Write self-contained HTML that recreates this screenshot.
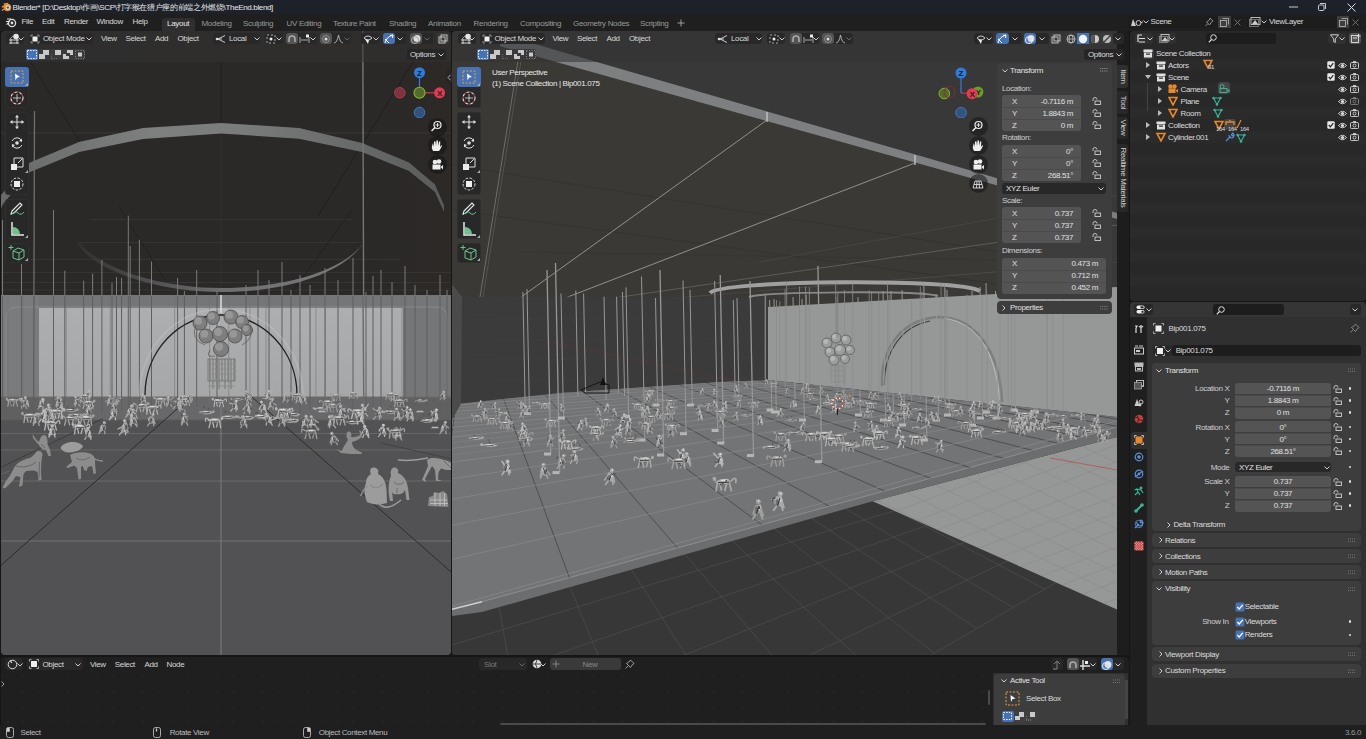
<!DOCTYPE html><html><head><meta charset="utf-8"><style>
*{margin:0;padding:0;box-sizing:border-box}
html,body{width:1366px;height:739px;overflow:hidden;background:#161616;font-family:"Liberation Sans",sans-serif;font-size:11px;color:#d6d6d6}
.a{position:absolute}
.t{position:absolute;white-space:nowrap;line-height:13px}
svg{position:absolute;left:0;top:0}
</style></head><body><div class="a" style="left:0px;top:0px;width:1366px;height:14px;background:#1d212a;border-radius:0px;"></div><svg class="a" style="left:1px;top:2px" width="11" height="10" viewBox="0 0 11 10"><circle cx="6.5" cy="5.5" r="3.8" fill="#f08a1d"/><path d="M1,5 L5,4 L3.5,2 L7,1.5 Z M0.8,8.5 L4,6.5" stroke="#f08a1d" stroke-width="1.3" fill="#f08a1d"/><circle cx="6.8" cy="5.5" r="2.2" fill="#f4f4f4"/><circle cx="6.8" cy="5.5" r="1.3" fill="#2c5f9e"/></svg><div class="t" style="left:12.5px;top:0.7000000000000002px;font-size:8px;color:#e8e8e8;letter-spacing:-0.35px;">Blender* [D:\Desktop\作画\SCP\打字猴在猎户座的前端之外燃烧\TheEnd.blend]</div><svg class="a" style="left:1289px;top:6px" width="9" height="2" viewBox="0 0 9 2"><path d="M0,1 L9,1" stroke="#ddd" stroke-width="0.9"/></svg><svg class="a" style="left:1318px;top:3px" width="8" height="8" viewBox="0 0 8 8"><rect x="0.5" y="2" width="5.5" height="5.5" rx="1" fill="none" stroke="#ddd" stroke-width="0.9"/><path d="M2,0.5 L7.5,0.5 L7.5,6" fill="none" stroke="#ddd" stroke-width="0.9"/></svg><svg class="a" style="left:1347px;top:2.5px" width="9" height="9" viewBox="0 0 9 9"><path d="M0.5,0.5 L8.5,8.5 M8.5,0.5 L0.5,8.5" stroke="#ddd" stroke-width="1"/></svg><div class="a" style="left:0px;top:14px;width:1366px;height:17px;background:#1f1f1f;border-radius:0px;"></div><svg class="a" style="left:5px;top:16px" width="12" height="12" viewBox="0 0 12 12"><circle cx="7" cy="7" r="3.6" fill="none" stroke="#ddd" stroke-width="1.3"/><circle cx="7" cy="7" r="1.4" fill="#ddd"/><path d="M1,5.5 L5,5.5 M2,3 L6,3 M1.5,8.5 L4,6.8" stroke="#ddd" stroke-width="1.2"/></svg><div class="t" style="left:21.5px;top:15.3px;font-size:8px;color:#dadada;letter-spacing:-0.35px;">File</div><div class="t" style="left:42px;top:15.3px;font-size:8px;color:#dadada;letter-spacing:-0.35px;">Edit</div><div class="t" style="left:64px;top:15.3px;font-size:8px;color:#dadada;letter-spacing:-0.35px;">Render</div><div class="t" style="left:96.5px;top:15.3px;font-size:8px;color:#dadada;letter-spacing:-0.35px;">Window</div><div class="t" style="left:132.5px;top:15.3px;font-size:8px;color:#dadada;letter-spacing:-0.35px;">Help</div><div class="a" style="left:162px;top:17.7px;width:33px;height:13.3px;background:#2f2f2f;border-radius:3px;border-radius:3px 3px 0 0"></div><div class="t" style="left:167px;top:17.0px;font-size:8px;color:#e6e6e6;letter-spacing:-0.3px;">Layout</div><div class="t" style="left:201.5px;top:17.0px;font-size:8px;color:#999;letter-spacing:-0.3px;">Modeling</div><div class="t" style="left:243px;top:17.0px;font-size:8px;color:#999;letter-spacing:-0.3px;">Sculpting</div><div class="t" style="left:286.5px;top:17.0px;font-size:8px;color:#999;letter-spacing:-0.3px;">UV Editing</div><div class="t" style="left:333px;top:17.0px;font-size:8px;color:#999;letter-spacing:-0.3px;">Texture Paint</div><div class="t" style="left:389px;top:17.0px;font-size:8px;color:#999;letter-spacing:-0.3px;">Shading</div><div class="t" style="left:428px;top:17.0px;font-size:8px;color:#999;letter-spacing:-0.3px;">Animation</div><div class="t" style="left:473.5px;top:17.0px;font-size:8px;color:#999;letter-spacing:-0.3px;">Rendering</div><div class="t" style="left:520px;top:17.0px;font-size:8px;color:#999;letter-spacing:-0.3px;">Compositing</div><div class="t" style="left:573px;top:17.0px;font-size:8px;color:#999;letter-spacing:-0.3px;">Geometry Nodes</div><div class="t" style="left:640px;top:17.0px;font-size:8px;color:#999;letter-spacing:-0.3px;">Scripting</div><svg class="a" style="left:677px;top:19px" width="8" height="8" viewBox="0 0 8 8"><path d="M4,0.5 L4,7.5 M0.5,4 L7.5,4" stroke="#aaa" stroke-width="0.9"/></svg><div class="a" style="left:1128px;top:16px;width:114px;height:11.5px;background:#1d1d1d;border-radius:3px;"></div><svg class="a" style="left:1130px;top:17px" width="14" height="10" viewBox="0 0 14 10"><path d="M1,9 L3,2 L6,9 Z" fill="#ccc"/><circle cx="8.5" cy="6" r="2.5" fill="none" stroke="#ccc" stroke-width="1"/><path d="M11,6 L13,4.5" stroke="#ccc"/></svg><svg class="a" style="left:1142.5px;top:20px" width="6" height="4" viewBox="0 0 6 4"><path d="M0.5,0.5 L3,3 L5.5,0.5" fill="none" stroke="#cfcfcf" stroke-width="1"/></svg><div class="t" style="left:1150.5px;top:15.0px;font-size:8px;color:#dadada;letter-spacing:-0.35px;">Scene</div><svg class="a" style="left:1205px;top:17px" width="9" height="10" viewBox="0 0 9 10"><path d="M5,1 L8,4 L6.5,5 L4.5,8 L1.5,5 L4.5,3 Z M3,6.5 L0.5,9" fill="none" stroke="#aaa" stroke-width="0.8"/></svg><div class="a" style="left:1218.4px;top:16px;width:12.4px;height:11.5px;background:#3e3e3e;border-radius:0px;"></div><svg class="a" style="left:1220px;top:17.5px" width="10" height="9" viewBox="0 0 10 9"><rect x="0.5" y="2.5" width="6" height="6" fill="none" stroke="#bbb" stroke-width="0.8"/><path d="M2.5,0.5 L8.5,0.5 L8.5,6.5" fill="none" stroke="#bbb" stroke-width="0.8"/></svg><svg class="a" style="left:1233.5px;top:18.5px" width="7" height="7" viewBox="0 0 7 7"><path d="M0.5,0.5 L6.5,6.5 M6.5,0.5 L0.5,6.5" stroke="#777" stroke-width="0.9"/></svg><div class="a" style="left:1245.8px;top:16px;width:115.7px;height:11.5px;background:#1d1d1d;border-radius:3px;"></div><svg class="a" style="left:1249px;top:17px" width="13" height="10" viewBox="0 0 13 10"><rect x="2" y="0.5" width="9" height="7" fill="none" stroke="#ccc" stroke-width="0.9"/><path d="M3,7 L6,3 L9,7 Z" fill="#ccc"/><rect x="0.5" y="2.5" width="9" height="7" fill="none" stroke="#999" stroke-width="0.7"/></svg><svg class="a" style="left:1261px;top:20px" width="6" height="4" viewBox="0 0 6 4"><path d="M0.5,0.5 L3,3 L5.5,0.5" fill="none" stroke="#cfcfcf" stroke-width="1"/></svg><div class="t" style="left:1269px;top:15.0px;font-size:8px;color:#dadada;letter-spacing:-0.35px;">ViewLayer</div><div class="a" style="left:1337px;top:16px;width:12.4px;height:11.5px;background:#3e3e3e;border-radius:0px;"></div><svg class="a" style="left:1338.5px;top:17.5px" width="10" height="9" viewBox="0 0 10 9"><rect x="0.5" y="2.5" width="6" height="6" fill="none" stroke="#bbb" stroke-width="0.8"/><path d="M2.5,0.5 L8.5,0.5 L8.5,6.5" fill="none" stroke="#bbb" stroke-width="0.8"/></svg><svg class="a" style="left:1352px;top:18.5px" width="7" height="7" viewBox="0 0 7 7"><path d="M0.5,0.5 L6.5,6.5 M6.5,0.5 L0.5,6.5" stroke="#777" stroke-width="0.9"/></svg><div class="a" style="left:1px;top:31px;width:450px;height:624px;border-radius:4px;overflow:hidden"><svg width="450" height="624" viewBox="1 31 450 624"><defs>
<symbol id="base" viewBox="0 0 10 4"><path d="M1,1 L9,1 L10,3 L0,3 Z" fill="#b8b8b8"/></symbol>
</defs><defs><linearGradient id="lvbg" x1="0" x2="1" y1="0" y2="0"><stop offset="0" stop-color="#2a2928"/><stop offset="0.6" stop-color="#2a2927"/><stop offset="1" stop-color="#2c2927"/></linearGradient><linearGradient id="ring1" x1="0" x2="1"><stop offset="0" stop-color="#676969"/><stop offset="0.35" stop-color="#7e8080"/><stop offset="0.55" stop-color="#7a7c7c"/><stop offset="1" stop-color="#5a5c5c"/></linearGradient><linearGradient id="ring2" x1="0" x2="1"><stop offset="0" stop-color="#303030"/><stop offset="0.5" stop-color="#6e6e6e"/><stop offset="1" stop-color="#7a7a7a"/></linearGradient><linearGradient id="panel" x1="0" x2="0" y1="0" y2="1"><stop offset="0" stop-color="#adaeaf"/><stop offset="1" stop-color="#a6a7a8"/></linearGradient></defs><rect x="0" y="0" width="460" height="700" fill="url(#lvbg)"/><line x1="0" y1="133" x2="452" y2="133" stroke="#3d3c3a" stroke-width="0.8"/><line x1="90" y1="219.4" x2="352" y2="219.4" stroke="#393836" stroke-width="0.8"/><line x1="80" y1="242.4" x2="362" y2="242.4" stroke="#393836" stroke-width="0.8"/><line x1="30" y1="259.3" x2="400" y2="259.3" stroke="#393836" stroke-width="0.8"/><line x1="0" y1="272.4" x2="452" y2="272.4" stroke="#393836" stroke-width="0.8"/><line x1="0" y1="282.5" x2="452" y2="282.5" stroke="#393836" stroke-width="0.8"/><line x1="0" y1="290" x2="452" y2="290" stroke="#393836" stroke-width="0.8"/><line x1="28" y1="58" x2="80" y2="142" stroke="#1d1d1c" stroke-width="0.8"/><line x1="119" y1="206.7" x2="165" y2="280" stroke="#1e1e1d" stroke-width="0.7"/><line x1="418" y1="54" x2="318" y2="216" stroke="#1c1c1b" stroke-width="0.8"/><line x1="352" y1="210" x2="290" y2="295" stroke="#1e1e1d" stroke-width="0.7"/><line x1="221" y1="62" x2="221" y2="123" stroke="#1e1e1d" stroke-width="0.8"/><line x1="221" y1="133" x2="221" y2="288" stroke="#353432" stroke-width="0.7"/><polygon points="-5,215 0,196 30,162.5 79,142 143,128 221,123 299,128 362,143 409,162.4 435,184.4 444,205.5 444,211.7 435,192 409,171 362,152 299,138.7 221,133.4 143,139 79,152 30,172 3,204 -5,222" fill="url(#ring1)"/><path d="M76.5,238.5 C95,268 160,288 221,288 C290,288 350,268 366,239 L364,242 C345,272 290,292 221,292 C160,292 95,272 78,244 Z" fill="url(#ring2)"/><line x1="2.5" y1="220" x2="2.5" y2="420" stroke="#7b7b7b" stroke-width="1"/><line x1="21.5" y1="264" x2="21.5" y2="420" stroke="#7b7b7b" stroke-width="1"/><line x1="53.5" y1="210" x2="53.5" y2="420" stroke="#7b7b7b" stroke-width="1"/><line x1="64.8" y1="270.7" x2="64.8" y2="420" stroke="#7b7b7b" stroke-width="1"/><line x1="83.7" y1="280.6" x2="83.7" y2="420" stroke="#7b7b7b" stroke-width="1"/><line x1="92.6" y1="273.6" x2="92.6" y2="420" stroke="#7b7b7b" stroke-width="1"/><line x1="101.9" y1="260" x2="101.9" y2="420" stroke="#7b7b7b" stroke-width="1"/><line x1="112" y1="282.7" x2="112" y2="420" stroke="#7b7b7b" stroke-width="1"/><line x1="116.5" y1="277" x2="116.5" y2="420" stroke="#7b7b7b" stroke-width="1"/><line x1="121.6" y1="278" x2="121.6" y2="420" stroke="#7b7b7b" stroke-width="1"/><line x1="128.3" y1="215.7" x2="128.3" y2="420" stroke="#7b7b7b" stroke-width="1"/><line x1="130.2" y1="246" x2="130.2" y2="420" stroke="#7b7b7b" stroke-width="1"/><line x1="139.4" y1="239.7" x2="139.4" y2="420" stroke="#7b7b7b" stroke-width="1"/><line x1="151.5" y1="261.5" x2="151.5" y2="420" stroke="#7b7b7b" stroke-width="1"/><line x1="177.6" y1="278" x2="177.6" y2="420" stroke="#7b7b7b" stroke-width="1"/><line x1="184.4" y1="291" x2="184.4" y2="420" stroke="#7b7b7b" stroke-width="1"/><line x1="196.7" y1="270" x2="196.7" y2="420" stroke="#7b7b7b" stroke-width="1"/><line x1="217" y1="291" x2="217" y2="420" stroke="#7b7b7b" stroke-width="1"/><line x1="246" y1="285" x2="246" y2="420" stroke="#7b7b7b" stroke-width="1"/><line x1="258" y1="270" x2="258" y2="420" stroke="#7b7b7b" stroke-width="1"/><line x1="269" y1="280" x2="269" y2="420" stroke="#7b7b7b" stroke-width="1"/><line x1="282" y1="262" x2="282" y2="420" stroke="#7b7b7b" stroke-width="1"/><line x1="291" y1="290" x2="291" y2="420" stroke="#7b7b7b" stroke-width="1"/><line x1="300" y1="275" x2="300" y2="420" stroke="#7b7b7b" stroke-width="1"/><line x1="310" y1="285" x2="310" y2="420" stroke="#7b7b7b" stroke-width="1"/><line x1="325" y1="268" x2="325" y2="420" stroke="#7b7b7b" stroke-width="1"/><line x1="338" y1="280" x2="338" y2="420" stroke="#7b7b7b" stroke-width="1"/><line x1="353" y1="258" x2="353" y2="420" stroke="#7b7b7b" stroke-width="1"/><line x1="366" y1="292" x2="366" y2="420" stroke="#7b7b7b" stroke-width="1"/><line x1="373" y1="276" x2="373" y2="420" stroke="#7b7b7b" stroke-width="1"/><line x1="381" y1="270" x2="381" y2="420" stroke="#7b7b7b" stroke-width="1"/><line x1="392" y1="282" x2="392" y2="420" stroke="#7b7b7b" stroke-width="1"/><line x1="405" y1="266" x2="405" y2="420" stroke="#7b7b7b" stroke-width="1"/><line x1="415" y1="285" x2="415" y2="420" stroke="#7b7b7b" stroke-width="1"/><line x1="427" y1="290" x2="427" y2="420" stroke="#7b7b7b" stroke-width="1"/><line x1="440" y1="275" x2="440" y2="420" stroke="#7b7b7b" stroke-width="1"/><line x1="447" y1="290" x2="447" y2="420" stroke="#7b7b7b" stroke-width="1"/><line x1="34.5" y1="111" x2="33.5" y2="420" stroke="#6f6f6f" stroke-width="1.3"/><line x1="362.8" y1="31" x2="364" y2="430" stroke="#767676" stroke-width="1.4"/><rect x="0" y="295" width="39" height="102" fill="#7a7b7c"/><rect x="39" y="295" width="413" height="102" fill="#757677"/><path d="M-2,420 L6,420 L6,318 Q6,307 17,307 L436,307 Q447,307 447,318 L447,420" fill="none" stroke="#8a8b8c" stroke-width="1"/><rect x="39" y="308" width="364" height="89" fill="url(#panel)"/><rect x="0" y="397" width="452" height="23" fill="#606061"/><rect x="39" y="397" width="364" height="23" fill="#68686a"/><rect x="0" y="420" width="452" height="240" fill="#525254"/><line x1="0" y1="397" x2="452" y2="397" stroke="#6c6c6c" stroke-width="1"/><line x1="0" y1="420" x2="452" y2="420" stroke="#5a5a5a" stroke-width="1"/><line x1="0" y1="433.5" x2="452" y2="433.5" stroke="#676767" stroke-width="1"/><line x1="0" y1="450" x2="452" y2="450" stroke="#686868" stroke-width="1"/><line x1="0" y1="481" x2="452" y2="481" stroke="#6a6a6a" stroke-width="1"/><line x1="0" y1="541" x2="452" y2="541" stroke="#707070" stroke-width="1"/><line x1="221" y1="397" x2="221" y2="655" stroke="#7a7a7a" stroke-width="1.1"/><line x1="190.6" y1="397" x2="-100" y2="655" stroke="#2c2c2c" stroke-width="1"/><line x1="251.9" y1="397" x2="540" y2="650" stroke="#2c2c2c" stroke-width="1"/><line x1="102.8" y1="418.7" x2="0" y2="467.6" stroke="#3a3a3a" stroke-width="0.9"/><line x1="381" y1="443" x2="452" y2="459" stroke="#3f3f3f" stroke-width="0.8"/><line x1="2.5" y1="296" x2="2.5" y2="410.0" stroke="#5f5f60" stroke-width="1"/><line x1="21.5" y1="296" x2="21.5" y2="406.0" stroke="#5f5f60" stroke-width="1"/><line x1="53.5" y1="296" x2="53.5" y2="414.0" stroke="#5f5f60" stroke-width="1"/><line x1="64.8" y1="296" x2="64.8" y2="408.6" stroke="#5f5f60" stroke-width="1"/><line x1="83.7" y1="296" x2="83.7" y2="418.4" stroke="#5f5f60" stroke-width="1"/><line x1="92.6" y1="296" x2="92.6" y2="408.2" stroke="#5f5f60" stroke-width="1"/><line x1="101.9" y1="296" x2="101.9" y2="412.8" stroke="#5f5f60" stroke-width="1"/><line x1="112" y1="296" x2="112" y2="405" stroke="#5f5f60" stroke-width="1"/><line x1="116.5" y1="296" x2="116.5" y2="414.0" stroke="#5f5f60" stroke-width="1"/><line x1="121.6" y1="296" x2="121.6" y2="410.2" stroke="#5f5f60" stroke-width="1"/><line x1="128.3" y1="296" x2="128.3" y2="409.6" stroke="#5f5f60" stroke-width="1"/><line x1="130.2" y1="296" x2="130.2" y2="413.4" stroke="#5f5f60" stroke-width="1"/><line x1="139.4" y1="296" x2="139.4" y2="417.8" stroke="#5f5f60" stroke-width="1"/><line x1="151.5" y1="296" x2="151.5" y2="414.0" stroke="#5f5f60" stroke-width="1"/><line x1="177.6" y1="296" x2="177.6" y2="410.2" stroke="#5f5f60" stroke-width="1"/><line x1="184.4" y1="296" x2="184.4" y2="409.8" stroke="#5f5f60" stroke-width="1"/><line x1="196.7" y1="296" x2="196.7" y2="406.4" stroke="#5f5f60" stroke-width="1"/><line x1="217" y1="296" x2="217" y2="405" stroke="#5f5f60" stroke-width="1"/><line x1="246" y1="296" x2="246" y2="407" stroke="#5f5f60" stroke-width="1"/><line x1="258" y1="296" x2="258" y2="417" stroke="#5f5f60" stroke-width="1"/><line x1="269" y1="296" x2="269" y2="411" stroke="#5f5f60" stroke-width="1"/><line x1="282" y1="296" x2="282" y2="409" stroke="#5f5f60" stroke-width="1"/><line x1="291" y1="296" x2="291" y2="413" stroke="#5f5f60" stroke-width="1"/><line x1="300" y1="296" x2="300" y2="417" stroke="#5f5f60" stroke-width="1"/><line x1="310" y1="296" x2="310" y2="409" stroke="#5f5f60" stroke-width="1"/><line x1="325" y1="296" x2="325" y2="411" stroke="#5f5f60" stroke-width="1"/><line x1="338" y1="296" x2="338" y2="409" stroke="#5f5f60" stroke-width="1"/><line x1="353" y1="296" x2="353" y2="411" stroke="#5f5f60" stroke-width="1"/><line x1="366" y1="296" x2="366" y2="409" stroke="#5f5f60" stroke-width="1"/><line x1="373" y1="296" x2="373" y2="409" stroke="#5f5f60" stroke-width="1"/><line x1="381" y1="296" x2="381" y2="411" stroke="#5f5f60" stroke-width="1"/><line x1="392" y1="296" x2="392" y2="405" stroke="#5f5f60" stroke-width="1"/><line x1="405" y1="296" x2="405" y2="417" stroke="#5f5f60" stroke-width="1"/><line x1="415" y1="296" x2="415" y2="409" stroke="#5f5f60" stroke-width="1"/><line x1="427" y1="296" x2="427" y2="405" stroke="#5f5f60" stroke-width="1"/><line x1="440" y1="296" x2="440" y2="417" stroke="#5f5f60" stroke-width="1"/><line x1="447" y1="296" x2="447" y2="417" stroke="#5f5f60" stroke-width="1"/><line x1="34" y1="296" x2="33.6" y2="420" stroke="#5e5e5e" stroke-width="1.3"/><line x1="363" y1="296" x2="364" y2="432" stroke="#6a6a6a" stroke-width="1.4"/><line x1="209.6" y1="296" x2="209.6" y2="404.3" stroke="#747474" stroke-width="0.8" opacity="0.7"/><line x1="66.2" y1="296" x2="66.2" y2="412.7" stroke="#747474" stroke-width="0.8" opacity="0.7"/><line x1="7.8" y1="296" x2="7.8" y2="406.5" stroke="#747474" stroke-width="0.8" opacity="0.7"/><line x1="402.0" y1="296" x2="402.0" y2="399.4" stroke="#747474" stroke-width="0.8" opacity="0.7"/><line x1="250.0" y1="296" x2="250.0" y2="408.5" stroke="#747474" stroke-width="0.8" opacity="0.7"/><line x1="23.1" y1="296" x2="23.1" y2="404.4" stroke="#747474" stroke-width="0.8" opacity="0.7"/><line x1="315.9" y1="296" x2="315.9" y2="405.7" stroke="#747474" stroke-width="0.8" opacity="0.7"/><line x1="325.5" y1="296" x2="325.5" y2="400.7" stroke="#747474" stroke-width="0.8" opacity="0.7"/><line x1="110.2" y1="296" x2="110.2" y2="399.9" stroke="#747474" stroke-width="0.8" opacity="0.7"/><line x1="228.8" y1="296" x2="228.8" y2="413.7" stroke="#747474" stroke-width="0.8" opacity="0.7"/><line x1="266.0" y1="296" x2="266.0" y2="411.2" stroke="#747474" stroke-width="0.8" opacity="0.7"/><line x1="174.6" y1="296" x2="174.6" y2="410.7" stroke="#747474" stroke-width="0.8" opacity="0.7"/><path d="M139,397 A82,88 0 0 1 303,397" fill="none" stroke="#c8c8c8" stroke-width="1.8" opacity="0.35"/><path d="M145,395 A76,80 0 0 1 297,395" fill="none" stroke="#1e1e1e" stroke-width="1.3"/><circle cx="200" cy="323" r="7" fill="#7e7e7e" stroke="#4d4d4d" stroke-width="0.8"/><circle cx="198.25" cy="320.9" r="3.8500000000000005" fill="#979797"/><circle cx="213" cy="318" r="6.5" fill="#7e7e7e" stroke="#4d4d4d" stroke-width="0.8"/><circle cx="211.375" cy="316.05" r="3.575" fill="#979797"/><circle cx="231" cy="317" r="7" fill="#7e7e7e" stroke="#4d4d4d" stroke-width="0.8"/><circle cx="229.25" cy="314.9" r="3.8500000000000005" fill="#979797"/><circle cx="242" cy="322" r="6.5" fill="#7e7e7e" stroke="#4d4d4d" stroke-width="0.8"/><circle cx="240.375" cy="320.05" r="3.575" fill="#979797"/><circle cx="247" cy="330" r="5.5" fill="#7e7e7e" stroke="#4d4d4d" stroke-width="0.8"/><circle cx="245.625" cy="328.35" r="3.0250000000000004" fill="#979797"/><circle cx="206" cy="336" r="7" fill="#7e7e7e" stroke="#4d4d4d" stroke-width="0.8"/><circle cx="204.25" cy="333.9" r="3.8500000000000005" fill="#979797"/><circle cx="220" cy="334" r="7.5" fill="#7e7e7e" stroke="#4d4d4d" stroke-width="0.8"/><circle cx="218.125" cy="331.75" r="4.125" fill="#979797"/><circle cx="235" cy="336" r="7" fill="#7e7e7e" stroke="#4d4d4d" stroke-width="0.8"/><circle cx="233.25" cy="333.9" r="3.8500000000000005" fill="#979797"/><circle cx="221" cy="349" r="7.5" fill="#7e7e7e" stroke="#4d4d4d" stroke-width="0.8"/><circle cx="219.125" cy="346.75" r="4.125" fill="#979797"/><path d="M196,325 Q190,340 205,345 M250,325 Q255,338 242,345 M210,350 Q205,358 215,356" fill="none" stroke="#555" stroke-width="0.7"/><rect x="208" y="359" width="27" height="22" fill="none" stroke="#7a7a7a" stroke-width="1"/><line x1="210" y1="359" x2="210" y2="381" stroke="#6e6e6e" stroke-width="0.9"/><line x1="213" y1="359" x2="213" y2="389" stroke="#6e6e6e" stroke-width="0.9"/><line x1="216" y1="359" x2="216" y2="381" stroke="#6e6e6e" stroke-width="0.9"/><line x1="219" y1="359" x2="219" y2="389" stroke="#6e6e6e" stroke-width="0.9"/><line x1="222" y1="359" x2="222" y2="381" stroke="#6e6e6e" stroke-width="0.9"/><line x1="225" y1="359" x2="225" y2="389" stroke="#6e6e6e" stroke-width="0.9"/><line x1="228" y1="359" x2="228" y2="381" stroke="#6e6e6e" stroke-width="0.9"/><line x1="231" y1="359" x2="231" y2="389" stroke="#6e6e6e" stroke-width="0.9"/><line x1="234" y1="359" x2="234" y2="381" stroke="#6e6e6e" stroke-width="0.9"/><line x1="208" y1="364" x2="235" y2="364" stroke="#8a8a8a" stroke-width="0.9"/><line x1="208" y1="369" x2="235" y2="369" stroke="#8a8a8a" stroke-width="0.9"/><line x1="208" y1="374" x2="235" y2="374" stroke="#8a8a8a" stroke-width="0.9"/><line x1="208" y1="380" x2="235" y2="380" stroke="#8a8a8a" stroke-width="0.9"/><line x1="208" y1="386" x2="235" y2="386" stroke="#8a8a8a" stroke-width="0.9"/><line x1="221" y1="295" x2="221" y2="313" stroke="#e0e0e0" stroke-width="1.5"/><path d="" stroke="#a2a2a2" stroke-width="1.24" fill="none" stroke-linecap="round"/><path d="M214.0,412.3 L210.5,414.1 L205.0,414.4 L199.5,413.6 L199.3,411.4 L204.4,410.8 L210.6,410.9ZM215.0,411.8 L213.7,412.9 L212.3,412.9 L212.2,410.7 L213.8,410.2Z" fill="#a2a2a2"/><path d="" fill="#6e6e6e"/><path d="M208.5,411.6 L206.7,412.2 L203.4,412.2 L203.1,411.4 L206.9,411.2Z" fill="#dadada"/><path d="M200.5,413.3 L210.0,412.3M204.3,407.7 l-0.8,-1.6M207.7,408.9 l1.3,-0.4" stroke="#3c3c3c" stroke-width="0.74" fill="none"/><path d="" stroke="#a9a9a9" stroke-width="1.30" fill="none" stroke-linecap="round"/><path d="M433.7,420.8 L430.7,422.6 L425.1,422.7 L420.1,421.7 L421.3,420.5 L424.3,418.8 L430.9,419.2ZM436.4,419.9 L435.4,421.8 L433.7,421.2 L433.7,418.9 L435.3,418.7Z" fill="#a9a9a9"/><path d="" fill="#6e6e6e"/><path d="M430.6,420.1 L428.5,420.8 L423.6,420.5 L424.9,419.8 L427.4,419.4Z" fill="#dadada"/><path d="M421.2,421.9 L431.2,420.8M427.8,415.0 l1.9,-1.1M424.8,419.8 l-0.7,-0.8M423.3,415.0 l0.3,-1.0" stroke="#3c3c3c" stroke-width="0.78" fill="none"/><path d="M270.2,406.3 L268.0,409.2 M272.9,406.3 L273.2,409.2M272.9,402.4 L276.3,405.2M270.2,402.7 L268.7,407.5" stroke="#a2a2a2" stroke-width="1.12" fill="none" stroke-linecap="round"/><path d="M274.2,403.6 L272.7,406.9 L270.3,407.3 L269.1,403.8 L270.2,401.0 L273.0,401.4ZM274.3,399.6 L272.9,401.5 L271.4,400.8 L271.3,398.5 L272.8,398.1Z" fill="#a2a2a2"/><path d="M273.6,404.6 L273.1,406.5 L271.8,406.0 L271.8,403.1 L273.0,401.9Z" fill="#6e6e6e"/><path d="M271.6,402.7 L271.1,404.2 L270.2,404.1 L270.4,401.9 L271.0,401.3ZM273.0,399.2 L272.3,400.1 L271.5,399.2 L272.3,398.6Z" fill="#dadada"/><path d="M270.9,401.9 L272.4,406.3M273.9,401.4 l0.5,-0.1M272.3,403.3 l1.7,-1.4" stroke="#3c3c3c" stroke-width="0.67" fill="none"/><path d="" stroke="#9e9e9e" stroke-width="1.30" fill="none" stroke-linecap="round"/><path d="M255.0,417.6 L251.1,419.8 L245.0,420.0 L239.1,418.4 L240.3,416.9 L245.1,415.8 L250.6,415.9ZM240.2,417.2 L238.8,418.3 L237.1,417.7 L237.0,415.9 L238.7,415.2Z" fill="#9e9e9e"/><path d="" fill="#6e6e6e"/><path d="M250.0,416.7 L247.6,417.4 L243.9,417.2 L243.7,416.4 L247.2,416.3Z" fill="#dadada"/><path d="M241.2,418.6 L251.2,417.5M243.9,415.4 l0.1,1.0M245.4,417.7 l-0.0,-1.0" stroke="#3c3c3c" stroke-width="0.78" fill="none"/><path d="M181.1,400.3 L180.2,405.5 M182.4,400.3 L183.5,405.0 M188.3,400.3 L189.7,405.5 M186.9,400.3 L185.6,405.3M189.7,399.2 Q193.1,396.1 192.4,400.3" stroke="#a2a2a2" stroke-width="1.05" fill="none" stroke-linecap="round"/><path d="M189.4,399.5 L188.5,401.5 L183.1,401.2 L178.9,399.9 L182.1,398.6 L188.7,398.1ZM180.5,398.0 L179.4,399.7 L178.1,399.0 L178.0,397.2 L179.8,396.9Z" fill="#a2a2a2"/><path d="" fill="#6e6e6e"/><path d="M188.0,399.0 L186.0,399.6 L182.8,399.3 L182.4,398.6 L185.8,398.4Z" fill="#dadada"/><path d="M181.5,400.5 L188.3,400.3M184.6,398.3 l1.0,-0.8M182.6,398.4 l0.4,-0.2" stroke="#3c3c3c" stroke-width="0.63" fill="none"/><path d="M278.6,411.2 L277.6,417.7 M280.3,411.2 L281.6,417.0 M287.5,411.2 L289.2,417.7 M285.8,411.2 L284.1,417.4M289.2,409.9 Q293.4,406.0 292.5,411.2" stroke="#b6b6b6" stroke-width="1.29" fill="none" stroke-linecap="round"/><path d="M289.6,410.3 L286.4,412.0 L279.9,412.7 L277.5,410.8 L279.5,408.4 L286.7,408.4ZM277.9,408.8 L276.6,410.4 L274.9,410.0 L275.1,407.6 L276.7,406.9Z" fill="#b6b6b6"/><path d="" fill="#6e6e6e"/><path d="M286.4,409.8 L284.4,410.5 L279.8,410.1 L280.4,409.2 L284.0,408.8Z" fill="#dadada"/><path d="M279.1,411.4 L287.5,411.2M286.6,409.5 l-1.0,-0.4M280.1,410.8 l1.8,1.7M281.4,413.7 l-1.9,0.0" stroke="#3c3c3c" stroke-width="0.78" fill="none"/><path d="M21.9,405.5 L21.5,408.3 M24.5,405.5 L26.7,408.3M21.9,401.6 L19.4,399.5M24.5,402.0 L25.9,406.6" stroke="#a2a2a2" stroke-width="1.11" fill="none" stroke-linecap="round"/><path d="M25.4,403.6 L24.1,405.9 L21.8,406.6 L20.8,403.7 L21.7,400.1 L25.0,400.5ZM23.3,399.1 L22.2,400.3 L20.0,399.7 L20.0,398.0 L22.4,397.4Z" fill="#a2a2a2"/><path d="M23.2,404.3 L22.2,405.9 L21.3,405.5 L21.0,402.5 L22.5,401.6Z" fill="#6e6e6e"/><path d="M24.6,402.2 L24.0,403.5 L23.1,402.9 L23.1,401.2 L24.1,400.6ZM22.5,398.6 L21.9,399.2 L21.2,398.4 L21.9,397.9Z" fill="#dadada"/><path d="M23.7,401.1 L22.3,405.5M23.2,406.0 l1.4,1.4" stroke="#3c3c3c" stroke-width="0.66" fill="none"/><path d="" stroke="#a2a2a2" stroke-width="0.97" fill="none" stroke-linecap="round"/><path d="M243.8,399.3 L241.1,400.3 L236.7,401.1 L232.8,400.2 L233.4,399.0 L236.8,398.4 L240.5,398.5ZM232.5,398.7 L231.7,399.9 L230.4,399.6 L230.4,398.4 L231.8,397.7Z" fill="#a2a2a2"/><path d="" fill="#6e6e6e"/><path d="M240.2,398.9 L238.2,399.4 L235.4,399.2 L235.4,398.5 L238.0,398.4Z" fill="#dadada"/><path d="M233.4,400.1 L240.8,399.3M235.8,399.8 l1.1,-1.1" stroke="#3c3c3c" stroke-width="0.58" fill="none"/><path d="M112.2,416.5 L109.3,419.8 M115.3,416.5 L115.5,419.8M115.3,412.0 L116.7,411.5M112.2,412.4 L110.5,417.8" stroke="#b6b6b6" stroke-width="1.30" fill="none" stroke-linecap="round"/><path d="M117.3,414.0 L115.8,417.2 L112.1,416.6 L110.7,413.8 L112.6,410.5 L115.7,410.6ZM117.2,408.5 L116.2,410.3 L113.9,410.1 L114.1,407.7 L116.1,407.2Z" fill="#b6b6b6"/><path d="M116.6,414.4 L115.3,417.8 L114.2,416.0 L114.0,412.6 L115.6,412.1Z" fill="#6e6e6e"/><path d="M113.8,412.6 L113.3,414.3 L112.3,413.5 L112.2,411.7 L113.2,410.9ZM115.9,408.5 L115.2,409.2 L114.4,408.4 L115.2,407.5Z" fill="#dadada"/><path d="M113.1,411.3 L114.8,416.5M116.0,414.8 l-1.2,0.3M111.4,416.1 l-0.9,-1.5M114.5,411.8 l1.7,-1.4" stroke="#3c3c3c" stroke-width="0.78" fill="none"/><path d="M147.7,408.0 L146.8,414.2 M149.3,408.0 L150.6,413.6 M156.1,408.0 L157.7,414.2 M154.6,408.0 L153.0,413.9M157.7,406.8 Q161.7,403.2 160.9,408.0" stroke="#b6b6b6" stroke-width="1.22" fill="none" stroke-linecap="round"/><path d="M158.7,407.3 L155.8,409.0 L149.8,409.0 L145.8,407.6 L149.7,405.7 L156.3,405.6ZM147.2,405.5 L145.9,407.1 L144.1,406.7 L144.2,404.5 L146.2,403.9Z" fill="#b6b6b6"/><path d="" fill="#6e6e6e"/><path d="M155.4,406.4 L152.8,407.2 L150.1,407.0 L149.5,406.2 L152.6,405.9Z" fill="#dadada"/><path d="M148.2,408.3 L156.1,408.0M152.5,409.0 l1.7,0.2M155.8,409.9 l1.1,-1.6" stroke="#3c3c3c" stroke-width="0.73" fill="none"/><path d="" stroke="#a9a9a9" stroke-width="1.30" fill="none" stroke-linecap="round"/><path d="M278.6,418.3 L273.1,420.2 L267.2,420.3 L263.0,419.2 L262.8,417.7 L267.5,416.5 L274.2,416.5ZM279.0,417.6 L278.1,419.0 L276.0,418.4 L275.9,416.6 L277.5,416.1Z" fill="#a9a9a9"/><path d="" fill="#6e6e6e"/><path d="M272.5,417.5 L269.8,418.1 L266.6,417.8 L266.9,417.1 L270.2,417.0Z" fill="#dadada"/><path d="M263.7,419.2 L273.7,418.2M272.5,416.8 l-0.1,1.9" stroke="#3c3c3c" stroke-width="0.78" fill="none"/><path d="M362.4,413.0 L361.7,416.1 M365.4,413.0 L367.7,416.1M365.4,408.5 L368.4,404.2M362.4,408.9 L360.8,414.2" stroke="#a9a9a9" stroke-width="1.26" fill="none" stroke-linecap="round"/><path d="M366.9,410.9 L365.8,413.3 L362.8,413.8 L360.6,410.3 L362.6,407.2 L366.0,407.0ZM364.5,405.6 L363.2,407.0 L360.9,406.8 L360.9,404.2 L362.9,403.4Z" fill="#a9a9a9"/><path d="M366.3,410.7 L365.8,413.5 L364.3,412.6 L364.0,409.2 L365.5,408.2Z" fill="#6e6e6e"/><path d="M363.9,409.0 L363.6,410.6 L362.4,410.5 L362.6,408.0 L363.4,407.0ZM362.8,405.0 L362.2,405.8 L361.2,405.1 L362.2,404.3Z" fill="#dadada"/><path d="M363.3,407.9 L364.9,413.0M367.5,412.6 l-0.2,0.9M364.1,408.3 l-1.3,1.3M365.6,409.3 l1.0,1.2" stroke="#3c3c3c" stroke-width="0.76" fill="none"/><path d="M86.9,414.4 L85.1,417.6 M90.0,414.4 L91.2,417.6M90.0,409.9 L93.7,405.6M86.9,410.2 L85.2,415.7" stroke="#a9a9a9" stroke-width="1.29" fill="none" stroke-linecap="round"/><path d="M91.8,411.7 L89.7,415.3 L86.9,414.3 L84.7,412.1 L86.8,408.1 L90.2,408.1ZM90.4,406.8 L89.3,408.8 L87.2,407.7 L87.2,405.1 L89.2,405.0Z" fill="#a9a9a9"/><path d="M91.2,412.2 L90.3,415.2 L88.6,414.6 L88.7,411.0 L90.3,409.3Z" fill="#6e6e6e"/><path d="M88.6,410.6 L87.9,412.6 L87.0,411.7 L86.9,409.6 L87.8,408.9ZM89.1,406.2 L88.2,406.9 L87.6,406.4 L88.2,405.6Z" fill="#dadada"/><path d="M87.8,409.2 L89.5,414.4M85.0,412.5 l1.1,-1.6M85.1,413.8 l1.5,-1.6" stroke="#3c3c3c" stroke-width="0.78" fill="none"/><path d="M284.5,399.9 L282.6,402.3 M286.8,399.9 L287.3,402.3M286.8,396.4 L288.3,400.6M284.5,396.7 L283.2,400.8" stroke="#a2a2a2" stroke-width="0.99" fill="none" stroke-linecap="round"/><path d="M288.4,397.9 L286.9,400.2 L283.9,400.3 L283.1,397.9 L284.5,395.0 L287.2,395.7ZM287.9,394.1 L286.9,395.2 L285.0,394.8 L285.3,393.2 L286.7,392.5Z" fill="#a2a2a2"/><path d="M287.7,398.7 L286.8,400.8 L285.6,399.6 L285.9,396.7 L287.0,396.1Z" fill="#6e6e6e"/><path d="M285.7,396.7 L285.4,398.3 L284.5,397.5 L284.4,396.3 L285.3,395.3ZM286.6,393.5 L286.2,394.2 L285.5,393.7 L286.1,393.1Z" fill="#dadada"/><path d="M285.1,395.9 L286.4,399.9M287.4,397.6 l1.2,1.3" stroke="#3c3c3c" stroke-width="0.59" fill="none"/><path d="M280.1,423.0 L278.6,426.3 M283.2,423.0 L284.8,426.3M280.1,418.5 L277.2,415.8M283.2,418.8 L284.9,424.3" stroke="#a2a2a2" stroke-width="1.30" fill="none" stroke-linecap="round"/><path d="M285.0,421.2 L282.7,423.4 L279.7,423.3 L278.9,420.8 L280.1,416.1 L283.8,416.9ZM283.4,415.1 L282.2,417.2 L279.7,416.0 L279.7,413.9 L281.8,413.6Z" fill="#a2a2a2"/><path d="M281.4,421.3 L280.6,424.3 L279.0,422.6 L279.4,419.6 L280.8,417.9Z" fill="#6e6e6e"/><path d="M283.5,418.8 L282.8,420.6 L281.7,420.4 L281.6,417.8 L282.7,417.6ZM282.4,414.9 L281.6,415.4 L281.0,414.9 L281.7,414.0Z" fill="#dadada"/><path d="M282.3,417.8 L280.6,423.0M279.6,421.0 l0.1,-1.3M284.5,419.4 l-0.7,-1.7" stroke="#3c3c3c" stroke-width="0.78" fill="none"/><path d="M145.9,406.1 L146.8,412.0 M144.4,406.1 L143.1,411.4 M137.8,406.1 L136.2,412.0 M139.3,406.1 L140.8,411.8M136.2,404.9 Q132.4,401.4 133.2,406.1" stroke="#a9a9a9" stroke-width="1.18" fill="none" stroke-linecap="round"/><path d="M147.1,405.2 L145.1,407.7 L137.8,407.3 L136.2,405.9 L139.4,403.8 L144.6,403.7ZM149.8,403.4 L148.3,405.1 L146.8,404.5 L146.7,402.9 L148.4,402.3Z" fill="#a9a9a9"/><path d="" fill="#6e6e6e"/><path d="M144.9,404.7 L142.7,405.3 L139.1,405.0 L139.4,404.2 L142.7,404.1Z" fill="#dadada"/><path d="M137.8,406.4 L145.4,406.1M138.7,404.7 l-1.4,0.6M143.1,404.9 l-0.3,1.2" stroke="#3c3c3c" stroke-width="0.71" fill="none"/><path d="" stroke="#9e9e9e" stroke-width="0.95" fill="none" stroke-linecap="round"/><path d="M273.4,398.9 L271.4,400.2 L265.3,400.1 L263.1,399.6 L262.2,398.3 L266.7,397.5 L271.1,397.9ZM274.3,398.2 L273.6,399.6 L272.2,398.9 L272.1,397.8 L273.4,397.2Z" fill="#9e9e9e"/><path d="" fill="#6e6e6e"/><path d="M269.3,398.3 L267.8,398.7 L265.2,398.5 L265.3,398.1 L267.5,397.8Z" fill="#dadada"/><path d="M263.0,399.6 L270.4,398.8M265.0,397.8 l1.4,0.0M268.3,398.4 l-0.9,1.3M267.8,395.1 l-1.2,-0.7" stroke="#3c3c3c" stroke-width="0.57" fill="none"/><path d="" stroke="#b6b6b6" stroke-width="1.30" fill="none" stroke-linecap="round"/><path d="M269.0,416.4 L265.4,418.2 L259.0,418.6 L254.5,417.2 L254.7,415.6 L258.8,414.3 L263.5,415.3ZM269.3,415.9 L268.5,417.1 L266.8,416.4 L266.7,414.9 L268.8,414.3Z" fill="#b6b6b6"/><path d="" fill="#6e6e6e"/><path d="M263.6,415.6 L260.5,416.4 L257.3,416.2 L257.2,415.1 L261.1,415.0Z" fill="#dadada"/><path d="M254.5,417.4 L264.5,416.3M257.3,412.8 l-1.8,0.1" stroke="#3c3c3c" stroke-width="0.78" fill="none"/><path d="M58.5,407.3 L56.8,410.2 M61.2,407.3 L62.2,410.2M58.5,403.3 L56.7,404.7M61.2,403.7 L62.7,408.5" stroke="#b6b6b6" stroke-width="1.14" fill="none" stroke-linecap="round"/><path d="M62.9,404.8 L61.8,407.8 L58.6,408.8 L57.0,404.9 L58.3,402.0 L61.6,401.9ZM61.8,400.5 L60.3,402.1 L58.8,401.8 L58.8,399.2 L60.7,398.7Z" fill="#b6b6b6"/><path d="M59.8,405.8 L58.8,408.4 L57.7,406.7 L57.7,404.1 L59.2,403.3Z" fill="#6e6e6e"/><path d="M61.2,403.6 L60.8,405.5 L60.0,404.8 L59.9,402.8 L60.7,402.3ZM61.0,400.1 L60.6,400.9 L59.7,400.0 L60.5,399.5Z" fill="#dadada"/><path d="M60.4,402.7 L58.9,407.3M57.8,406.9 l0.2,1.4" stroke="#3c3c3c" stroke-width="0.69" fill="none"/><path d="M49.4,418.5 L47.8,421.8 M52.5,418.5 L53.9,421.8M49.4,414.0 L45.2,416.2M52.5,414.4 L54.2,419.8" stroke="#a9a9a9" stroke-width="1.30" fill="none" stroke-linecap="round"/><path d="M54.5,415.6 L52.8,418.5 L49.4,419.3 L48.2,415.9 L49.7,412.8 L52.3,412.5ZM52.9,410.6 L51.0,412.4 L49.0,411.8 L49.2,409.5 L51.2,408.6Z" fill="#a9a9a9"/><path d="M50.9,416.4 L50.3,419.4 L48.3,418.2 L48.4,415.0 L50.1,414.4Z" fill="#6e6e6e"/><path d="M52.8,414.5 L51.8,416.4 L50.9,416.0 L50.8,413.4 L52.1,412.9ZM52.0,410.2 L51.3,411.2 L50.3,410.4 L51.2,409.6Z" fill="#dadada"/><path d="M51.6,413.3 L49.9,418.5M50.1,417.4 l1.5,0.4M49.0,414.8 l1.7,0.7" stroke="#3c3c3c" stroke-width="0.78" fill="none"/><path d="M128.5,414.0 L125.8,417.2 M131.6,414.0 L131.8,417.2M131.6,409.5 L135.0,410.5M128.5,409.9 L126.8,415.3" stroke="#a9a9a9" stroke-width="1.28" fill="none" stroke-linecap="round"/><path d="M133.7,410.7 L132.2,414.4 L128.5,414.6 L127.3,411.3 L129.1,408.2 L131.4,407.5ZM133.7,405.9 L131.9,408.1 L130.3,407.3 L129.8,405.2 L132.4,404.2Z" fill="#a9a9a9"/><path d="M132.7,411.5 L132.0,415.0 L130.1,413.9 L130.5,410.7 L131.8,410.0Z" fill="#6e6e6e"/><path d="M130.3,410.2 L129.7,411.8 L128.5,411.2 L128.4,409.1 L129.6,408.5ZM132.1,405.9 L131.2,406.6 L130.4,406.0 L131.1,405.2Z" fill="#dadada"/><path d="M129.4,408.9 L131.1,414.0M127.6,412.5 l0.4,1.2" stroke="#3c3c3c" stroke-width="0.77" fill="none"/><path d="" stroke="#a9a9a9" stroke-width="1.30" fill="none" stroke-linecap="round"/><path d="M235.9,417.4 L231.6,418.8 L227.5,419.1 L222.5,418.4 L221.3,416.4 L225.6,415.4 L232.4,415.4ZM237.7,416.3 L237.0,418.0 L234.8,417.3 L235.0,415.8 L236.7,415.1Z" fill="#a9a9a9"/><path d="" fill="#6e6e6e"/><path d="M230.8,416.5 L229.3,417.1 L225.6,416.7 L225.2,416.0 L228.5,415.9Z" fill="#dadada"/><path d="M222.7,418.1 L232.7,417.1M225.3,413.4 l-0.8,-0.3M224.8,410.8 l1.9,1.0M229.9,412.2 l-1.0,0.2" stroke="#3c3c3c" stroke-width="0.78" fill="none"/><path d="M113.3,408.9 L110.7,411.8 M116.2,408.9 L116.2,411.8M116.2,404.8 L118.2,403.3M113.3,405.1 L111.8,410.1" stroke="#9e9e9e" stroke-width="1.18" fill="none" stroke-linecap="round"/><path d="M117.1,406.7 L116.4,409.7 L113.8,409.7 L111.4,406.2 L113.2,402.9 L116.1,403.6ZM118.1,401.8 L117.1,403.8 L114.8,402.9 L115.0,401.0 L116.7,400.0Z" fill="#9e9e9e"/><path d="M117.0,407.5 L116.1,409.4 L115.1,408.6 L115.1,405.8 L116.1,404.9Z" fill="#6e6e6e"/><path d="M114.7,405.1 L114.4,406.9 L113.2,406.2 L113.4,404.5 L114.2,403.3ZM116.9,401.4 L116.0,402.3 L115.5,401.6 L116.1,400.9Z" fill="#dadada"/><path d="M114.2,404.2 L115.7,408.9M112.4,408.6 l0.1,-1.6M112.9,405.2 l-1.6,-1.2" stroke="#3c3c3c" stroke-width="0.71" fill="none"/><path d="M267.4,396.7 L265.9,399.0 M269.6,396.7 L270.2,399.0M269.6,393.4 L272.2,391.1M267.4,393.7 L266.2,397.6" stroke="#b6b6b6" stroke-width="0.92" fill="none" stroke-linecap="round"/><path d="M270.9,394.8 L269.8,397.1 L267.3,397.6 L266.2,394.4 L267.5,392.8 L269.6,392.6ZM270.3,391.2 L269.3,392.5 L268.1,391.9 L268.1,390.2 L269.6,390.0Z" fill="#b6b6b6"/><path d="M270.3,395.0 L269.7,396.9 L268.6,396.3 L268.9,394.3 L269.9,393.3Z" fill="#6e6e6e"/><path d="M268.6,393.9 L268.1,395.1 L267.5,394.5 L267.6,393.0 L268.2,392.7ZM269.4,390.9 L268.7,391.5 L268.3,390.8 L268.7,390.2Z" fill="#dadada"/><path d="M268.1,393.0 L269.3,396.7M269.3,392.6 l-0.3,-0.4M265.8,394.6 l-1.2,-0.0" stroke="#3c3c3c" stroke-width="0.55" fill="none"/><path d="M261.5,409.1 L261.1,412.1 M264.4,409.1 L266.6,412.1M261.5,405.0 L259.0,409.6M264.4,405.3 L265.9,410.3" stroke="#b6b6b6" stroke-width="1.18" fill="none" stroke-linecap="round"/><path d="M265.7,406.5 L264.8,410.0 L261.0,409.7 L260.2,406.9 L262.1,404.1 L264.4,404.2ZM263.1,402.3 L262.0,403.7 L260.1,402.9 L260.0,401.0 L261.6,400.4Z" fill="#b6b6b6"/><path d="M262.7,407.0 L262.1,409.9 L261.1,408.9 L260.8,405.9 L262.3,405.2Z" fill="#6e6e6e"/><path d="M264.3,405.8 L263.9,407.5 L263.0,406.3 L262.9,404.2 L264.0,403.7ZM262.2,401.6 L261.8,402.5 L261.0,401.8 L261.6,401.1Z" fill="#dadada"/><path d="M263.5,404.4 L262.0,409.1M261.6,407.8 l-0.0,0.2" stroke="#3c3c3c" stroke-width="0.71" fill="none"/><path d="M167.8,403.9 L166.8,406.6 M170.4,403.9 L171.8,406.6M170.4,400.1 L173.4,397.5M167.8,400.5 L166.4,405.0" stroke="#a2a2a2" stroke-width="1.07" fill="none" stroke-linecap="round"/><path d="M171.8,401.3 L170.5,403.8 L168.3,404.3 L166.9,401.5 L167.6,398.7 L170.2,399.3ZM170.1,397.4 L168.9,399.2 L167.1,398.2 L167.1,396.5 L169.2,395.8Z" fill="#a2a2a2"/><path d="M171.4,402.7 L170.6,404.2 L169.2,403.8 L169.2,400.9 L170.4,399.8Z" fill="#6e6e6e"/><path d="M169.3,400.6 L168.7,402.0 L167.9,401.9 L167.8,399.3 L168.6,399.0ZM168.9,397.1 L168.3,397.9 L167.7,397.0 L168.3,396.6Z" fill="#dadada"/><path d="M168.6,399.6 L170.0,403.9M167.5,401.2 l0.1,1.0" stroke="#3c3c3c" stroke-width="0.64" fill="none"/><path d="M183.1,421.9 L181.5,425.1 M186.2,421.9 L187.7,425.1M186.2,417.3 L187.3,416.3M183.1,417.7 L181.4,423.2" stroke="#a2a2a2" stroke-width="1.30" fill="none" stroke-linecap="round"/><path d="M188.0,419.9 L186.7,422.7 L183.3,422.2 L181.2,419.2 L182.9,416.4 L186.6,416.3ZM186.2,414.0 L185.2,415.7 L182.8,415.2 L182.9,413.3 L185.2,412.2Z" fill="#a2a2a2"/><path d="M187.3,420.3 L186.2,423.2 L185.1,421.4 L185.1,418.1 L186.3,417.5Z" fill="#6e6e6e"/><path d="M184.9,417.7 L184.0,419.9 L183.3,419.3 L183.1,416.8 L184.0,416.0ZM184.7,413.8 L184.1,414.4 L183.1,413.8 L184.0,412.8Z" fill="#dadada"/><path d="M184.0,416.7 L185.7,421.9M182.3,416.2 l-1.3,-1.5" stroke="#3c3c3c" stroke-width="0.78" fill="none"/><path d="M40.1,406.0 L37.8,408.8 M42.8,406.0 L43.1,408.8M42.8,402.1 L44.3,399.8M40.1,402.4 L38.7,407.1" stroke="#b6b6b6" stroke-width="1.12" fill="none" stroke-linecap="round"/><path d="M44.1,403.2 L42.5,406.5 L40.2,407.3 L38.9,403.8 L40.0,400.6 L43.3,400.8ZM44.3,399.3 L43.0,401.0 L41.5,400.2 L41.2,398.5 L43.3,397.8Z" fill="#b6b6b6"/><path d="M43.7,404.7 L42.8,406.6 L41.6,405.5 L41.7,403.4 L42.9,401.7Z" fill="#6e6e6e"/><path d="M41.5,402.4 L41.1,404.0 L40.3,403.6 L40.2,401.8 L40.9,401.0ZM43.0,398.9 L42.3,399.7 L41.9,398.9 L42.4,398.4Z" fill="#dadada"/><path d="M40.9,401.5 L42.4,406.0M38.0,407.0 l-0.2,1.5M38.7,403.5 l0.7,-1.1M39.1,405.1 l1.5,-0.6" stroke="#3c3c3c" stroke-width="0.67" fill="none"/><path d="M92.2,403.1 L93.1,408.7 M90.8,403.1 L89.6,408.2 M84.5,403.1 L83.1,408.7 M86.0,403.1 L87.4,408.5M83.1,402.0 Q79.5,398.7 80.2,403.1" stroke="#a9a9a9" stroke-width="1.11" fill="none" stroke-linecap="round"/><path d="M94.0,402.5 L91.6,404.3 L84.2,404.4 L82.7,402.5 L85.9,401.1 L91.8,400.9ZM95.8,400.9 L94.7,402.2 L93.1,401.9 L93.1,400.0 L94.4,399.4Z" fill="#a9a9a9"/><path d="" fill="#6e6e6e"/><path d="M91.2,401.8 L89.1,402.6 L86.1,402.3 L86.0,401.3 L88.9,401.1Z" fill="#dadada"/><path d="M84.5,403.4 L91.8,403.1M87.5,406.2 l-1.2,1.6M88.1,402.4 l1.1,0.5M91.1,406.0 l1.0,0.0" stroke="#3c3c3c" stroke-width="0.67" fill="none"/><path d="M441.7,397.6 L439.9,399.9 M443.9,397.6 L444.3,399.9M441.7,394.3 L440.5,395.8M443.9,394.6 L445.2,398.5" stroke="#a9a9a9" stroke-width="0.94" fill="none" stroke-linecap="round"/><path d="M445.2,395.7 L443.6,398.0 L441.8,398.4 L440.5,396.2 L441.9,393.1 L443.9,392.8ZM445.2,392.2 L444.3,393.1 L442.5,392.9 L442.5,391.0 L443.9,390.4Z" fill="#a9a9a9"/><path d="M442.9,396.5 L442.2,398.5 L441.2,397.1 L441.2,395.2 L442.0,394.3Z" fill="#6e6e6e"/><path d="M444.1,395.0 L443.7,396.1 L443.0,395.5 L442.9,394.1 L443.6,393.6ZM444.6,391.7 L444.0,392.2 L443.4,391.6 L443.9,391.2Z" fill="#dadada"/><path d="M443.3,393.8 L442.1,397.6M442.9,395.2 l-0.9,1.4M443.3,397.2 l-0.4,-0.5" stroke="#3c3c3c" stroke-width="0.56" fill="none"/><path d="M190.0,397.4 L190.8,402.4 M188.7,397.4 L187.7,401.9 M183.2,397.4 L181.9,402.4 M184.5,397.4 L185.8,402.2M181.9,396.5 Q178.7,393.5 179.3,397.4" stroke="#b6b6b6" stroke-width="0.99" fill="none" stroke-linecap="round"/><path d="M191.2,396.9 L189.3,398.8 L184.1,398.7 L181.4,397.1 L183.2,395.3 L188.8,395.1ZM193.1,395.6 L192.0,396.7 L190.7,396.1 L190.9,394.8 L192.1,394.3Z" fill="#b6b6b6"/><path d="" fill="#6e6e6e"/><path d="M189.4,396.2 L187.5,396.9 L184.5,396.5 L184.6,396.0 L187.5,395.8Z" fill="#dadada"/><path d="M183.2,397.6 L189.6,397.4M185.1,396.0 l1.1,0.8M184.1,399.0 l-0.1,-0.9" stroke="#3c3c3c" stroke-width="0.59" fill="none"/><path d="M350.0,393.9 L349.2,398.5 M351.1,393.9 L352.1,398.0 M356.2,393.9 L357.4,398.5 M355.0,393.9 L353.9,398.3M357.4,393.0 Q360.4,390.3 359.8,393.9" stroke="#a9a9a9" stroke-width="0.91" fill="none" stroke-linecap="round"/><path d="M358.5,393.4 L354.5,394.7 L350.8,394.8 L348.8,393.6 L350.6,392.0 L356.1,391.8ZM349.6,392.4 L348.8,393.3 L347.2,392.8 L347.6,391.4 L348.6,391.0Z" fill="#a9a9a9"/><path d="" fill="#6e6e6e"/><path d="M355.4,392.9 L353.5,393.3 L351.7,393.1 L351.1,392.5 L353.6,392.4Z" fill="#dadada"/><path d="M350.3,394.1 L356.2,393.9M354.3,396.1 l1.1,0.4M355.8,394.5 l1.0,-0.2M351.4,394.0 l-0.4,0.9" stroke="#3c3c3c" stroke-width="0.55" fill="none"/><path d="M391.5,398.9 L391.0,401.3 M393.9,398.9 L395.6,401.3M391.5,395.5 L389.1,393.3M393.9,395.8 L395.1,399.8" stroke="#a2a2a2" stroke-width="0.97" fill="none" stroke-linecap="round"/><path d="M394.9,397.2 L393.7,399.1 L391.6,399.0 L390.3,397.4 L391.2,394.3 L393.7,394.4ZM393.0,393.1 L392.0,394.6 L390.3,393.7 L390.4,392.5 L392.2,391.7Z" fill="#a2a2a2"/><path d="M392.6,397.1 L392.1,399.5 L390.9,398.9 L390.8,396.3 L391.9,394.9Z" fill="#6e6e6e"/><path d="M393.8,396.0 L393.6,397.1 L392.6,396.6 L392.9,395.1 L393.4,394.8ZM392.4,392.7 L391.8,393.3 L391.3,392.8 L392.0,392.1Z" fill="#dadada"/><path d="M393.2,395.0 L391.9,398.9M396.2,399.4 l-1.2,0.4M392.1,397.7 l-0.8,-1.2M395.1,396.6 l0.4,-0.5" stroke="#3c3c3c" stroke-width="0.58" fill="none"/><path d="M57.4,404.6 L56.3,407.3 M60.0,404.6 L61.4,407.3M60.0,400.8 L61.1,402.0M57.4,401.1 L55.9,405.7" stroke="#a9a9a9" stroke-width="1.09" fill="none" stroke-linecap="round"/><path d="M61.5,402.9 L59.6,404.8 L57.2,405.9 L55.9,402.4 L57.6,399.6 L59.9,400.1ZM59.8,397.8 L58.7,399.8 L56.8,399.2 L56.7,396.8 L58.6,396.6Z" fill="#a9a9a9"/><path d="M60.8,403.2 L60.3,405.6 L58.7,404.4 L58.7,401.7 L59.9,400.9Z" fill="#6e6e6e"/><path d="M58.7,401.1 L58.3,402.7 L57.6,402.4 L57.4,400.7 L58.2,399.5ZM58.4,397.8 L57.8,398.3 L57.0,397.8 L57.8,397.1Z" fill="#dadada"/><path d="M58.1,400.3 L59.5,404.6M59.6,399.8 l0.8,-0.3" stroke="#3c3c3c" stroke-width="0.65" fill="none"/><path d="M303.9,424.3 L301.8,427.5 M307.0,424.3 L307.9,427.5M307.0,419.7 L309.7,420.2M303.9,420.1 L302.2,425.6" stroke="#a9a9a9" stroke-width="1.30" fill="none" stroke-linecap="round"/><path d="M309.0,421.0 L307.1,425.6 L303.7,425.6 L301.8,421.3 L304.5,418.2 L307.6,418.3ZM308.0,416.2 L307.0,418.5 L304.6,417.2 L304.7,415.2 L306.8,414.4Z" fill="#a9a9a9"/><path d="M308.0,422.5 L307.1,425.3 L305.7,424.6 L305.7,421.1 L307.0,419.0Z" fill="#6e6e6e"/><path d="M305.7,420.4 L304.9,422.1 L304.0,422.0 L304.0,419.2 L305.1,418.5ZM306.6,416.1 L305.8,416.9 L305.0,416.2 L305.8,415.4Z" fill="#dadada"/><path d="M304.8,419.1 L306.5,424.3M302.9,420.3 l0.9,0.3M303.1,418.9 l1.3,-0.5" stroke="#3c3c3c" stroke-width="0.78" fill="none"/><path d="" stroke="#a9a9a9" stroke-width="1.16" fill="none" stroke-linecap="round"/><path d="M327.7,409.2 L324.8,410.1 L319.4,410.2 L314.2,409.9 L313.9,408.4 L319.7,407.1 L324.3,407.7ZM315.3,408.4 L314.0,409.2 L312.7,408.7 L312.6,407.4 L314.2,407.0Z" fill="#a9a9a9"/><path d="" fill="#6e6e6e"/><path d="M324.1,408.1 L321.6,408.8 L318.7,408.4 L318.9,407.6 L321.9,407.4Z" fill="#dadada"/><path d="M316.2,409.6 L325.2,408.7M324.5,403.6 l-0.5,-1.1M323.8,407.1 l-0.7,0.2M319.4,403.3 l-1.6,1.0" stroke="#3c3c3c" stroke-width="0.70" fill="none"/><path d="" stroke="#a2a2a2" stroke-width="0.99" fill="none" stroke-linecap="round"/><path d="M426.4,401.0 L424.2,402.1 L418.8,402.3 L413.9,401.3 L416.0,400.4 L420.0,399.4 L423.9,399.9ZM427.7,400.1 L426.8,401.5 L425.5,400.8 L425.6,399.5 L427.0,399.2Z" fill="#a2a2a2"/><path d="" fill="#6e6e6e"/><path d="M422.9,400.2 L421.6,400.6 L418.5,400.4 L417.6,399.8 L421.0,399.5Z" fill="#dadada"/><path d="M416.1,401.4 L423.7,400.6M423.0,399.3 l-1.1,-0.3" stroke="#3c3c3c" stroke-width="0.59" fill="none"/><path d="M75.2,418.6 L76.2,425.1 M73.5,418.6 L72.2,424.4 M66.3,418.6 L64.6,425.1 M67.9,418.6 L69.6,424.8M64.6,417.3 Q60.3,413.4 61.2,418.6" stroke="#a9a9a9" stroke-width="1.30" fill="none" stroke-linecap="round"/><path d="M77.3,417.5 L73.9,420.3 L67.1,419.4 L64.9,418.2 L68.2,416.2 L75.3,415.8ZM79.4,415.7 L78.2,417.4 L76.4,417.0 L76.1,414.8 L77.9,414.3Z" fill="#a9a9a9"/><path d="" fill="#6e6e6e"/><path d="M74.0,417.1 L71.3,417.9 L67.2,417.5 L68.0,416.6 L71.7,416.4Z" fill="#dadada"/><path d="M66.3,418.8 L74.7,418.6M67.4,418.1 l-0.8,1.9" stroke="#3c3c3c" stroke-width="0.78" fill="none"/><path d="M188.0,400.0 L186.5,402.5 M190.4,400.0 L191.2,402.5M188.0,396.5 L186.7,394.9M190.4,396.8 L191.6,401.0" stroke="#9e9e9e" stroke-width="0.99" fill="none" stroke-linecap="round"/><path d="M191.9,398.4 L190.5,399.9 L187.4,400.9 L186.8,397.6 L187.9,395.7 L190.1,394.9ZM190.9,393.9 L189.7,395.4 L188.2,395.1 L188.1,393.3 L189.8,392.4Z" fill="#9e9e9e"/><path d="M189.2,398.3 L188.5,400.5 L187.4,399.6 L187.2,397.3 L188.3,396.7Z" fill="#6e6e6e"/><path d="M190.4,396.9 L189.9,398.6 L189.1,397.8 L189.1,396.3 L189.9,395.7ZM190.4,393.7 L189.7,394.3 L189.0,393.6 L189.7,393.3Z" fill="#dadada"/><path d="M189.7,396.0 L188.4,400.0M190.7,397.4 l0.9,-0.4M187.7,398.8 l0.7,-0.1M190.9,395.6 l-0.0,-0.4" stroke="#3c3c3c" stroke-width="0.59" fill="none"/><path d="M34.9,422.2 L33.2,425.4 M38.0,422.2 L39.3,425.4M38.0,417.6 L39.1,422.7M34.9,418.0 L33.2,423.5" stroke="#9e9e9e" stroke-width="1.30" fill="none" stroke-linecap="round"/><path d="M39.4,419.2 L38.2,422.2 L34.6,422.5 L33.6,420.2 L35.2,416.4 L38.7,416.0ZM38.4,414.2 L37.2,416.2 L34.7,415.3 L35.1,413.2 L36.7,412.4Z" fill="#9e9e9e"/><path d="M39.0,420.4 L38.1,423.5 L36.7,422.5 L36.8,418.0 L38.1,418.0Z" fill="#6e6e6e"/><path d="M36.7,418.7 L35.8,419.9 L34.8,419.2 L34.8,417.4 L36.1,416.5ZM36.9,413.9 L36.0,414.6 L35.3,414.1 L36.1,413.2Z" fill="#dadada"/><path d="M35.8,417.0 L37.5,422.2M35.7,416.7 l-1.3,-1.3M38.3,417.8 l-1.9,-1.1M38.8,419.9 l0.6,-0.1" stroke="#3c3c3c" stroke-width="0.78" fill="none"/><path d="M87.3,396.2 L85.5,398.5 M89.5,396.2 L89.8,398.5M87.3,393.0 L84.9,395.6M89.5,393.3 L90.7,397.1" stroke="#b6b6b6" stroke-width="0.91" fill="none" stroke-linecap="round"/><path d="M90.9,394.4 L89.9,396.8 L87.7,396.5 L86.0,394.3 L87.2,392.0 L89.5,391.4ZM90.7,390.6 L89.9,392.1 L88.3,391.6 L88.5,390.0 L89.7,389.6Z" fill="#b6b6b6"/><path d="M88.5,394.8 L87.8,397.1 L86.7,395.9 L86.7,393.4 L87.9,392.7Z" fill="#6e6e6e"/><path d="M89.6,393.5 L89.1,394.7 L88.4,394.4 L88.5,392.8 L89.1,392.1ZM90.1,390.4 L89.7,391.0 L89.1,390.5 L89.5,389.9Z" fill="#dadada"/><path d="M88.9,392.5 L87.7,396.2M89.4,393.4 l1.1,0.0M87.4,394.9 l1.2,-0.0" stroke="#3c3c3c" stroke-width="0.55" fill="none"/><path d="M214.8,401.3 L214.0,406.7 M216.2,401.3 L217.3,406.2 M222.2,401.3 L223.6,406.7 M220.8,401.3 L219.4,406.5M223.6,400.3 Q227.1,397.0 226.4,401.3" stroke="#b6b6b6" stroke-width="1.07" fill="none" stroke-linecap="round"/><path d="M223.9,401.0 L221.9,402.5 L217.0,402.4 L213.9,400.6 L215.2,399.0 L220.6,399.0ZM214.1,399.3 L213.2,400.8 L211.7,399.9 L211.7,398.3 L213.3,397.7Z" fill="#b6b6b6"/><path d="" fill="#6e6e6e"/><path d="M222.0,400.2 L219.8,400.6 L216.7,400.5 L216.2,399.7 L219.8,399.5Z" fill="#dadada"/><path d="M215.2,401.6 L222.2,401.3M219.5,399.9 l0.7,-1.4M221.1,403.7 l0.9,1.2M219.2,404.8 l0.4,-0.0" stroke="#3c3c3c" stroke-width="0.64" fill="none"/><path d="M175.7,405.8 L173.2,408.6 M178.4,405.8 L178.5,408.6M175.7,401.9 L173.7,401.1M178.4,402.3 L179.9,406.9" stroke="#a9a9a9" stroke-width="1.11" fill="none" stroke-linecap="round"/><path d="M180.0,403.2 L178.6,405.8 L175.8,406.5 L174.8,403.4 L175.3,400.6 L178.0,400.7ZM180.1,398.9 L179.0,400.6 L177.2,400.0 L177.1,398.2 L179.1,397.6Z" fill="#a9a9a9"/><path d="M176.9,403.8 L176.3,406.6 L175.1,405.7 L175.1,403.3 L176.2,401.3Z" fill="#6e6e6e"/><path d="M178.5,402.8 L177.9,404.4 L177.2,403.3 L177.1,401.2 L178.0,401.3ZM179.7,398.8 L179.0,399.5 L178.2,398.7 L179.0,398.0Z" fill="#dadada"/><path d="M177.6,401.4 L176.2,405.8M176.3,406.9 l0.1,-1.0M177.8,401.2 l-1.2,0.2M174.5,405.2 l0.8,-0.6" stroke="#3c3c3c" stroke-width="0.67" fill="none"/><path d="M340.6,414.2 L339.9,417.4 M343.7,414.2 L346.0,417.4M343.7,409.7 L345.1,408.3M340.6,410.1 L338.9,415.5" stroke="#a9a9a9" stroke-width="1.29" fill="none" stroke-linecap="round"/><path d="M346.0,411.6 L343.1,414.6 L341.1,414.9 L339.0,411.3 L340.2,408.7 L344.0,408.0ZM342.5,406.2 L341.2,408.1 L338.7,407.4 L339.0,405.3 L341.1,404.3Z" fill="#a9a9a9"/><path d="M344.8,412.2 L343.8,415.2 L342.5,414.5 L342.5,411.2 L343.7,410.1Z" fill="#6e6e6e"/><path d="M342.4,410.1 L341.6,412.1 L340.6,411.7 L340.5,409.3 L341.7,408.6ZM341.0,406.1 L340.2,406.8 L339.5,406.1 L340.2,405.2Z" fill="#dadada"/><path d="M341.5,409.1 L343.2,414.2M345.0,412.8 l0.2,0.6M344.5,412.0 l1.2,1.7" stroke="#3c3c3c" stroke-width="0.77" fill="none"/><path d="M398.7,395.5 L399.4,400.2 M397.4,395.5 L396.5,399.8 M392.2,395.5 L390.9,400.2 M393.4,395.5 L394.6,400.1M390.9,394.6 Q387.9,391.7 388.5,395.5" stroke="#9e9e9e" stroke-width="0.94" fill="none" stroke-linecap="round"/><path d="M400.1,395.4 L397.2,396.5 L392.9,396.3 L390.5,394.9 L393.8,393.5 L397.4,393.9ZM401.7,393.6 L400.9,394.8 L399.5,394.4 L399.6,392.8 L400.9,392.7Z" fill="#9e9e9e"/><path d="" fill="#6e6e6e"/><path d="M398.0,394.4 L395.6,394.9 L393.0,394.7 L393.2,394.0 L396.0,393.9Z" fill="#dadada"/><path d="M392.2,395.7 L398.3,395.5M396.3,395.8 l-1.0,-1.3M396.7,396.7 l0.9,0.0M392.5,397.6 l-0.4,1.3" stroke="#3c3c3c" stroke-width="0.57" fill="none"/><path d="M150.2,422.4 L147.7,425.7 M153.3,422.4 L153.8,425.7M150.2,417.9 L148.3,418.4M153.3,418.3 L155.0,423.7" stroke="#a2a2a2" stroke-width="1.30" fill="none" stroke-linecap="round"/><path d="M154.5,419.7 L153.2,423.2 L149.7,423.8 L147.9,419.7 L149.7,416.2 L152.7,416.5ZM154.7,414.4 L153.3,416.8 L151.6,415.8 L151.4,413.8 L153.8,412.7Z" fill="#a2a2a2"/><path d="M151.8,420.7 L150.6,423.2 L149.5,422.3 L149.6,419.1 L150.8,417.5Z" fill="#6e6e6e"/><path d="M153.2,418.6 L152.7,420.7 L151.8,420.0 L151.8,417.3 L152.9,417.0ZM154.0,414.2 L153.3,415.1 L152.5,414.2 L153.4,413.6Z" fill="#dadada"/><path d="M152.4,417.2 L150.7,422.4M151.7,418.9 l0.6,1.6" stroke="#3c3c3c" stroke-width="0.78" fill="none"/><path d="" stroke="#9e9e9e" stroke-width="1.30" fill="none" stroke-linecap="round"/><path d="M358.7,422.4 L358.0,423.9 L351.3,424.6 L346.0,422.8 L346.2,421.6 L351.5,420.8 L356.4,421.1ZM345.7,421.6 L344.5,422.6 L343.1,422.4 L343.0,420.2 L344.7,420.2Z" fill="#9e9e9e"/><path d="" fill="#6e6e6e"/><path d="M355.0,421.3 L353.0,421.9 L349.7,421.8 L350.0,421.0 L353.2,420.8Z" fill="#dadada"/><path d="M346.9,423.0 L356.9,422.0M348.6,417.3 l-1.9,1.7M350.8,415.6 l-0.5,-0.3M349.8,416.7 l-1.3,-1.6" stroke="#3c3c3c" stroke-width="0.78" fill="none"/><path d="M302.6,401.2 L301.5,403.7 M305.1,401.2 L306.3,403.7M302.6,397.6 L301.0,401.1M305.1,397.9 L306.4,402.2" stroke="#a2a2a2" stroke-width="1.01" fill="none" stroke-linecap="round"/><path d="M306.4,399.0 L305.2,401.8 L302.4,402.1 L301.6,398.7 L302.3,397.0 L304.8,395.9ZM305.3,395.1 L303.8,396.8 L302.4,395.7 L302.1,394.2 L304.1,393.6Z" fill="#a2a2a2"/><path d="M303.8,399.7 L303.3,402.0 L301.9,400.8 L302.0,398.1 L303.1,397.6Z" fill="#6e6e6e"/><path d="M305.3,398.1 L304.9,399.7 L304.0,399.1 L303.8,397.2 L304.6,396.6ZM304.5,394.9 L303.8,395.4 L303.4,394.8 L303.9,394.1Z" fill="#dadada"/><path d="M304.4,397.1 L303.0,401.2M304.0,401.8 l0.5,1.0M307.0,401.7 l0.3,-1.5M305.4,401.8 l0.3,-0.8" stroke="#3c3c3c" stroke-width="0.61" fill="none"/><path d="M142.1,400.8 L141.4,403.3 M144.5,400.8 L146.2,403.3M142.1,397.3 L140.7,399.4M144.5,397.6 L145.8,401.8" stroke="#a9a9a9" stroke-width="1.01" fill="none" stroke-linecap="round"/><path d="M145.6,399.1 L144.8,401.0 L141.8,401.5 L140.7,398.4 L142.1,395.6 L145.0,395.8ZM143.8,394.9 L142.8,396.2 L141.3,395.5 L141.3,393.9 L142.6,393.5Z" fill="#a9a9a9"/><path d="M143.5,399.6 L142.5,401.3 L141.7,400.5 L141.4,397.7 L142.6,396.8Z" fill="#6e6e6e"/><path d="M144.8,397.7 L144.1,399.0 L143.3,398.7 L143.3,396.6 L144.1,396.6ZM143.3,394.4 L142.8,395.0 L142.1,394.5 L142.7,393.8Z" fill="#dadada"/><path d="M143.8,396.8 L142.5,400.8M141.8,399.6 l1.3,-1.0M144.0,399.0 l0.8,0.2" stroke="#3c3c3c" stroke-width="0.60" fill="none"/><path d="" stroke="#a9a9a9" stroke-width="1.01" fill="none" stroke-linecap="round"/><path d="M117.3,401.6 L116.8,403.2 L110.6,403.5 L106.2,402.4 L105.7,401.4 L110.6,400.7 L114.5,400.8ZM119.9,401.3 L119.2,402.0 L117.7,401.8 L118.1,400.4 L119.0,400.1Z" fill="#a9a9a9"/><path d="" fill="#6e6e6e"/><path d="M114.5,401.1 L113.5,401.6 L110.8,401.5 L110.4,400.9 L112.8,400.6Z" fill="#dadada"/><path d="M108.1,402.5 L115.9,401.7M109.9,396.6 l-0.6,1.5M109.5,401.1 l1.3,-0.2M114.1,401.3 l-0.6,-0.7" stroke="#3c3c3c" stroke-width="0.61" fill="none"/><path d="M297.6,400.3 L296.0,402.8 M300.0,400.3 L300.7,402.8M297.6,396.8 L296.3,401.0M300.0,397.1 L301.3,401.3" stroke="#b6b6b6" stroke-width="1.00" fill="none" stroke-linecap="round"/><path d="M301.1,398.1 L300.5,401.2 L297.8,401.4 L296.2,398.2 L297.9,395.7 L299.8,395.5ZM300.6,394.3 L299.6,395.7 L298.2,395.1 L298.1,393.3 L299.7,392.9Z" fill="#b6b6b6"/><path d="M298.7,398.5 L298.0,401.0 L296.9,400.0 L297.0,397.0 L298.0,396.9Z" fill="#6e6e6e"/><path d="M300.0,397.3 L299.6,399.0 L299.0,398.3 L298.8,396.4 L299.6,396.1ZM300.2,394.0 L299.5,394.5 L298.9,394.0 L299.6,393.5Z" fill="#dadada"/><path d="M299.3,396.3 L298.0,400.3M299.3,396.2 l0.6,-0.8M298.4,399.8 l1.1,1.3M298.0,397.6 l-0.3,-0.6" stroke="#3c3c3c" stroke-width="0.60" fill="none"/><path d="M327.8,406.0 L326.9,411.9 M329.3,406.0 L330.6,411.3 M335.9,406.0 L337.5,411.9 M334.4,406.0 L332.9,411.7M337.5,404.8 Q341.3,401.3 340.5,406.0" stroke="#9e9e9e" stroke-width="1.18" fill="none" stroke-linecap="round"/><path d="M337.0,405.7 L335.0,407.4 L329.0,407.5 L327.0,405.4 L329.7,403.6 L335.1,403.7ZM327.0,403.9 L326.0,405.0 L324.5,404.6 L324.4,402.4 L325.9,402.1Z" fill="#9e9e9e"/><path d="" fill="#6e6e6e"/><path d="M334.7,404.6 L333.1,405.4 L330.0,405.0 L329.1,404.2 L333.7,403.8Z" fill="#dadada"/><path d="M328.3,406.2 L335.9,406.0M333.3,408.4 l1.4,0.2M332.7,409.2 l0.6,1.7" stroke="#3c3c3c" stroke-width="0.71" fill="none"/><path d="M131.8,418.0 L130.2,421.2 M134.9,418.0 L136.3,421.2M134.9,413.4 L137.2,418.1M131.8,413.8 L130.1,419.3" stroke="#a2a2a2" stroke-width="1.30" fill="none" stroke-linecap="round"/><path d="M136.7,415.0 L135.0,418.8 L132.4,418.5 L129.9,415.2 L132.2,411.3 L134.7,411.9ZM135.0,410.1 L133.7,411.9 L131.9,411.5 L131.6,408.9 L133.8,408.4Z" fill="#a2a2a2"/><path d="M136.1,416.0 L135.2,419.2 L133.7,417.7 L133.7,414.5 L135.2,414.0Z" fill="#6e6e6e"/><path d="M133.3,413.9 L132.7,416.0 L132.0,415.2 L131.9,412.6 L132.7,412.0ZM133.6,409.7 L132.8,410.4 L132.2,409.7 L132.8,408.9Z" fill="#dadada"/><path d="M132.7,412.8 L134.4,418.0M133.8,419.1 l-0.7,-0.4" stroke="#3c3c3c" stroke-width="0.78" fill="none"/><path d="M408.7,417.7 L407.0,420.9 M411.8,417.7 L413.1,420.9M408.7,413.1 L406.3,417.4M411.8,413.5 L413.5,419.0" stroke="#a9a9a9" stroke-width="1.30" fill="none" stroke-linecap="round"/><path d="M413.4,414.8 L411.8,419.3 L408.9,418.0 L407.4,415.1 L408.2,412.2 L412.7,411.5ZM412.0,409.7 L410.7,412.0 L408.6,410.6 L408.4,409.0 L410.6,408.1Z" fill="#a9a9a9"/><path d="M410.1,416.0 L409.2,418.5 L408.0,417.2 L407.8,414.3 L409.5,413.0Z" fill="#6e6e6e"/><path d="M411.8,413.7 L411.4,415.3 L410.3,414.7 L410.2,412.9 L411.3,411.5ZM411.5,409.6 L410.5,410.2 L409.7,409.6 L410.7,408.6Z" fill="#dadada"/><path d="M410.9,412.5 L409.2,417.7M411.4,414.3 l-0.6,1.4" stroke="#3c3c3c" stroke-width="0.78" fill="none"/><path d="M362.2,411.8 L363.2,418.3 M360.5,411.8 L359.2,417.6 M353.3,411.8 L351.6,418.3 M354.9,411.8 L356.6,418.0M351.6,410.5 Q347.3,406.6 348.2,411.8" stroke="#b6b6b6" stroke-width="1.30" fill="none" stroke-linecap="round"/><path d="M363.4,410.9 L362.0,413.2 L353.7,412.8 L352.1,411.2 L353.3,409.2 L360.9,409.6ZM366.4,409.0 L365.4,410.9 L363.3,410.3 L363.2,408.4 L365.0,407.7Z" fill="#b6b6b6"/><path d="" fill="#6e6e6e"/><path d="M360.2,410.3 L358.5,411.1 L355.2,410.7 L355.0,409.9 L359.0,409.5Z" fill="#dadada"/><path d="M353.3,412.0 L361.7,411.8M355.5,412.5 l-0.0,-0.7" stroke="#3c3c3c" stroke-width="0.78" fill="none"/><path d="M233.2,408.2 L230.7,411.1 M236.0,408.2 L236.1,411.1M233.2,404.2 L229.5,403.0M236.0,404.5 L237.5,409.4" stroke="#b6b6b6" stroke-width="1.16" fill="none" stroke-linecap="round"/><path d="M237.5,406.4 L236.6,409.0 L233.5,409.3 L232.2,406.4 L233.2,403.4 L236.5,403.2ZM237.9,401.3 L236.5,403.0 L234.4,402.2 L234.7,400.6 L236.3,399.7Z" fill="#b6b6b6"/><path d="M234.8,407.0 L233.7,409.1 L232.4,408.2 L232.6,405.1 L233.8,404.2Z" fill="#6e6e6e"/><path d="M236.1,404.7 L235.5,406.3 L234.6,405.6 L234.6,403.4 L235.4,403.0ZM237.2,400.8 L236.5,401.5 L235.7,400.8 L236.4,400.2Z" fill="#dadada"/><path d="M235.2,403.6 L233.6,408.2M234.7,405.7 l-1.6,-1.5M233.3,406.5 l0.3,0.2M233.9,406.1 l1.6,-1.0" stroke="#3c3c3c" stroke-width="0.70" fill="none"/><path d="" stroke="#a2a2a2" stroke-width="1.28" fill="none" stroke-linecap="round"/><path d="M300.9,414.2 L297.3,416.5 L291.9,416.0 L287.1,415.4 L285.1,413.2 L291.1,413.0 L296.3,413.1ZM286.2,413.7 L284.8,415.1 L283.3,414.5 L283.2,412.8 L285.1,412.1Z" fill="#a2a2a2"/><path d="" fill="#6e6e6e"/><path d="M295.8,413.6 L293.7,414.1 L290.2,414.0 L290.1,413.4 L293.6,412.9Z" fill="#dadada"/><path d="M287.2,415.3 L297.0,414.2M288.9,410.1 l-0.5,-0.7M289.8,412.0 l1.3,-0.5" stroke="#3c3c3c" stroke-width="0.77" fill="none"/><path d="M88.6,396.3 L89.3,401.2 M87.3,396.3 L86.3,400.7 M81.9,396.3 L80.7,401.2 M83.2,396.3 L84.4,401.0M80.7,395.4 Q77.6,392.5 78.2,396.3" stroke="#a9a9a9" stroke-width="0.96" fill="none" stroke-linecap="round"/><path d="M90.4,395.6 L86.5,397.3 L82.9,397.4 L79.7,396.2 L82.0,394.5 L86.5,394.5ZM91.7,394.7 L90.9,395.5 L89.4,395.2 L89.1,393.8 L90.7,393.0Z" fill="#a9a9a9"/><path d="" fill="#6e6e6e"/><path d="M87.5,395.1 L85.4,395.7 L83.1,395.5 L82.9,394.9 L85.9,394.8Z" fill="#dadada"/><path d="M81.9,396.5 L88.2,396.3M83.8,396.0 l-0.2,1.3M85.6,398.8 l-1.2,-0.7" stroke="#3c3c3c" stroke-width="0.58" fill="none"/><path d="M331.6,402.7 L332.4,408.2 M330.2,402.7 L329.0,407.7 M324.0,402.7 L322.5,408.2 M325.4,402.7 L326.8,408.0M322.5,401.6 Q319.0,398.3 319.7,402.7" stroke="#9e9e9e" stroke-width="1.10" fill="none" stroke-linecap="round"/><path d="M332.5,402.0 L331.2,404.1 L324.9,403.8 L323.1,402.2 L324.7,400.2 L329.6,400.2ZM335.1,400.2 L334.2,401.7 L332.3,401.2 L332.7,399.7 L333.8,399.0Z" fill="#9e9e9e"/><path d="" fill="#6e6e6e"/><path d="M330.3,401.3 L328.7,402.1 L325.5,401.7 L325.4,401.0 L328.5,400.6Z" fill="#dadada"/><path d="M324.0,402.9 L331.2,402.7M330.2,404.9 l0.6,-0.1M327.8,404.0 l0.1,1.1M329.9,400.8 l0.8,0.4" stroke="#3c3c3c" stroke-width="0.66" fill="none"/><path d="M266.6,422.0 L266.2,425.2 M269.8,422.0 L272.3,425.2M266.6,417.4 L264.4,418.3M269.8,417.8 L271.5,423.3" stroke="#a9a9a9" stroke-width="1.30" fill="none" stroke-linecap="round"/><path d="M272.0,419.5 L270.4,423.1 L266.6,422.1 L264.5,419.2 L266.6,416.3 L270.2,416.5ZM268.0,414.0 L266.8,416.0 L264.6,415.5 L264.5,413.3 L266.8,412.5Z" fill="#a9a9a9"/><path d="M268.3,420.3 L267.1,422.8 L265.7,422.1 L265.8,418.1 L267.1,417.3Z" fill="#6e6e6e"/><path d="M269.8,418.1 L269.3,419.6 L268.1,419.2 L268.2,416.8 L269.2,415.9ZM267.5,413.8 L266.6,414.5 L266.0,413.8 L266.8,412.9Z" fill="#dadada"/><path d="M268.9,416.8 L267.2,422.0M270.7,416.9 l-1.5,-1.6" stroke="#3c3c3c" stroke-width="0.78" fill="none"/><path d="" stroke="#a2a2a2" stroke-width="1.23" fill="none" stroke-linecap="round"/><path d="M397.1,412.4 L394.5,414.0 L388.6,413.8 L383.0,413.1 L382.8,411.5 L386.8,410.1 L393.3,410.9ZM384.0,411.7 L382.5,413.0 L380.8,412.2 L381.3,410.6 L382.9,409.8Z" fill="#a2a2a2"/><path d="" fill="#6e6e6e"/><path d="M392.5,411.4 L391.6,412.0 L387.1,411.8 L388.0,410.9 L391.3,410.8Z" fill="#dadada"/><path d="M384.9,413.0 L394.3,412.0M389.6,406.2 l1.8,1.0M389.1,410.7 l-0.3,1.6M387.4,408.8 l1.2,0.8" stroke="#3c3c3c" stroke-width="0.74" fill="none"/><path d="M76.0,424.4 L73.1,427.6 M79.1,424.4 L79.2,427.6M76.0,419.8 L73.3,417.3M79.1,420.2 L80.8,425.7" stroke="#9e9e9e" stroke-width="1.30" fill="none" stroke-linecap="round"/><path d="M80.9,422.3 L79.8,425.2 L75.6,425.3 L74.5,422.2 L75.9,419.2 L79.2,418.7ZM81.3,416.8 L79.8,418.3 L77.7,417.4 L77.5,415.7 L79.8,414.7Z" fill="#9e9e9e"/><path d="M77.7,423.0 L76.5,424.7 L75.2,424.1 L74.9,420.9 L76.8,419.9Z" fill="#6e6e6e"/><path d="M79.2,420.1 L78.7,422.5 L77.5,421.6 L77.5,419.1 L78.4,418.5ZM80.4,416.1 L79.6,417.0 L78.9,416.1 L79.6,415.4Z" fill="#dadada"/><path d="M78.2,419.2 L76.5,424.4M78.7,420.9 l1.9,-1.2M76.5,420.1 l-1.9,-0.8" stroke="#3c3c3c" stroke-width="0.78" fill="none"/><path d="M395.4,401.4 L394.6,406.7 M396.8,401.4 L397.9,406.2 M402.8,401.4 L404.2,406.7 M401.4,401.4 L400.0,406.5M404.2,400.3 Q407.7,397.1 407.0,401.4" stroke="#a2a2a2" stroke-width="1.07" fill="none" stroke-linecap="round"/><path d="M404.3,401.0 L402.6,402.7 L395.5,402.5 L393.0,400.6 L396.3,399.4 L401.6,399.2ZM394.7,399.1 L393.7,400.6 L392.2,400.1 L392.2,398.6 L393.9,397.9Z" fill="#a2a2a2"/><path d="" fill="#6e6e6e"/><path d="M402.6,400.0 L400.6,400.6 L396.7,400.4 L397.2,399.9 L399.8,399.5Z" fill="#dadada"/><path d="M395.8,401.6 L402.8,401.4M398.2,403.2 l1.3,1.6M401.8,404.7 l-0.8,1.0" stroke="#3c3c3c" stroke-width="0.64" fill="none"/><path d="M46.2,412.3 L44.1,415.5 M49.2,412.3 L50.0,415.5M49.2,408.0 L50.5,413.5M46.2,408.3 L44.6,413.6" stroke="#a9a9a9" stroke-width="1.25" fill="none" stroke-linecap="round"/><path d="M51.1,409.4 L49.4,413.6 L46.4,413.8 L44.3,409.4 L46.5,406.4 L49.1,406.9ZM50.5,404.8 L48.7,406.8 L47.2,405.9 L47.0,403.9 L49.2,403.4Z" fill="#a9a9a9"/><path d="M49.9,410.6 L49.4,413.6 L48.1,412.0 L47.8,408.8 L49.4,408.4Z" fill="#6e6e6e"/><path d="M47.8,408.8 L47.3,410.6 L46.3,409.5 L46.1,407.3 L47.1,407.1ZM48.9,404.3 L48.1,405.2 L47.3,404.5 L48.1,403.8Z" fill="#dadada"/><path d="M47.1,407.3 L48.7,412.3M47.5,407.4 l-1.8,0.4" stroke="#3c3c3c" stroke-width="0.75" fill="none"/><path d="M393.5,394.9 L394.2,399.5 M392.2,394.9 L391.3,399.0 M387.0,394.9 L385.8,399.5 M388.3,394.9 L389.5,399.3M385.8,393.9 Q382.8,391.1 383.4,394.9" stroke="#9e9e9e" stroke-width="0.93" fill="none" stroke-linecap="round"/><path d="M395.0,394.6 L392.4,395.6 L386.6,395.9 L385.5,394.1 L387.3,393.2 L392.5,393.3ZM396.2,392.9 L395.3,394.1 L394.3,393.8 L394.1,392.4 L395.6,391.8Z" fill="#9e9e9e"/><path d="" fill="#6e6e6e"/><path d="M392.5,393.7 L391.2,394.2 L388.2,394.0 L388.5,393.4 L390.8,393.1Z" fill="#dadada"/><path d="M387.0,395.0 L393.1,394.9M390.3,394.9 l-0.7,-0.1" stroke="#3c3c3c" stroke-width="0.56" fill="none"/><path d="" stroke="#9e9e9e" stroke-width="1.19" fill="none" stroke-linecap="round"/><path d="M78.7,410.2 L74.1,411.7 L67.5,412.1 L64.0,411.5 L63.0,409.6 L69.9,408.9 L73.3,408.9ZM79.3,409.6 L78.1,410.9 L76.3,410.6 L76.6,408.6 L78.1,408.6Z" fill="#9e9e9e"/><path d="" fill="#6e6e6e"/><path d="M72.5,409.5 L71.5,410.2 L67.2,409.8 L67.7,409.2 L70.9,409.0Z" fill="#dadada"/><path d="M65.1,411.1 L74.2,410.2M72.7,408.7 l1.1,-0.0M73.0,409.7 l1.2,1.1M68.0,406.5 l-1.6,0.9" stroke="#3c3c3c" stroke-width="0.71" fill="none"/><path d="M219.6,421.1 L220.6,427.6 M217.9,421.1 L216.6,426.9 M210.7,421.1 L209.0,427.6 M212.4,421.1 L214.0,427.3M209.0,419.8 Q204.7,415.9 205.6,421.1" stroke="#b6b6b6" stroke-width="1.30" fill="none" stroke-linecap="round"/><path d="M220.7,420.8 L219.2,422.5 L211.2,422.1 L207.2,420.4 L212.5,418.2 L218.4,418.4ZM223.6,418.5 L222.2,420.3 L220.7,419.4 L220.5,417.8 L222.6,416.7Z" fill="#b6b6b6"/><path d="" fill="#6e6e6e"/><path d="M217.7,419.6 L215.9,420.4 L211.8,420.0 L211.9,419.2 L215.9,418.9Z" fill="#dadada"/><path d="M210.7,421.4 L219.1,421.1M217.4,422.9 l1.4,0.2" stroke="#3c3c3c" stroke-width="0.78" fill="none"/><path d="M75.6,403.6 L75.1,406.3 M78.2,403.6 L80.1,406.3M78.2,399.9 L81.2,396.5M75.6,400.2 L74.2,404.7" stroke="#a9a9a9" stroke-width="1.07" fill="none" stroke-linecap="round"/><path d="M79.2,401.8 L78.4,403.6 L75.9,404.2 L74.3,401.1 L75.7,399.1 L78.0,399.1ZM77.1,397.3 L76.3,398.8 L74.3,397.9 L74.5,396.4 L76.1,395.9Z" fill="#a9a9a9"/><path d="M79.0,402.3 L78.2,404.2 L77.3,403.3 L76.9,400.7 L78.4,399.6Z" fill="#6e6e6e"/><path d="M77.1,400.6 L76.5,401.8 L75.8,401.4 L75.6,399.2 L76.5,399.1ZM75.8,397.0 L75.3,397.6 L74.6,397.0 L75.2,396.3Z" fill="#dadada"/><path d="M76.4,399.4 L77.8,403.6M76.6,401.1 l0.2,-0.8M78.7,403.9 l0.7,-0.9M74.8,401.0 l-0.2,1.1" stroke="#3c3c3c" stroke-width="0.64" fill="none"/><path d="M245.7,410.5 L244.0,413.5 M248.6,410.5 L249.7,413.5M245.7,406.3 L243.1,409.5M248.6,406.6 L250.2,411.7" stroke="#a9a9a9" stroke-width="1.21" fill="none" stroke-linecap="round"/><path d="M249.7,407.8 L249.0,411.7 L245.4,410.6 L244.1,408.0 L245.8,405.4 L248.7,405.7ZM249.2,403.2 L248.1,404.9 L246.0,404.1 L246.0,402.0 L248.3,401.6Z" fill="#a9a9a9"/><path d="M247.1,408.4 L246.4,410.8 L245.1,410.6 L244.8,407.4 L246.4,406.1Z" fill="#6e6e6e"/><path d="M248.7,406.7 L248.2,408.8 L247.3,407.7 L247.2,405.3 L248.2,404.8ZM248.4,402.9 L247.8,403.5 L246.9,402.9 L247.8,402.1Z" fill="#dadada"/><path d="M247.8,405.7 L246.2,410.5M250.6,408.3 l1.2,0.6M246.0,410.7 l-0.8,1.3" stroke="#3c3c3c" stroke-width="0.73" fill="none"/><path d="M245.9,397.2 L245.3,399.5 M248.1,397.2 L249.6,399.5M245.9,393.9 L243.1,391.0M248.1,394.2 L249.3,398.1" stroke="#a2a2a2" stroke-width="0.93" fill="none" stroke-linecap="round"/><path d="M249.2,395.3 L248.6,397.9 L246.0,398.1 L244.7,395.7 L246.4,393.1 L248.1,393.6ZM247.4,391.6 L246.5,393.0 L244.9,392.3 L245.1,390.6 L246.4,390.2Z" fill="#a2a2a2"/><path d="M247.1,396.2 L246.4,397.8 L245.4,396.8 L245.3,394.7 L246.4,394.2Z" fill="#6e6e6e"/><path d="M248.2,394.5 L247.8,395.5 L247.1,395.3 L247.0,393.6 L247.7,393.0ZM246.9,391.3 L246.3,391.8 L245.8,391.2 L246.3,390.8Z" fill="#dadada"/><path d="M247.4,393.5 L246.2,397.2M250.3,395.5 l1.4,0.3M248.3,394.9 l1.4,-0.3M247.2,393.7 l1.2,-0.2" stroke="#3c3c3c" stroke-width="0.56" fill="none"/><path d="" stroke="#9e9e9e" stroke-width="0.99" fill="none" stroke-linecap="round"/><path d="M114.8,400.6 L113.1,401.9 L110.2,402.0 L104.3,401.5 L105.7,400.5 L108.6,399.7 L113.7,399.6ZM117.9,400.3 L116.9,401.3 L115.5,400.7 L115.7,399.5 L117.0,399.1Z" fill="#9e9e9e"/><path d="" fill="#6e6e6e"/><path d="M112.9,400.2 L111.5,400.5 L108.4,400.3 L108.8,399.8 L110.9,399.7Z" fill="#dadada"/><path d="M106.2,401.4 L113.9,400.6M109.8,396.2 l-1.5,1.3M109.0,400.4 l-1.4,-0.8M110.3,396.7 l0.4,-0.7" stroke="#3c3c3c" stroke-width="0.59" fill="none"/><path d="M329.9,424.5 L329.5,427.7 M333.1,424.5 L335.6,427.7M333.1,419.9 L335.4,416.1M329.9,420.3 L328.2,425.8" stroke="#a9a9a9" stroke-width="1.30" fill="none" stroke-linecap="round"/><path d="M335.1,422.6 L332.9,425.1 L329.7,425.8 L328.6,421.8 L330.3,418.8 L333.3,418.8ZM331.7,417.0 L330.1,418.4 L328.1,418.3 L328.0,415.7 L330.4,415.0Z" fill="#a9a9a9"/><path d="M333.8,422.6 L333.1,425.7 L332.0,424.3 L331.9,420.9 L332.9,419.8Z" fill="#6e6e6e"/><path d="M331.7,420.9 L331.1,422.3 L330.0,421.5 L330.1,419.3 L331.1,418.5ZM330.0,416.2 L329.3,417.1 L328.5,416.3 L329.2,415.4Z" fill="#dadada"/><path d="M330.8,419.3 L332.5,424.5M332.7,420.4 l-0.8,1.7M332.6,423.9 l-1.3,0.5" stroke="#3c3c3c" stroke-width="0.78" fill="none"/><path d="M58.6,402.1 L57.1,404.6 M61.0,402.1 L62.0,404.6M58.6,398.4 L55.4,399.2M61.0,398.8 L62.4,403.1" stroke="#9e9e9e" stroke-width="1.03" fill="none" stroke-linecap="round"/><path d="M62.6,399.7 L60.9,402.8 L58.8,402.9 L57.3,400.0 L58.1,397.7 L61.3,397.6ZM61.6,396.0 L60.5,397.3 L58.7,396.6 L58.8,395.2 L60.8,394.3Z" fill="#9e9e9e"/><path d="M59.8,400.1 L59.2,402.6 L57.9,402.2 L57.8,399.2 L59.1,398.4Z" fill="#6e6e6e"/><path d="M61.0,399.0 L60.7,400.5 L59.9,400.0 L59.7,398.0 L60.6,397.2ZM60.8,395.5 L60.3,396.2 L59.7,395.7 L60.4,395.1Z" fill="#dadada"/><path d="M60.3,397.9 L59.0,402.1M61.6,401.5 l1.5,-0.2M59.4,401.1 l-0.6,1.0M59.2,400.6 l0.1,-0.4" stroke="#3c3c3c" stroke-width="0.62" fill="none"/><path d="M8.7,401.0 L7.9,406.3 M10.1,401.0 L11.2,405.8 M16.1,401.0 L17.5,406.3 M14.7,401.0 L13.3,406.1M17.5,399.9 Q20.9,396.7 20.2,401.0" stroke="#a2a2a2" stroke-width="1.07" fill="none" stroke-linecap="round"/><path d="M18.8,400.1 L16.2,402.1 L9.3,402.1 L6.5,400.8 L9.5,398.8 L15.4,398.7ZM8.3,399.2 L7.0,400.4 L5.8,399.8 L5.7,397.9 L7.4,397.7Z" fill="#a2a2a2"/><path d="" fill="#6e6e6e"/><path d="M15.9,399.8 L13.4,400.4 L10.3,400.1 L10.7,399.4 L13.7,399.0Z" fill="#dadada"/><path d="M9.1,401.2 L16.1,401.0M11.3,402.1 l0.3,1.5M13.8,399.2 l1.4,-0.1M10.7,403.4 l0.4,1.1" stroke="#3c3c3c" stroke-width="0.64" fill="none"/><path d="M247.8,403.0 L246.3,405.7 M250.3,403.0 L251.2,405.7M250.3,399.3 L251.7,396.5M247.8,399.7 L246.4,404.1" stroke="#a2a2a2" stroke-width="1.05" fill="none" stroke-linecap="round"/><path d="M251.9,400.8 L250.5,403.3 L247.6,403.5 L246.1,400.6 L247.5,398.6 L250.3,397.9ZM250.7,396.6 L249.8,398.0 L247.9,397.5 L248.1,395.7 L249.5,395.0Z" fill="#a2a2a2"/><path d="M251.2,401.9 L250.3,403.4 L249.3,402.8 L249.3,400.6 L250.3,399.3Z" fill="#6e6e6e"/><path d="M249.1,399.9 L248.7,401.3 L247.9,400.9 L247.7,399.2 L248.6,398.4ZM249.5,396.5 L248.8,396.9 L248.4,396.4 L248.8,395.7Z" fill="#dadada"/><path d="M248.5,398.8 L249.9,403.0M247.2,401.9 l-0.3,1.4M248.6,399.9 l-0.6,1.4" stroke="#3c3c3c" stroke-width="0.63" fill="none"/><path d="M156.5,400.1 L155.6,405.3 M157.8,400.1 L158.9,404.8 M163.7,400.1 L165.0,405.3 M162.3,400.1 L160.9,405.1M165.0,399.0 Q168.4,395.9 167.7,400.1" stroke="#a9a9a9" stroke-width="1.05" fill="none" stroke-linecap="round"/><path d="M166.1,399.8 L162.8,401.5 L157.3,401.2 L155.7,399.6 L157.3,397.8 L162.8,397.7ZM156.1,398.1 L154.9,399.5 L153.4,398.8 L153.6,397.2 L154.9,396.7Z" fill="#a9a9a9"/><path d="" fill="#6e6e6e"/><path d="M162.8,398.8 L161.4,399.4 L158.6,399.2 L158.3,398.3 L161.3,398.1Z" fill="#dadada"/><path d="M156.9,400.3 L163.7,400.1M157.6,403.3 l1.4,1.6M160.5,402.2 l0.3,-0.1M158.2,401.7 l-0.2,0.6" stroke="#3c3c3c" stroke-width="0.63" fill="none"/><path d="M24.7,404.1 L23.7,406.8 M27.3,404.1 L28.7,406.8M24.7,400.4 L22.4,401.0M27.3,400.7 L28.7,405.2" stroke="#a9a9a9" stroke-width="1.08" fill="none" stroke-linecap="round"/><path d="M28.5,401.7 L27.0,404.7 L24.7,404.6 L23.4,401.7 L25.0,399.2 L27.4,400.0ZM26.9,397.7 L25.7,399.4 L24.0,398.5 L24.1,396.3 L26.0,396.3Z" fill="#a9a9a9"/><path d="M26.1,402.8 L25.2,405.1 L24.1,403.6 L24.2,400.9 L25.4,400.0Z" fill="#6e6e6e"/><path d="M27.3,401.1 L26.8,402.4 L26.1,401.6 L26.0,399.7 L26.7,399.6ZM26.4,397.4 L25.6,397.9 L25.0,397.3 L25.7,396.8Z" fill="#dadada"/><path d="M26.5,399.8 L25.1,404.1M25.2,404.7 l-0.0,1.5" stroke="#3c3c3c" stroke-width="0.65" fill="none"/><path d="M376.4,416.1 L373.5,419.3 M379.5,416.1 L379.6,419.3M376.4,411.5 L372.9,408.1M379.5,411.9 L381.2,417.4" stroke="#a2a2a2" stroke-width="1.30" fill="none" stroke-linecap="round"/><path d="M381.2,413.0 L379.4,416.4 L376.7,416.6 L375.3,413.9 L376.4,409.7 L379.5,409.3ZM381.7,408.5 L380.6,410.1 L378.1,409.7 L378.1,407.0 L379.9,406.4Z" fill="#a2a2a2"/><path d="M377.9,414.0 L376.8,417.1 L375.5,416.0 L375.7,412.4 L376.8,411.0Z" fill="#6e6e6e"/><path d="M379.6,411.8 L378.9,414.2 L378.1,413.2 L377.9,410.6 L379.0,410.6ZM380.7,407.9 L380.2,408.6 L379.4,407.7 L380.0,407.0Z" fill="#dadada"/><path d="M378.6,410.9 L376.9,416.1M374.9,410.7 l1.4,1.8M379.9,414.3 l-1.6,0.9" stroke="#3c3c3c" stroke-width="0.78" fill="none"/><path d="" stroke="#a2a2a2" stroke-width="1.30" fill="none" stroke-linecap="round"/><path d="M299.2,420.6 L296.9,422.4 L289.4,422.9 L283.9,421.8 L286.0,419.6 L288.6,418.7 L298.0,418.8ZM285.3,419.7 L283.9,421.0 L282.3,420.5 L282.4,419.0 L284.0,418.0Z" fill="#a2a2a2"/><path d="" fill="#6e6e6e"/><path d="M294.8,419.7 L293.5,420.3 L288.6,420.1 L289.8,419.3 L292.5,419.1Z" fill="#dadada"/><path d="M286.3,421.4 L296.3,420.3M291.6,420.0 l0.5,-0.5M291.3,415.4 l0.6,0.4" stroke="#3c3c3c" stroke-width="0.78" fill="none"/><path d="M242.1,424.5 L240.9,427.7 M245.2,424.5 L247.0,427.7M242.1,419.9 L240.7,424.4M245.2,420.3 L246.9,425.8" stroke="#a2a2a2" stroke-width="1.30" fill="none" stroke-linecap="round"/><path d="M246.4,421.5 L245.2,425.0 L241.8,425.4 L240.2,422.2 L241.5,418.4 L245.0,418.1ZM244.6,416.4 L243.3,418.5 L241.0,417.6 L241.4,415.5 L243.3,415.0Z" fill="#a2a2a2"/><path d="M243.8,422.8 L242.8,425.7 L241.0,423.8 L241.3,421.1 L242.7,420.2Z" fill="#6e6e6e"/><path d="M245.1,420.4 L244.5,422.4 L243.6,421.5 L243.9,419.4 L244.7,418.6ZM244.1,416.1 L243.3,417.1 L242.6,416.4 L243.1,415.4Z" fill="#dadada"/><path d="M244.3,419.3 L242.6,424.5M247.4,422.4 l-1.6,1.1M244.2,424.2 l0.5,0.3M241.6,419.6 l-1.6,-0.3" stroke="#3c3c3c" stroke-width="0.78" fill="none"/><path d="M131.6,423.4 L131.0,426.6 M134.7,423.4 L137.1,426.6M134.7,418.8 L137.1,424.3M131.6,419.2 L129.9,424.7" stroke="#a9a9a9" stroke-width="1.30" fill="none" stroke-linecap="round"/><path d="M136.3,420.7 L135.1,424.0 L132.0,423.8 L129.9,420.3 L132.3,417.8 L134.9,417.1ZM133.6,415.5 L132.0,417.4 L129.8,416.5 L130.1,414.2 L132.1,413.9Z" fill="#a9a9a9"/><path d="M135.8,420.9 L135.1,424.0 L133.5,423.1 L133.2,420.0 L134.8,418.9Z" fill="#6e6e6e"/><path d="M133.3,419.1 L132.7,421.5 L131.5,420.4 L131.5,418.5 L132.7,417.3ZM131.9,415.1 L131.1,415.8 L130.3,415.3 L131.1,414.5Z" fill="#dadada"/><path d="M132.5,418.2 L134.2,423.4M136.7,423.6 l-1.1,-0.7M135.1,421.9 l0.5,0.2" stroke="#3c3c3c" stroke-width="0.78" fill="none"/><path d="M108.8,402.5 L107.5,405.2 M111.3,402.5 L112.4,405.2M111.3,398.9 L112.3,399.6M108.8,399.2 L107.5,403.6" stroke="#a9a9a9" stroke-width="1.04" fill="none" stroke-linecap="round"/><path d="M112.3,400.6 L111.5,403.0 L108.7,403.3 L107.5,400.6 L108.3,397.7 L111.7,398.0ZM111.4,396.1 L110.7,397.8 L108.6,397.0 L108.8,395.6 L110.5,394.7Z" fill="#a9a9a9"/><path d="M112.2,400.5 L111.6,403.3 L110.4,402.2 L110.4,399.3 L111.6,399.1Z" fill="#6e6e6e"/><path d="M110.1,399.2 L109.6,400.6 L108.8,400.5 L108.8,398.2 L109.7,398.0ZM110.2,396.0 L109.8,396.6 L109.1,396.0 L109.7,395.4Z" fill="#dadada"/><path d="M109.6,398.4 L110.9,402.5M110.9,400.1 l0.6,-0.1" stroke="#3c3c3c" stroke-width="0.63" fill="none"/><path d="M61.4,412.2 L62.4,418.7 M59.7,412.2 L58.4,418.0 M52.4,412.2 L50.7,418.7 M54.1,412.2 L55.8,418.4M50.7,410.9 Q46.5,407.0 47.4,412.2" stroke="#b6b6b6" stroke-width="1.30" fill="none" stroke-linecap="round"/><path d="M63.4,411.6 L59.9,413.6 L51.8,413.6 L49.4,411.6 L53.5,409.2 L60.2,410.1ZM65.3,409.4 L64.1,411.5 L62.5,410.7 L62.5,408.3 L64.4,407.8Z" fill="#b6b6b6"/><path d="" fill="#6e6e6e"/><path d="M59.5,410.7 L57.1,411.3 L53.6,411.1 L54.0,410.3 L58.4,409.9Z" fill="#dadada"/><path d="M52.4,412.4 L60.9,412.2M53.5,414.1 l0.9,1.8M58.4,411.6 l-1.6,-1.3M54.8,413.7 l-0.7,-1.4" stroke="#3c3c3c" stroke-width="0.78" fill="none"/><path d="M45.6,415.3 L42.6,418.6 M48.7,415.3 L48.7,418.6M48.7,410.8 L52.8,412.8M45.6,411.2 L43.9,416.6" stroke="#9e9e9e" stroke-width="1.30" fill="none" stroke-linecap="round"/><path d="M50.4,412.5 L48.2,415.6 L44.9,416.1 L44.1,412.4 L45.2,408.8 L48.1,409.7ZM51.1,407.6 L49.8,409.0 L47.6,408.7 L47.5,406.6 L49.3,405.5Z" fill="#9e9e9e"/><path d="M50.0,413.6 L48.9,415.6 L47.3,415.3 L47.3,411.5 L48.6,410.9Z" fill="#6e6e6e"/><path d="M47.1,411.7 L46.6,413.2 L45.5,412.4 L45.5,410.0 L46.7,410.0ZM49.3,407.1 L48.6,407.8 L47.9,407.1 L48.4,406.2Z" fill="#dadada"/><path d="M46.5,410.1 L48.2,415.3M42.9,411.1 l-0.1,-1.5" stroke="#3c3c3c" stroke-width="0.78" fill="none"/><path d="M311.4,424.5 L310.8,427.7 M314.5,424.5 L316.9,427.7M314.5,419.9 L318.3,422.5M311.4,420.3 L309.7,425.8" stroke="#a2a2a2" stroke-width="1.30" fill="none" stroke-linecap="round"/><path d="M316.1,421.6 L314.6,425.5 L311.0,424.7 L310.1,422.1 L311.7,418.5 L314.1,418.7ZM313.2,416.7 L312.1,418.4 L309.9,418.0 L309.7,415.9 L311.8,415.0Z" fill="#a2a2a2"/><path d="M315.7,422.4 L314.7,425.6 L313.2,424.3 L313.2,421.1 L314.7,420.3Z" fill="#6e6e6e"/><path d="M312.9,420.8 L312.5,422.2 L311.3,421.9 L311.4,419.0 L312.3,419.0ZM311.7,416.2 L311.1,417.0 L310.1,416.4 L310.9,415.6Z" fill="#dadada"/><path d="M312.3,419.3 L314.0,424.5M314.9,421.0 l-0.8,-0.7" stroke="#3c3c3c" stroke-width="0.78" fill="none"/><path d="M332.5,396.1 L331.8,400.9 M333.7,396.1 L334.7,400.4 M339.1,396.1 L340.3,400.9 M337.9,396.1 L336.6,400.7M340.3,395.1 Q343.5,392.3 342.8,396.1" stroke="#9e9e9e" stroke-width="0.96" fill="none" stroke-linecap="round"/><path d="M341.6,395.5 L337.6,397.3 L334.4,396.9 L331.3,395.6 L333.9,393.7 L338.6,394.4ZM332.0,394.4 L331.3,395.2 L329.5,394.8 L329.8,393.3 L330.9,392.8Z" fill="#9e9e9e"/><path d="" fill="#6e6e6e"/><path d="M338.7,394.9 L336.7,395.5 L333.6,395.3 L334.3,394.6 L336.9,394.5Z" fill="#dadada"/><path d="M332.9,396.3 L339.1,396.1M337.3,398.0 l0.8,0.4M337.3,396.4 l0.9,-1.1" stroke="#3c3c3c" stroke-width="0.57" fill="none"/><path d="M433.1,417.7 L430.2,421.0 M436.2,417.7 L436.3,421.0M433.1,413.2 L431.1,411.3M436.2,413.5 L437.9,419.0" stroke="#b6b6b6" stroke-width="1.30" fill="none" stroke-linecap="round"/><path d="M437.9,415.3 L435.8,418.5 L432.7,418.1 L431.2,414.5 L432.9,411.3 L436.3,410.9ZM438.3,410.0 L437.1,411.6 L434.5,411.0 L434.8,409.0 L436.7,408.2Z" fill="#b6b6b6"/><path d="M434.7,415.6 L433.9,418.3 L432.1,417.5 L432.3,414.1 L434.0,413.1Z" fill="#6e6e6e"/><path d="M436.4,414.0 L435.6,416.0 L434.8,415.1 L434.6,412.6 L435.6,412.2ZM437.5,409.5 L437.0,410.3 L436.0,409.4 L436.9,408.8Z" fill="#dadada"/><path d="M435.3,412.5 L433.6,417.7M435.3,417.1 l-1.6,-0.4M433.4,412.6 l1.6,-0.5" stroke="#3c3c3c" stroke-width="0.78" fill="none"/><path d="" stroke="#9e9e9e" stroke-width="0.95" fill="none" stroke-linecap="round"/><path d="M119.8,398.8 L117.5,399.5 L112.6,400.2 L109.3,399.4 L108.2,398.1 L112.5,397.6 L118.0,397.8ZM121.5,398.0 L120.8,399.2 L119.5,398.9 L119.5,397.4 L120.8,397.1Z" fill="#9e9e9e"/><path d="" fill="#6e6e6e"/><path d="M116.4,398.1 L115.3,398.5 L112.4,398.3 L112.2,397.9 L115.3,397.7Z" fill="#dadada"/><path d="M110.4,399.3 L117.7,398.6M114.7,399.0 l1.4,-1.1" stroke="#3c3c3c" stroke-width="0.57" fill="none"/><path d="M404.0,415.5 L401.4,418.7 M407.2,415.5 L407.5,418.7M404.0,410.9 L401.8,409.3M407.2,411.3 L408.8,416.8" stroke="#a2a2a2" stroke-width="1.30" fill="none" stroke-linecap="round"/><path d="M408.5,413.4 L407.7,416.8 L403.4,416.0 L402.6,412.7 L403.7,410.1 L407.0,409.1ZM408.9,407.4 L407.4,409.5 L405.3,408.7 L405.8,406.6 L407.6,405.5Z" fill="#a2a2a2"/><path d="M405.7,413.7 L404.4,415.8 L403.5,415.1 L403.0,411.7 L404.7,410.5Z" fill="#6e6e6e"/><path d="M407.3,412.0 L406.6,413.5 L405.6,412.6 L405.7,410.7 L406.6,409.5ZM408.1,407.2 L407.4,408.2 L406.6,407.2 L407.5,406.6Z" fill="#dadada"/><path d="M406.2,410.3 L404.6,415.5M401.0,415.3 l1.2,1.3M404.3,409.9 l0.9,-1.6M404.9,409.8 l-1.9,-1.1" stroke="#3c3c3c" stroke-width="0.78" fill="none"/><path d="M287.2,417.5 L284.8,420.8 M290.3,417.5 L290.9,420.8M290.3,413.0 L293.4,410.6M287.2,413.4 L285.5,418.8" stroke="#9e9e9e" stroke-width="1.30" fill="none" stroke-linecap="round"/><path d="M291.8,414.9 L290.0,418.5 L286.9,417.4 L285.7,414.8 L286.4,411.7 L290.5,411.4ZM291.8,409.7 L290.1,411.9 L288.0,410.6 L288.1,409.0 L289.9,408.0Z" fill="#9e9e9e"/><path d="M291.4,415.0 L290.2,418.4 L289.2,417.4 L288.9,413.6 L290.3,412.8Z" fill="#6e6e6e"/><path d="M288.7,413.7 L288.1,415.2 L287.1,414.8 L287.3,412.2 L288.3,411.9ZM290.1,409.2 L289.3,410.2 L288.4,409.2 L289.1,408.4Z" fill="#dadada"/><path d="M288.1,412.3 L289.8,417.5M285.4,411.9 l0.8,1.2M285.7,417.8 l1.0,-1.3" stroke="#3c3c3c" stroke-width="0.78" fill="none"/><path d="" stroke="#9e9e9e" stroke-width="1.29" fill="none" stroke-linecap="round"/><path d="M83.9,415.4 L81.3,416.6 L74.0,417.2 L69.0,416.6 L67.9,414.1 L72.7,413.5 L81.6,413.7ZM85.3,414.2 L84.2,415.7 L82.6,415.5 L82.8,413.4 L84.4,412.8Z" fill="#9e9e9e"/><path d="" fill="#6e6e6e"/><path d="M78.9,414.5 L77.0,415.0 L73.5,414.9 L73.5,414.2 L76.7,414.0Z" fill="#dadada"/><path d="M70.3,416.2 L80.2,415.1M73.7,414.0 l-0.6,1.0" stroke="#3c3c3c" stroke-width="0.78" fill="none"/><path d="M292.8,395.4 L292.1,400.1 M294.0,395.4 L295.0,399.6 M299.3,395.4 L300.5,400.1 M298.1,395.4 L296.8,399.9M300.5,394.5 Q303.6,391.6 303.0,395.4" stroke="#a2a2a2" stroke-width="0.94" fill="none" stroke-linecap="round"/><path d="M300.8,394.8 L299.3,396.6 L294.3,396.1 L291.7,395.0 L293.5,393.8 L299.2,393.5ZM292.3,393.5 L291.3,394.6 L290.1,394.3 L290.0,392.7 L291.7,392.3Z" fill="#a2a2a2"/><path d="" fill="#6e6e6e"/><path d="M299.0,394.4 L297.3,394.8 L293.9,394.6 L294.8,394.0 L297.2,393.6Z" fill="#dadada"/><path d="M293.2,395.6 L299.3,395.4M295.9,398.5 l0.8,1.0M296.2,394.2 l-0.4,-1.2" stroke="#3c3c3c" stroke-width="0.57" fill="none"/><path d="M180.4,408.6 L179.9,411.5 M183.3,408.6 L185.4,411.5M183.3,404.5 L186.9,404.7M180.4,404.9 L178.9,409.8" stroke="#a2a2a2" stroke-width="1.17" fill="none" stroke-linecap="round"/><path d="M185.0,406.0 L183.4,409.9 L179.8,409.5 L179.2,406.3 L180.1,403.9 L183.6,402.8ZM181.9,401.5 L181.3,403.1 L179.0,402.6 L178.9,400.7 L180.9,400.1Z" fill="#a2a2a2"/><path d="M184.3,406.4 L183.4,409.4 L182.1,408.1 L181.9,405.6 L183.4,404.2Z" fill="#6e6e6e"/><path d="M181.8,405.2 L181.4,406.9 L180.4,406.1 L180.6,403.9 L181.4,403.3ZM180.8,401.1 L180.1,402.1 L179.2,401.2 L180.0,400.6Z" fill="#dadada"/><path d="M181.3,403.9 L182.8,408.6M183.2,409.7 l1.1,0.2M183.4,406.0 l1.4,1.2" stroke="#3c3c3c" stroke-width="0.70" fill="none"/><path d="M90.7,418.6 L91.7,425.1 M89.0,418.6 L87.7,424.4 M81.8,418.6 L80.1,425.1 M83.4,418.6 L85.1,424.8M80.1,417.3 Q75.8,413.4 76.7,418.6" stroke="#a2a2a2" stroke-width="1.30" fill="none" stroke-linecap="round"/><path d="M92.9,417.8 L89.3,420.0 L81.2,420.0 L79.8,417.9 L83.1,415.6 L88.3,415.7ZM94.8,415.8 L93.8,417.4 L91.9,417.0 L91.6,414.8 L93.7,414.3Z" fill="#a2a2a2"/><path d="" fill="#6e6e6e"/><path d="M89.2,417.1 L87.2,417.8 L83.2,417.6 L83.3,416.3 L86.5,416.1Z" fill="#dadada"/><path d="M81.8,418.8 L90.2,418.6M87.5,420.8 l-0.2,-0.8" stroke="#3c3c3c" stroke-width="0.78" fill="none"/><path d="M41.5,418.5 L39.5,421.7 M44.7,418.5 L45.6,421.7M41.5,413.9 L37.4,414.0M44.7,414.3 L46.3,419.8" stroke="#b6b6b6" stroke-width="1.30" fill="none" stroke-linecap="round"/><path d="M46.6,416.4 L44.7,419.9 L41.4,419.5 L40.4,416.4 L41.3,412.3 L44.7,411.7ZM45.4,411.0 L44.0,412.4 L42.0,411.4 L42.3,409.6 L44.1,408.9Z" fill="#b6b6b6"/><path d="M43.1,416.3 L42.3,419.8 L40.9,418.3 L40.8,414.8 L42.1,414.2Z" fill="#6e6e6e"/><path d="M44.6,414.8 L44.3,416.7 L43.3,415.6 L43.1,413.7 L44.1,412.8ZM44.7,410.2 L43.9,411.0 L43.1,410.3 L44.0,409.4Z" fill="#dadada"/><path d="M43.7,413.3 L42.1,418.5M39.7,417.3 l1.7,-0.5M45.3,419.2 l-1.3,0.6" stroke="#3c3c3c" stroke-width="0.78" fill="none"/><path d="M86.4,436.2 L84.9,439.4 M89.6,436.2 L91.0,439.4M86.4,431.6 L84.2,432.8M89.6,432.0 L91.3,437.5" stroke="#a9a9a9" stroke-width="1.30" fill="none" stroke-linecap="round"/><path d="M91.3,433.0 L89.6,437.6 L86.2,436.1 L84.5,433.6 L85.9,429.7 L89.9,429.7ZM89.9,428.0 L88.1,430.5 L86.2,429.8 L86.0,427.5 L88.2,426.5Z" fill="#a9a9a9"/><path d="M87.9,433.7 L87.0,437.4 L85.5,436.1 L85.8,432.4 L87.2,431.6Z" fill="#6e6e6e"/><path d="M89.8,432.2 L89.0,434.0 L88.2,433.5 L88.0,431.3 L89.1,430.2ZM88.8,428.1 L88.2,428.8 L87.3,428.1 L88.0,427.2Z" fill="#dadada"/><path d="M88.7,431.0 L87.0,436.2M85.3,433.7 l-1.4,-0.6M89.0,430.7 l-0.5,1.8M84.8,434.7 l-0.6,-1.6" stroke="#3c3c3c" stroke-width="0.78" fill="none"/><path d="M122.2,431.4 L119.5,434.7 M125.3,431.4 L125.6,434.7M122.2,426.9 L118.0,429.0M125.3,427.3 L127.0,432.7" stroke="#b6b6b6" stroke-width="1.30" fill="none" stroke-linecap="round"/><path d="M127.3,429.1 L125.1,431.9 L121.8,432.8 L120.8,429.6 L122.1,425.9 L125.8,425.5ZM127.5,423.7 L125.9,425.7 L123.6,425.0 L123.9,422.3 L125.8,421.9Z" fill="#b6b6b6"/><path d="M123.9,429.0 L122.6,431.8 L121.5,431.7 L121.5,427.4 L122.9,426.9Z" fill="#6e6e6e"/><path d="M125.5,427.2 L124.9,429.5 L123.7,429.0 L123.7,426.3 L124.8,425.4ZM126.5,423.3 L125.7,424.2 L124.9,423.2 L125.7,422.5Z" fill="#dadada"/><path d="M124.4,426.2 L122.7,431.4M125.7,432.0 l1.0,-0.9M124.1,431.3 l-0.5,0.4" stroke="#3c3c3c" stroke-width="0.78" fill="none"/><path d="M50.6,433.9 L49.0,437.1 M53.8,433.9 L55.1,437.1M53.8,429.3 L55.4,434.5M50.6,429.7 L48.9,435.2" stroke="#b6b6b6" stroke-width="1.30" fill="none" stroke-linecap="round"/><path d="M55.1,431.3 L53.3,434.4 L50.7,435.2 L48.9,430.8 L50.1,428.2 L53.5,428.1ZM54.2,426.1 L52.7,428.1 L50.5,427.3 L50.6,425.3 L53.0,424.0Z" fill="#b6b6b6"/><path d="M54.8,431.4 L54.0,434.2 L52.5,434.0 L52.6,429.8 L53.7,428.9Z" fill="#6e6e6e"/><path d="M52.4,430.1 L51.6,432.0 L50.7,431.5 L50.5,428.7 L51.9,428.2ZM52.6,425.7 L51.8,426.6 L50.9,425.8 L51.7,424.9Z" fill="#dadada"/><path d="M51.5,428.7 L53.2,433.9M56.0,433.3 l0.3,-1.7M49.1,432.3 l0.1,-1.2" stroke="#3c3c3c" stroke-width="0.78" fill="none"/><path d="M24.9,416.1 L23.9,422.6 M26.6,416.1 L28.0,422.0 M33.9,416.1 L35.6,422.6 M32.2,416.1 L30.5,422.4M35.6,414.8 Q39.8,410.9 39.0,416.1" stroke="#a9a9a9" stroke-width="1.30" fill="none" stroke-linecap="round"/><path d="M36.8,415.8 L31.9,417.5 L25.5,417.4 L23.2,415.4 L26.1,413.7 L33.9,413.7ZM24.0,413.5 L23.0,415.0 L21.4,414.7 L21.3,412.6 L22.9,411.7Z" fill="#a9a9a9"/><path d="" fill="#6e6e6e"/><path d="M32.8,414.7 L31.1,415.3 L27.3,415.0 L26.2,414.2 L30.6,413.8Z" fill="#dadada"/><path d="M25.5,416.4 L33.9,416.1M30.1,419.0 l1.2,0.1M32.6,419.4 l-0.3,-0.9" stroke="#3c3c3c" stroke-width="0.78" fill="none"/><path d="M123.5,428.8 L122.1,432.0 M126.6,428.8 L128.3,432.0M126.6,424.2 L128.0,428.5M123.5,424.6 L121.8,430.1" stroke="#a2a2a2" stroke-width="1.30" fill="none" stroke-linecap="round"/><path d="M127.7,426.7 L126.0,429.3 L123.2,429.1 L121.7,426.6 L123.6,423.6 L126.4,422.3ZM126.8,420.9 L125.3,423.0 L123.1,422.1 L123.1,419.6 L125.2,418.8Z" fill="#a2a2a2"/><path d="M127.9,427.1 L127.0,429.7 L125.4,428.7 L125.3,425.4 L126.9,424.6Z" fill="#6e6e6e"/><path d="M125.3,425.1 L124.6,426.9 L123.6,426.4 L123.7,423.6 L124.7,423.0ZM125.1,420.6 L124.2,421.3 L123.4,420.6 L124.1,419.8Z" fill="#dadada"/><path d="M124.4,423.6 L126.1,428.8M121.6,429.1 l-0.6,-0.5M126.9,427.0 l-0.8,-1.3M124.8,429.3 l1.9,0.8" stroke="#3c3c3c" stroke-width="0.78" fill="none"/><path d="M101.3,430.5 L98.8,433.7 M104.5,430.5 L104.9,433.7M104.5,425.9 L105.6,428.2M101.3,426.3 L99.7,431.8" stroke="#a2a2a2" stroke-width="1.30" fill="none" stroke-linecap="round"/><path d="M106.1,427.1 L104.9,431.7 L101.3,430.8 L99.7,428.6 L101.4,424.5 L104.3,425.2ZM106.4,423.0 L104.5,424.8 L102.8,423.6 L103.0,421.4 L105.0,421.0Z" fill="#a2a2a2"/><path d="M105.7,428.4 L104.6,430.9 L103.1,430.9 L103.3,426.6 L104.5,425.9Z" fill="#6e6e6e"/><path d="M103.2,426.4 L102.5,428.5 L101.5,427.6 L101.4,425.7 L102.5,424.6ZM104.5,422.4 L103.9,423.0 L103.2,422.4 L103.9,421.7Z" fill="#dadada"/><path d="M102.3,425.3 L103.9,430.5M102.7,430.8 l0.8,1.1M99.0,429.4 l-1.3,0.4M104.9,427.2 l-1.3,0.6" stroke="#3c3c3c" stroke-width="0.78" fill="none"/><path d="M45.7,423.7 L44.7,430.2 M47.4,423.7 L48.8,429.5 M54.7,423.7 L56.4,430.2 M53.0,423.7 L51.3,429.9M56.4,422.4 Q60.6,418.5 59.7,423.7" stroke="#b6b6b6" stroke-width="1.30" fill="none" stroke-linecap="round"/><path d="M57.6,423.3 L52.8,424.8 L47.3,424.9 L43.8,422.7 L47.5,420.5 L53.5,421.1ZM45.2,421.3 L43.7,422.6 L41.8,422.2 L42.0,419.8 L44.2,419.3Z" fill="#b6b6b6"/><path d="" fill="#6e6e6e"/><path d="M53.6,422.0 L51.7,422.8 L48.3,422.6 L48.0,421.7 L50.9,421.5Z" fill="#dadada"/><path d="M46.2,423.9 L54.7,423.7M50.9,422.7 l-0.2,-0.5M50.3,422.3 l1.0,1.7M51.5,427.9 l1.2,0.1" stroke="#3c3c3c" stroke-width="0.78" fill="none"/><path d="M75.5,427.3 L74.5,433.8 M77.2,427.3 L78.6,433.2 M84.5,427.3 L86.2,433.8 M82.8,427.3 L81.1,433.6M86.2,426.0 Q90.4,422.1 89.6,427.3" stroke="#b6b6b6" stroke-width="1.30" fill="none" stroke-linecap="round"/><path d="M85.4,427.0 L83.6,428.3 L76.7,428.5 L74.2,426.8 L75.5,424.5 L82.8,424.8ZM74.7,424.6 L73.3,426.2 L72.1,425.8 L71.6,423.8 L73.5,423.1Z" fill="#b6b6b6"/><path d="" fill="#6e6e6e"/><path d="M83.0,425.7 L81.8,426.5 L77.2,426.2 L77.5,425.1 L81.2,425.0Z" fill="#dadada"/><path d="M76.0,427.6 L84.5,427.3M80.3,428.3 l0.5,0.8M83.3,431.7 l1.8,1.2" stroke="#3c3c3c" stroke-width="0.78" fill="none"/><path d="M396.4,436.7 L395.7,440.0 M399.5,436.7 L401.8,440.0M399.5,432.2 L400.6,428.0M396.4,432.6 L394.7,438.0" stroke="#9e9e9e" stroke-width="1.30" fill="none" stroke-linecap="round"/><path d="M401.7,434.2 L399.5,437.0 L396.1,437.6 L394.3,434.9 L396.5,430.9 L399.3,430.9ZM398.5,429.2 L397.2,430.8 L394.7,430.1 L394.8,427.8 L396.9,427.0Z" fill="#9e9e9e"/><path d="M400.5,434.8 L399.7,437.3 L398.2,436.9 L398.1,433.0 L399.8,432.4Z" fill="#6e6e6e"/><path d="M398.2,432.7 L397.3,434.8 L396.4,433.7 L396.3,431.4 L397.6,430.9ZM396.6,428.5 L395.8,429.4 L395.2,428.6 L395.9,427.9Z" fill="#dadada"/><path d="M397.3,431.5 L399.0,436.7M397.9,435.4 l-1.1,1.3M395.1,434.7 l0.3,-1.2" stroke="#3c3c3c" stroke-width="0.78" fill="none"/><path d="M442.6,430.4 L439.9,433.7 M445.7,430.4 L446.0,433.7M445.7,425.9 L448.7,427.7M442.6,426.2 L440.9,431.7" stroke="#9e9e9e" stroke-width="1.30" fill="none" stroke-linecap="round"/><path d="M447.2,428.5 L445.2,430.7 L442.6,431.3 L440.6,428.2 L442.9,424.7 L445.4,423.5ZM447.3,422.3 L445.8,424.3 L443.8,423.7 L443.7,421.4 L446.3,421.0Z" fill="#9e9e9e"/><path d="M446.6,428.6 L445.6,431.6 L444.5,430.3 L444.3,427.3 L445.9,425.5Z" fill="#6e6e6e"/><path d="M444.4,426.9 L443.5,428.6 L442.6,427.7 L442.4,425.5 L443.7,424.8ZM446.1,422.4 L445.2,422.8 L444.5,422.2 L445.1,421.3Z" fill="#dadada"/><path d="M443.5,425.2 L445.2,430.4M444.2,430.7 l-0.9,-1.3" stroke="#3c3c3c" stroke-width="0.78" fill="none"/><path d="M358.3,420.8 L357.6,424.1 M361.4,420.8 L363.7,424.1M358.3,416.3 L357.0,421.6M361.4,416.7 L363.1,422.1" stroke="#b6b6b6" stroke-width="1.30" fill="none" stroke-linecap="round"/><path d="M362.5,418.2 L362.1,421.8 L358.7,421.9 L356.4,419.0 L358.5,414.1 L362.2,414.5ZM360.2,412.9 L359.3,414.6 L357.0,414.2 L356.7,411.7 L358.8,411.3Z" fill="#b6b6b6"/><path d="M360.0,419.4 L358.7,421.4 L357.6,421.0 L357.2,417.4 L359.2,415.7Z" fill="#6e6e6e"/><path d="M361.7,417.0 L361.1,419.0 L359.8,418.3 L360.0,416.0 L361.0,415.4ZM359.5,412.8 L358.9,413.4 L358.1,412.7 L358.8,411.9Z" fill="#dadada"/><path d="M360.5,415.6 L358.8,420.8M358.7,418.8 l0.1,-0.9" stroke="#3c3c3c" stroke-width="0.78" fill="none"/><path d="M315.7,432.1 L316.8,438.6 M314.1,432.1 L312.7,437.9 M306.8,432.1 L305.1,438.6 M308.5,432.1 L310.2,438.3M305.1,430.8 Q300.9,426.9 301.7,432.1" stroke="#9e9e9e" stroke-width="1.30" fill="none" stroke-linecap="round"/><path d="M316.2,431.6 L315.2,433.6 L308.3,433.2 L305.4,431.0 L306.8,429.4 L315.6,429.5ZM319.5,429.2 L318.8,431.1 L316.8,430.1 L316.7,428.3 L318.4,427.6Z" fill="#9e9e9e"/><path d="" fill="#6e6e6e"/><path d="M314.2,430.5 L311.7,431.3 L308.7,430.9 L308.8,430.1 L312.6,429.7Z" fill="#dadada"/><path d="M306.8,432.3 L315.2,432.1M308.1,434.6 l-1.9,-1.3M313.0,434.5 l-0.1,-1.5M312.8,435.6 l-0.7,-1.1" stroke="#3c3c3c" stroke-width="0.78" fill="none"/><path d="M331.9,441.4 L331.3,444.6 M335.1,441.4 L337.5,444.6M335.1,436.8 L338.5,441.0M331.9,437.2 L330.2,442.7" stroke="#9e9e9e" stroke-width="1.30" fill="none" stroke-linecap="round"/><path d="M337.4,439.3 L334.7,443.1 L331.9,441.5 L330.9,439.2 L331.8,436.3 L334.9,435.3ZM333.8,433.5 L332.6,435.6 L330.2,434.4 L330.2,432.6 L332.5,431.5Z" fill="#9e9e9e"/><path d="M336.3,439.7 L335.3,442.5 L333.9,441.5 L333.9,437.6 L335.0,436.8Z" fill="#6e6e6e"/><path d="M333.6,437.2 L332.9,439.5 L332.0,438.4 L332.1,436.1 L332.9,435.5ZM332.3,433.2 L331.4,434.1 L330.7,433.3 L331.3,432.5Z" fill="#dadada"/><path d="M332.8,436.2 L334.5,441.4M333.9,441.5 l1.0,-1.2M335.8,442.6 l-0.4,0.2" stroke="#3c3c3c" stroke-width="0.78" fill="none"/><path d="M390.4,431.5 L389.4,438.0 M392.1,431.5 L393.4,437.3 M399.3,431.5 L401.0,438.0 M397.7,431.5 L396.0,437.7M401.0,430.2 Q405.3,426.3 404.4,431.5" stroke="#a2a2a2" stroke-width="1.30" fill="none" stroke-linecap="round"/><path d="M400.6,430.5 L398.1,432.6 L392.8,433.3 L387.8,431.0 L392.7,428.8 L398.0,428.4ZM389.5,428.8 L388.6,430.7 L386.5,429.7 L386.5,427.8 L388.7,427.5Z" fill="#a2a2a2"/><path d="" fill="#6e6e6e"/><path d="M398.0,429.9 L395.9,430.8 L392.2,430.3 L392.9,429.6 L396.6,429.1Z" fill="#dadada"/><path d="M390.9,431.8 L399.3,431.5M392.1,429.4 l1.6,-0.2M394.7,429.8 l1.9,-1.9M397.3,429.2 l-0.8,-0.1" stroke="#3c3c3c" stroke-width="0.78" fill="none"/><path d="M363.9,434.4 L362.8,437.6 M367.0,434.4 L368.9,437.6M363.9,429.8 L361.2,434.7M367.0,430.2 L368.7,435.7" stroke="#b6b6b6" stroke-width="1.30" fill="none" stroke-linecap="round"/><path d="M368.7,431.4 L366.9,434.5 L364.5,434.7 L362.1,432.5 L364.4,427.9 L366.8,428.0ZM366.5,426.5 L365.4,428.4 L363.2,427.8 L363.0,425.8 L365.0,424.6Z" fill="#b6b6b6"/><path d="M365.4,432.4 L364.4,434.9 L363.4,433.9 L362.9,430.7 L364.6,429.4Z" fill="#6e6e6e"/><path d="M367.3,430.8 L366.5,432.1 L365.6,431.2 L365.6,429.6 L366.7,428.5ZM365.7,426.3 L365.0,427.0 L364.3,426.2 L365.2,425.4Z" fill="#dadada"/><path d="M366.1,429.2 L364.4,434.4M365.0,432.4 l-0.3,1.6M368.8,431.4 l-0.5,-0.7M367.3,433.3 l0.5,0.1" stroke="#3c3c3c" stroke-width="0.78" fill="none"/><path d="M395.4,416.9 L394.1,420.2 M398.5,416.9 L400.2,420.2M395.4,412.4 L393.0,411.1M398.5,412.7 L400.2,418.2" stroke="#a2a2a2" stroke-width="1.30" fill="none" stroke-linecap="round"/><path d="M400.2,414.8 L398.1,417.9 L395.7,418.6 L394.0,414.7 L395.3,411.4 L398.9,411.5ZM398.5,409.4 L397.2,410.6 L394.7,410.3 L394.8,408.3 L397.1,407.6Z" fill="#a2a2a2"/><path d="M397.0,414.7 L396.1,417.4 L394.4,416.6 L394.6,413.5 L396.2,411.8Z" fill="#6e6e6e"/><path d="M398.5,413.1 L398.0,414.9 L397.1,414.2 L397.0,411.8 L398.0,411.0ZM397.5,408.6 L396.7,409.4 L395.9,408.8 L396.8,408.1Z" fill="#dadada"/><path d="M397.6,411.7 L395.9,416.9M395.4,412.7 l1.2,-0.1" stroke="#3c3c3c" stroke-width="0.78" fill="none"/><path d="M380.9,433.2 L378.5,436.4 M384.0,433.2 L384.6,436.4M380.9,428.6 L379.1,430.8M384.0,429.0 L385.7,434.5" stroke="#b6b6b6" stroke-width="1.30" fill="none" stroke-linecap="round"/><path d="M385.1,429.9 L384.0,433.3 L381.3,433.8 L378.8,430.0 L380.8,427.1 L384.4,427.3ZM385.3,425.3 L383.6,427.0 L381.6,426.3 L382.0,424.0 L384.0,423.8Z" fill="#b6b6b6"/><path d="M382.4,430.7 L381.7,433.8 L380.1,432.3 L380.0,429.6 L381.6,428.7Z" fill="#6e6e6e"/><path d="M384.1,429.1 L383.3,431.2 L382.4,430.3 L382.3,428.1 L383.4,427.7ZM384.5,424.9 L383.8,425.7 L382.8,425.1 L383.7,424.2Z" fill="#dadada"/><path d="M383.1,428.0 L381.4,433.2M378.2,434.1 l-0.3,1.9M384.6,427.4 l-0.2,0.4M383.7,433.1 l1.7,1.3" stroke="#3c3c3c" stroke-width="0.78" fill="none"/><path d="M334.5,418.6 L333.5,425.1 M336.2,418.6 L337.5,424.4 M343.4,418.6 L345.1,425.1 M341.7,418.6 L340.1,424.8M345.1,417.3 Q349.3,413.4 348.5,418.6" stroke="#a2a2a2" stroke-width="1.30" fill="none" stroke-linecap="round"/><path d="M345.7,418.1 L341.9,420.1 L335.9,419.5 L332.5,418.0 L335.0,416.1 L342.6,416.4ZM333.9,416.1 L332.4,417.9 L330.6,416.9 L330.8,415.0 L332.7,414.5Z" fill="#a2a2a2"/><path d="" fill="#6e6e6e"/><path d="M342.6,417.1 L340.3,417.8 L335.9,417.5 L336.5,416.4 L339.8,416.4Z" fill="#dadada"/><path d="M335.0,418.8 L343.4,418.6M342.0,417.2 l-0.9,1.6" stroke="#3c3c3c" stroke-width="0.78" fill="none"/><use href="#base" x="308" y="423" width="8" height="3"/><use href="#base" x="318" y="410" width="8" height="3"/><use href="#base" x="431" y="426" width="8" height="3"/><use href="#base" x="394" y="434" width="8" height="3"/><use href="#base" x="416" y="410" width="8" height="3"/><path d="M2.5,487.5 L6,481 L10,475.5 L14,468 C17,462 24,459.5 30,458 C33,456 35,454 36.5,451.5 C39,450.5 42,451.5 42.5,454 C42,457 41.5,460 41.3,464 L41,472 L41.5,480 L38.5,480.5 L37.5,472 L34,470.5 L26,471 L23.5,474 L22.5,485.5 L19,487 L20.5,477 L16,476 L12.5,481 L5,488.5 Z" fill="#8c8c8c"/><path d="M16,466 C22,468 30,467 36,462 M39.5,462 L39,478 M10,471 C6,472 3,474 0,474" fill="none" stroke="#666666" stroke-width="1"/><path d="M32.5,434 C34,436 36,440 39,442 C40,438 42,434.5 44.5,435 C47,436 48,440 47.5,444 L50,450 L51,456 L48.5,456 L46,450 L42,449 L38,444 L33,438 Z" fill="#8c8c8c"/><path d="M41,444 L45,448" stroke="#666666" stroke-width="1"/><path d="M60.5,448 C62,444 68,441.5 74,442 C78,442.5 82,444 83,446.5 C81,450 76,452 70,452.5 C66,453 62,451 60.5,448 Z" fill="#9c9c9c"/><path d="M70,455 C74,452 84,451.5 90,453.5 C94,455 96,459 95,463 L96,473.5 L93.5,474 L92,466 L88,467 L86.5,471 L84,470 L83,466 L81,467 L81,479 L78.5,479.5 L77,468 L74,465.5 L68,468 L66,467 L72,462 Z" fill="#8c8c8c"/><path d="M87.5,454 C92,458 97,461 103,461" fill="none" stroke="#8c8c8c" stroke-width="1.3"/><path d="M76,458 C80,461 86,460 90,457" fill="none" stroke="#666666" stroke-width="0.9"/><path d="M336,449 C338,450 340,451 342,451 C343,447 346,443 348,440 C346,437 346,433 348,431.5 C351,431 352,434 351,437 C354,438 357,436 360.5,435 L359,430 L361,431 L362,436.5 C359,440 355,441 352,442 C352,446 354,450 362,452.5 L361.5,454 C355,454 348,454 341,453 Z" fill="#8c8c8c"/><path d="M367,502 C365,496 363,490 366,483 C366,478 369,475 371,474 C369,470 371,467 374,467.5 C378,468 379,471 378,474 C383,476 386,482 386.5,490 L387,503 C380,505 373,505 367,502 Z" fill="#9c9c9c"/><path d="M360.5,496 C362,492 365,488 367,486 M370,485 C374,489 380,488 383,484" fill="none" stroke="#8c8c8c" stroke-width="1.5"/><path d="M390,501 C388,492 388,482 391,476 C390,472 391,468 394,467.5 C397,467 399,470 398,473 C403,475 407,480 408,488 L409.5,500 L406.5,500 L405,490 C403,494 400,495 397,494 C394,495 392,494 392,490 L393,501 Z" fill="#969696"/><path d="M394,482 C397,485 401,485 404,482 M397,488 L397,493" fill="none" stroke="#666666" stroke-width="0.9"/><path d="M378,502.5 Q386,513 401,500" fill="none" stroke="#999" stroke-width="1.6"/><path d="M398,460 Q412,461.5 428,458" fill="none" stroke="#9c9c9c" stroke-width="1.5"/><path d="M427,460 C430,457 438,457.5 444,460 C448,461 451,462 452,464 L452,470 L446,470 L441,468.5 L438.5,472 L438,479.5 L442,481 L436,481 L435,470 L432,466 L425,479 L426.5,482 L422,480 L428,466 Z" fill="#939393"/><path d="M444,461 C447,464 449,466 451,468" fill="none" stroke="#666666" stroke-width="1"/><path d="M428,506 L429,497 L433,496 L434,492 L439,493 L443,491 L447,494 L448.5,507 Z" fill="#8a8a8a"/><path d="M430,500 L447,500 M430,503.5 L448,503.5 M435,493 L435,506 M440,493 L440,506 M444.5,493 L444.5,506" stroke="#c4c4c4" stroke-width="0.8"/></svg></div><div class="a" style="left:452px;top:31px;width:665px;height:624px;border-radius:4px 0 0 4px;overflow:hidden"><svg width="665" height="624" viewBox="452 31 665 624"><defs><linearGradient id="ceil" x1="0" x2="1" y1="0" y2="1"><stop offset="0" stop-color="#393532"/><stop offset="1" stop-color="#3a3734"/></linearGradient></defs><rect x="440" y="20" width="700" height="700" fill="#383838"/><polygon points="440,40 536,56.4 1117,219 1117,300 768,307 440,300" fill="#3b3935"/><line x1="452" y1="165" x2="1000" y2="252" stroke="#33312e" stroke-width="0.8"/><line x1="452" y1="210" x2="1117" y2="300" stroke="#33312e" stroke-width="0.8"/><line x1="520" y1="252" x2="1117" y2="262" stroke="#35332f" stroke-width="0.6"/><line x1="767" y1="120" x2="517" y2="300" stroke="#a9a7a3" stroke-width="0.8"/><line x1="915" y1="163" x2="560" y2="300" stroke="#a9a7a3" stroke-width="0.8"/><line x1="1117" y1="225" x2="600" y2="300" stroke="#6e6b67" stroke-width="0.7"/><line x1="1117" y1="262" x2="650" y2="300" stroke="#55524f" stroke-width="0.7"/><line x1="1117" y1="196" x2="760" y2="262" stroke="#4f4c49" stroke-width="0.6"/><polygon points="500,34 1117,213 1117,219 500,46.3" fill="#7d7f80"/><line x1="767" y1="112" x2="767" y2="122" stroke="#e0e0e0" stroke-width="1"/><line x1="915" y1="155" x2="915" y2="165" stroke="#e0e0e0" stroke-width="1"/><polygon points="452,296 768,298 768,380 461,403.5 452,420" fill="#3b3b3b"/><polygon points="452,284 462,297 461,403.5 452,420" fill="#4b4b4b"/><line x1="462" y1="320" x2="768" y2="318" stroke="#424242" stroke-width="0.6"/><line x1="462" y1="340" x2="768" y2="338" stroke="#424242" stroke-width="0.6"/><line x1="462" y1="360" x2="768" y2="358" stroke="#424242" stroke-width="0.6"/><line x1="462" y1="380" x2="768" y2="378" stroke="#424242" stroke-width="0.6"/><line x1="540" y1="340" x2="760" y2="386" stroke="#5a3636" stroke-width="0.7"/><polygon points="768,307 1117,287 1117,417 768,380" fill="#969897"/><path d="M882,386 C880,345 905,318 940,317 C975,318 1000,350 1002,402" fill="none" stroke="#7c7d7d" stroke-width="2.4"/><path d="M884.5,385 C884,350 903,326 930,321" fill="none" stroke="#3a3a3a" stroke-width="1.2"/><path d="M945,318.5 C975,322 996,350 999.5,400" fill="none" stroke="#c4c4c4" stroke-width="0.8"/><path d="M710,293 C720,280 960,278 980,291" fill="none" stroke="#a0a0a0" stroke-width="4"/><path d="M712,296 C740,288 950,286 978,294" fill="none" stroke="#3c3c3c" stroke-width="0.8"/><path d="M749,297 C760,292 920,290 938,296" fill="none" stroke="#888" stroke-width="2"/><polygon points="440,605 1117,420 1117,700 440,700" fill="#373737"/><clipPath id="dgc"><polygon points="440,605 1117,420 1117,700 440,700"/></clipPath><g clip-path="url(#dgc)"><line x1="373.5" y1="481.6" x2="1142.1" y2="376.6" stroke="#4b4b4b" stroke-width="0.8"/><line x1="369.2" y1="495.5" x2="1156.0" y2="378.7" stroke="#4b4b4b" stroke-width="0.8"/><line x1="364.2" y1="511.4" x2="1170.5" y2="380.9" stroke="#4b4b4b" stroke-width="0.8"/><line x1="358.5" y1="529.8" x2="1185.5" y2="383.2" stroke="#4b4b4b" stroke-width="0.8"/><line x1="351.8" y1="551.1" x2="1201.2" y2="385.6" stroke="#4b4b4b" stroke-width="0.8"/><line x1="344.0" y1="576.2" x2="1217.6" y2="388.1" stroke="#4b4b4b" stroke-width="0.8"/><line x1="334.6" y1="606.3" x2="1234.7" y2="390.7" stroke="#4b4b4b" stroke-width="0.8"/><line x1="323.2" y1="642.9" x2="1252.6" y2="393.4" stroke="#4b4b4b" stroke-width="0.8"/><line x1="309.0" y1="688.4" x2="1271.3" y2="396.3" stroke="#4b4b4b" stroke-width="0.8"/><line x1="290.8" y1="746.6" x2="1290.8" y2="399.2" stroke="#4b4b4b" stroke-width="0.8"/><line x1="266.8" y1="823.5" x2="1311.3" y2="402.4" stroke="#4b4b4b" stroke-width="0.8"/><line x1="233.5" y1="930.1" x2="1332.8" y2="405.6" stroke="#4b4b4b" stroke-width="0.8"/><line x1="184.4" y1="1087.4" x2="1355.5" y2="409.1" stroke="#4b4b4b" stroke-width="0.8"/><line x1="373.5" y1="481.6" x2="184.4" y2="1087.4" stroke="#4b4b4b" stroke-width="0.8"/><line x1="426.4" y1="474.4" x2="394.7" y2="965.6" stroke="#4b4b4b" stroke-width="0.8"/><line x1="474.6" y1="467.8" x2="546.8" y2="877.5" stroke="#4b4b4b" stroke-width="0.8"/><line x1="518.6" y1="461.8" x2="662.0" y2="810.8" stroke="#4b4b4b" stroke-width="0.8"/><line x1="558.9" y1="456.3" x2="752.2" y2="758.5" stroke="#4b4b4b" stroke-width="0.8"/><line x1="596.1" y1="451.2" x2="824.8" y2="716.5" stroke="#4b4b4b" stroke-width="0.8"/><line x1="630.4" y1="446.5" x2="884.4" y2="681.9" stroke="#4b4b4b" stroke-width="0.8"/><line x1="662.2" y1="442.2" x2="934.3" y2="653.0" stroke="#4b4b4b" stroke-width="0.8"/><line x1="691.7" y1="438.1" x2="976.7" y2="628.5" stroke="#4b4b4b" stroke-width="0.8"/><line x1="719.3" y1="434.4" x2="1013.1" y2="607.4" stroke="#4b4b4b" stroke-width="0.8"/><line x1="744.9" y1="430.8" x2="1044.7" y2="589.1" stroke="#4b4b4b" stroke-width="0.8"/><line x1="769.0" y1="427.6" x2="1072.4" y2="573.0" stroke="#4b4b4b" stroke-width="0.8"/><line x1="791.5" y1="424.5" x2="1096.9" y2="558.8" stroke="#4b4b4b" stroke-width="0.8"/><line x1="812.7" y1="421.6" x2="1118.7" y2="546.2" stroke="#4b4b4b" stroke-width="0.8"/><line x1="832.7" y1="418.9" x2="1138.3" y2="534.9" stroke="#4b4b4b" stroke-width="0.8"/><line x1="851.5" y1="416.3" x2="1155.9" y2="524.7" stroke="#4b4b4b" stroke-width="0.8"/><line x1="869.3" y1="413.9" x2="1171.9" y2="515.4" stroke="#4b4b4b" stroke-width="0.8"/><line x1="886.1" y1="411.6" x2="1186.4" y2="507.0" stroke="#4b4b4b" stroke-width="0.8"/><line x1="902.0" y1="409.4" x2="1199.6" y2="499.3" stroke="#4b4b4b" stroke-width="0.8"/><line x1="917.1" y1="407.3" x2="1211.8" y2="492.3" stroke="#4b4b4b" stroke-width="0.8"/><line x1="931.5" y1="405.4" x2="1223.0" y2="485.8" stroke="#4b4b4b" stroke-width="0.8"/><line x1="945.2" y1="403.5" x2="1233.4" y2="479.8" stroke="#4b4b4b" stroke-width="0.8"/><line x1="958.2" y1="401.7" x2="1243.0" y2="474.2" stroke="#4b4b4b" stroke-width="0.8"/><line x1="970.6" y1="400.0" x2="1251.9" y2="469.1" stroke="#4b4b4b" stroke-width="0.8"/><line x1="982.5" y1="398.4" x2="1260.2" y2="464.2" stroke="#4b4b4b" stroke-width="0.8"/><line x1="993.8" y1="396.9" x2="1268.0" y2="459.8" stroke="#4b4b4b" stroke-width="0.8"/><line x1="1004.7" y1="395.4" x2="1275.2" y2="455.6" stroke="#4b4b4b" stroke-width="0.8"/><line x1="1015.1" y1="394.0" x2="1282.0" y2="451.6" stroke="#4b4b4b" stroke-width="0.8"/><line x1="1025.0" y1="392.6" x2="1288.4" y2="447.9" stroke="#4b4b4b" stroke-width="0.8"/><line x1="1034.6" y1="391.3" x2="1294.5" y2="444.4" stroke="#4b4b4b" stroke-width="0.8"/><line x1="1043.7" y1="390.0" x2="1300.1" y2="441.1" stroke="#4b4b4b" stroke-width="0.8"/><line x1="1052.5" y1="388.8" x2="1305.5" y2="438.0" stroke="#4b4b4b" stroke-width="0.8"/><line x1="1061.0" y1="387.7" x2="1310.6" y2="435.1" stroke="#4b4b4b" stroke-width="0.8"/><line x1="1069.2" y1="386.6" x2="1315.4" y2="432.3" stroke="#4b4b4b" stroke-width="0.8"/><line x1="1077.0" y1="385.5" x2="1320.0" y2="429.6" stroke="#4b4b4b" stroke-width="0.8"/><line x1="1084.6" y1="384.5" x2="1324.3" y2="427.1" stroke="#4b4b4b" stroke-width="0.8"/><line x1="1091.9" y1="383.5" x2="1328.4" y2="424.7" stroke="#4b4b4b" stroke-width="0.8"/><line x1="1098.9" y1="382.5" x2="1332.4" y2="422.4" stroke="#4b4b4b" stroke-width="0.8"/><line x1="1105.7" y1="381.6" x2="1336.1" y2="420.3" stroke="#4b4b4b" stroke-width="0.8"/><line x1="1112.3" y1="380.7" x2="1339.7" y2="418.2" stroke="#4b4b4b" stroke-width="0.8"/><line x1="1118.6" y1="379.8" x2="1343.1" y2="416.2" stroke="#4b4b4b" stroke-width="0.8"/><line x1="1124.8" y1="379.0" x2="1346.4" y2="414.3" stroke="#4b4b4b" stroke-width="0.8"/><line x1="1130.7" y1="378.1" x2="1349.6" y2="412.5" stroke="#4b4b4b" stroke-width="0.8"/><line x1="1136.5" y1="377.4" x2="1352.6" y2="410.7" stroke="#4b4b4b" stroke-width="0.8"/></g><polygon points="872.7,501.2 1117,437 1117,609.4" fill="#969897"/><clipPath id="lpc"><polygon points="872.7,501.2 1117,437 1117,609.4"/></clipPath><g clip-path="url(#lpc)"><line x1="860" y1="140" x2="1117" y2="265" stroke="#8a8c8b" stroke-width="0.7"/><line x1="860" y1="162" x2="1117" y2="287" stroke="#8a8c8b" stroke-width="0.7"/><line x1="860" y1="184" x2="1117" y2="309" stroke="#8a8c8b" stroke-width="0.7"/><line x1="860" y1="206" x2="1117" y2="331" stroke="#8a8c8b" stroke-width="0.7"/><line x1="860" y1="228" x2="1117" y2="353" stroke="#8a8c8b" stroke-width="0.7"/><line x1="860" y1="250" x2="1117" y2="375" stroke="#8a8c8b" stroke-width="0.7"/><line x1="860" y1="272" x2="1117" y2="397" stroke="#8a8c8b" stroke-width="0.7"/><line x1="860" y1="294" x2="1117" y2="419" stroke="#8a8c8b" stroke-width="0.7"/><line x1="860" y1="316" x2="1117" y2="441" stroke="#8a8c8b" stroke-width="0.7"/><line x1="860" y1="338" x2="1117" y2="463" stroke="#8a8c8b" stroke-width="0.7"/><line x1="860" y1="360" x2="1117" y2="485" stroke="#8a8c8b" stroke-width="0.7"/><line x1="860" y1="382" x2="1117" y2="507" stroke="#8a8c8b" stroke-width="0.7"/><line x1="860" y1="404" x2="1117" y2="529" stroke="#8a8c8b" stroke-width="0.7"/><line x1="860" y1="426" x2="1117" y2="551" stroke="#8a8c8b" stroke-width="0.7"/><line x1="860" y1="448" x2="1117" y2="573" stroke="#8a8c8b" stroke-width="0.7"/><line x1="860" y1="470" x2="1117" y2="595" stroke="#8a8c8b" stroke-width="0.7"/><line x1="860" y1="492" x2="1117" y2="617" stroke="#8a8c8b" stroke-width="0.7"/><line x1="860" y1="514" x2="1117" y2="639" stroke="#8a8c8b" stroke-width="0.7"/><line x1="860" y1="536" x2="1117" y2="661" stroke="#8a8c8b" stroke-width="0.7"/><line x1="860" y1="558" x2="1117" y2="683" stroke="#8a8c8b" stroke-width="0.7"/><line x1="860" y1="580" x2="1117" y2="705" stroke="#8a8c8b" stroke-width="0.7"/><line x1="860" y1="602" x2="1117" y2="727" stroke="#8a8c8b" stroke-width="0.7"/><line x1="860" y1="624" x2="1117" y2="749" stroke="#8a8c8b" stroke-width="0.7"/><line x1="860" y1="646" x2="1117" y2="771" stroke="#8a8c8b" stroke-width="0.7"/><line x1="860" y1="668" x2="1117" y2="793" stroke="#8a8c8b" stroke-width="0.7"/><line x1="860" y1="690" x2="1117" y2="815" stroke="#8a8c8b" stroke-width="0.7"/><line x1="860" y1="712" x2="1117" y2="837" stroke="#8a8c8b" stroke-width="0.7"/><line x1="860" y1="734" x2="1117" y2="859" stroke="#8a8c8b" stroke-width="0.7"/><line x1="860" y1="756" x2="1117" y2="881" stroke="#8a8c8b" stroke-width="0.7"/><line x1="860" y1="778" x2="1117" y2="903" stroke="#8a8c8b" stroke-width="0.7"/><line x1="430" y1="620" x2="930" y2="430" stroke="#8a8c8b" stroke-width="0.7"/><line x1="475" y1="620" x2="975" y2="430" stroke="#8a8c8b" stroke-width="0.7"/><line x1="520" y1="620" x2="1020" y2="430" stroke="#8a8c8b" stroke-width="0.7"/><line x1="565" y1="620" x2="1065" y2="430" stroke="#8a8c8b" stroke-width="0.7"/><line x1="610" y1="620" x2="1110" y2="430" stroke="#8a8c8b" stroke-width="0.7"/><line x1="655" y1="620" x2="1155" y2="430" stroke="#8a8c8b" stroke-width="0.7"/><line x1="700" y1="620" x2="1200" y2="430" stroke="#8a8c8b" stroke-width="0.7"/><line x1="745" y1="620" x2="1245" y2="430" stroke="#8a8c8b" stroke-width="0.7"/><line x1="790" y1="620" x2="1290" y2="430" stroke="#8a8c8b" stroke-width="0.7"/><line x1="835" y1="620" x2="1335" y2="430" stroke="#8a8c8b" stroke-width="0.7"/><line x1="880" y1="620" x2="1380" y2="430" stroke="#8a8c8b" stroke-width="0.7"/><line x1="925" y1="620" x2="1425" y2="430" stroke="#8a8c8b" stroke-width="0.7"/><line x1="970" y1="620" x2="1470" y2="430" stroke="#8a8c8b" stroke-width="0.7"/><line x1="1015" y1="620" x2="1515" y2="430" stroke="#8a8c8b" stroke-width="0.7"/><line x1="1060" y1="620" x2="1560" y2="430" stroke="#8a8c8b" stroke-width="0.7"/><line x1="1105" y1="620" x2="1605" y2="430" stroke="#8a8c8b" stroke-width="0.7"/><line x1="1150" y1="620" x2="1650" y2="430" stroke="#8a8c8b" stroke-width="0.7"/><line x1="1195" y1="620" x2="1695" y2="430" stroke="#8a8c8b" stroke-width="0.7"/><line x1="1240" y1="620" x2="1740" y2="430" stroke="#8a8c8b" stroke-width="0.7"/><line x1="1285" y1="620" x2="1785" y2="430" stroke="#8a8c8b" stroke-width="0.7"/><line x1="1330" y1="620" x2="1830" y2="430" stroke="#8a8c8b" stroke-width="0.7"/><line x1="1375" y1="620" x2="1875" y2="430" stroke="#8a8c8b" stroke-width="0.7"/><line x1="1420" y1="620" x2="1920" y2="430" stroke="#8a8c8b" stroke-width="0.7"/><line x1="1465" y1="620" x2="1965" y2="430" stroke="#8a8c8b" stroke-width="0.7"/><line x1="1510" y1="620" x2="2010" y2="430" stroke="#8a8c8b" stroke-width="0.7"/><line x1="1555" y1="620" x2="2055" y2="430" stroke="#8a8c8b" stroke-width="0.7"/><line x1="1600" y1="620" x2="2100" y2="430" stroke="#8a8c8b" stroke-width="0.7"/><line x1="1645" y1="620" x2="2145" y2="430" stroke="#8a8c8b" stroke-width="0.7"/><line x1="1690" y1="620" x2="2190" y2="430" stroke="#8a8c8b" stroke-width="0.7"/><line x1="1735" y1="620" x2="2235" y2="430" stroke="#8a8c8b" stroke-width="0.7"/></g><line x1="1050" y1="458" x2="1117" y2="470" stroke="#b84848" stroke-width="0.7"/><polygon points="452,609.3 482,601.7 1117,427 1117,437 872.7,501.2 482,612 452,616" fill="#6c6d6e"/><polygon points="461,403.5 560,393 720,382 768,380 1117,417 1117,427 482,601.7 452,609.3 452,420" fill="#737476"/><line x1="482" y1="601.7" x2="1117" y2="427" stroke="#9a9a9a" stroke-width="0.8"/><line x1="452" y1="609.3" x2="482" y2="601.7" stroke="#d0d0d0" stroke-width="1.6"/><clipPath id="flc"><polygon points="461,403.5 560,393 720,382 768,380 1117,417 1117,427 482,601.7 452,609.3 452,420"/></clipPath><g clip-path="url(#flc)"><line x1="210.1" y1="695.6" x2="406.0" y2="402.6" stroke="#454545" stroke-width="0.8"/><line x1="423.7" y1="632.2" x2="456.7" y2="399.3" stroke="#454545" stroke-width="0.8"/><line x1="573.1" y1="587.8" x2="502.6" y2="396.3" stroke="#454545" stroke-width="0.8"/><line x1="683.6" y1="555.1" x2="544.3" y2="393.6" stroke="#454545" stroke-width="0.8"/><line x1="768.5" y1="529.9" x2="582.4" y2="391.2" stroke="#454545" stroke-width="0.8"/><line x1="835.8" y1="509.9" x2="617.3" y2="388.9" stroke="#454545" stroke-width="0.8"/><line x1="890.5" y1="493.7" x2="649.4" y2="386.8" stroke="#454545" stroke-width="0.8"/><line x1="935.9" y1="480.2" x2="679.0" y2="384.9" stroke="#454545" stroke-width="0.8"/><line x1="974.0" y1="468.9" x2="706.4" y2="383.1" stroke="#454545" stroke-width="0.8"/><line x1="1006.6" y1="459.2" x2="731.9" y2="381.5" stroke="#454545" stroke-width="0.8"/><line x1="1034.7" y1="450.9" x2="755.6" y2="379.9" stroke="#454545" stroke-width="0.8"/><line x1="1059.3" y1="443.6" x2="777.8" y2="378.5" stroke="#454545" stroke-width="0.8"/><line x1="1080.9" y1="437.2" x2="798.5" y2="377.1" stroke="#454545" stroke-width="0.8"/><line x1="1100.0" y1="431.5" x2="817.9" y2="375.9" stroke="#454545" stroke-width="0.8"/><line x1="1117.1" y1="426.4" x2="836.1" y2="374.7" stroke="#454545" stroke-width="0.8"/><line x1="1132.5" y1="421.9" x2="853.3" y2="373.6" stroke="#454545" stroke-width="0.8"/><line x1="1146.3" y1="417.8" x2="869.4" y2="372.5" stroke="#454545" stroke-width="0.8"/><line x1="1158.9" y1="414.0" x2="884.7" y2="371.5" stroke="#454545" stroke-width="0.8"/><line x1="228.2" y1="668.5" x2="1159.8" y2="409.0" stroke="#8a8a8b" stroke-width="0.7"/><line x1="273.7" y1="600.4" x2="1126.6" y2="404.1" stroke="#8a8a8b" stroke-width="0.7"/><line x1="304.8" y1="553.9" x2="1096.4" y2="399.7" stroke="#8a8a8b" stroke-width="0.7"/><line x1="327.4" y1="520.1" x2="1068.9" y2="395.6" stroke="#8a8a8b" stroke-width="0.7"/><line x1="344.5" y1="494.5" x2="1043.7" y2="391.9" stroke="#8a8a8b" stroke-width="0.7"/><line x1="358.0" y1="474.4" x2="1020.5" y2="388.5" stroke="#8a8a8b" stroke-width="0.7"/><line x1="368.8" y1="458.1" x2="999.1" y2="385.3" stroke="#8a8a8b" stroke-width="0.7"/><line x1="377.8" y1="444.8" x2="979.4" y2="382.4" stroke="#8a8a8b" stroke-width="0.7"/><line x1="385.2" y1="433.6" x2="961.0" y2="379.7" stroke="#8a8a8b" stroke-width="0.7"/><line x1="391.6" y1="424.1" x2="943.9" y2="377.2" stroke="#8a8a8b" stroke-width="0.7"/><line x1="397.1" y1="415.9" x2="928.0" y2="374.8" stroke="#8a8a8b" stroke-width="0.7"/><line x1="401.8" y1="408.8" x2="913.1" y2="372.7" stroke="#8a8a8b" stroke-width="0.7"/><line x1="406.0" y1="402.6" x2="899.2" y2="370.6" stroke="#8a8a8b" stroke-width="0.7"/><line x1="363.7" y1="465.8" x2="1009.6" y2="386.9" stroke="#858585" stroke-width="0.5"/><line x1="373.5" y1="451.2" x2="989.1" y2="383.9" stroke="#858585" stroke-width="0.5"/><line x1="381.7" y1="439.0" x2="970.0" y2="381.0" stroke="#858585" stroke-width="0.5"/><line x1="388.5" y1="428.7" x2="952.3" y2="378.4" stroke="#858585" stroke-width="0.5"/><line x1="394.4" y1="419.9" x2="935.8" y2="376.0" stroke="#858585" stroke-width="0.5"/><line x1="399.5" y1="412.3" x2="920.4" y2="373.7" stroke="#858585" stroke-width="0.5"/><line x1="404.0" y1="405.6" x2="906.0" y2="371.6" stroke="#858585" stroke-width="0.5"/><line x1="407.9" y1="399.8" x2="892.5" y2="369.6" stroke="#858585" stroke-width="0.5"/></g><line x1="522.9" y1="292" x2="525.2" y2="407" stroke="#979797" stroke-width="1.0"/><rect x="519.9" y="405.5" width="7" height="3" fill="#b5b5b5"/><line x1="527" y1="289" x2="529.5" y2="413.5" stroke="#979797" stroke-width="1.0"/><rect x="524" y="412.0" width="7" height="3" fill="#b5b5b5"/><line x1="547" y1="270" x2="550.7" y2="454" stroke="#979797" stroke-width="1.3"/><rect x="544" y="452.5" width="7" height="3" fill="#b5b5b5"/><line x1="555.5" y1="263" x2="559.7" y2="472.6" stroke="#979797" stroke-width="1.3"/><rect x="552.5" y="471.1" width="7" height="3" fill="#b5b5b5"/><line x1="561" y1="293.6" x2="563.5" y2="418" stroke="#979797" stroke-width="1.0"/><rect x="558" y="416.5" width="7" height="3" fill="#b5b5b5"/><line x1="575.8" y1="290.5" x2="577.9" y2="396" stroke="#979797" stroke-width="1.0"/><line x1="583.6" y1="293.6" x2="585.6" y2="393" stroke="#979797" stroke-width="1.0"/><line x1="604" y1="296.7" x2="606.1" y2="400" stroke="#979797" stroke-width="1.0"/><line x1="616.6" y1="296.7" x2="618.5" y2="393" stroke="#979797" stroke-width="1.0"/><line x1="622.5" y1="292" x2="624.6" y2="396" stroke="#979797" stroke-width="1.0"/><line x1="626" y1="287.4" x2="628.6" y2="416.5" stroke="#979797" stroke-width="1.0"/><rect x="623" y="415.0" width="7" height="3" fill="#b5b5b5"/><line x1="641.5" y1="276.5" x2="644.8" y2="440" stroke="#979797" stroke-width="1.0"/><rect x="638.5" y="438.5" width="7" height="3" fill="#b5b5b5"/><line x1="655.5" y1="298" x2="657.6" y2="405" stroke="#979797" stroke-width="1.0"/><rect x="652.5" y="403.5" width="7" height="3" fill="#b5b5b5"/><line x1="660" y1="270" x2="663.7" y2="455" stroke="#979797" stroke-width="1.3"/><rect x="657" y="453.5" width="7" height="3" fill="#b5b5b5"/><line x1="683" y1="280.5" x2="686.1" y2="433.7" stroke="#979797" stroke-width="1.0"/><rect x="680" y="432.2" width="7" height="3" fill="#b5b5b5"/><line x1="690" y1="290" x2="692.3" y2="405" stroke="#979797" stroke-width="1.0"/><rect x="687" y="403.5" width="7" height="3" fill="#b5b5b5"/><line x1="714.6" y1="281" x2="717.6" y2="430.5" stroke="#979797" stroke-width="1.0"/><rect x="711.6" y="429.0" width="7" height="3" fill="#b5b5b5"/><line x1="720.2" y1="275" x2="723.6" y2="443" stroke="#979797" stroke-width="1.3"/><rect x="717.2" y="441.5" width="7" height="3" fill="#b5b5b5"/><line x1="733.3" y1="300" x2="735.2" y2="396" stroke="#979797" stroke-width="1.0"/><line x1="737" y1="298" x2="739.0" y2="398" stroke="#979797" stroke-width="1.0"/><line x1="750" y1="281" x2="753.5" y2="455.5" stroke="#979797" stroke-width="1.3"/><rect x="747" y="454.0" width="7" height="3" fill="#b5b5b5"/><line x1="769.6" y1="300" x2="771.8" y2="410" stroke="#979797" stroke-width="1.0"/><rect x="766.6" y="408.5" width="7" height="3" fill="#b5b5b5"/><line x1="774" y1="299" x2="776.3" y2="412" stroke="#979797" stroke-width="1.0"/><rect x="771" y="410.5" width="7" height="3" fill="#b5b5b5"/><line x1="793" y1="297" x2="795.2" y2="405" stroke="#979797" stroke-width="1.0"/><rect x="790" y="403.5" width="7" height="3" fill="#b5b5b5"/><line x1="802" y1="299" x2="804.4" y2="420" stroke="#979797" stroke-width="1.0"/><rect x="799" y="418.5" width="7" height="3" fill="#b5b5b5"/><line x1="817.9" y1="266" x2="821.8" y2="461.7" stroke="#979797" stroke-width="1.3"/><rect x="814.9" y="460.2" width="7" height="3" fill="#b5b5b5"/><line x1="858" y1="297" x2="860.4" y2="415" stroke="#979797" stroke-width="1.0"/><rect x="855" y="413.5" width="7" height="3" fill="#b5b5b5"/><line x1="883" y1="291" x2="885.6" y2="420" stroke="#979797" stroke-width="1.0"/><rect x="880" y="418.5" width="7" height="3" fill="#b5b5b5"/><line x1="891" y1="291" x2="893.5" y2="418" stroke="#979797" stroke-width="1.0"/><rect x="888" y="416.5" width="7" height="3" fill="#b5b5b5"/><line x1="902" y1="290" x2="904.7" y2="425" stroke="#979797" stroke-width="1.0"/><rect x="899" y="423.5" width="7" height="3" fill="#b5b5b5"/><line x1="923.8" y1="283" x2="926.9" y2="440" stroke="#979797" stroke-width="1.0"/><rect x="920.8" y="438.5" width="7" height="3" fill="#b5b5b5"/><line x1="936" y1="294" x2="938.5" y2="420" stroke="#979797" stroke-width="1.0"/><rect x="933" y="418.5" width="7" height="3" fill="#b5b5b5"/><line x1="947" y1="290" x2="949.5" y2="415" stroke="#979797" stroke-width="1.0"/><rect x="944" y="413.5" width="7" height="3" fill="#b5b5b5"/><line x1="972" y1="291" x2="974.7" y2="425" stroke="#979797" stroke-width="1.0"/><rect x="969" y="423.5" width="7" height="3" fill="#b5b5b5"/><line x1="980" y1="287" x2="982.6" y2="418" stroke="#979797" stroke-width="1.0"/><rect x="977" y="416.5" width="7" height="3" fill="#b5b5b5"/><line x1="986" y1="283" x2="988.6" y2="412" stroke="#979797" stroke-width="1.0"/><rect x="983" y="410.5" width="7" height="3" fill="#b5b5b5"/><line x1="995.5" y1="291" x2="998.0" y2="418" stroke="#979797" stroke-width="1.0"/><rect x="992.5" y="416.5" width="7" height="3" fill="#b5b5b5"/><line x1="1013.5" y1="300" x2="1015.7" y2="410" stroke="#979797" stroke-width="1.0"/><rect x="1010.5" y="408.5" width="7" height="3" fill="#b5b5b5"/><line x1="1032.7" y1="300" x2="1035.0" y2="416" stroke="#979797" stroke-width="1.0"/><rect x="1029.7" y="414.5" width="7" height="3" fill="#b5b5b5"/><line x1="1035" y1="300" x2="1037.2" y2="412" stroke="#979797" stroke-width="1.0"/><rect x="1032" y="410.5" width="7" height="3" fill="#b5b5b5"/><line x1="878.7" y1="292.8" x2="878.7" y2="400.1" stroke="#8c8c8c" stroke-width="0.8"/><line x1="805.6" y1="286.5" x2="805.6" y2="382.3" stroke="#8c8c8c" stroke-width="0.8"/><line x1="786.7" y1="282.2" x2="786.7" y2="381.9" stroke="#8c8c8c" stroke-width="0.8"/><line x1="911.8" y1="301.8" x2="911.8" y2="401.6" stroke="#8c8c8c" stroke-width="0.8"/><line x1="869.2" y1="290.1" x2="869.2" y2="397.0" stroke="#8c8c8c" stroke-width="0.8"/><line x1="852.7" y1="283.5" x2="852.7" y2="397.1" stroke="#8c8c8c" stroke-width="0.8"/><line x1="944.4" y1="284.2" x2="944.4" y2="397.5" stroke="#8c8c8c" stroke-width="0.8"/><line x1="779.8" y1="301.2" x2="779.8" y2="380.5" stroke="#8c8c8c" stroke-width="0.8"/><line x1="947.0" y1="301.4" x2="947.0" y2="397.4" stroke="#8c8c8c" stroke-width="0.8"/><line x1="871.6" y1="291.5" x2="871.6" y2="400.0" stroke="#8c8c8c" stroke-width="0.8"/><line x1="809.4" y1="287.2" x2="809.4" y2="385.4" stroke="#8c8c8c" stroke-width="0.8"/><line x1="765.5" y1="295.5" x2="765.5" y2="387.5" stroke="#8c8c8c" stroke-width="0.8"/><line x1="887.5" y1="282.8" x2="887.5" y2="399.2" stroke="#8c8c8c" stroke-width="0.8"/><line x1="982.2" y1="295.1" x2="982.2" y2="404.6" stroke="#8c8c8c" stroke-width="0.8"/><line x1="1011.6" y1="294.6" x2="1011.6" y2="410.9" stroke="#8c8c8c" stroke-width="0.8"/><line x1="920.3" y1="286.7" x2="920.3" y2="399.6" stroke="#8c8c8c" stroke-width="0.8"/><line x1="1000.1" y1="295.7" x2="1000.1" y2="406.8" stroke="#8c8c8c" stroke-width="0.8"/><line x1="1008.2" y1="298.8" x2="1008.2" y2="404.0" stroke="#8c8c8c" stroke-width="0.8"/><line x1="799.5" y1="286.5" x2="799.5" y2="381.5" stroke="#8c8c8c" stroke-width="0.8"/><line x1="987.3" y1="294.9" x2="987.3" y2="407.8" stroke="#8c8c8c" stroke-width="0.8"/><line x1="1063.3" y1="289.1" x2="1063.3" y2="411.7" stroke="#8c8c8c" stroke-width="0.8"/><line x1="785.1" y1="288.8" x2="785.1" y2="389.9" stroke="#8c8c8c" stroke-width="0.8"/><line x1="941.1" y1="283.2" x2="941.1" y2="401.5" stroke="#8c8c8c" stroke-width="0.8"/><line x1="765.1" y1="294.5" x2="765.1" y2="379.2" stroke="#8c8c8c" stroke-width="0.8"/><line x1="806.5" y1="294.8" x2="806.5" y2="392.1" stroke="#8c8c8c" stroke-width="0.8"/><line x1="945.2" y1="287.9" x2="945.2" y2="404.5" stroke="#8c8c8c" stroke-width="0.8"/><line x1="835.7" y1="282.1" x2="835.7" y2="388.5" stroke="#8c8c8c" stroke-width="0.8"/><line x1="966.8" y1="294.5" x2="966.8" y2="401.4" stroke="#8c8c8c" stroke-width="0.8"/><line x1="1014.8" y1="298.6" x2="1014.8" y2="407.5" stroke="#8c8c8c" stroke-width="0.8"/><line x1="1052.7" y1="287.3" x2="1052.7" y2="409.0" stroke="#8c8c8c" stroke-width="0.8"/><line x1="911.4" y1="299.3" x2="911.4" y2="400.4" stroke="#8c8c8c" stroke-width="0.8"/><line x1="922.1" y1="291.8" x2="922.1" y2="397.7" stroke="#8c8c8c" stroke-width="0.8"/><line x1="844.5" y1="290.1" x2="844.5" y2="392.7" stroke="#8c8c8c" stroke-width="0.8"/><line x1="1047.0" y1="283.5" x2="1047.0" y2="410.6" stroke="#8c8c8c" stroke-width="0.8"/><line x1="1047.2" y1="295.1" x2="1047.2" y2="408.5" stroke="#8c8c8c" stroke-width="0.8"/><line x1="889.1" y1="295.0" x2="889.1" y2="401.8" stroke="#8c8c8c" stroke-width="0.8"/><line x1="776.5" y1="300.0" x2="776.5" y2="388.2" stroke="#8c8c8c" stroke-width="0.8"/><line x1="837.8" y1="292.7" x2="837.8" y2="395.3" stroke="#8c8c8c" stroke-width="0.8"/><line x1="518" y1="61" x2="480" y2="297" stroke="#858585" stroke-width="0.7"/><line x1="521" y1="61" x2="483" y2="297" stroke="#656565" stroke-width="0.6"/><circle cx="827" cy="343" r="5" fill="#9c9d9d" stroke="#555" stroke-width="0.7"/><circle cx="825.7" cy="341.5" r="2.5" fill="#b4b5b5"/><circle cx="836" cy="338" r="5" fill="#9c9d9d" stroke="#555" stroke-width="0.7"/><circle cx="834.7" cy="336.5" r="2.5" fill="#b4b5b5"/><circle cx="846" cy="340" r="5" fill="#9c9d9d" stroke="#555" stroke-width="0.7"/><circle cx="844.7" cy="338.5" r="2.5" fill="#b4b5b5"/><circle cx="830" cy="352" r="5" fill="#9c9d9d" stroke="#555" stroke-width="0.7"/><circle cx="828.7" cy="350.5" r="2.5" fill="#b4b5b5"/><circle cx="840" cy="350" r="5.5" fill="#9c9d9d" stroke="#555" stroke-width="0.7"/><circle cx="838.7" cy="348.5" r="2.75" fill="#b4b5b5"/><circle cx="850" cy="350" r="4.5" fill="#9c9d9d" stroke="#555" stroke-width="0.7"/><circle cx="848.7" cy="348.5" r="2.25" fill="#b4b5b5"/><circle cx="834" cy="360" r="5" fill="#9c9d9d" stroke="#555" stroke-width="0.7"/><circle cx="832.7" cy="358.5" r="2.5" fill="#b4b5b5"/><circle cx="845" cy="359" r="4.5" fill="#9c9d9d" stroke="#555" stroke-width="0.7"/><circle cx="843.7" cy="357.5" r="2.25" fill="#b4b5b5"/><rect x="831" y="366" width="14" height="16" fill="none" stroke="#8a8a8a" stroke-width="1"/><path d="M831,371 L845,371 M831,376 L845,376 M835,366 L835,382 M839,366 L839,382 M843,366 L843,382" stroke="#8a8a8a" stroke-width="0.8"/><line x1="837" y1="297" x2="837" y2="338" stroke="#7a7a7a" stroke-width="0.8"/><path d="M581,390 L600,382 L609,385 L609,393 L585,393 Z" fill="none" stroke="#151515" stroke-width="1"/><path d="M603,377 L606,385 L600,385 Z" fill="#111"/><defs>
<symbol id="base" viewBox="0 0 10 4"><path d="M1,1 L9,1 L10,3 L0,3 Z" fill="#b8b8b8"/></symbol>
</defs><path d="M579.1,427.5 L577.2,430.1 M581.6,427.5 L582.0,430.1M581.6,423.9 L584.6,422.2M579.1,424.2 L577.8,428.5" stroke="#b6b6b6" stroke-width="1.03" fill="none" stroke-linecap="round"/><path d="M582.9,425.8 L581.5,427.8 L579.6,428.2 L578.2,425.4 L579.4,422.9 L581.2,423.1ZM582.9,421.1 L582.0,422.9 L580.0,422.3 L580.0,420.5 L581.5,420.0Z" fill="#b6b6b6"/><path d="M582.5,426.5 L581.6,428.3 L580.7,427.5 L580.7,424.8 L581.8,424.1Z" fill="#6e6e6e"/><path d="M580.4,424.6 L579.8,426.2 L579.0,425.3 L579.1,423.4 L579.8,422.9ZM581.5,421.1 L580.8,421.7 L580.4,421.0 L580.9,420.4Z" fill="#dadada"/><path d="M579.8,423.4 L581.2,427.5M579.0,423.0 l-1.3,0.7M582.8,425.7 l-0.0,0.2" stroke="#3c3c3c" stroke-width="0.62" fill="none"/><path d="M947.2,405.1 L946.6,409.1 M948.2,405.1 L949.1,408.7 M952.7,405.1 L953.7,409.1 M951.7,405.1 L950.6,408.9M953.7,404.3 Q956.3,401.9 955.8,405.1" stroke="#b6b6b6" stroke-width="0.80" fill="none" stroke-linecap="round"/><path d="M953.5,404.5 L952.6,406.1 L948.3,406.0 L946.8,404.8 L947.2,403.4 L952.3,403.6ZM946.8,403.6 L945.9,404.6 L944.8,404.2 L945.0,402.7 L946.2,402.6Z" fill="#b6b6b6"/><path d="" fill="#6e6e6e"/><path d="M952.0,404.1 L950.4,404.5 L948.5,404.5 L948.6,403.8 L950.8,403.8Z" fill="#dadada"/><path d="M947.5,405.2 L952.7,405.1M950.9,403.6 l-0.6,-0.3M951.9,406.3 l-0.8,-0.8" stroke="#3c3c3c" stroke-width="0.48" fill="none"/><path d="M937.0,401.4 L935.7,403.3 M938.8,401.4 L939.2,403.3M937.0,398.8 L935.2,397.0M938.8,399.1 L939.8,402.2" stroke="#9e9e9e" stroke-width="0.74" fill="none" stroke-linecap="round"/><path d="M939.5,399.6 L938.7,402.2 L936.7,401.7 L936.0,400.0 L937.3,398.1 L938.8,398.2ZM939.7,397.0 L938.6,398.0 L937.7,397.7 L937.4,396.5 L938.6,395.8Z" fill="#9e9e9e"/><path d="M937.8,400.5 L937.4,402.2 L936.7,401.5 L936.5,399.1 L937.4,398.9Z" fill="#6e6e6e"/><path d="M938.8,399.2 L938.5,400.1 L938.0,399.9 L937.9,398.6 L938.5,398.4ZM939.1,396.8 L938.6,397.3 L938.2,396.9 L938.6,396.3Z" fill="#dadada"/><path d="M938.3,398.5 L937.3,401.4M939.1,399.1 l1.0,0.2" stroke="#3c3c3c" stroke-width="0.45" fill="none"/><path d="" stroke="#9e9e9e" stroke-width="0.80" fill="none" stroke-linecap="round"/><path d="M953.3,408.0 L952.1,409.2 L948.3,409.3 L943.8,408.6 L945.1,407.4 L947.9,406.8 L951.0,407.3ZM954.8,407.6 L954.0,408.3 L952.9,407.8 L952.9,407.1 L954.1,406.5Z" fill="#9e9e9e"/><path d="" fill="#6e6e6e"/><path d="M950.7,407.5 L949.6,407.9 L947.0,407.7 L947.0,407.3 L948.9,407.2Z" fill="#dadada"/><path d="M945.2,408.5 L951.4,407.9M946.4,405.1 l0.2,-0.2M948.2,407.4 l-0.2,-0.4" stroke="#3c3c3c" stroke-width="0.48" fill="none"/><path d="M618.0,434.6 L616.9,437.4 M620.7,434.6 L622.1,437.4M620.7,430.7 L623.2,428.5M618.0,431.0 L616.6,435.7" stroke="#a9a9a9" stroke-width="1.11" fill="none" stroke-linecap="round"/><path d="M621.8,432.5 L620.9,435.4 L617.7,435.4 L616.2,432.2 L617.8,429.7 L620.6,429.7ZM620.7,427.9 L619.6,429.6 L617.2,428.7 L617.5,427.1 L619.5,426.4Z" fill="#a9a9a9"/><path d="M621.6,432.8 L620.8,435.7 L619.8,434.4 L619.6,431.1 L620.6,430.8Z" fill="#6e6e6e"/><path d="M619.3,431.0 L619.0,433.1 L617.9,432.1 L618.1,430.4 L619.0,429.6ZM619.2,427.5 L618.6,428.2 L617.9,427.5 L618.7,426.9Z" fill="#dadada"/><path d="M618.8,430.1 L620.2,434.6M617.6,435.5 l-1.6,1.0" stroke="#3c3c3c" stroke-width="0.67" fill="none"/><path d="M1067.1,431.5 L1065.9,434.2 M1069.6,431.5 L1070.9,434.2M1069.6,427.7 L1071.9,428.2M1067.1,428.0 L1065.7,432.6" stroke="#a9a9a9" stroke-width="1.08" fill="none" stroke-linecap="round"/><path d="M1071.0,429.3 L1069.4,432.9 L1067.2,432.9 L1065.8,429.7 L1066.8,427.2 L1070.0,426.1ZM1069.7,425.2 L1068.8,426.4 L1066.4,425.9 L1066.9,424.1 L1068.5,423.5Z" fill="#a9a9a9"/><path d="M1070.6,429.8 L1069.8,432.0 L1068.6,430.8 L1068.5,428.2 L1069.8,427.7Z" fill="#6e6e6e"/><path d="M1068.5,428.4 L1068.0,429.5 L1067.1,429.4 L1066.9,427.5 L1067.9,427.0ZM1068.4,424.6 L1067.7,425.3 L1067.0,424.8 L1067.6,424.0Z" fill="#dadada"/><path d="M1067.8,427.2 L1069.2,431.5M1066.4,427.3 l1.4,0.1M1068.0,430.7 l0.7,0.1" stroke="#3c3c3c" stroke-width="0.65" fill="none"/><path d="M520.6,434.9 L519.7,440.6 M522.0,434.9 L523.2,440.1 M528.5,434.9 L529.9,440.6 M527.0,434.9 L525.5,440.4M529.9,433.8 Q533.7,430.3 532.9,434.9" stroke="#9e9e9e" stroke-width="1.15" fill="none" stroke-linecap="round"/><path d="M530.7,434.4 L526.8,435.8 L522.2,436.2 L519.3,434.0 L521.3,432.9 L526.8,432.3ZM520.0,432.7 L518.8,433.9 L517.4,433.5 L517.2,431.7 L518.9,431.0Z" fill="#9e9e9e"/><path d="" fill="#6e6e6e"/><path d="M527.4,433.5 L526.1,434.1 L522.5,433.8 L522.7,433.0 L525.5,432.9Z" fill="#dadada"/><path d="M521.0,435.1 L528.5,434.9M525.1,437.5 l0.8,1.3M523.8,433.1 l-0.3,-1.1M525.0,437.8 l-0.5,-1.3" stroke="#3c3c3c" stroke-width="0.69" fill="none"/><path d="M488.6,419.7 L487.9,424.6 M489.9,419.7 L490.9,424.1 M495.3,419.7 L496.6,424.6 M494.0,419.7 L492.8,424.4M496.6,418.7 Q499.7,415.8 499.1,419.7" stroke="#a9a9a9" stroke-width="0.97" fill="none" stroke-linecap="round"/><path d="M496.4,419.4 L494.4,420.7 L489.2,420.4 L487.1,419.5 L490.0,417.7 L494.2,417.9ZM488.0,417.6 L487.1,418.9 L486.0,418.4 L486.0,417.0 L487.3,416.7Z" fill="#a9a9a9"/><path d="" fill="#6e6e6e"/><path d="M494.5,418.5 L493.1,419.0 L490.6,418.9 L489.6,418.3 L493.2,418.1Z" fill="#dadada"/><path d="M489.0,419.9 L495.3,419.7M490.4,419.0 l0.7,0.9M492.0,418.1 l-0.4,0.9" stroke="#3c3c3c" stroke-width="0.58" fill="none"/><path d="M791.8,405.8 L790.4,407.8 M793.7,405.8 L794.1,407.8M791.8,403.1 L791.0,405.1M793.7,403.3 L794.7,406.6" stroke="#a2a2a2" stroke-width="0.79" fill="none" stroke-linecap="round"/><path d="M794.5,403.9 L794.1,406.2 L791.6,406.2 L790.5,404.7 L791.9,402.3 L794.1,402.2ZM794.3,401.1 L793.5,402.4 L792.4,401.7 L792.5,400.4 L793.5,399.9Z" fill="#a2a2a2"/><path d="M792.6,404.5 L792.1,406.7 L791.4,406.0 L791.3,403.6 L792.1,402.8Z" fill="#6e6e6e"/><path d="M793.8,403.5 L793.3,404.5 L792.7,404.1 L792.8,402.8 L793.3,402.6ZM793.9,401.0 L793.5,401.4 L793.0,400.9 L793.5,400.4Z" fill="#dadada"/><path d="M793.1,402.7 L792.1,405.8M790.1,405.1 l-0.1,-0.7" stroke="#3c3c3c" stroke-width="0.47" fill="none"/><path d="M845.9,405.6 L845.7,407.6 M847.8,405.6 L849.3,407.6M847.8,402.9 L849.2,403.8M845.9,403.1 L844.9,406.4" stroke="#a9a9a9" stroke-width="0.78" fill="none" stroke-linecap="round"/><path d="M849.0,403.8 L848.2,406.4 L846.0,405.9 L845.2,404.5 L845.6,402.2 L847.6,401.8ZM847.0,400.9 L845.9,402.2 L844.7,401.5 L844.8,400.0 L846.2,399.7Z" fill="#a9a9a9"/><path d="M848.3,404.5 L848.0,406.1 L847.2,405.4 L847.1,403.4 L847.9,403.0Z" fill="#6e6e6e"/><path d="M846.9,403.1 L846.5,404.4 L846.0,404.2 L846.0,402.6 L846.5,402.3ZM845.9,400.8 L845.5,401.2 L844.9,400.8 L845.4,400.3Z" fill="#dadada"/><path d="M846.5,402.5 L847.5,405.6M845.7,403.5 l0.7,0.6M846.0,403.4 l-0.9,0.4M847.3,403.1 l-0.3,0.9" stroke="#3c3c3c" stroke-width="0.47" fill="none"/><path d="" stroke="#a2a2a2" stroke-width="0.89" fill="none" stroke-linecap="round"/><path d="M749.0,415.9 L748.2,417.0 L743.8,417.3 L740.8,416.6 L740.7,415.5 L742.7,414.3 L747.7,414.5ZM751.8,415.4 L751.0,416.1 L749.8,415.6 L749.6,414.4 L750.8,414.2Z" fill="#a2a2a2"/><path d="" fill="#6e6e6e"/><path d="M747.1,415.1 L745.3,415.7 L743.1,415.5 L743.1,414.9 L745.2,414.8Z" fill="#dadada"/><path d="M741.2,416.3 L748.1,415.6M747.6,412.8 l-0.3,1.3M743.2,413.1 l0.3,-0.6M743.7,415.1 l0.3,0.7" stroke="#3c3c3c" stroke-width="0.53" fill="none"/><path d="" stroke="#9e9e9e" stroke-width="1.02" fill="none" stroke-linecap="round"/><path d="M983.2,427.0 L981.2,428.4 L975.0,428.4 L971.6,427.5 L971.2,426.5 L975.0,425.9 L979.4,425.7ZM971.2,426.4 L970.5,427.2 L969.3,426.9 L969.1,425.5 L970.5,425.1Z" fill="#9e9e9e"/><path d="" fill="#6e6e6e"/><path d="M978.8,426.3 L977.6,426.8 L973.9,426.5 L974.3,426.0 L977.3,425.7Z" fill="#dadada"/><path d="M972.3,427.6 L980.2,426.8M974.4,423.6 l1.3,-0.5M977.4,426.2 l-0.7,0.9" stroke="#3c3c3c" stroke-width="0.61" fill="none"/><path d="M473.9,417.2 L473.1,421.9 M475.1,417.2 L476.1,421.4 M480.4,417.2 L481.6,421.9 M479.1,417.2 L477.9,421.7M481.6,416.3 Q484.6,413.4 484.0,417.2" stroke="#9e9e9e" stroke-width="0.94" fill="none" stroke-linecap="round"/><path d="M481.1,416.7 L480.1,417.9 L475.0,418.0 L473.0,417.0 L475.3,415.1 L478.9,415.4ZM473.4,415.4 L472.7,416.5 L471.1,416.2 L471.0,414.6 L472.3,414.2Z" fill="#9e9e9e"/><path d="" fill="#6e6e6e"/><path d="M480.1,416.0 L477.7,416.6 L475.0,416.3 L475.6,415.7 L478.4,415.5Z" fill="#dadada"/><path d="M474.2,417.4 L480.4,417.2M475.5,418.5 l1.4,1.1" stroke="#3c3c3c" stroke-width="0.56" fill="none"/><path d="" stroke="#a2a2a2" stroke-width="0.88" fill="none" stroke-linecap="round"/><path d="M1060.1,415.1 L1056.2,415.7 L1051.8,416.5 L1048.7,415.5 L1047.9,414.5 L1053.4,413.3 L1057.0,414.2ZM1049.6,414.3 L1048.5,415.5 L1047.5,414.9 L1047.4,413.6 L1048.8,413.4Z" fill="#a2a2a2"/><path d="" fill="#6e6e6e"/><path d="M1055.7,414.4 L1054.2,414.8 L1051.8,414.6 L1051.8,414.0 L1054.4,413.9Z" fill="#dadada"/><path d="M1050.2,415.4 L1056.9,414.7M1054.6,414.6 l-0.1,-0.1" stroke="#3c3c3c" stroke-width="0.53" fill="none"/><path d="M801.7,392.3 L800.8,393.9 M803.3,392.3 L803.8,393.9M803.3,390.1 L804.8,391.2M801.7,390.3 L800.9,393.0" stroke="#a2a2a2" stroke-width="0.70" fill="none" stroke-linecap="round"/><path d="M804.1,390.9 L803.3,392.7 L801.8,393.1 L801.1,390.8 L801.5,389.5 L803.4,389.8ZM803.7,388.7 L802.9,389.3 L801.9,388.9 L801.7,388.1 L803.0,387.6Z" fill="#a2a2a2"/><path d="M803.7,391.6 L803.3,392.8 L802.7,392.1 L802.7,390.7 L803.4,389.9Z" fill="#6e6e6e"/><path d="M802.7,390.5 L802.2,391.3 L801.8,390.9 L801.7,389.9 L802.3,389.6ZM802.9,388.4 L802.5,388.8 L802.1,388.3 L802.4,387.9Z" fill="#dadada"/><path d="M802.2,389.8 L803.0,392.3M800.7,390.8 l-0.2,-0.3" stroke="#3c3c3c" stroke-width="0.45" fill="none"/><path d="M745.6,386.7 L745.2,388.1 M747.0,386.7 L747.9,388.1M745.6,384.7 L744.7,383.2M747.0,384.9 L747.7,387.3" stroke="#9e9e9e" stroke-width="0.70" fill="none" stroke-linecap="round"/><path d="M747.9,385.4 L747.2,387.1 L745.7,387.2 L744.8,385.4 L745.2,384.0 L747.2,384.2ZM746.6,383.3 L746.1,384.2 L745.1,383.9 L745.0,382.9 L745.9,382.6Z" fill="#9e9e9e"/><path d="M746.3,386.0 L746.0,386.9 L745.3,386.4 L745.3,385.4 L745.9,384.6Z" fill="#6e6e6e"/><path d="M747.1,385.0 L746.8,385.9 L746.4,385.4 L746.4,384.5 L746.8,384.1ZM746.3,383.1 L746.0,383.5 L745.7,383.1 L745.9,382.8Z" fill="#dadada"/><path d="M746.6,384.4 L745.9,386.7M747.6,386.9 l0.5,-0.2M747.2,384.3 l0.5,0.4" stroke="#3c3c3c" stroke-width="0.45" fill="none"/><path d="M642.0,413.0 L641.3,415.2 M644.0,413.0 L645.4,415.2M642.0,410.0 L639.2,409.7M644.0,410.2 L645.2,413.9" stroke="#b6b6b6" stroke-width="0.87" fill="none" stroke-linecap="round"/><path d="M645.3,411.8 L644.3,413.8 L641.4,413.6 L641.0,411.0 L642.2,409.1 L644.4,409.1ZM643.6,407.7 L643.0,409.1 L641.3,408.8 L641.2,407.3 L642.7,406.5Z" fill="#b6b6b6"/><path d="M643.0,411.3 L642.2,413.3 L641.5,413.0 L641.5,410.6 L642.5,410.0Z" fill="#6e6e6e"/><path d="M644.1,410.2 L643.6,411.5 L642.9,411.2 L643.0,409.4 L643.6,409.0ZM643.1,407.5 L642.7,408.1 L642.1,407.6 L642.5,407.0Z" fill="#dadada"/><path d="M643.4,409.5 L642.3,413.0M643.8,413.5 l-0.6,-1.1" stroke="#3c3c3c" stroke-width="0.52" fill="none"/><path d="M842.4,395.7 L841.9,399.2 M843.3,395.7 L844.0,398.8 M847.2,395.7 L848.1,399.2 M846.3,395.7 L845.4,399.0M848.1,395.0 Q850.3,392.9 849.9,395.7" stroke="#a9a9a9" stroke-width="0.70" fill="none" stroke-linecap="round"/><path d="M848.3,395.2 L846.6,396.3 L843.4,396.5 L842.2,395.3 L843.5,394.4 L847.2,394.4ZM842.0,394.4 L841.4,395.2 L840.3,394.7 L840.3,393.8 L841.3,393.4Z" fill="#a9a9a9"/><path d="" fill="#6e6e6e"/><path d="M846.9,394.8 L845.7,395.3 L843.9,395.1 L843.2,394.6 L845.4,394.5Z" fill="#dadada"/><path d="M842.7,395.8 L847.2,395.7M846.9,395.3 l0.4,0.6" stroke="#3c3c3c" stroke-width="0.45" fill="none"/><path d="" stroke="#a2a2a2" stroke-width="0.87" fill="none" stroke-linecap="round"/><path d="M985.3,413.6 L981.7,414.8 L978.0,415.0 L974.4,414.7 L974.4,413.1 L977.7,412.5 L980.9,412.9ZM985.8,413.5 L985.0,414.0 L983.8,413.6 L983.8,412.5 L984.9,412.2Z" fill="#a2a2a2"/><path d="" fill="#6e6e6e"/><path d="M981.0,413.3 L979.9,413.6 L977.8,413.5 L977.6,413.0 L979.8,412.9Z" fill="#dadada"/><path d="M975.4,414.3 L982.1,413.7M978.5,410.3 l0.8,-0.8M980.9,410.9 l0.1,1.0" stroke="#3c3c3c" stroke-width="0.52" fill="none"/><path d="M643.0,415.5 L642.1,417.7 M645.1,415.5 L646.3,417.7M645.1,412.3 L648.0,415.4M643.0,412.6 L641.8,416.4" stroke="#a2a2a2" stroke-width="0.89" fill="none" stroke-linecap="round"/><path d="M646.5,413.7 L645.2,415.3 L643.0,416.0 L641.5,413.8 L642.4,411.2 L645.2,411.1ZM645.1,409.9 L644.1,411.3 L642.5,410.7 L642.5,409.4 L644.1,408.9Z" fill="#a2a2a2"/><path d="M645.8,413.9 L645.0,416.1 L644.4,415.2 L644.2,412.9 L645.1,412.3Z" fill="#6e6e6e"/><path d="M644.2,412.7 L643.8,414.1 L643.0,413.7 L642.9,412.1 L643.7,411.8ZM643.8,409.8 L643.4,410.3 L642.9,409.8 L643.4,409.2Z" fill="#dadada"/><path d="M643.6,411.9 L644.8,415.5M646.9,411.8 l-0.3,0.2M646.0,414.0 l0.8,-0.3" stroke="#3c3c3c" stroke-width="0.54" fill="none"/><path d="M908.2,414.7 L909.0,419.2 M907.1,414.7 L906.1,418.8 M902.0,414.7 L900.8,419.2 M903.1,414.7 L904.3,419.0M900.8,413.8 Q897.8,411.0 898.4,414.7" stroke="#a9a9a9" stroke-width="0.91" fill="none" stroke-linecap="round"/><path d="M909.3,414.1 L906.9,415.9 L902.2,415.7 L901.0,414.5 L903.0,412.8 L908.1,412.9ZM911.0,412.7 L910.3,414.0 L908.8,413.5 L909.1,412.3 L910.3,411.7Z" fill="#a9a9a9"/><path d="" fill="#6e6e6e"/><path d="M906.9,413.6 L905.4,414.0 L903.1,414.0 L903.4,413.3 L905.4,413.0Z" fill="#dadada"/><path d="M902.0,414.9 L907.9,414.7M906.3,417.2 l0.0,-0.6M904.4,416.5 l-1.2,0.3M906.4,415.5 l-0.2,1.2" stroke="#3c3c3c" stroke-width="0.55" fill="none"/><path d="" stroke="#a9a9a9" stroke-width="0.86" fill="none" stroke-linecap="round"/><path d="M505.9,413.2 L505.0,414.0 L499.4,414.2 L496.2,413.6 L495.2,412.7 L499.5,411.9 L505.2,412.0ZM507.4,412.6 L506.6,413.4 L505.6,413.1 L505.6,411.7 L506.8,411.4Z" fill="#a9a9a9"/><path d="" fill="#6e6e6e"/><path d="M503.1,412.5 L501.9,412.9 L499.2,412.8 L498.7,412.3 L501.7,412.1Z" fill="#dadada"/><path d="M497.4,413.6 L504.0,412.9M499.7,411.3 l-0.9,-1.2" stroke="#3c3c3c" stroke-width="0.52" fill="none"/><path d="M979.4,406.5 L978.7,408.5 M981.3,406.5 L982.5,408.5M981.3,403.7 L982.2,402.3M979.4,404.0 L978.4,407.3" stroke="#a9a9a9" stroke-width="0.79" fill="none" stroke-linecap="round"/><path d="M982.0,405.2 L981.5,407.0 L979.5,406.9 L978.7,404.9 L979.3,403.0 L981.5,403.1ZM980.9,402.0 L980.0,402.9 L978.9,402.5 L978.9,400.8 L980.3,400.7Z" fill="#a9a9a9"/><path d="M982.0,405.3 L981.5,407.0 L980.6,406.6 L980.5,404.2 L981.6,403.6Z" fill="#6e6e6e"/><path d="M980.5,404.2 L980.1,405.0 L979.4,404.6 L979.4,403.6 L980.0,402.8ZM980.1,401.5 L979.5,401.9 L979.1,401.6 L979.6,401.0Z" fill="#dadada"/><path d="M980.0,403.3 L981.0,406.5M981.8,405.7 l0.9,-0.1M982.7,407.2 l-0.2,1.2" stroke="#3c3c3c" stroke-width="0.48" fill="none"/><path d="M1061.0,426.0 L1059.1,428.5 M1063.4,426.0 L1063.8,428.5M1061.0,422.4 L1059.7,424.6M1063.4,422.7 L1064.7,427.0" stroke="#a2a2a2" stroke-width="1.01" fill="none" stroke-linecap="round"/><path d="M1065.1,423.6 L1063.6,426.1 L1061.3,426.6 L1060.0,423.6 L1060.8,421.4 L1064.0,421.4ZM1064.6,420.0 L1063.7,421.1 L1062.0,421.1 L1061.7,418.9 L1063.3,418.3Z" fill="#a2a2a2"/><path d="M1062.1,424.2 L1061.4,426.3 L1060.6,425.8 L1060.2,423.0 L1061.6,422.1Z" fill="#6e6e6e"/><path d="M1063.5,422.8 L1063.0,424.7 L1062.1,423.8 L1062.3,422.1 L1063.0,421.5ZM1064.1,419.6 L1063.4,420.3 L1062.8,419.6 L1063.4,419.0Z" fill="#dadada"/><path d="M1062.7,421.9 L1061.4,426.0M1060.5,426.5 l-0.1,0.6M1061.0,421.9 l-0.8,-1.5" stroke="#3c3c3c" stroke-width="0.61" fill="none"/><path d="M988.7,407.4 L987.5,409.4 M990.6,407.4 L991.3,409.4M988.7,404.5 L986.1,402.4M990.6,404.8 L991.7,408.2" stroke="#a2a2a2" stroke-width="0.80" fill="none" stroke-linecap="round"/><path d="M992.0,405.5 L990.4,407.9 L988.5,408.2 L987.4,406.1 L988.7,403.6 L990.7,403.6ZM991.1,402.4 L990.3,403.8 L989.0,403.4 L988.8,401.8 L990.1,401.3Z" fill="#a2a2a2"/><path d="M989.6,405.9 L989.1,407.6 L988.2,407.5 L988.1,405.1 L989.1,404.2Z" fill="#6e6e6e"/><path d="M990.8,405.2 L990.3,405.9 L989.6,405.8 L989.6,404.4 L990.3,404.0ZM990.5,402.3 L990.2,402.8 L989.6,402.3 L990.1,401.9Z" fill="#dadada"/><path d="M990.1,404.1 L989.0,407.4M987.1,407.3 l-0.5,1.0" stroke="#3c3c3c" stroke-width="0.48" fill="none"/><path d="M857.8,401.9 L857.2,405.7 M858.8,401.9 L859.6,405.4 M863.0,401.9 L864.0,405.7 M862.1,401.9 L861.1,405.6M864.0,401.2 Q866.5,398.9 866.0,401.9" stroke="#9e9e9e" stroke-width="0.76" fill="none" stroke-linecap="round"/><path d="M864.4,401.6 L862.9,402.8 L858.0,402.8 L856.9,401.7 L858.8,400.3 L862.1,400.6ZM857.3,400.5 L856.7,401.4 L855.6,400.8 L855.6,399.8 L856.7,399.6Z" fill="#9e9e9e"/><path d="" fill="#6e6e6e"/><path d="M862.5,401.0 L860.9,401.5 L859.0,401.3 L859.1,400.7 L860.9,400.6Z" fill="#dadada"/><path d="M858.1,402.1 L863.0,401.9M858.4,404.1 l-0.7,1.1M860.4,402.9 l0.7,0.7" stroke="#3c3c3c" stroke-width="0.46" fill="none"/><path d="M738.0,405.4 L736.4,407.3 M739.9,405.4 L740.1,407.3M739.9,402.6 L740.6,405.8M738.0,402.9 L737.0,406.1" stroke="#a9a9a9" stroke-width="0.78" fill="none" stroke-linecap="round"/><path d="M741.1,404.2 L739.9,405.6 L738.1,406.3 L737.2,404.2 L737.7,402.1 L740.0,402.3ZM740.8,400.9 L740.3,401.8 L738.8,401.3 L738.7,400.2 L739.9,399.7Z" fill="#a9a9a9"/><path d="M740.4,404.0 L739.9,405.8 L739.1,405.5 L739.2,403.1 L739.8,402.6Z" fill="#6e6e6e"/><path d="M739.0,402.8 L738.5,404.0 L738.0,403.8 L738.1,402.4 L738.7,401.7ZM740.1,400.5 L739.6,400.8 L739.2,400.4 L739.6,400.0Z" fill="#dadada"/><path d="M738.5,402.2 L739.5,405.4M740.5,402.6 l0.6,0.3M736.1,402.6 l0.1,0.6M739.5,405.7 l0.0,-0.1" stroke="#3c3c3c" stroke-width="0.47" fill="none"/><path d="" stroke="#9e9e9e" stroke-width="1.03" fill="none" stroke-linecap="round"/><path d="M1055.7,428.6 L1053.3,430.2 L1048.0,429.7 L1044.6,429.4 L1045.3,428.1 L1048.4,426.6 L1053.7,427.0ZM1044.8,428.0 L1043.8,428.7 L1042.0,428.4 L1042.4,427.2 L1043.7,426.8Z" fill="#9e9e9e"/><path d="" fill="#6e6e6e"/><path d="M1052.1,427.7 L1050.5,428.2 L1047.9,428.0 L1047.8,427.4 L1050.6,427.2Z" fill="#dadada"/><path d="M1045.5,429.1 L1053.5,428.3M1050.6,428.5 l-0.2,1.1M1051.4,424.5 l-0.9,0.2M1051.3,427.4 l1.3,1.0" stroke="#3c3c3c" stroke-width="0.62" fill="none"/><path d="M547.8,404.7 L548.4,408.7 M546.8,404.7 L546.0,408.3 M542.3,404.7 L541.3,408.7 M543.4,404.7 L544.4,408.5M541.3,403.9 Q538.7,401.5 539.2,404.7" stroke="#b6b6b6" stroke-width="0.80" fill="none" stroke-linecap="round"/><path d="M548.4,404.3 L546.9,405.7 L543.1,405.5 L541.2,404.5 L543.5,403.0 L547.3,403.3ZM550.4,403.1 L549.4,404.2 L548.5,403.7 L548.3,402.6 L549.7,402.2Z" fill="#b6b6b6"/><path d="" fill="#6e6e6e"/><path d="M546.6,403.7 L545.6,404.2 L542.9,403.9 L543.7,403.4 L545.6,403.2Z" fill="#dadada"/><path d="M542.3,404.8 L547.5,404.7M545.4,405.8 l-1.0,1.1" stroke="#3c3c3c" stroke-width="0.48" fill="none"/><path d="M1024.4,420.6 L1023.3,423.0 M1026.7,420.6 L1027.8,423.0M1024.4,417.3 L1021.6,418.4M1026.7,417.6 L1027.9,421.6" stroke="#9e9e9e" stroke-width="0.95" fill="none" stroke-linecap="round"/><path d="M1027.8,419.1 L1026.5,421.7 L1024.5,420.8 L1022.7,419.0 L1024.1,416.3 L1026.5,415.9ZM1026.7,415.0 L1025.6,416.4 L1024.1,415.7 L1024.1,413.9 L1025.5,413.5Z" fill="#9e9e9e"/><path d="M1025.7,419.4 L1024.8,420.9 L1023.7,420.3 L1023.9,417.7 L1024.8,417.2Z" fill="#6e6e6e"/><path d="M1026.8,417.5 L1026.2,419.0 L1025.4,418.6 L1025.5,416.7 L1026.3,416.7ZM1026.1,414.7 L1025.4,415.3 L1024.9,414.5 L1025.5,414.2Z" fill="#dadada"/><path d="M1026.0,416.8 L1024.8,420.6M1028.1,416.8 l0.6,0.6" stroke="#3c3c3c" stroke-width="0.57" fill="none"/><path d="M1030.7,429.5 L1029.8,432.1 M1033.2,429.5 L1034.7,432.1M1033.2,425.8 L1036.3,423.4M1030.7,426.1 L1029.3,430.5" stroke="#a9a9a9" stroke-width="1.05" fill="none" stroke-linecap="round"/><path d="M1034.7,427.6 L1033.0,429.7 L1030.0,429.9 L1029.3,427.0 L1030.7,424.1 L1033.5,425.0ZM1032.9,423.1 L1031.7,424.9 L1030.1,424.0 L1030.1,422.0 L1031.7,421.7Z" fill="#a9a9a9"/><path d="M1034.0,428.0 L1033.4,429.5 L1032.3,429.2 L1032.0,426.4 L1033.3,425.4Z" fill="#6e6e6e"/><path d="M1032.1,426.2 L1031.5,427.5 L1030.7,426.9 L1030.8,425.5 L1031.5,424.5ZM1031.5,422.8 L1030.9,423.4 L1030.2,422.8 L1030.8,422.3Z" fill="#dadada"/><path d="M1031.4,425.2 L1032.8,429.5M1035.5,425.9 l-1.0,-1.4M1033.7,426.4 l-0.9,0.4M1035.5,429.1 l1.4,1.4" stroke="#3c3c3c" stroke-width="0.63" fill="none"/><path d="M808.6,392.5 L808.2,394.1 M810.1,392.5 L811.2,394.1M810.1,390.3 L810.9,390.5M808.6,390.5 L807.8,393.2" stroke="#9e9e9e" stroke-width="0.70" fill="none" stroke-linecap="round"/><path d="M810.9,391.1 L809.9,392.9 L808.6,392.6 L808.0,391.5 L808.5,389.7 L809.9,389.6ZM809.6,388.8 L809.2,389.7 L808.0,389.3 L807.9,388.3 L809.0,387.9Z" fill="#9e9e9e"/><path d="M810.5,391.4 L810.2,393.1 L809.4,392.4 L809.5,390.9 L810.3,390.0Z" fill="#6e6e6e"/><path d="M809.5,390.6 L809.1,391.6 L808.5,391.2 L808.6,390.1 L809.2,389.6ZM809.0,388.6 L808.5,388.9 L808.2,388.5 L808.5,388.1Z" fill="#dadada"/><path d="M809.0,390.0 L809.9,392.5M810.6,391.8 l-0.4,-0.9M808.0,392.8 l-0.4,-0.8" stroke="#3c3c3c" stroke-width="0.45" fill="none"/><path d="" stroke="#a9a9a9" stroke-width="0.72" fill="none" stroke-linecap="round"/><path d="M665.1,400.3 L662.4,401.3 L658.5,401.7 L657.4,401.0 L657.1,400.0 L659.1,399.7 L664.0,399.7ZM656.5,399.9 L656.0,400.8 L655.0,400.4 L654.8,399.6 L656.1,399.3Z" fill="#a9a9a9"/><path d="" fill="#6e6e6e"/><path d="M662.2,400.1 L660.5,400.4 L658.7,400.2 L658.7,399.8 L660.5,399.7Z" fill="#dadada"/><path d="M657.2,401.0 L662.7,400.4M659.2,400.2 l0.6,-0.1M660.5,398.3 l0.6,0.7" stroke="#3c3c3c" stroke-width="0.45" fill="none"/><path d="" stroke="#9e9e9e" stroke-width="0.90" fill="none" stroke-linecap="round"/><path d="M1066.9,416.4 L1066.9,417.5 L1061.1,417.5 L1059.2,417.0 L1057.0,415.8 L1061.1,415.1 L1065.6,415.1ZM1058.1,415.8 L1057.4,416.8 L1056.2,416.4 L1056.1,415.2 L1057.3,414.7Z" fill="#9e9e9e"/><path d="" fill="#6e6e6e"/><path d="M1064.9,415.9 L1063.9,416.2 L1060.8,416.0 L1061.2,415.4 L1063.3,415.3Z" fill="#dadada"/><path d="M1059.0,417.0 L1065.9,416.2M1060.5,414.9 l1.2,0.7" stroke="#3c3c3c" stroke-width="0.54" fill="none"/><path d="M1058.3,438.0 L1057.9,440.9 M1061.1,438.0 L1063.3,440.9M1061.1,434.0 L1062.8,438.8M1058.3,434.3 L1056.8,439.1" stroke="#9e9e9e" stroke-width="1.15" fill="none" stroke-linecap="round"/><path d="M1062.9,436.1 L1061.0,439.4 L1058.7,438.3 L1056.3,436.1 L1058.7,432.5 L1060.9,433.3ZM1059.9,431.2 L1058.6,432.7 L1056.8,431.8 L1056.7,430.0 L1058.3,429.5Z" fill="#9e9e9e"/><path d="M1061.9,436.4 L1061.1,438.5 L1059.8,438.1 L1059.7,435.0 L1061.2,434.1Z" fill="#6e6e6e"/><path d="M1059.9,434.7 L1059.2,436.0 L1058.3,435.6 L1058.3,433.8 L1059.3,432.8ZM1058.5,430.7 L1057.7,431.4 L1056.9,430.7 L1057.7,430.1Z" fill="#dadada"/><path d="M1059.1,433.4 L1060.6,438.0M1059.0,437.4 l1.3,1.5M1062.5,437.4 l0.0,0.1M1061.1,435.2 l-0.1,-0.5" stroke="#3c3c3c" stroke-width="0.69" fill="none"/><path d="M817.1,411.8 L816.0,413.9 M819.1,411.8 L820.0,413.9M819.1,408.8 L821.0,405.9M817.1,409.0 L816.0,412.6" stroke="#b6b6b6" stroke-width="0.85" fill="none" stroke-linecap="round"/><path d="M820.0,410.0 L819.3,411.8 L817.0,411.8 L816.3,409.8 L817.2,407.4 L819.4,408.1ZM819.3,406.5 L818.6,407.7 L816.9,407.3 L817.2,405.8 L818.7,405.5Z" fill="#b6b6b6"/><path d="M819.8,410.8 L819.2,412.5 L818.5,411.5 L818.4,409.4 L819.1,408.6Z" fill="#6e6e6e"/><path d="M818.1,409.1 L817.8,410.7 L817.1,409.8 L817.2,408.5 L817.8,408.3ZM818.4,406.5 L817.8,406.9 L817.4,406.4 L817.9,405.9Z" fill="#dadada"/><path d="M817.7,408.3 L818.8,411.8M815.6,408.3 l-0.1,-0.3M815.7,409.4 l1.2,-0.2" stroke="#3c3c3c" stroke-width="0.51" fill="none"/><path d="M820.7,392.0 L819.5,393.5 M822.2,392.0 L822.4,393.5M822.2,389.8 L823.6,391.6M820.7,389.9 L819.9,392.6" stroke="#a9a9a9" stroke-width="0.70" fill="none" stroke-linecap="round"/><path d="M823.3,390.9 L821.9,392.3 L820.4,392.3 L819.9,390.6 L820.9,388.9 L822.3,389.5ZM822.8,388.0 L822.3,389.1 L821.2,388.7 L821.1,387.6 L822.4,387.3Z" fill="#a9a9a9"/><path d="M822.6,390.9 L822.2,392.3 L821.6,391.8 L821.6,390.3 L822.3,389.6Z" fill="#6e6e6e"/><path d="M821.5,390.0 L821.2,391.0 L820.7,390.8 L820.7,389.3 L821.2,389.1ZM822.1,388.0 L821.8,388.4 L821.4,388.0 L821.9,387.7Z" fill="#dadada"/><path d="M821.1,389.4 L821.9,392.0M821.0,389.7 l0.6,-0.3M820.8,392.1 l-0.8,0.1M819.9,389.5 l0.5,0.8" stroke="#3c3c3c" stroke-width="0.45" fill="none"/><path d="M592.1,428.6 L591.2,433.9 M593.5,428.6 L594.6,433.4 M599.5,428.6 L600.8,433.9 M598.1,428.6 L596.7,433.7M600.8,427.5 Q604.3,424.3 603.6,428.6" stroke="#b6b6b6" stroke-width="1.07" fill="none" stroke-linecap="round"/><path d="M601.6,428.3 L599.5,429.7 L593.7,429.4 L590.4,427.6 L593.5,426.0 L598.5,426.0ZM591.3,426.2 L590.6,427.6 L589.2,427.3 L589.2,425.5 L590.6,425.3Z" fill="#b6b6b6"/><path d="" fill="#6e6e6e"/><path d="M598.8,427.3 L596.7,427.8 L594.2,427.6 L594.4,426.9 L597.4,426.6Z" fill="#dadada"/><path d="M592.5,428.8 L599.5,428.6M596.0,427.9 l0.0,1.4M595.0,427.9 l1.3,0.7M597.8,431.8 l1.6,-0.6" stroke="#3c3c3c" stroke-width="0.64" fill="none"/><path d="" stroke="#a9a9a9" stroke-width="1.14" fill="none" stroke-linecap="round"/><path d="M482.3,438.5 L479.2,439.6 L474.8,439.8 L469.2,438.9 L468.9,437.5 L475.2,436.9 L479.2,436.6ZM484.0,437.3 L483.1,438.9 L481.5,438.2 L481.4,436.5 L483.2,436.3Z" fill="#a9a9a9"/><path d="" fill="#6e6e6e"/><path d="M478.1,437.5 L475.8,437.9 L472.8,437.8 L473.4,437.1 L476.4,436.9Z" fill="#dadada"/><path d="M470.6,439.0 L479.4,438.0M474.6,436.3 l-0.8,-1.4" stroke="#3c3c3c" stroke-width="0.69" fill="none"/><path d="M522.8,408.8 L522.2,410.8 M524.8,408.8 L526.1,410.8M522.8,405.9 L521.7,403.2M524.8,406.2 L525.9,409.6" stroke="#a2a2a2" stroke-width="0.82" fill="none" stroke-linecap="round"/><path d="M525.8,407.4 L524.5,409.3 L522.5,409.0 L522.1,407.3 L522.4,404.8 L525.0,404.8ZM524.4,404.0 L523.3,405.1 L522.0,404.6 L522.1,403.4 L523.3,402.6Z" fill="#a2a2a2"/><path d="M523.9,407.3 L523.1,409.5 L522.2,408.4 L522.4,406.2 L523.1,405.6Z" fill="#6e6e6e"/><path d="M524.9,406.5 L524.6,407.5 L524.0,407.1 L523.8,405.5 L524.5,405.0ZM523.9,403.5 L523.4,404.1 L522.9,403.7 L523.3,403.1Z" fill="#dadada"/><path d="M524.2,405.5 L523.1,408.8M526.2,409.3 l-0.4,-0.0M524.4,407.8 l0.6,-0.2M521.9,406.5 l-1.2,0.4" stroke="#3c3c3c" stroke-width="0.49" fill="none"/><path d="" stroke="#9e9e9e" stroke-width="1.06" fill="none" stroke-linecap="round"/><path d="M1096.3,430.9 L1094.0,432.2 L1089.1,432.9 L1085.1,431.8 L1085.9,430.4 L1087.3,429.3 L1093.5,430.1ZM1084.5,430.1 L1083.5,431.9 L1081.9,431.0 L1081.9,429.7 L1083.6,429.1Z" fill="#9e9e9e"/><path d="" fill="#6e6e6e"/><path d="M1092.0,430.3 L1090.7,430.9 L1087.5,430.8 L1087.1,430.1 L1090.9,430.0Z" fill="#dadada"/><path d="M1085.4,431.7 L1093.6,430.9M1092.9,429.1 l-0.4,1.4M1089.3,431.3 l1.0,-0.4M1090.0,430.6 l1.2,1.6" stroke="#3c3c3c" stroke-width="0.64" fill="none"/><path d="M901.8,417.5 L900.3,419.7 M904.0,417.5 L904.6,419.7M901.8,414.2 L900.8,412.2M904.0,414.5 L905.2,418.4" stroke="#9e9e9e" stroke-width="0.92" fill="none" stroke-linecap="round"/><path d="M905.0,415.9 L903.9,417.9 L901.7,417.7 L900.5,415.1 L901.7,413.2 L904.0,413.5ZM904.8,411.7 L903.8,413.4 L902.4,413.0 L902.4,411.2 L903.8,410.8Z" fill="#9e9e9e"/><path d="M902.9,415.7 L902.3,417.9 L901.4,417.3 L901.4,414.7 L902.3,414.5Z" fill="#6e6e6e"/><path d="M904.1,414.5 L903.6,415.9 L903.0,415.5 L902.8,413.9 L903.7,413.6ZM904.3,411.7 L903.7,412.2 L903.1,411.8 L903.5,411.1Z" fill="#dadada"/><path d="M903.4,413.8 L902.2,417.5M901.2,417.5 l0.8,-1.3" stroke="#3c3c3c" stroke-width="0.55" fill="none"/><path d="M891.5,417.9 L890.4,420.2 M893.7,417.9 L894.7,420.2M893.7,414.7 L895.2,411.9M891.5,415.0 L890.3,418.8" stroke="#9e9e9e" stroke-width="0.92" fill="none" stroke-linecap="round"/><path d="M894.8,416.5 L893.2,418.4 L891.6,419.0 L889.8,415.7 L891.2,413.8 L893.3,413.8ZM893.8,412.3 L892.9,413.7 L891.2,413.3 L891.3,411.5 L892.7,411.2Z" fill="#9e9e9e"/><path d="M894.3,416.6 L893.7,418.2 L892.8,417.9 L892.7,415.0 L893.8,414.2Z" fill="#6e6e6e"/><path d="M892.7,415.2 L892.2,416.7 L891.5,415.8 L891.6,414.3 L892.2,414.1ZM892.6,412.1 L892.2,412.7 L891.7,412.2 L892.1,411.6Z" fill="#dadada"/><path d="M892.1,414.2 L893.3,417.9M894.2,415.4 l-0.9,-0.2M891.9,417.9 l-0.8,-0.3M894.2,416.1 l-0.4,-1.0" stroke="#3c3c3c" stroke-width="0.55" fill="none"/><path d="M697.6,411.5 L696.1,413.6 M699.7,411.5 L700.1,413.6M697.6,408.5 L696.1,408.8M699.7,408.8 L700.8,412.4" stroke="#a9a9a9" stroke-width="0.85" fill="none" stroke-linecap="round"/><path d="M700.6,409.8 L699.7,412.4 L697.7,412.5 L696.8,410.2 L697.3,407.3 L699.6,407.7ZM700.7,406.6 L699.8,407.6 L698.3,407.0 L698.1,405.6 L699.7,405.2Z" fill="#a9a9a9"/><path d="M698.6,410.0 L698.1,412.1 L697.2,411.0 L697.1,408.8 L698.1,408.3Z" fill="#6e6e6e"/><path d="M699.7,409.1 L699.4,410.1 L698.6,409.6 L698.7,408.3 L699.4,408.1ZM700.0,406.2 L699.6,406.7 L699.0,406.1 L699.5,405.7Z" fill="#dadada"/><path d="M699.1,408.1 L698.0,411.5M696.7,410.9 l-0.1,0.9M700.2,409.3 l-0.7,0.3" stroke="#3c3c3c" stroke-width="0.51" fill="none"/><path d="M851.3,404.0 L852.0,407.9 M850.3,404.0 L849.5,407.5 M845.9,404.0 L844.9,407.9 M846.9,404.0 L848.0,407.8M844.9,403.2 Q842.3,400.8 842.9,404.0" stroke="#a2a2a2" stroke-width="0.79" fill="none" stroke-linecap="round"/><path d="M852.4,403.7 L849.7,404.8 L846.2,404.9 L844.3,403.3 L846.5,402.3 L850.9,402.6ZM853.7,402.3 L853.2,403.3 L851.9,403.1 L851.9,401.7 L853.0,401.3Z" fill="#a2a2a2"/><path d="" fill="#6e6e6e"/><path d="M850.1,403.0 L848.9,403.5 L847.0,403.4 L846.6,402.7 L848.7,402.6Z" fill="#dadada"/><path d="M845.9,404.1 L851.0,404.0M848.5,402.4 l-0.4,-0.7M846.6,406.4 l-0.8,-0.5" stroke="#3c3c3c" stroke-width="0.47" fill="none"/><path d="M650.1,424.3 L650.9,429.4 M648.8,424.3 L647.7,428.9 M643.1,424.3 L641.7,429.4 M644.4,424.3 L645.7,429.2M641.7,423.2 Q638.4,420.2 639.1,424.3" stroke="#a2a2a2" stroke-width="1.02" fill="none" stroke-linecap="round"/><path d="M652.1,424.1 L647.9,425.2 L642.9,425.6 L641.8,423.9 L644.9,422.2 L648.4,421.9ZM653.3,422.1 L652.5,423.3 L650.9,422.9 L650.9,421.3 L652.2,421.0Z" fill="#a2a2a2"/><path d="" fill="#6e6e6e"/><path d="M648.6,422.9 L646.9,423.6 L644.9,423.4 L644.4,422.6 L647.0,422.4Z" fill="#dadada"/><path d="M643.1,424.5 L649.7,424.3M647.8,422.3 l0.8,1.1" stroke="#3c3c3c" stroke-width="0.61" fill="none"/><path d="M613.6,414.5 L612.9,416.7 M615.7,414.5 L617.1,416.7M613.6,411.4 L612.6,409.8M615.7,411.7 L616.9,415.4" stroke="#a2a2a2" stroke-width="0.88" fill="none" stroke-linecap="round"/><path d="M617.1,413.1 L615.9,414.4 L613.1,415.2 L612.9,412.4 L613.6,410.0 L615.7,411.0ZM615.5,409.0 L614.5,410.7 L612.8,409.9 L613.0,408.4 L614.6,408.1Z" fill="#a2a2a2"/><path d="M614.7,413.2 L614.2,415.3 L613.3,414.4 L613.2,412.0 L614.1,411.8Z" fill="#6e6e6e"/><path d="M615.7,411.7 L615.5,413.1 L614.7,412.9 L614.6,411.2 L615.3,410.7ZM614.7,408.9 L614.3,409.4 L613.7,408.9 L614.3,408.4Z" fill="#dadada"/><path d="M615.1,411.0 L614.0,414.5M615.7,412.8 l-0.4,0.5M617.0,411.2 l0.2,0.6" stroke="#3c3c3c" stroke-width="0.53" fill="none"/><path d="M757.1,403.9 L757.7,407.8 M756.0,403.9 L755.2,407.4 M751.7,403.9 L750.6,407.8 M752.7,403.9 L753.7,407.7M750.6,403.1 Q748.1,400.7 748.6,403.9" stroke="#a9a9a9" stroke-width="0.79" fill="none" stroke-linecap="round"/><path d="M757.6,403.6 L755.5,404.8 L751.7,404.6 L750.9,403.4 L752.7,402.2 L755.7,402.2ZM759.6,402.4 L758.7,403.4 L757.6,402.8 L757.5,401.8 L758.8,401.2Z" fill="#a9a9a9"/><path d="" fill="#6e6e6e"/><path d="M756.5,403.0 L754.7,403.3 L752.5,403.2 L752.5,402.7 L755.0,402.6Z" fill="#dadada"/><path d="M751.7,404.0 L756.8,403.9M752.4,404.9 l-1.1,0.1" stroke="#3c3c3c" stroke-width="0.47" fill="none"/><path d="M667.8,426.8 L667.0,432.1 M669.2,426.8 L670.3,431.6 M675.1,426.8 L676.4,432.1 M673.7,426.8 L672.3,431.9M676.4,425.8 Q679.9,422.6 679.2,426.8" stroke="#a2a2a2" stroke-width="1.05" fill="none" stroke-linecap="round"/><path d="M676.7,426.5 L674.4,428.2 L669.7,428.0 L666.6,426.6 L668.5,424.6 L674.1,424.5ZM667.3,424.8 L666.3,426.0 L664.9,425.7 L664.8,424.1 L666.5,423.6Z" fill="#a2a2a2"/><path d="" fill="#6e6e6e"/><path d="M674.5,425.5 L672.5,426.2 L669.4,425.9 L669.9,425.2 L673.0,424.9Z" fill="#dadada"/><path d="M668.2,427.1 L675.1,426.8M670.7,429.3 l-0.8,1.1M669.0,428.8 l-0.8,-0.6" stroke="#3c3c3c" stroke-width="0.63" fill="none"/><path d="M482.0,417.9 L480.8,420.2 M484.2,417.9 L485.2,420.2M482.0,414.7 L481.0,416.9M484.2,415.0 L485.4,418.9" stroke="#9e9e9e" stroke-width="0.92" fill="none" stroke-linecap="round"/><path d="M485.6,416.5 L484.1,418.9 L481.6,418.4 L480.7,415.9 L481.9,414.1 L484.1,414.2ZM484.3,412.6 L483.6,413.8 L482.2,413.3 L482.0,411.3 L483.2,411.0Z" fill="#9e9e9e"/><path d="M482.9,416.5 L482.3,418.5 L481.2,417.7 L481.5,415.1 L482.5,415.0Z" fill="#6e6e6e"/><path d="M484.3,415.3 L483.7,416.4 L483.2,416.0 L483.0,414.3 L483.9,414.1ZM483.8,412.1 L483.3,412.6 L482.8,412.1 L483.4,411.5Z" fill="#dadada"/><path d="M483.6,414.2 L482.4,417.9M481.5,415.5 l-1.3,-0.3" stroke="#3c3c3c" stroke-width="0.55" fill="none"/><path d="" stroke="#b6b6b6" stroke-width="1.02" fill="none" stroke-linecap="round"/><path d="M1063.6,427.5 L1061.9,428.8 L1057.0,429.0 L1053.8,428.4 L1052.3,426.7 L1056.3,426.0 L1061.2,426.4ZM1053.5,426.6 L1052.7,427.8 L1051.2,427.5 L1051.5,426.2 L1052.7,425.9Z" fill="#b6b6b6"/><path d="" fill="#6e6e6e"/><path d="M1061.0,426.8 L1059.6,427.4 L1056.2,427.1 L1056.3,426.5 L1059.5,426.2Z" fill="#dadada"/><path d="M1054.4,428.1 L1062.3,427.3M1060.2,424.1 l-1.2,-1.1M1057.8,424.6 l0.6,-1.2M1056.9,426.4 l1.1,-0.7" stroke="#3c3c3c" stroke-width="0.61" fill="none"/><path d="" stroke="#b6b6b6" stroke-width="0.75" fill="none" stroke-linecap="round"/><path d="M832.6,403.2 L831.0,404.3 L826.2,404.6 L822.8,403.8 L823.3,402.6 L827.1,401.9 L830.1,402.4ZM833.1,402.9 L832.5,403.7 L831.5,403.2 L831.4,402.2 L832.5,401.8Z" fill="#b6b6b6"/><path d="" fill="#6e6e6e"/><path d="M829.5,402.7 L827.8,403.1 L826.2,403.0 L825.9,402.5 L828.2,402.5Z" fill="#dadada"/><path d="M824.3,403.7 L830.1,403.1M828.0,399.5 l0.3,0.8M828.0,401.5 l0.4,0.6" stroke="#3c3c3c" stroke-width="0.45" fill="none"/><path d="M735.3,390.0 L734.4,391.5 M736.8,390.0 L737.3,391.5M735.3,387.9 L734.4,388.4M736.8,388.0 L737.6,390.6" stroke="#b6b6b6" stroke-width="0.70" fill="none" stroke-linecap="round"/><path d="M737.3,389.0 L736.8,390.5 L735.1,390.2 L734.4,388.6 L735.3,387.6 L736.8,387.5ZM737.1,386.2 L736.7,387.2 L735.6,386.9 L735.4,385.8 L736.5,385.6Z" fill="#b6b6b6"/><path d="M736.0,388.9 L735.6,390.6 L734.9,389.9 L735.0,388.5 L735.6,387.9Z" fill="#6e6e6e"/><path d="M736.8,388.3 L736.5,389.2 L736.1,388.6 L736.0,387.7 L736.5,387.3ZM736.8,386.1 L736.3,386.5 L736.0,386.2 L736.3,385.8Z" fill="#dadada"/><path d="M736.4,387.6 L735.6,390.0M734.5,387.4 l0.8,0.3M735.3,387.8 l-0.6,0.7" stroke="#3c3c3c" stroke-width="0.45" fill="none"/><path d="M1031.6,416.6 L1031.1,418.9 M1033.7,416.6 L1035.4,418.9M1033.7,413.5 L1035.9,414.5M1031.6,413.7 L1030.4,417.5" stroke="#b6b6b6" stroke-width="0.91" fill="none" stroke-linecap="round"/><path d="M1035.0,414.3 L1033.7,417.8 L1031.3,416.8 L1030.3,415.4 L1031.7,412.8 L1033.4,412.7ZM1032.8,411.1 L1031.9,412.6 L1030.3,411.8 L1030.5,410.1 L1032.0,410.0Z" fill="#b6b6b6"/><path d="M1034.4,415.6 L1033.7,417.3 L1032.7,416.4 L1032.7,414.1 L1033.9,413.8Z" fill="#6e6e6e"/><path d="M1032.7,414.1 L1032.3,415.1 L1031.7,414.7 L1031.5,412.9 L1032.4,412.8ZM1031.8,410.9 L1031.3,411.4 L1030.6,411.0 L1031.2,410.5Z" fill="#dadada"/><path d="M1032.2,413.0 L1033.4,416.6M1033.6,414.7 l0.7,-0.5M1033.6,414.1 l-0.1,-0.8M1032.3,414.4 l1.3,-1.2" stroke="#3c3c3c" stroke-width="0.54" fill="none"/><path d="" stroke="#9e9e9e" stroke-width="1.08" fill="none" stroke-linecap="round"/><path d="M1005.5,432.0 L1001.5,433.1 L996.2,433.7 L991.9,433.3 L992.8,431.2 L995.5,430.4 L1002.0,430.4ZM1006.6,431.6 L1005.4,432.8 L1004.2,432.2 L1004.1,430.7 L1005.7,430.2Z" fill="#9e9e9e"/><path d="" fill="#6e6e6e"/><path d="M1001.4,431.4 L999.9,432.0 L996.5,431.7 L996.4,431.1 L999.0,431.0Z" fill="#dadada"/><path d="M993.9,432.8 L1002.1,432.0M997.4,428.4 l-0.8,1.0M1001.0,428.7 l0.9,1.5M998.8,427.8 l-0.7,-1.0" stroke="#3c3c3c" stroke-width="0.65" fill="none"/><path d="" stroke="#9e9e9e" stroke-width="0.95" fill="none" stroke-linecap="round"/><path d="M795.4,420.8 L792.8,421.9 L787.9,422.0 L784.7,421.6 L785.8,420.1 L789.4,419.7 L793.6,419.9ZM797.0,420.2 L796.2,421.1 L795.1,420.9 L794.9,419.5 L796.5,419.1Z" fill="#9e9e9e"/><path d="" fill="#6e6e6e"/><path d="M792.6,420.1 L790.4,420.5 L787.8,420.4 L788.3,419.8 L791.0,419.6Z" fill="#dadada"/><path d="M786.1,421.3 L793.4,420.6M788.2,418.6 l0.6,-0.4M787.5,416.1 l-1.4,1.4M791.2,417.1 l1.1,-1.4" stroke="#3c3c3c" stroke-width="0.57" fill="none"/><path d="" stroke="#9e9e9e" stroke-width="0.89" fill="none" stroke-linecap="round"/><path d="M1082.6,415.6 L1082.0,416.9 L1075.5,417.1 L1072.4,416.4 L1073.5,415.4 L1077.1,414.2 L1080.6,414.5ZM1073.0,415.0 L1072.0,416.2 L1071.1,415.8 L1070.8,414.6 L1072.0,414.0Z" fill="#9e9e9e"/><path d="" fill="#6e6e6e"/><path d="M1079.8,415.2 L1078.6,415.7 L1075.8,415.5 L1075.6,414.8 L1077.7,414.8Z" fill="#dadada"/><path d="M1073.7,416.4 L1080.5,415.7M1075.5,413.0 l-0.0,-0.4M1078.8,415.1 l-0.1,0.1M1080.0,413.7 l-0.1,0.6" stroke="#3c3c3c" stroke-width="0.54" fill="none"/><path d="M497.1,414.8 L495.3,417.0 M499.3,414.8 L499.5,417.0M497.1,411.7 L494.7,411.7M499.3,412.0 L500.4,415.7" stroke="#9e9e9e" stroke-width="0.89" fill="none" stroke-linecap="round"/><path d="M500.5,413.4 L499.0,415.0 L497.3,415.1 L496.2,413.3 L497.0,410.9 L499.4,410.6ZM500.4,409.5 L499.6,410.8 L498.1,410.0 L498.3,408.6 L499.6,408.3Z" fill="#9e9e9e"/><path d="M498.3,413.6 L497.6,415.3 L496.5,414.5 L496.7,412.6 L497.7,411.4Z" fill="#6e6e6e"/><path d="M499.5,412.0 L498.9,413.5 L498.4,412.9 L498.3,411.4 L498.9,410.8ZM500.0,409.2 L499.6,409.9 L499.0,409.1 L499.5,408.6Z" fill="#dadada"/><path d="M498.7,411.3 L497.5,414.8M498.6,412.4 l0.6,-1.2M499.6,413.8 l1.0,-0.1M497.2,412.7 l-0.4,-1.2" stroke="#3c3c3c" stroke-width="0.53" fill="none"/><path d="M1015.5,424.9 L1013.3,427.4 M1017.9,424.9 L1018.0,427.4M1015.5,421.4 L1013.1,425.8M1017.9,421.7 L1019.2,425.9" stroke="#a2a2a2" stroke-width="1.00" fill="none" stroke-linecap="round"/><path d="M1019.2,423.5 L1017.7,426.3 L1015.3,425.0 L1014.7,423.2 L1015.9,420.5 L1017.7,420.8ZM1019.6,419.0 L1018.5,420.2 L1016.9,420.1 L1016.6,418.3 L1018.7,417.3Z" fill="#a2a2a2"/><path d="M1016.8,423.7 L1015.8,425.4 L1014.9,425.0 L1015.0,422.3 L1016.0,421.4Z" fill="#6e6e6e"/><path d="M1018.0,422.2 L1017.5,423.1 L1016.9,422.7 L1016.8,421.0 L1017.7,420.4ZM1018.8,418.6 L1018.3,419.3 L1017.8,418.5 L1018.2,418.0Z" fill="#dadada"/><path d="M1017.2,420.9 L1015.9,424.9M1013.2,422.3 l1.3,0.5M1016.0,423.7 l1.2,-0.1" stroke="#3c3c3c" stroke-width="0.60" fill="none"/><path d="M652.4,391.8 L652.9,395.1 M651.5,391.8 L650.9,394.8 M647.9,391.8 L647.1,395.1 M648.8,391.8 L649.6,394.9M647.1,391.2 Q645.0,389.3 645.4,391.8" stroke="#b6b6b6" stroke-width="0.70" fill="none" stroke-linecap="round"/><path d="M653.1,391.4 L651.6,392.5 L648.8,392.7 L647.1,391.6 L648.6,390.3 L652.0,390.4ZM654.3,390.4 L653.7,391.4 L652.8,391.2 L652.9,389.9 L653.8,389.7Z" fill="#b6b6b6"/><path d="" fill="#6e6e6e"/><path d="M651.6,391.0 L650.3,391.5 L648.9,391.3 L648.4,390.8 L650.6,390.6Z" fill="#dadada"/><path d="M647.9,392.0 L652.1,391.8M648.7,392.1 l-0.6,-0.6M649.2,392.6 l0.9,0.6" stroke="#3c3c3c" stroke-width="0.45" fill="none"/><path d="" stroke="#a2a2a2" stroke-width="0.78" fill="none" stroke-linecap="round"/><path d="M707.9,405.6 L705.6,406.9 L701.9,406.7 L699.3,406.2 L699.1,405.3 L701.3,404.8 L704.7,404.9ZM708.5,405.4 L707.6,406.0 L706.7,405.7 L706.6,404.7 L707.8,404.4Z" fill="#a2a2a2"/><path d="" fill="#6e6e6e"/><path d="M704.6,405.2 L702.9,405.6 L701.0,405.6 L701.2,405.0 L702.9,405.0Z" fill="#dadada"/><path d="M699.3,406.3 L705.3,405.7M703.2,404.3 l0.4,-0.7M701.7,403.4 l1.0,-0.8M703.4,405.1 l1.1,-0.8" stroke="#3c3c3c" stroke-width="0.47" fill="none"/><path d="M547.3,421.8 L546.5,426.8 M548.6,421.8 L549.6,426.3 M554.1,421.8 L555.4,426.8 M552.9,421.8 L551.6,426.6M555.4,420.8 Q558.7,417.8 558.0,421.8" stroke="#a9a9a9" stroke-width="0.99" fill="none" stroke-linecap="round"/><path d="M556.6,421.3 L553.5,423.0 L549.2,423.1 L546.7,421.6 L549.4,419.8 L554.5,419.7ZM546.8,419.6 L546.0,420.8 L544.5,420.4 L544.4,418.9 L545.8,418.4Z" fill="#a9a9a9"/><path d="" fill="#6e6e6e"/><path d="M553.0,420.7 L551.8,421.1 L549.0,421.0 L548.5,420.3 L551.9,420.1Z" fill="#dadada"/><path d="M547.7,422.0 L554.1,421.8M553.0,423.1 l0.6,0.4" stroke="#3c3c3c" stroke-width="0.60" fill="none"/><path d="M597.6,413.8 L596.9,416.0 M599.7,413.8 L601.0,416.0M597.6,410.7 L595.2,410.3M599.7,411.0 L600.8,414.7" stroke="#a9a9a9" stroke-width="0.88" fill="none" stroke-linecap="round"/><path d="M600.8,411.9 L599.9,414.7 L597.8,414.6 L596.4,411.9 L597.5,409.3 L599.5,410.2ZM599.5,408.5 L598.5,409.7 L596.9,409.3 L596.9,407.7 L598.5,407.4Z" fill="#a9a9a9"/><path d="M598.6,412.5 L598.2,414.4 L597.2,413.4 L597.1,411.3 L598.0,410.5Z" fill="#6e6e6e"/><path d="M599.7,411.2 L599.4,412.5 L598.6,411.8 L598.7,410.2 L599.4,409.9ZM598.7,408.3 L598.3,408.9 L597.7,408.4 L598.3,407.7Z" fill="#dadada"/><path d="M599.1,410.3 L597.9,413.8M597.8,412.4 l0.9,0.1M600.6,413.5 l-1.1,0.8M596.8,410.4 l-1.1,0.2" stroke="#3c3c3c" stroke-width="0.53" fill="none"/><path d="M1041.8,424.8 L1042.6,429.9 M1040.5,424.8 L1039.4,429.4 M1034.8,424.8 L1033.4,429.9 M1036.1,424.8 L1037.4,429.7M1033.4,423.7 Q1030.1,420.7 1030.7,424.8" stroke="#b6b6b6" stroke-width="1.03" fill="none" stroke-linecap="round"/><path d="M1043.5,424.3 L1040.5,425.7 L1035.6,425.9 L1032.5,424.0 L1036.3,422.7 L1040.3,422.9ZM1045.0,422.7 L1044.1,424.0 L1042.8,423.4 L1042.7,421.6 L1044.2,421.3Z" fill="#b6b6b6"/><path d="" fill="#6e6e6e"/><path d="M1040.9,423.5 L1038.7,424.2 L1036.0,423.8 L1036.3,423.1 L1039.1,422.9Z" fill="#dadada"/><path d="M1034.8,425.0 L1041.4,424.8M1041.0,428.0 l-0.9,-0.4" stroke="#3c3c3c" stroke-width="0.62" fill="none"/><path d="M650.5,395.7 L651.0,399.1 M649.6,395.7 L648.9,398.8 M645.7,395.7 L644.8,399.1 M646.6,395.7 L647.5,399.0M644.8,395.0 Q642.6,392.9 643.1,395.7" stroke="#9e9e9e" stroke-width="0.70" fill="none" stroke-linecap="round"/><path d="M651.4,395.3 L649.2,396.4 L646.8,396.4 L645.1,395.2 L646.2,394.4 L649.3,394.1ZM652.6,394.2 L652.1,395.1 L651.0,395.0 L650.9,393.7 L652.0,393.3Z" fill="#9e9e9e"/><path d="" fill="#6e6e6e"/><path d="M649.4,394.9 L648.6,395.2 L646.4,395.0 L646.8,394.6 L648.6,394.5Z" fill="#dadada"/><path d="M645.7,395.8 L650.2,395.7M648.4,395.6 l0.3,-0.4M646.5,396.5 l0.3,-0.3M647.5,396.2 l0.8,-0.9" stroke="#3c3c3c" stroke-width="0.45" fill="none"/><path d="M998.2,416.5 L997.1,418.8 M1000.4,416.5 L1001.4,418.8M1000.4,413.3 L1002.5,410.6M998.2,413.6 L997.0,417.4" stroke="#a2a2a2" stroke-width="0.91" fill="none" stroke-linecap="round"/><path d="M1001.6,414.7 L1000.7,417.3 L998.4,417.5 L997.1,414.7 L997.9,411.9 L1000.4,412.9ZM1000.4,411.3 L999.4,412.4 L998.0,411.6 L997.9,410.5 L999.6,410.0Z" fill="#a2a2a2"/><path d="M1001.2,415.1 L1000.4,416.9 L999.5,416.0 L999.5,413.6 L1000.5,413.5Z" fill="#6e6e6e"/><path d="M999.2,413.7 L998.9,414.9 L998.2,414.6 L998.2,412.7 L999.0,412.3ZM999.4,410.7 L998.8,411.3 L998.2,410.8 L998.9,410.2Z" fill="#dadada"/><path d="M998.8,412.9 L1000.0,416.5M997.9,413.7 l-0.4,-0.9" stroke="#3c3c3c" stroke-width="0.54" fill="none"/><path d="M484.2,414.0 L483.1,416.2 M486.3,414.0 L487.2,416.2M486.3,410.9 L489.1,408.5M484.2,411.2 L483.0,414.9" stroke="#9e9e9e" stroke-width="0.88" fill="none" stroke-linecap="round"/><path d="M487.8,412.1 L486.7,414.6 L484.1,414.4 L483.4,412.5 L484.6,409.9 L486.3,409.7ZM486.4,409.0 L485.5,410.2 L484.0,409.8 L483.8,408.1 L485.5,407.5Z" fill="#9e9e9e"/><path d="M486.8,412.7 L486.2,414.5 L485.4,413.7 L485.3,411.4 L486.4,411.0Z" fill="#6e6e6e"/><path d="M485.2,411.2 L484.9,412.6 L484.3,412.2 L484.2,410.5 L484.9,410.3ZM485.3,408.5 L484.9,408.9 L484.2,408.6 L484.9,408.0Z" fill="#dadada"/><path d="M484.8,410.5 L485.9,414.0M486.4,412.8 l-0.4,-0.7M485.8,413.0 l0.8,-0.5M485.2,411.0 l0.1,0.6" stroke="#3c3c3c" stroke-width="0.53" fill="none"/><path d="M647.1,399.5 L645.7,401.3 M648.8,399.5 L649.1,401.3M648.8,397.0 L650.2,394.7M647.1,397.2 L646.2,400.2" stroke="#b6b6b6" stroke-width="0.71" fill="none" stroke-linecap="round"/><path d="M649.9,397.7 L649.0,400.1 L647.2,399.7 L645.8,398.1 L646.7,396.4 L648.7,396.3ZM649.8,395.4 L649.0,396.4 L648.0,396.0 L647.9,394.5 L649.1,394.3Z" fill="#b6b6b6"/><path d="M649.4,398.7 L648.9,400.1 L648.0,399.1 L648.0,397.8 L648.8,396.7Z" fill="#6e6e6e"/><path d="M647.9,397.6 L647.7,398.4 L647.0,398.0 L647.2,396.7 L647.7,396.5ZM648.9,395.0 L648.4,395.5 L648.0,395.1 L648.3,394.6Z" fill="#dadada"/><path d="M647.6,396.7 L648.5,399.5M647.2,396.4 l0.1,-0.4M646.8,397.7 l-0.1,0.0M648.8,399.2 l-0.2,0.8" stroke="#3c3c3c" stroke-width="0.45" fill="none"/><path d="M654.1,417.5 L654.9,422.2 M652.9,417.5 L651.9,421.7 M647.6,417.5 L646.4,422.2 M648.9,417.5 L650.1,422.0M646.4,416.5 Q643.3,413.7 643.9,417.5" stroke="#9e9e9e" stroke-width="0.94" fill="none" stroke-linecap="round"/><path d="M655.7,417.3 L652.8,418.2 L647.9,418.4 L646.9,417.0 L648.1,415.9 L652.6,415.1ZM657.2,415.5 L656.3,416.8 L655.1,416.4 L654.9,414.7 L656.1,414.5Z" fill="#9e9e9e"/><path d="" fill="#6e6e6e"/><path d="M653.2,416.4 L651.4,416.9 L648.8,416.6 L648.7,416.1 L651.4,415.9Z" fill="#dadada"/><path d="M647.6,417.6 L653.8,417.5M648.9,416.9 l0.2,-0.2M648.3,416.5 l-1.0,0.2" stroke="#3c3c3c" stroke-width="0.57" fill="none"/><path d="M561.3,409.8 L560.8,411.8 M563.3,409.8 L564.7,411.8M563.3,406.9 L564.4,409.7M561.3,407.1 L560.2,410.6" stroke="#a2a2a2" stroke-width="0.83" fill="none" stroke-linecap="round"/><path d="M564.7,407.6 L563.4,410.5 L561.4,410.5 L560.2,407.8 L561.4,405.3 L563.0,406.0ZM562.6,404.5 L561.5,406.1 L560.4,405.4 L560.2,404.2 L561.8,403.4Z" fill="#a2a2a2"/><path d="M563.8,408.5 L563.3,410.1 L562.6,409.6 L562.4,407.8 L563.3,406.7Z" fill="#6e6e6e"/><path d="M562.4,407.5 L562.0,408.5 L561.2,408.0 L561.3,406.3 L562.0,406.2ZM561.4,404.5 L561.0,405.1 L560.4,404.6 L561.1,404.1Z" fill="#dadada"/><path d="M561.8,406.4 L562.9,409.8M560.6,409.3 l-1.1,0.4M563.7,408.0 l-0.8,0.8M562.4,407.5 l-0.6,0.9" stroke="#3c3c3c" stroke-width="0.50" fill="none"/><path d="M522.2,432.8 L520.4,435.5 M524.8,432.8 L525.5,435.5M522.2,429.0 L520.1,430.9M524.8,429.3 L526.2,433.9" stroke="#b6b6b6" stroke-width="1.09" fill="none" stroke-linecap="round"/><path d="M526.2,431.1 L525.2,433.0 L522.5,433.0 L521.0,431.1 L522.1,427.1 L525.3,428.1ZM525.7,426.3 L524.4,428.0 L522.8,427.1 L522.7,425.2 L524.3,424.9Z" fill="#b6b6b6"/><path d="M523.5,431.6 L522.9,433.5 L521.4,432.9 L521.7,430.2 L522.6,428.7Z" fill="#6e6e6e"/><path d="M524.9,429.4 L524.5,431.1 L523.6,430.1 L523.6,428.7 L524.4,428.3ZM525.1,426.0 L524.4,426.5 L523.8,426.0 L524.3,425.4Z" fill="#dadada"/><path d="M524.1,428.5 L522.6,432.8M525.1,430.7 l1.1,1.2M524.6,430.9 l1.5,-0.6M521.8,431.0 l-0.0,-0.4" stroke="#3c3c3c" stroke-width="0.65" fill="none"/><path d="M806.6,387.3 L806.4,388.7 M808.0,387.3 L809.1,388.7M808.0,385.3 L809.1,384.5M806.6,385.4 L805.9,387.9" stroke="#b6b6b6" stroke-width="0.70" fill="none" stroke-linecap="round"/><path d="M808.8,385.9 L808.0,387.5 L806.8,387.4 L805.7,386.3 L806.5,384.4 L808.0,384.2ZM807.5,383.9 L806.7,384.7 L805.8,384.5 L805.9,383.2 L806.9,383.0Z" fill="#b6b6b6"/><path d="M808.4,386.6 L808.2,387.8 L807.5,387.3 L807.5,385.7 L808.1,385.0Z" fill="#6e6e6e"/><path d="M807.4,385.4 L807.1,386.5 L806.6,386.1 L806.7,385.1 L807.1,384.8ZM806.7,383.6 L806.3,384.0 L806.0,383.6 L806.4,383.4Z" fill="#dadada"/><path d="M807.0,385.0 L807.8,387.3M809.6,387.3 l-0.5,0.8M807.4,384.8 l-0.3,0.2M806.9,386.7 l-0.5,0.6" stroke="#3c3c3c" stroke-width="0.45" fill="none"/><path d="M722.1,413.5 L721.3,415.7 M724.2,413.5 L725.4,415.7M724.2,410.5 L725.9,410.7M722.1,410.8 L721.0,414.4" stroke="#b6b6b6" stroke-width="0.87" fill="none" stroke-linecap="round"/><path d="M725.4,411.8 L724.0,414.4 L722.1,414.6 L721.4,411.6 L722.1,409.0 L724.1,409.0ZM723.9,408.5 L723.1,409.5 L721.7,408.9 L721.7,407.3 L722.8,407.2Z" fill="#b6b6b6"/><path d="M724.9,412.4 L724.2,414.2 L723.5,413.4 L723.3,410.9 L724.5,410.3Z" fill="#6e6e6e"/><path d="M723.2,410.8 L722.8,412.0 L722.1,411.6 L722.1,410.3 L722.9,409.9ZM722.8,408.1 L722.4,408.7 L721.9,408.0 L722.3,407.6Z" fill="#dadada"/><path d="M722.7,410.1 L723.8,413.5M720.9,411.8 l1.0,0.2M722.9,413.8 l-0.6,0.8M724.8,413.3 l0.8,-1.0" stroke="#3c3c3c" stroke-width="0.52" fill="none"/><path d="M634.6,405.3 L634.0,409.3 M635.7,405.3 L636.5,408.9 M640.2,405.3 L641.2,409.3 M639.1,405.3 L638.1,409.1M641.2,404.5 Q643.8,402.1 643.3,405.3" stroke="#a9a9a9" stroke-width="0.80" fill="none" stroke-linecap="round"/><path d="M641.3,404.6 L640.0,406.1 L635.3,405.9 L634.0,404.9 L634.9,403.8 L639.2,403.3ZM634.3,403.6 L633.5,404.7 L632.5,404.2 L632.3,403.1 L633.5,402.8Z" fill="#a9a9a9"/><path d="" fill="#6e6e6e"/><path d="M639.7,404.4 L638.1,404.9 L635.6,404.7 L635.8,404.1 L637.9,403.8Z" fill="#dadada"/><path d="M635.0,405.4 L640.2,405.3M638.3,407.2 l0.3,-0.4" stroke="#3c3c3c" stroke-width="0.48" fill="none"/><path d="M1042.6,426.9 L1041.0,429.4 M1045.0,426.9 L1045.8,429.4M1045.0,423.3 L1047.8,421.3M1042.6,423.6 L1041.3,427.9" stroke="#a2a2a2" stroke-width="1.02" fill="none" stroke-linecap="round"/><path d="M1046.4,425.2 L1045.2,427.3 L1042.0,427.7 L1041.7,424.6 L1042.4,422.2 L1044.9,422.1ZM1045.8,420.6 L1045.0,422.1 L1043.0,421.5 L1042.7,420.0 L1044.7,419.3Z" fill="#a2a2a2"/><path d="M1045.7,425.2 L1045.3,427.8 L1044.0,427.1 L1043.9,424.2 L1045.0,423.1Z" fill="#6e6e6e"/><path d="M1044.0,424.1 L1043.5,424.9 L1042.7,424.6 L1042.5,422.8 L1043.4,422.3ZM1044.5,420.3 L1043.8,421.0 L1043.4,420.5 L1043.9,419.9Z" fill="#dadada"/><path d="M1043.3,422.8 L1044.6,426.9M1040.6,425.2 l-0.8,1.5M1046.3,427.1 l-1.5,-0.7M1040.5,422.6 l0.3,-0.7" stroke="#3c3c3c" stroke-width="0.61" fill="none"/><path d="M657.8,417.4 L657.5,419.7 M660.0,417.4 L661.9,419.7M657.8,414.2 L655.6,414.6M660.0,414.5 L661.2,418.3" stroke="#9e9e9e" stroke-width="0.92" fill="none" stroke-linecap="round"/><path d="M661.4,415.7 L660.0,418.4 L657.7,418.4 L656.5,416.0 L657.3,413.1 L659.9,412.6ZM658.9,412.0 L658.1,413.0 L656.5,412.5 L656.3,411.2 L658.0,410.8Z" fill="#9e9e9e"/><path d="M658.8,416.2 L658.3,418.2 L657.2,417.1 L657.1,415.1 L658.2,414.3Z" fill="#6e6e6e"/><path d="M660.2,414.6 L659.7,415.8 L658.9,415.5 L659.1,414.0 L659.6,413.2ZM658.4,411.7 L657.7,412.2 L657.3,411.7 L657.8,411.1Z" fill="#dadada"/><path d="M659.4,413.8 L658.2,417.4M657.7,415.0 l-0.2,-0.6" stroke="#3c3c3c" stroke-width="0.55" fill="none"/><path d="M602.5,421.0 L601.7,425.9 M603.8,421.0 L604.8,425.4 M609.3,421.0 L610.6,425.9 M608.0,421.0 L606.7,425.7M610.6,420.0 Q613.8,417.0 613.1,421.0" stroke="#9e9e9e" stroke-width="0.98" fill="none" stroke-linecap="round"/><path d="M610.7,420.6 L608.2,422.1 L602.4,422.0 L600.5,420.4 L604.6,418.8 L608.2,418.6ZM601.8,418.8 L600.9,420.2 L599.7,419.9 L599.6,418.3 L601.2,417.7Z" fill="#9e9e9e"/><path d="" fill="#6e6e6e"/><path d="M608.7,419.7 L607.3,420.3 L603.5,420.1 L604.4,419.5 L606.6,419.2Z" fill="#dadada"/><path d="M602.9,421.2 L609.3,421.0M608.9,423.4 l1.5,-0.2M603.5,421.4 l-0.3,0.2" stroke="#3c3c3c" stroke-width="0.59" fill="none"/><path d="M866.1,414.6 L864.5,416.8 M868.2,414.6 L868.6,416.8M868.2,411.5 L870.8,410.5M866.1,411.7 L864.9,415.4" stroke="#a2a2a2" stroke-width="0.88" fill="none" stroke-linecap="round"/><path d="M868.9,413.0 L868.2,415.0 L866.5,414.8 L865.1,412.5 L866.0,410.1 L867.8,410.7ZM869.0,409.0 L868.1,410.7 L866.7,410.1 L866.8,408.4 L868.1,408.1Z" fill="#a2a2a2"/><path d="M868.9,413.4 L868.3,414.8 L867.1,414.2 L867.3,412.2 L868.3,411.3Z" fill="#6e6e6e"/><path d="M867.2,411.9 L866.7,413.1 L866.0,412.9 L866.0,411.3 L866.9,410.5ZM868.1,409.0 L867.5,409.5 L866.9,408.9 L867.6,408.5Z" fill="#dadada"/><path d="M866.7,411.0 L867.8,414.6M866.6,412.6 l-0.5,-1.2M868.6,410.9 l0.2,-1.2M867.8,412.1 l-0.7,-0.6" stroke="#3c3c3c" stroke-width="0.53" fill="none"/><path d="M720.5,424.3 L719.9,426.8 M722.9,424.3 L724.6,426.8M720.5,420.8 L718.4,420.8M722.9,421.1 L724.1,425.3" stroke="#9e9e9e" stroke-width="0.99" fill="none" stroke-linecap="round"/><path d="M724.0,422.8 L722.7,424.5 L720.6,424.9 L719.6,422.6 L720.1,419.7 L723.1,419.3ZM721.9,418.4 L721.3,419.8 L719.4,419.0 L719.5,417.4 L721.2,417.0Z" fill="#9e9e9e"/><path d="M721.5,423.0 L720.9,425.1 L720.0,424.4 L719.7,421.5 L721.1,420.5Z" fill="#6e6e6e"/><path d="M723.0,421.3 L722.4,423.0 L721.7,422.0 L721.6,420.3 L722.5,420.0ZM721.6,418.1 L720.9,418.6 L720.3,418.0 L720.8,417.5Z" fill="#dadada"/><path d="M722.2,420.3 L720.9,424.3M725.0,422.1 l-0.5,-1.2M721.5,424.7 l1.1,1.0" stroke="#3c3c3c" stroke-width="0.60" fill="none"/><path d="" stroke="#a2a2a2" stroke-width="0.73" fill="none" stroke-linecap="round"/><path d="M944.1,401.3 L942.8,402.0 L939.4,402.4 L937.4,401.8 L935.8,400.7 L938.5,400.1 L943.0,400.7ZM945.6,400.8 L945.4,401.7 L944.2,401.2 L944.2,400.3 L945.0,400.1Z" fill="#a2a2a2"/><path d="" fill="#6e6e6e"/><path d="M942.4,400.8 L941.0,401.2 L938.6,401.1 L938.8,400.7 L941.3,400.5Z" fill="#dadada"/><path d="M937.2,401.8 L942.8,401.2M942.4,399.8 l-0.8,0.6M942.2,399.2 l-0.4,-0.1" stroke="#3c3c3c" stroke-width="0.45" fill="none"/><path d="M605.9,409.5 L604.5,411.6 M607.9,409.5 L608.4,411.6M607.9,406.6 L608.8,405.0M605.9,406.9 L604.8,410.4" stroke="#b6b6b6" stroke-width="0.83" fill="none" stroke-linecap="round"/><path d="M609.2,408.1 L607.7,409.7 L605.7,409.9 L604.9,408.2 L605.9,405.6 L608.2,405.7ZM608.8,404.5 L608.0,405.7 L606.3,405.1 L606.2,404.0 L607.8,403.3Z" fill="#b6b6b6"/><path d="M608.6,408.6 L608.1,410.1 L606.9,409.2 L607.1,407.6 L608.0,406.3Z" fill="#6e6e6e"/><path d="M606.9,407.2 L606.4,408.0 L605.9,407.8 L605.9,406.2 L606.5,405.6ZM607.6,404.2 L607.1,404.9 L606.7,404.3 L607.1,403.9Z" fill="#dadada"/><path d="M606.4,406.2 L607.5,409.5M605.5,408.5 l0.4,-1.2M605.3,406.5 l-0.4,0.2" stroke="#3c3c3c" stroke-width="0.50" fill="none"/><path d="M627.0,432.0 L625.6,434.7 M629.6,432.0 L630.7,434.7M629.6,428.2 L632.0,431.6M627.0,428.5 L625.6,433.1" stroke="#9e9e9e" stroke-width="1.08" fill="none" stroke-linecap="round"/><path d="M631.5,429.5 L629.7,432.2 L627.4,432.9 L625.6,430.2 L627.3,426.7 L629.2,427.0ZM630.0,425.4 L628.7,427.1 L627.1,426.3 L627.1,424.3 L628.7,423.8Z" fill="#9e9e9e"/><path d="M630.4,430.4 L629.9,432.4 L628.4,432.0 L628.4,428.8 L629.7,428.3Z" fill="#6e6e6e"/><path d="M628.2,428.8 L627.9,430.4 L627.0,430.1 L627.0,427.8 L627.9,426.9ZM628.6,425.2 L628.0,425.9 L627.2,425.2 L628.0,424.6Z" fill="#dadada"/><path d="M627.7,427.7 L629.1,432.0M626.8,432.3 l1.2,0.7M631.3,429.7 l0.9,-1.4" stroke="#3c3c3c" stroke-width="0.65" fill="none"/><path d="M522.4,430.0 L521.8,432.7 M524.9,430.0 L526.7,432.7M524.9,426.3 L527.0,430.7M522.4,426.6 L521.0,431.1" stroke="#b6b6b6" stroke-width="1.06" fill="none" stroke-linecap="round"/><path d="M526.3,427.5 L525.1,431.1 L522.6,431.1 L520.7,428.3 L522.4,425.3 L524.8,424.4ZM523.9,423.7 L523.0,425.2 L521.1,424.5 L521.4,422.9 L523.0,422.3Z" fill="#b6b6b6"/><path d="M525.8,428.4 L525.1,430.6 L524.0,430.0 L523.9,427.3 L525.1,426.7Z" fill="#6e6e6e"/><path d="M523.8,426.9 L523.4,428.1 L522.6,427.9 L522.5,425.9 L523.2,425.6ZM523.0,423.3 L522.3,423.9 L521.7,423.4 L522.2,422.7Z" fill="#dadada"/><path d="M523.1,425.8 L524.5,430.0M526.2,430.1 l0.6,0.9" stroke="#3c3c3c" stroke-width="0.64" fill="none"/><path d="M992.2,406.0 L991.2,408.0 M994.1,406.0 L994.9,408.0M994.1,403.3 L996.1,402.9M992.2,403.5 L991.2,406.8" stroke="#b6b6b6" stroke-width="0.79" fill="none" stroke-linecap="round"/><path d="M995.3,404.9 L994.2,406.5 L992.3,406.5 L990.9,404.6 L992.5,402.6 L994.4,402.1ZM994.2,401.2 L993.6,402.4 L992.0,401.9 L992.2,400.4 L993.5,400.3Z" fill="#b6b6b6"/><path d="M994.6,404.6 L994.3,406.5 L993.3,405.7 L993.2,403.7 L994.2,402.9Z" fill="#6e6e6e"/><path d="M993.2,403.5 L992.8,404.7 L992.3,404.2 L992.2,402.7 L992.8,402.6ZM993.3,401.1 L992.8,401.5 L992.3,401.1 L992.8,400.5Z" fill="#dadada"/><path d="M992.7,402.9 L993.8,406.0M994.4,404.4 l0.7,0.8M991.3,406.2 l-1.0,-0.6" stroke="#3c3c3c" stroke-width="0.47" fill="none"/><path d="M899.0,397.2 L898.3,398.9 M900.7,397.2 L901.5,398.9M899.0,394.8 L897.0,394.2M900.7,395.0 L901.6,397.9" stroke="#a2a2a2" stroke-width="0.70" fill="none" stroke-linecap="round"/><path d="M901.7,395.9 L900.9,397.6 L898.5,397.6 L898.4,395.8 L899.2,394.0 L900.5,394.0ZM900.6,392.9 L900.1,394.1 L898.6,393.6 L899.0,392.4 L900.1,392.1Z" fill="#a2a2a2"/><path d="M900.0,395.9 L899.4,397.9 L898.5,396.9 L898.5,395.3 L899.4,395.0Z" fill="#6e6e6e"/><path d="M900.8,395.1 L900.4,396.1 L900.0,395.8 L899.9,394.8 L900.4,394.3ZM900.3,392.9 L899.9,393.4 L899.4,392.9 L899.8,392.5Z" fill="#dadada"/><path d="M900.2,394.5 L899.3,397.2M900.9,394.6 l-0.4,-0.2" stroke="#3c3c3c" stroke-width="0.45" fill="none"/><path d="M1009.8,425.1 L1009.2,427.6 M1012.2,425.1 L1013.9,427.6M1012.2,421.5 L1013.9,419.5M1009.8,421.8 L1008.5,426.1" stroke="#a9a9a9" stroke-width="1.00" fill="none" stroke-linecap="round"/><path d="M1013.1,422.9 L1011.9,425.9 L1010.2,425.5 L1008.6,423.2 L1009.1,420.3 L1012.4,419.9ZM1011.6,418.9 L1010.2,420.5 L1008.8,419.9 L1008.8,418.0 L1010.2,417.4Z" fill="#a9a9a9"/><path d="M1013.1,423.7 L1012.2,425.7 L1011.3,424.7 L1011.1,422.5 L1012.2,421.6Z" fill="#6e6e6e"/><path d="M1011.2,421.9 L1010.5,423.4 L1009.7,423.0 L1009.8,421.1 L1010.5,420.3ZM1010.1,418.8 L1009.7,419.4 L1008.9,418.8 L1009.6,418.2Z" fill="#dadada"/><path d="M1010.5,421.0 L1011.8,425.1M1010.7,425.6 l0.7,0.6" stroke="#3c3c3c" stroke-width="0.60" fill="none"/><path d="M1028.7,414.4 L1029.4,419.0 M1027.5,414.4 L1026.6,418.5 M1022.5,414.4 L1021.3,419.0 M1023.7,414.4 L1024.8,418.8M1021.3,413.5 Q1018.3,410.8 1018.9,414.4" stroke="#b6b6b6" stroke-width="0.91" fill="none" stroke-linecap="round"/><path d="M1030.4,413.7 L1028.3,415.6 L1023.3,415.6 L1020.6,413.8 L1022.5,412.4 L1027.4,412.8ZM1031.4,412.8 L1030.9,413.8 L1029.3,413.4 L1029.6,411.9 L1030.9,411.7Z" fill="#b6b6b6"/><path d="" fill="#6e6e6e"/><path d="M1028.1,413.3 L1026.5,413.9 L1024.1,413.7 L1023.7,413.1 L1025.7,412.9Z" fill="#dadada"/><path d="M1022.5,414.6 L1028.4,414.4M1023.8,416.9 l-0.5,0.3M1023.5,415.0 l-0.0,-0.2M1027.5,413.4 l0.4,1.0" stroke="#3c3c3c" stroke-width="0.55" fill="none"/><path d="M1032.8,416.1 L1031.4,418.3 M1035.0,416.1 L1035.7,418.3M1035.0,412.9 L1035.7,410.0M1032.8,413.2 L1031.6,417.0" stroke="#9e9e9e" stroke-width="0.90" fill="none" stroke-linecap="round"/><path d="M1036.4,413.8 L1035.5,416.7 L1032.7,416.8 L1031.8,413.8 L1032.7,411.6 L1035.1,411.4ZM1035.6,410.9 L1034.4,412.1 L1033.1,411.7 L1033.2,409.7 L1034.6,409.4Z" fill="#9e9e9e"/><path d="M1035.9,415.1 L1035.2,416.4 L1034.2,415.7 L1034.1,413.5 L1035.2,413.1Z" fill="#6e6e6e"/><path d="M1033.9,413.6 L1033.7,414.6 L1032.8,414.1 L1032.9,412.7 L1033.4,412.0ZM1034.5,410.3 L1033.9,410.8 L1033.4,410.3 L1034.0,409.8Z" fill="#dadada"/><path d="M1033.4,412.4 L1034.6,416.1M1032.6,416.6 l-0.6,-0.9" stroke="#3c3c3c" stroke-width="0.54" fill="none"/><path d="M714.3,406.3 L714.0,408.2 M716.2,406.3 L717.7,408.2M714.3,403.5 L712.5,405.2M716.2,403.7 L717.2,407.0" stroke="#b6b6b6" stroke-width="0.79" fill="none" stroke-linecap="round"/><path d="M717.1,404.3 L716.1,406.6 L714.5,406.3 L713.4,404.4 L714.3,402.6 L716.6,402.4ZM715.5,401.4 L714.6,402.5 L713.0,402.1 L713.1,400.7 L714.4,400.2Z" fill="#b6b6b6"/><path d="M715.4,405.0 L714.8,406.9 L713.9,406.2 L713.8,404.1 L714.7,403.5Z" fill="#6e6e6e"/><path d="M716.3,404.0 L715.8,404.9 L715.2,404.4 L715.2,403.3 L715.9,402.5ZM714.9,401.3 L714.4,401.8 L713.9,401.4 L714.4,400.8Z" fill="#dadada"/><path d="M715.6,403.1 L714.6,406.3M714.9,404.0 l0.9,-0.2" stroke="#3c3c3c" stroke-width="0.47" fill="none"/><path d="M584.0,424.6 L582.3,427.1 M586.3,424.6 L587.0,427.1M584.0,421.2 L581.9,419.3M586.3,421.5 L587.6,425.6" stroke="#a2a2a2" stroke-width="1.00" fill="none" stroke-linecap="round"/><path d="M587.8,423.1 L586.3,425.3 L583.8,425.3 L582.4,423.2 L584.5,420.3 L586.4,419.7ZM586.9,418.8 L586.3,420.1 L584.5,419.6 L584.5,417.7 L586.3,417.5Z" fill="#a2a2a2"/><path d="M585.2,423.2 L584.3,425.6 L583.1,424.2 L583.5,421.8 L584.4,420.6Z" fill="#6e6e6e"/><path d="M586.4,421.7 L586.1,423.2 L585.3,422.5 L585.2,420.9 L585.8,420.1ZM586.5,418.2 L586.0,418.9 L585.5,418.4 L585.8,417.8Z" fill="#dadada"/><path d="M585.6,420.7 L584.4,424.6M582.0,421.4 l0.4,-0.4M587.6,420.9 l-0.1,0.7" stroke="#3c3c3c" stroke-width="0.60" fill="none"/><path d="M740.3,396.9 L740.8,400.5 M739.4,396.9 L738.6,400.1 M735.4,396.9 L734.5,400.5 M736.3,396.9 L737.3,400.3M734.5,396.2 Q732.2,394.1 732.7,396.9" stroke="#9e9e9e" stroke-width="0.71" fill="none" stroke-linecap="round"/><path d="M740.5,396.4 L739.7,397.8 L736.3,397.6 L733.8,396.4 L735.4,395.5 L740.3,395.4ZM742.5,395.7 L742.0,396.4 L740.9,396.3 L740.9,394.9 L741.8,394.5Z" fill="#9e9e9e"/><path d="" fill="#6e6e6e"/><path d="M739.9,396.1 L738.5,396.5 L736.5,396.3 L736.2,395.9 L738.2,395.8Z" fill="#dadada"/><path d="M735.4,397.1 L740.0,396.9M739.7,397.6 l0.1,0.3" stroke="#3c3c3c" stroke-width="0.45" fill="none"/><path d="M867.6,404.3 L867.0,408.2 M868.6,404.3 L869.4,407.8 M873.0,404.3 L874.1,408.2 M872.0,404.3 L871.0,408.1M874.1,403.5 Q876.6,401.1 876.1,404.3" stroke="#b6b6b6" stroke-width="0.79" fill="none" stroke-linecap="round"/><path d="M874.1,403.7 L871.5,405.0 L869.0,404.9 L866.0,403.8 L868.8,402.3 L872.7,402.9ZM867.0,402.9 L866.5,403.7 L865.2,403.4 L865.3,402.3 L866.6,401.8Z" fill="#b6b6b6"/><path d="" fill="#6e6e6e"/><path d="M872.7,403.4 L871.5,403.8 L868.7,403.6 L868.5,403.0 L871.4,402.8Z" fill="#dadada"/><path d="M867.9,404.4 L873.0,404.3M868.5,403.9 l-0.9,0.9M869.0,404.3 l-0.3,0.8" stroke="#3c3c3c" stroke-width="0.47" fill="none"/><path d="M812.5,394.3 L813.0,397.7 M811.6,394.3 L810.9,397.4 M807.8,394.3 L807.0,397.7 M808.7,394.3 L809.6,397.6M807.0,393.6 Q804.8,391.6 805.2,394.3" stroke="#a2a2a2" stroke-width="0.70" fill="none" stroke-linecap="round"/><path d="M813.2,394.2 L812.3,395.1 L808.3,395.1 L806.4,394.1 L808.3,392.9 L811.6,393.0ZM814.5,393.0 L814.1,393.7 L813.0,393.3 L813.0,392.3 L813.9,392.2Z" fill="#a2a2a2"/><path d="" fill="#6e6e6e"/><path d="M811.9,393.5 L810.8,393.9 L808.7,393.8 L808.7,393.2 L810.5,393.0Z" fill="#dadada"/><path d="M807.8,394.5 L812.2,394.3M811.4,394.6 l1.0,0.9M809.5,394.1 l-0.4,0.7M810.7,396.4 l-0.7,-0.2" stroke="#3c3c3c" stroke-width="0.45" fill="none"/><path d="M724.1,407.0 L722.5,408.9 M726.0,407.0 L726.3,408.9M724.1,404.2 L722.4,402.7M726.0,404.4 L727.0,407.7" stroke="#b6b6b6" stroke-width="0.80" fill="none" stroke-linecap="round"/><path d="M727.1,405.2 L725.9,407.2 L723.9,407.7 L723.1,405.6 L724.2,402.9 L725.6,403.2ZM727.2,402.1 L726.4,403.3 L725.1,402.9 L724.8,401.3 L726.4,401.3Z" fill="#b6b6b6"/><path d="M725.0,406.0 L724.4,407.5 L723.7,407.1 L723.5,404.9 L724.4,404.1Z" fill="#6e6e6e"/><path d="M726.1,404.6 L725.7,406.0 L725.2,405.2 L725.1,403.7 L725.6,403.3ZM726.5,401.9 L726.1,402.3 L725.6,402.0 L726.0,401.4Z" fill="#dadada"/><path d="M725.5,403.8 L724.4,407.0M723.2,407.7 l-0.7,-0.5M722.5,405.3 l-0.0,1.1M724.2,405.3 l0.6,-0.1" stroke="#3c3c3c" stroke-width="0.48" fill="none"/><path d="M669.8,433.8 L667.9,436.6 M672.4,433.8 L673.1,436.6M669.8,430.0 L667.8,426.7M672.4,430.3 L673.9,434.9" stroke="#9e9e9e" stroke-width="1.10" fill="none" stroke-linecap="round"/><path d="M673.6,431.4 L672.8,434.1 L669.6,434.9 L668.0,431.2 L669.4,428.6 L672.5,429.4ZM673.5,427.0 L672.2,428.7 L670.4,427.9 L670.2,426.4 L672.1,425.8Z" fill="#9e9e9e"/><path d="M671.3,432.7 L670.5,434.5 L669.3,433.7 L669.0,431.1 L670.4,429.7Z" fill="#6e6e6e"/><path d="M672.5,430.4 L672.0,432.1 L671.3,431.5 L671.2,429.7 L672.0,428.9ZM673.0,426.9 L672.2,427.7 L671.6,427.0 L672.2,426.2Z" fill="#dadada"/><path d="M671.7,429.4 L670.2,433.8M667.4,430.5 l-0.3,1.3M671.3,432.1 l-1.4,-0.7M671.3,431.5 l1.3,-1.5" stroke="#3c3c3c" stroke-width="0.66" fill="none"/><path d="M548.9,443.4 L547.2,446.4 M551.8,443.4 L552.9,446.4M551.8,439.1 L553.8,438.0M548.9,439.5 L547.3,444.6" stroke="#9e9e9e" stroke-width="1.21" fill="none" stroke-linecap="round"/><path d="M553.0,440.4 L552.0,444.7 L549.2,443.9 L547.8,440.4 L549.2,437.7 L552.0,437.6ZM552.3,436.0 L551.5,437.9 L549.0,437.5 L549.1,434.9 L551.0,434.6Z" fill="#9e9e9e"/><path d="M553.0,441.3 L551.9,443.6 L550.5,443.2 L550.7,439.9 L551.8,438.9Z" fill="#6e6e6e"/><path d="M550.6,440.0 L549.8,441.5 L549.0,440.4 L548.9,438.6 L549.8,438.1ZM550.8,435.8 L550.2,436.5 L549.4,435.7 L550.3,435.1Z" fill="#dadada"/><path d="M549.7,438.5 L551.3,443.4M548.2,438.7 l-0.6,-1.5M548.4,439.4 l-1.4,1.2M550.7,443.3 l-1.3,-0.9" stroke="#3c3c3c" stroke-width="0.73" fill="none"/><path d="M826.7,399.6 L825.7,401.4 M828.4,399.6 L829.1,401.4M826.7,397.1 L825.9,400.1M828.4,397.3 L829.3,400.3" stroke="#a9a9a9" stroke-width="0.72" fill="none" stroke-linecap="round"/><path d="M829.0,398.2 L828.4,399.8 L827.0,400.1 L825.6,397.8 L826.2,396.2 L828.5,396.1ZM828.7,395.5 L827.8,396.5 L826.6,395.8 L826.6,394.6 L827.9,394.4Z" fill="#a9a9a9"/><path d="M827.4,398.4 L827.2,400.0 L826.2,399.7 L826.2,397.8 L827.1,397.1Z" fill="#6e6e6e"/><path d="M828.4,397.3 L828.1,398.7 L827.5,398.0 L827.5,396.7 L828.1,396.6ZM828.2,395.1 L827.7,395.6 L827.3,395.2 L827.8,394.6Z" fill="#dadada"/><path d="M827.9,396.8 L827.0,399.6M827.3,396.6 l0.8,-0.7" stroke="#3c3c3c" stroke-width="0.45" fill="none"/><path d="M829.7,400.8 L829.1,404.6 M830.7,400.8 L831.5,404.2 M834.9,400.8 L835.9,404.6 M833.9,400.8 L832.9,404.4M835.9,400.1 Q838.3,397.8 837.8,400.8" stroke="#a9a9a9" stroke-width="0.75" fill="none" stroke-linecap="round"/><path d="M835.7,400.2 L833.9,401.6 L831.4,401.5 L828.9,400.4 L830.8,399.0 L834.7,399.2ZM829.4,399.5 L828.7,400.3 L827.4,399.8 L827.6,398.9 L828.6,398.6Z" fill="#a9a9a9"/><path d="" fill="#6e6e6e"/><path d="M834.6,400.0 L833.3,400.3 L831.3,400.2 L830.9,399.7 L833.5,399.5Z" fill="#dadada"/><path d="M830.0,401.0 L834.9,400.8M834.4,403.1 l-1.0,-0.3M832.9,401.3 l0.7,-0.3M831.0,402.9 l-0.4,-0.7" stroke="#3c3c3c" stroke-width="0.45" fill="none"/><path d="M479.0,405.8 L477.5,407.8 M480.9,405.8 L481.1,407.8M480.9,403.1 L483.4,404.8M479.0,403.3 L478.0,406.6" stroke="#b6b6b6" stroke-width="0.79" fill="none" stroke-linecap="round"/><path d="M482.0,403.8 L481.0,406.3 L479.0,405.9 L478.1,404.2 L479.0,402.0 L480.7,402.4ZM482.0,401.3 L481.0,402.2 L479.8,402.0 L479.9,400.7 L481.0,400.0Z" fill="#b6b6b6"/><path d="M481.6,404.6 L480.9,406.2 L480.0,405.9 L479.9,403.6 L480.9,403.0Z" fill="#6e6e6e"/><path d="M480.1,403.3 L479.7,404.5 L479.0,404.2 L479.1,402.7 L479.6,402.4ZM481.0,401.0 L480.6,401.4 L480.1,400.8 L480.6,400.5Z" fill="#dadada"/><path d="M479.6,402.7 L480.6,405.8M480.5,404.0 l0.8,0.6M478.8,403.7 l0.1,0.3M481.8,402.9 l-0.8,1.1" stroke="#3c3c3c" stroke-width="0.47" fill="none"/><path d="M627.7,425.3 L625.5,427.8 M630.1,425.3 L630.3,427.8M630.1,421.8 L631.0,420.3M627.7,422.1 L626.4,426.3" stroke="#b6b6b6" stroke-width="1.01" fill="none" stroke-linecap="round"/><path d="M631.7,423.1 L630.4,426.1 L627.4,425.6 L626.3,423.0 L627.5,421.4 L630.0,420.0ZM631.5,419.2 L630.8,420.4 L629.0,420.1 L629.0,418.2 L630.5,417.7Z" fill="#b6b6b6"/><path d="M630.8,423.5 L630.1,425.5 L629.0,425.3 L629.0,422.5 L630.0,421.6Z" fill="#6e6e6e"/><path d="M628.9,422.3 L628.5,423.4 L627.7,422.8 L627.7,421.2 L628.5,420.8ZM630.5,419.0 L629.8,419.6 L629.3,418.9 L629.8,418.3Z" fill="#dadada"/><path d="M628.4,421.3 L629.7,425.3M626.4,423.5 l0.2,0.4" stroke="#3c3c3c" stroke-width="0.60" fill="none"/><path d="M1045.9,419.2 L1045.0,421.5 M1048.1,419.2 L1049.4,421.5M1045.9,415.9 L1044.6,417.0M1048.1,416.2 L1049.4,420.1" stroke="#b6b6b6" stroke-width="0.94" fill="none" stroke-linecap="round"/><path d="M1049.1,417.5 L1048.0,419.7 L1045.4,419.7 L1044.3,417.6 L1045.9,414.6 L1048.2,414.6ZM1047.9,413.8 L1046.8,415.1 L1045.5,414.3 L1045.4,412.7 L1047.1,412.2Z" fill="#b6b6b6"/><path d="M1047.0,417.7 L1046.5,419.5 L1045.4,419.3 L1045.3,416.2 L1046.4,416.0Z" fill="#6e6e6e"/><path d="M1048.1,416.5 L1047.7,417.9 L1047.1,417.0 L1047.0,415.7 L1047.7,415.2ZM1047.4,413.2 L1046.8,413.8 L1046.1,413.4 L1046.7,412.8Z" fill="#dadada"/><path d="M1047.5,415.4 L1046.3,419.2M1049.5,419.8 l-1.3,-1.2M1046.1,416.9 l0.7,-0.3M1046.7,417.2 l1.3,-0.4" stroke="#3c3c3c" stroke-width="0.56" fill="none"/><path d="M953.3,411.9 L952.6,416.3 M954.5,411.9 L955.4,415.8 M959.4,411.9 L960.5,416.3 M958.2,411.9 L957.1,416.1M960.5,411.0 Q963.4,408.4 962.8,411.9" stroke="#9e9e9e" stroke-width="0.88" fill="none" stroke-linecap="round"/><path d="M960.5,411.4 L958.1,412.6 L954.8,412.5 L951.7,411.6 L953.7,410.0 L959.7,410.0ZM952.9,410.1 L952.1,411.3 L951.0,410.9 L950.9,409.3 L952.2,409.2Z" fill="#9e9e9e"/><path d="" fill="#6e6e6e"/><path d="M958.5,410.7 L957.0,411.3 L954.4,411.2 L954.5,410.6 L957.5,410.3Z" fill="#dadada"/><path d="M953.7,412.0 L959.4,411.9M954.6,414.3 l1.2,-1.1M955.8,414.2 l-0.2,0.2" stroke="#3c3c3c" stroke-width="0.53" fill="none"/><path d="M1017.2,430.0 L1016.5,432.6 M1019.8,430.0 L1021.5,432.6M1019.8,426.3 L1021.4,429.9M1017.2,426.6 L1015.8,431.0" stroke="#b6b6b6" stroke-width="1.06" fill="none" stroke-linecap="round"/><path d="M1020.9,427.6 L1019.7,430.8 L1016.8,430.8 L1015.7,428.4 L1016.7,424.9 L1019.5,425.6ZM1018.9,423.5 L1017.9,425.1 L1016.3,424.5 L1016.5,422.7 L1018.0,422.2Z" fill="#b6b6b6"/><path d="M1020.6,428.3 L1019.7,430.3 L1018.8,429.8 L1018.6,426.8 L1019.7,426.3Z" fill="#6e6e6e"/><path d="M1018.5,426.7 L1018.0,428.6 L1017.2,427.9 L1017.3,426.1 L1018.2,425.3ZM1017.7,423.4 L1017.1,423.8 L1016.5,423.3 L1017.1,422.7Z" fill="#dadada"/><path d="M1018.0,425.7 L1019.3,430.0M1017.9,428.6 l-1.1,-0.7M1020.0,430.8 l-0.6,-0.7" stroke="#3c3c3c" stroke-width="0.64" fill="none"/><path d="M617.4,432.3 L615.0,435.0 M620.0,432.3 L620.1,435.0M617.4,428.5 L615.2,429.5M620.0,428.8 L621.4,433.3" stroke="#b6b6b6" stroke-width="1.08" fill="none" stroke-linecap="round"/><path d="M621.4,430.0 L619.7,433.1 L616.9,433.0 L616.1,430.5 L617.2,427.0 L620.3,427.4ZM621.9,425.8 L620.8,427.1 L619.0,427.0 L619.0,424.9 L620.6,424.1Z" fill="#b6b6b6"/><path d="M618.7,430.7 L618.0,432.8 L616.9,432.3 L616.8,429.0 L618.0,428.5Z" fill="#6e6e6e"/><path d="M620.0,428.8 L619.5,430.5 L618.7,429.8 L618.6,428.2 L619.6,427.2ZM621.2,425.5 L620.5,426.2 L619.8,425.5 L620.6,424.7Z" fill="#dadada"/><path d="M619.2,427.9 L617.8,432.3M616.7,430.5 l0.4,1.1M620.1,431.4 l1.5,0.2M617.4,431.0 l-1.0,-0.9" stroke="#3c3c3c" stroke-width="0.65" fill="none"/><path d="M852.0,403.0 L851.1,404.9 M853.8,403.0 L854.6,404.9M852.0,400.3 L851.4,399.9M853.8,400.6 L854.8,403.7" stroke="#a9a9a9" stroke-width="0.75" fill="none" stroke-linecap="round"/><path d="M854.8,401.6 L853.6,403.8 L852.3,403.7 L851.4,401.3 L851.6,399.4 L853.7,399.8ZM854.2,398.3 L853.0,399.4 L852.0,399.0 L851.9,397.8 L853.1,397.2Z" fill="#a9a9a9"/><path d="M852.8,401.8 L852.3,403.2 L851.5,402.9 L851.6,400.5 L852.4,400.5Z" fill="#6e6e6e"/><path d="M854.0,400.5 L853.6,401.9 L852.9,401.4 L853.0,399.9 L853.5,399.8ZM853.7,398.3 L853.1,398.7 L852.6,398.2 L853.0,397.7Z" fill="#dadada"/><path d="M853.3,400.0 L852.3,403.0M850.9,400.7 l-0.1,0.6" stroke="#3c3c3c" stroke-width="0.45" fill="none"/><path d="M972.2,406.8 L970.6,408.8 M974.1,406.8 L974.4,408.8M974.1,404.0 L975.7,404.5M972.2,404.3 L971.2,407.6" stroke="#b6b6b6" stroke-width="0.80" fill="none" stroke-linecap="round"/><path d="M975.3,405.7 L974.0,407.2 L972.5,407.1 L971.2,405.5 L972.4,403.2 L974.3,403.2ZM975.0,401.8 L974.2,403.1 L972.9,402.8 L973.0,401.1 L974.1,400.9Z" fill="#b6b6b6"/><path d="M974.6,405.9 L974.2,407.1 L973.2,406.5 L973.3,404.7 L974.2,404.1Z" fill="#6e6e6e"/><path d="M973.3,404.4 L972.7,405.5 L972.2,405.3 L972.3,403.8 L972.7,403.4ZM974.3,401.9 L973.8,402.3 L973.3,401.9 L973.6,401.3Z" fill="#dadada"/><path d="M972.7,403.6 L973.8,406.8M973.9,406.9 l-0.8,-1.0M971.6,405.1 l-0.2,0.4" stroke="#3c3c3c" stroke-width="0.48" fill="none"/><path d="M766.1,382.8 L765.4,384.1 M767.3,382.8 L767.9,384.1M766.1,380.9 L764.9,380.6M767.3,381.1 L768.0,383.3" stroke="#a9a9a9" stroke-width="0.70" fill="none" stroke-linecap="round"/><path d="M768.1,381.7 L767.1,382.9 L765.8,382.9 L765.1,381.9 L766.0,380.6 L767.5,380.2ZM767.5,379.7 L767.0,380.2 L766.1,380.2 L766.0,379.2 L766.8,378.9Z" fill="#a9a9a9"/><path d="M766.7,382.1 L766.3,382.9 L765.8,382.7 L765.8,381.3 L766.3,380.9Z" fill="#6e6e6e"/><path d="M767.4,381.1 L767.1,381.8 L766.7,381.5 L766.7,380.5 L767.1,380.4ZM767.1,379.4 L766.8,379.8 L766.5,379.5 L766.8,379.1Z" fill="#dadada"/><path d="M766.9,380.7 L766.3,382.8M765.3,382.4 l-0.0,-0.4M766.9,382.3 l0.4,0.2" stroke="#3c3c3c" stroke-width="0.45" fill="none"/><path d="M701.2,393.0 L700.0,394.6 M702.7,393.0 L703.0,394.6M702.7,390.7 L703.7,388.8M701.2,390.9 L700.4,393.6" stroke="#a9a9a9" stroke-width="0.70" fill="none" stroke-linecap="round"/><path d="M703.8,391.8 L703.0,393.2 L701.0,393.3 L700.3,391.3 L701.3,390.1 L703.0,389.8ZM703.3,389.0 L702.6,390.2 L701.7,389.6 L701.8,388.5 L702.8,388.1Z" fill="#a9a9a9"/><path d="M703.3,392.0 L702.8,393.4 L702.1,392.8 L702.1,391.2 L702.8,390.6Z" fill="#6e6e6e"/><path d="M702.0,390.9 L701.7,391.9 L701.1,391.5 L701.2,390.3 L701.7,390.4ZM702.7,389.0 L702.3,389.4 L702.0,389.0 L702.3,388.6Z" fill="#dadada"/><path d="M701.6,390.4 L702.5,393.0M702.6,392.8 l0.6,-0.7" stroke="#3c3c3c" stroke-width="0.45" fill="none"/><path d="M521.1,415.9 L519.1,418.1 M523.2,415.9 L523.4,418.1M523.2,412.7 L526.0,411.2M521.1,413.0 L519.9,416.8" stroke="#9e9e9e" stroke-width="0.90" fill="none" stroke-linecap="round"/><path d="M524.3,414.3 L523.0,416.1 L521.3,417.1 L519.9,414.0 L521.1,411.1 L523.3,412.1ZM524.7,410.6 L523.5,411.6 L522.0,411.2 L522.4,409.7 L524.0,409.2Z" fill="#9e9e9e"/><path d="M524.0,414.5 L523.3,416.3 L522.4,415.7 L522.3,412.8 L523.2,412.4Z" fill="#6e6e6e"/><path d="M522.2,413.4 L521.9,414.5 L521.1,414.2 L521.2,412.3 L521.9,411.8ZM523.5,410.2 L522.9,410.8 L522.6,410.2 L523.1,409.7Z" fill="#dadada"/><path d="M521.7,412.3 L522.9,415.9M522.5,412.3 l0.4,-0.2" stroke="#3c3c3c" stroke-width="0.54" fill="none"/><path d="M1098.8,434.3 L1097.8,437.1 M1101.5,434.3 L1103.0,437.1M1101.5,430.4 L1103.4,430.1M1098.8,430.7 L1097.4,435.4" stroke="#a2a2a2" stroke-width="1.11" fill="none" stroke-linecap="round"/><path d="M1102.4,432.6 L1101.7,434.8 L1098.5,434.6 L1097.1,432.3 L1098.3,429.3 L1102.1,428.9ZM1101.1,427.4 L1100.1,429.1 L1098.2,428.6 L1098.5,426.6 L1100.1,426.1Z" fill="#a2a2a2"/><path d="M1102.3,433.0 L1101.6,434.8 L1100.5,434.1 L1100.5,431.4 L1101.6,429.9Z" fill="#6e6e6e"/><path d="M1100.1,431.1 L1099.7,432.4 L1098.9,431.8 L1098.9,430.3 L1099.6,429.1ZM1099.8,427.2 L1099.2,427.9 L1098.6,427.2 L1099.3,426.6Z" fill="#dadada"/><path d="M1099.6,429.9 L1101.0,434.3M1102.0,434.2 l-1.7,0.7M1097.6,431.6 l0.7,-0.5M1101.2,430.1 l0.9,0.5" stroke="#3c3c3c" stroke-width="0.66" fill="none"/><path d="" stroke="#a2a2a2" stroke-width="1.15" fill="none" stroke-linecap="round"/><path d="M533.0,439.2 L531.6,440.7 L525.6,440.4 L521.8,439.5 L520.0,438.4 L525.2,437.6 L531.8,437.3ZM521.3,438.3 L520.3,439.6 L518.4,438.9 L518.5,437.3 L520.3,436.7Z" fill="#a2a2a2"/><path d="" fill="#6e6e6e"/><path d="M529.7,438.2 L527.6,438.7 L524.1,438.4 L524.1,437.8 L527.6,437.6Z" fill="#dadada"/><path d="M522.1,439.6 L531.0,438.7M525.6,434.2 l0.4,-1.7M528.2,434.9 l-1.6,1.3M524.8,438.1 l0.5,0.4" stroke="#3c3c3c" stroke-width="0.69" fill="none"/><path d="M901.2,404.2 L900.4,406.1 M903.0,404.2 L904.0,406.1M903.0,401.5 L904.3,402.4M901.2,401.7 L900.2,404.9" stroke="#a9a9a9" stroke-width="0.77" fill="none" stroke-linecap="round"/><path d="M904.0,402.4 L903.0,404.1 L901.4,404.5 L900.4,402.2 L900.8,400.7 L903.1,401.2ZM903.0,399.5 L902.1,400.6 L901.1,400.3 L901.1,398.7 L902.4,398.4Z" fill="#a9a9a9"/><path d="M903.7,402.9 L903.2,404.8 L902.3,403.8 L902.2,402.3 L903.0,401.3Z" fill="#6e6e6e"/><path d="M902.1,401.8 L901.9,403.1 L901.2,402.4 L901.3,401.2 L901.8,400.9ZM902.0,399.3 L901.7,399.7 L901.2,399.4 L901.6,398.8Z" fill="#dadada"/><path d="M901.7,401.1 L902.7,404.2M902.8,401.9 l-0.3,1.0M900.2,404.0 l-0.8,0.6M900.2,402.9 l-0.9,0.2" stroke="#3c3c3c" stroke-width="0.46" fill="none"/><path d="" stroke="#a2a2a2" stroke-width="0.75" fill="none" stroke-linecap="round"/><path d="M540.4,403.1 L538.9,403.9 L536.1,404.0 L533.5,403.7 L532.5,402.4 L535.2,401.8 L540.0,401.9ZM533.3,402.4 L532.9,403.4 L531.8,403.1 L531.7,402.0 L532.5,401.8Z" fill="#a2a2a2"/><path d="" fill="#6e6e6e"/><path d="M538.8,402.5 L537.8,402.9 L535.7,402.8 L535.5,402.3 L537.7,402.3Z" fill="#dadada"/><path d="M534.0,403.5 L539.7,402.9M537.7,399.5 l0.7,0.8M535.3,402.2 l-0.1,-0.7" stroke="#3c3c3c" stroke-width="0.45" fill="none"/><path d="M835.7,397.6 L834.6,399.4 M837.3,397.6 L837.9,399.4M837.3,395.2 L839.6,394.4M835.7,395.4 L834.8,398.3" stroke="#a9a9a9" stroke-width="0.70" fill="none" stroke-linecap="round"/><path d="M838.5,396.1 L837.3,397.8 L835.9,398.3 L834.5,396.4 L836.0,394.7 L837.2,394.3ZM837.7,393.5 L837.2,394.5 L835.8,394.2 L835.7,393.0 L837.2,392.5Z" fill="#a9a9a9"/><path d="M837.8,396.8 L837.3,397.8 L836.6,397.3 L836.5,395.8 L837.4,395.3Z" fill="#6e6e6e"/><path d="M836.5,395.6 L836.2,396.4 L835.7,396.3 L835.8,394.9 L836.3,394.6ZM836.9,393.2 L836.6,393.6 L836.1,393.2 L836.6,392.8Z" fill="#dadada"/><path d="M836.2,394.9 L837.1,397.6M837.1,395.5 l0.2,-0.2M836.6,396.4 l-0.3,0.2" stroke="#3c3c3c" stroke-width="0.45" fill="none"/><path d="M918.6,419.7 L917.2,422.0 M920.9,419.7 L921.7,422.0M920.9,416.4 L922.7,417.7M918.6,416.6 L917.4,420.6" stroke="#a9a9a9" stroke-width="0.94" fill="none" stroke-linecap="round"/><path d="M921.8,418.0 L920.9,420.8 L918.7,419.7 L917.2,418.1 L918.0,415.4 L921.0,414.9ZM921.2,414.2 L920.2,415.5 L918.9,414.9 L918.8,413.2 L920.2,412.5Z" fill="#a9a9a9"/><path d="M921.6,418.3 L920.9,420.6 L919.9,420.0 L920.0,416.9 L921.0,416.0Z" fill="#6e6e6e"/><path d="M919.8,417.0 L919.5,418.2 L918.6,417.9 L918.7,415.9 L919.4,415.6ZM920.3,413.6 L919.8,414.2 L919.1,413.6 L919.8,413.1Z" fill="#dadada"/><path d="M919.3,415.9 L920.5,419.7M918.9,416.4 l-0.3,0.7M920.7,418.7 l-0.9,-0.3M920.2,416.8 l0.4,-0.2" stroke="#3c3c3c" stroke-width="0.57" fill="none"/><path d="M1035.4,426.6 L1034.1,429.2 M1037.9,426.6 L1038.9,429.2M1037.9,423.0 L1038.9,421.0M1035.4,423.3 L1034.1,427.6" stroke="#a9a9a9" stroke-width="1.02" fill="none" stroke-linecap="round"/><path d="M1039.1,424.9 L1037.4,426.9 L1035.0,427.0 L1033.9,424.6 L1035.5,421.2 L1038.0,422.4ZM1038.1,420.5 L1037.3,421.8 L1035.4,421.5 L1035.3,419.5 L1037.1,419.0Z" fill="#a9a9a9"/><path d="M1038.6,425.1 L1037.9,427.1 L1036.7,426.6 L1036.8,424.2 L1038.1,423.0Z" fill="#6e6e6e"/><path d="M1036.7,423.4 L1036.1,425.0 L1035.5,424.4 L1035.5,422.6 L1036.2,422.4ZM1037.1,420.2 L1036.4,420.9 L1035.8,420.1 L1036.3,419.4Z" fill="#dadada"/><path d="M1036.1,422.5 L1037.4,426.6M1039.4,424.4 l0.1,-1.3M1039.6,422.1 l-0.0,1.5M1035.8,425.6 l0.8,-0.9" stroke="#3c3c3c" stroke-width="0.61" fill="none"/><path d="M1020.9,423.7 L1018.7,426.2 M1023.2,423.7 L1023.3,426.2M1023.2,420.3 L1026.1,422.8M1020.9,420.6 L1019.6,424.7" stroke="#a2a2a2" stroke-width="0.99" fill="none" stroke-linecap="round"/><path d="M1024.5,422.1 L1023.1,423.8 L1021.2,424.0 L1020.0,422.1 L1020.5,419.2 L1023.8,419.2ZM1024.9,417.8 L1024.0,419.1 L1022.4,418.7 L1022.3,417.0 L1023.8,416.3Z" fill="#a2a2a2"/><path d="M1024.2,422.1 L1023.3,424.1 L1022.0,423.4 L1022.3,421.4 L1023.2,419.9Z" fill="#6e6e6e"/><path d="M1022.2,421.0 L1021.7,422.2 L1021.0,421.6 L1021.0,419.8 L1021.8,419.6ZM1023.6,417.5 L1023.2,418.0 L1022.6,417.6 L1023.1,417.0Z" fill="#dadada"/><path d="M1021.6,419.8 L1022.9,423.7M1021.8,423.2 l1.4,-1.0" stroke="#3c3c3c" stroke-width="0.59" fill="none"/><path d="M833.5,410.1 L831.7,412.2 M835.5,410.1 L835.6,412.2M833.5,407.2 L832.6,409.6M835.5,407.5 L836.6,411.0" stroke="#b6b6b6" stroke-width="0.83" fill="none" stroke-linecap="round"/><path d="M836.7,408.8 L835.5,410.9 L833.1,410.8 L832.3,408.4 L833.5,406.1 L835.7,406.3ZM837.0,405.2 L835.8,406.2 L834.7,405.9 L834.8,404.3 L835.9,403.8Z" fill="#b6b6b6"/><path d="M834.4,408.8 L834.1,410.6 L833.1,410.0 L832.8,407.9 L834.0,407.3Z" fill="#6e6e6e"/><path d="M835.7,407.6 L835.2,408.7 L834.6,408.4 L834.4,406.9 L835.1,406.4ZM836.3,405.0 L835.8,405.5 L835.3,404.9 L835.7,404.4Z" fill="#dadada"/><path d="M834.9,406.8 L833.8,410.1M835.9,408.8 l-0.8,0.5M835.6,409.0 l0.2,0.7" stroke="#3c3c3c" stroke-width="0.50" fill="none"/><path d="M1104.5,439.0 L1102.0,441.9 M1107.3,439.0 L1107.4,441.9M1107.3,434.9 L1110.6,433.3M1104.5,435.3 L1103.0,440.1" stroke="#a9a9a9" stroke-width="1.16" fill="none" stroke-linecap="round"/><path d="M1109.1,436.3 L1107.3,439.4 L1103.8,439.5 L1102.9,436.3 L1104.8,433.3 L1107.6,434.1ZM1108.9,432.2 L1107.9,433.6 L1106.0,433.4 L1105.9,431.0 L1107.6,430.4Z" fill="#a9a9a9"/><path d="M1108.2,437.6 L1107.3,440.2 L1106.1,438.2 L1106.0,435.7 L1107.3,434.4Z" fill="#6e6e6e"/><path d="M1105.8,435.5 L1105.3,437.4 L1104.5,436.6 L1104.5,434.1 L1105.3,434.0ZM1107.8,431.5 L1106.9,432.4 L1106.4,431.6 L1107.1,431.0Z" fill="#dadada"/><path d="M1105.3,434.3 L1106.8,439.0M1101.6,433.9 l-1.0,1.4M1108.2,436.3 l0.6,-0.5" stroke="#3c3c3c" stroke-width="0.70" fill="none"/><path d="M1012.2,424.0 L1011.4,429.1 M1013.6,424.0 L1014.6,428.6 M1019.3,424.0 L1020.6,429.1 M1017.9,424.0 L1016.6,428.9M1020.6,423.0 Q1023.9,419.9 1023.2,424.0" stroke="#a9a9a9" stroke-width="1.02" fill="none" stroke-linecap="round"/><path d="M1021.4,423.2 L1017.8,425.3 L1013.1,425.3 L1011.6,423.6 L1013.8,422.0 L1018.3,421.8ZM1011.7,422.2 L1010.7,423.1 L1009.2,422.9 L1009.1,421.2 L1010.7,420.7Z" fill="#a9a9a9"/><path d="" fill="#6e6e6e"/><path d="M1018.1,422.7 L1016.3,423.3 L1013.9,423.0 L1014.0,422.4 L1016.7,422.1Z" fill="#dadada"/><path d="M1012.6,424.2 L1019.3,424.0M1013.7,426.9 l0.8,0.7M1018.3,427.4 l0.1,-0.4M1016.3,423.6 l-0.4,-0.5" stroke="#3c3c3c" stroke-width="0.61" fill="none"/><path d="M527.4,411.9 L525.6,414.0 M529.5,411.9 L529.7,414.0M529.5,408.9 L530.5,408.3M527.4,409.1 L526.3,412.7" stroke="#9e9e9e" stroke-width="0.85" fill="none" stroke-linecap="round"/><path d="M530.4,410.1 L529.9,412.5 L527.3,412.1 L526.2,410.1 L527.1,408.1 L529.3,408.0ZM530.8,406.9 L529.7,407.9 L528.6,407.4 L528.4,405.9 L530.0,405.7Z" fill="#9e9e9e"/><path d="M530.2,410.6 L529.5,412.5 L528.5,411.5 L528.5,409.3 L529.6,408.7Z" fill="#6e6e6e"/><path d="M528.5,409.3 L528.2,410.7 L527.5,410.1 L527.5,408.8 L528.2,408.2ZM529.8,406.6 L529.2,406.9 L528.7,406.4 L529.3,405.9Z" fill="#dadada"/><path d="M528.0,408.5 L529.2,411.9M528.2,412.0 l0.6,-1.1M529.8,412.5 l1.1,-0.8M525.4,409.4 l0.7,-0.8" stroke="#3c3c3c" stroke-width="0.51" fill="none"/><path d="M622.2,420.2 L620.3,422.6 M624.4,420.2 L624.7,422.6M624.4,416.9 L626.1,414.7M622.2,417.1 L620.9,421.1" stroke="#b6b6b6" stroke-width="0.95" fill="none" stroke-linecap="round"/><path d="M625.4,418.3 L624.7,421.1 L621.9,421.1 L620.8,418.2 L622.4,416.1 L625.0,415.7ZM625.8,414.3 L625.0,415.7 L623.1,415.4 L623.2,413.5 L624.5,413.2Z" fill="#b6b6b6"/><path d="M625.1,418.5 L624.6,420.8 L623.6,419.8 L623.4,417.9 L624.7,416.9Z" fill="#6e6e6e"/><path d="M623.4,417.4 L623.0,418.8 L622.3,418.2 L622.1,416.5 L623.0,416.2ZM624.5,414.1 L624.0,414.7 L623.4,414.3 L623.9,413.5Z" fill="#dadada"/><path d="M622.8,416.4 L624.1,420.2M622.4,419.6 l0.9,-0.4M622.3,419.9 l-1.0,-1.4" stroke="#3c3c3c" stroke-width="0.57" fill="none"/><path d="M648.1,430.7 L647.5,433.4 M650.7,430.7 L652.5,433.4M650.7,427.0 L652.6,429.1M648.1,427.3 L646.7,431.8" stroke="#a9a9a9" stroke-width="1.07" fill="none" stroke-linecap="round"/><path d="M651.7,428.2 L650.6,431.5 L647.8,431.7 L646.6,429.0 L648.4,425.8 L650.2,425.8ZM649.7,424.2 L648.6,425.9 L647.1,425.2 L646.7,423.4 L649.1,422.8Z" fill="#a9a9a9"/><path d="M651.7,429.0 L650.9,431.3 L649.8,430.5 L649.6,427.5 L650.7,426.6Z" fill="#6e6e6e"/><path d="M649.5,427.6 L648.9,429.0 L648.3,428.4 L648.0,426.6 L649.0,426.0ZM648.5,424.1 L648.0,424.6 L647.3,424.0 L648.0,423.3Z" fill="#dadada"/><path d="M648.9,426.5 L650.3,430.7M650.8,426.3 l1.1,-0.1" stroke="#3c3c3c" stroke-width="0.64" fill="none"/><path d="M759.1,422.3 L757.8,424.7 M761.4,422.3 L762.4,424.7M759.1,418.9 L757.7,416.0M761.4,419.2 L762.7,423.3" stroke="#b6b6b6" stroke-width="0.97" fill="none" stroke-linecap="round"/><path d="M762.6,419.8 L761.4,423.1 L758.9,422.9 L757.6,420.4 L758.6,418.1 L761.4,417.9ZM761.8,416.7 L760.8,417.7 L759.0,417.5 L758.8,415.7 L760.9,415.1Z" fill="#b6b6b6"/><path d="M760.3,421.0 L759.4,423.1 L758.5,422.3 L758.4,419.6 L759.7,419.1Z" fill="#6e6e6e"/><path d="M761.6,419.1 L761.0,420.9 L760.2,420.1 L760.2,418.3 L761.1,418.2ZM761.0,416.3 L760.5,416.7 L760.0,416.1 L760.5,415.6Z" fill="#dadada"/><path d="M760.7,418.4 L759.5,422.3M759.6,422.5 l-0.1,0.9" stroke="#3c3c3c" stroke-width="0.58" fill="none"/><path d="M1095.7,421.7 L1093.9,424.1 M1098.0,421.7 L1098.4,424.1M1095.7,418.3 L1093.4,422.4M1098.0,418.6 L1099.3,422.7" stroke="#a9a9a9" stroke-width="0.97" fill="none" stroke-linecap="round"/><path d="M1099.4,419.4 L1098.2,422.0 L1096.0,422.7 L1094.9,419.5 L1095.7,417.3 L1097.7,417.6ZM1099.0,416.0 L1098.3,417.1 L1096.4,416.8 L1096.5,414.8 L1098.3,414.5Z" fill="#a9a9a9"/><path d="M1096.7,420.4 L1096.1,422.6 L1095.3,421.4 L1095.4,419.0 L1096.3,418.0Z" fill="#6e6e6e"/><path d="M1098.1,418.9 L1097.7,420.2 L1096.9,419.6 L1096.9,417.8 L1097.6,417.6ZM1098.5,415.7 L1098.1,416.3 L1097.5,415.7 L1097.9,415.0Z" fill="#dadada"/><path d="M1097.4,417.9 L1096.1,421.7M1097.9,421.7 l0.5,-0.9M1094.3,421.3 l0.6,0.5M1094.4,417.7 l1.2,-1.4" stroke="#3c3c3c" stroke-width="0.58" fill="none"/><path d="M668.0,401.6 L667.4,405.4 M669.0,401.6 L669.7,405.1 M673.2,401.6 L674.2,405.4 M672.2,401.6 L671.2,405.3M674.2,400.9 Q676.7,398.6 676.2,401.6" stroke="#a2a2a2" stroke-width="0.76" fill="none" stroke-linecap="round"/><path d="M673.7,401.3 L671.9,402.3 L669.1,402.6 L667.1,401.1 L668.1,400.0 L672.2,400.1ZM667.6,400.0 L666.8,401.1 L665.8,400.5 L665.8,399.7 L666.7,399.1Z" fill="#a2a2a2"/><path d="" fill="#6e6e6e"/><path d="M672.8,400.7 L671.3,401.2 L669.3,401.1 L669.0,400.4 L671.3,400.2Z" fill="#dadada"/><path d="M668.3,401.8 L673.2,401.6M671.3,400.2 l-0.0,-0.0M671.9,402.6 l0.7,0.2" stroke="#3c3c3c" stroke-width="0.46" fill="none"/><path d="M1082.9,434.3 L1081.5,437.1 M1085.5,434.3 L1086.7,437.1M1082.9,430.5 L1081.9,430.4M1085.5,430.8 L1087.0,435.4" stroke="#a2a2a2" stroke-width="1.11" fill="none" stroke-linecap="round"/><path d="M1087.4,432.8 L1085.2,434.9 L1083.2,434.8 L1081.3,432.5 L1082.9,429.5 L1085.2,429.3ZM1086.0,428.0 L1085.0,429.3 L1082.8,428.5 L1082.9,427.0 L1084.5,426.2Z" fill="#a2a2a2"/><path d="M1084.3,432.4 L1083.3,435.3 L1082.3,434.4 L1082.4,431.1 L1083.7,430.4Z" fill="#6e6e6e"/><path d="M1085.7,431.3 L1085.2,432.8 L1084.3,432.0 L1084.2,430.1 L1085.2,429.3ZM1085.3,427.2 L1084.5,428.1 L1083.9,427.3 L1084.5,426.7Z" fill="#dadada"/><path d="M1084.8,429.9 L1083.3,434.3M1087.1,431.1 l-1.3,1.4" stroke="#3c3c3c" stroke-width="0.66" fill="none"/><path d="M1019.8,423.9 L1018.3,426.4 M1022.1,423.9 L1023.0,426.4M1019.8,420.5 L1018.5,424.7M1022.1,420.8 L1023.4,424.9" stroke="#a9a9a9" stroke-width="0.99" fill="none" stroke-linecap="round"/><path d="M1023.2,422.5 L1022.1,424.9 L1019.1,424.7 L1018.0,421.9 L1020.0,419.5 L1022.3,419.1ZM1022.6,418.1 L1021.4,419.4 L1019.9,418.7 L1019.8,417.3 L1021.8,416.7Z" fill="#a9a9a9"/><path d="M1020.8,422.6 L1020.1,424.9 L1019.2,423.2 L1019.3,421.1 L1020.4,420.3Z" fill="#6e6e6e"/><path d="M1022.3,421.0 L1021.7,422.1 L1020.9,421.8 L1021.1,420.1 L1021.8,419.4ZM1021.9,417.6 L1021.5,418.3 L1020.8,417.7 L1021.5,417.2Z" fill="#dadada"/><path d="M1021.4,420.0 L1020.2,423.9M1018.2,424.0 l-1.5,-0.1" stroke="#3c3c3c" stroke-width="0.59" fill="none"/><path d="M493.0,408.0 L491.1,410.1 M494.9,408.0 L495.0,410.1M493.0,405.2 L491.8,406.3M494.9,405.4 L496.0,408.8" stroke="#a2a2a2" stroke-width="0.81" fill="none" stroke-linecap="round"/><path d="M495.9,406.7 L494.8,408.7 L492.8,408.5 L492.0,406.8 L493.0,404.7 L495.1,403.9ZM496.5,403.0 L495.5,404.5 L494.1,404.0 L494.3,402.4 L495.8,401.9Z" fill="#a2a2a2"/><path d="M494.0,407.1 L493.5,408.8 L492.6,407.6 L492.4,405.6 L493.6,404.9Z" fill="#6e6e6e"/><path d="M494.9,405.5 L494.6,406.6 L494.1,406.4 L494.0,404.7 L494.6,404.5ZM495.9,402.9 L495.4,403.4 L494.9,402.9 L495.4,402.5Z" fill="#dadada"/><path d="M494.4,404.8 L493.3,408.0M491.8,404.7 l-0.9,1.2" stroke="#3c3c3c" stroke-width="0.49" fill="none"/><path d="M935.6,419.5 L934.6,421.8 M937.9,419.5 L939.0,421.8M935.6,416.2 L933.1,418.7M937.9,416.5 L939.1,420.4" stroke="#9e9e9e" stroke-width="0.94" fill="none" stroke-linecap="round"/><path d="M939.0,418.1 L938.1,419.6 L936.1,419.8 L934.8,417.5 L936.1,415.5 L938.4,414.9ZM937.8,414.1 L936.7,415.4 L935.2,414.7 L935.2,413.1 L936.7,412.3Z" fill="#9e9e9e"/><path d="M936.6,418.1 L936.0,420.1 L934.9,419.4 L935.0,417.1 L935.9,416.3Z" fill="#6e6e6e"/><path d="M937.9,416.9 L937.4,418.2 L936.7,417.5 L936.7,416.0 L937.4,415.3ZM937.3,413.6 L936.7,414.2 L936.3,413.5 L936.8,413.0Z" fill="#dadada"/><path d="M937.2,415.7 L936.0,419.5M938.7,419.8 l-0.6,-0.6M938.7,419.1 l-0.4,0.0" stroke="#3c3c3c" stroke-width="0.56" fill="none"/><path d="M594.2,437.4 L593.2,440.3 M596.9,437.4 L598.6,440.3M594.2,433.4 L591.8,432.4M596.9,433.8 L598.4,438.6" stroke="#a2a2a2" stroke-width="1.14" fill="none" stroke-linecap="round"/><path d="M598.3,435.8 L596.3,437.9 L594.8,437.8 L592.2,434.4 L593.8,431.9 L597.2,431.9ZM596.6,430.8 L595.1,432.1 L593.5,431.5 L593.4,429.4 L595.7,428.9Z" fill="#a2a2a2"/><path d="M595.4,435.3 L594.5,438.0 L593.6,437.3 L593.6,434.2 L594.8,433.4Z" fill="#6e6e6e"/><path d="M597.2,434.1 L596.7,435.8 L595.5,434.9 L595.7,433.0 L596.3,432.5ZM595.8,430.4 L595.2,431.0 L594.5,430.3 L595.0,429.4Z" fill="#dadada"/><path d="M596.1,432.9 L594.6,437.4M594.8,434.1 l1.5,-1.7M593.1,434.0 l-0.7,0.3M593.8,438.4 l-0.3,0.6" stroke="#3c3c3c" stroke-width="0.69" fill="none"/><path d="M1077.1,429.2 L1077.9,434.7 M1075.7,429.2 L1074.6,434.1 M1069.6,429.2 L1068.2,434.7 M1071.0,429.2 L1072.4,434.4M1068.2,428.2 Q1064.7,424.9 1065.4,429.2" stroke="#a9a9a9" stroke-width="1.08" fill="none" stroke-linecap="round"/><path d="M1079.4,428.7 L1075.4,430.4 L1070.3,430.1 L1066.8,428.9 L1070.1,427.4 L1075.5,426.6ZM1080.4,427.0 L1079.4,428.3 L1077.9,428.1 L1077.9,426.0 L1079.3,425.6Z" fill="#a9a9a9"/><path d="" fill="#6e6e6e"/><path d="M1075.7,427.9 L1074.3,428.4 L1071.4,428.4 L1070.9,427.7 L1073.9,427.3Z" fill="#dadada"/><path d="M1069.6,429.5 L1076.7,429.2M1070.2,427.5 l-0.6,1.0M1070.9,432.4 l0.7,0.8M1074.3,427.4 l0.1,-0.3" stroke="#3c3c3c" stroke-width="0.65" fill="none"/><path d="M1071.3,436.5 L1070.9,439.3 M1074.1,436.5 L1076.2,439.3M1074.1,432.5 L1076.2,432.9M1071.3,432.9 L1069.9,437.6" stroke="#b6b6b6" stroke-width="1.13" fill="none" stroke-linecap="round"/><path d="M1075.8,434.8 L1074.0,437.5 L1071.1,436.9 L1069.5,434.3 L1071.5,431.8 L1074.3,431.0ZM1072.6,429.7 L1071.6,431.4 L1069.9,430.6 L1069.7,428.5 L1071.9,428.0Z" fill="#b6b6b6"/><path d="M1074.8,434.7 L1074.1,436.8 L1072.8,436.0 L1073.0,433.3 L1074.3,432.1Z" fill="#6e6e6e"/><path d="M1072.8,433.4 L1072.2,434.6 L1071.5,434.0 L1071.5,432.0 L1072.4,431.6ZM1071.4,429.3 L1070.8,429.9 L1070.2,429.3 L1070.7,428.7Z" fill="#dadada"/><path d="M1072.1,431.9 L1073.6,436.5M1074.3,435.8 l0.3,-0.5" stroke="#3c3c3c" stroke-width="0.68" fill="none"/><path d="" stroke="#a2a2a2" stroke-width="0.71" fill="none" stroke-linecap="round"/><path d="M818.0,399.6 L817.3,400.2 L813.3,400.5 L809.3,400.0 L809.7,398.7 L812.8,398.7 L816.8,398.7ZM810.4,398.8 L809.8,399.8 L809.0,399.5 L808.9,398.4 L809.9,398.3Z" fill="#a2a2a2"/><path d="" fill="#6e6e6e"/><path d="M815.9,398.9 L814.9,399.3 L812.8,399.2 L812.5,398.7 L814.5,398.6Z" fill="#dadada"/><path d="M811.1,399.9 L816.6,399.3M813.5,396.3 l0.6,0.3M813.1,399.6 l-0.1,1.0" stroke="#3c3c3c" stroke-width="0.45" fill="none"/><path d="M699.1,417.9 L698.0,420.2 M701.3,417.9 L702.3,420.2M699.1,414.7 L697.8,413.6M701.3,415.0 L702.5,418.8" stroke="#b6b6b6" stroke-width="0.92" fill="none" stroke-linecap="round"/><path d="M702.5,416.5 L701.8,418.7 L698.7,418.3 L698.3,415.7 L699.0,413.8 L701.2,414.1ZM701.5,412.5 L700.5,413.6 L698.8,413.1 L698.9,411.6 L700.4,411.0Z" fill="#b6b6b6"/><path d="M700.2,416.7 L699.8,418.5 L698.5,417.5 L698.5,415.8 L699.6,414.8Z" fill="#6e6e6e"/><path d="M701.5,415.3 L701.1,416.6 L700.3,415.9 L700.2,414.3 L700.9,413.8ZM700.7,412.2 L700.2,412.6 L699.8,412.2 L700.3,411.6Z" fill="#dadada"/><path d="M700.6,414.2 L699.4,417.9M698.7,418.5 l0.8,-0.6M702.8,416.8 l1.2,-1.0M702.2,418.7 l0.1,0.5" stroke="#3c3c3c" stroke-width="0.55" fill="none"/><path d="M1092.2,429.9 L1090.5,432.5 M1094.8,429.9 L1095.5,432.5M1092.2,426.2 L1090.1,424.7M1094.8,426.5 L1096.1,430.9" stroke="#a9a9a9" stroke-width="1.06" fill="none" stroke-linecap="round"/><path d="M1096.4,428.0 L1094.9,429.8 L1092.3,431.0 L1091.3,427.3 L1091.8,425.0 L1094.7,424.5ZM1095.4,423.4 L1094.2,425.0 L1092.7,424.6 L1092.8,422.4 L1094.7,422.0Z" fill="#a9a9a9"/><path d="M1093.5,428.4 L1093.0,430.6 L1091.5,429.7 L1091.6,426.7 L1092.8,426.4Z" fill="#6e6e6e"/><path d="M1095.0,426.5 L1094.4,427.9 L1093.7,427.6 L1093.6,425.7 L1094.2,425.4ZM1094.9,423.2 L1094.4,423.8 L1093.6,423.2 L1094.2,422.5Z" fill="#dadada"/><path d="M1094.0,425.6 L1092.7,429.9M1095.5,428.5 l1.6,-0.1M1094.2,430.4 l0.8,-0.1M1095.8,427.6 l-0.5,-0.1" stroke="#3c3c3c" stroke-width="0.63" fill="none"/><path d="M1044.9,419.2 L1043.7,421.5 M1047.1,419.2 L1048.1,421.5M1047.1,415.9 L1049.1,415.0M1044.9,416.2 L1043.6,420.1" stroke="#a2a2a2" stroke-width="0.94" fill="none" stroke-linecap="round"/><path d="M1048.1,417.3 L1047.0,419.5 L1044.4,419.9 L1043.9,417.3 L1045.0,414.3 L1047.2,414.4ZM1047.2,413.5 L1046.1,414.9 L1044.7,414.4 L1044.8,412.8 L1046.1,412.2Z" fill="#a2a2a2"/><path d="M1047.7,417.6 L1047.2,420.0 L1046.0,418.7 L1046.1,416.1 L1047.2,415.4Z" fill="#6e6e6e"/><path d="M1046.0,416.2 L1045.7,417.4 L1045.1,417.2 L1044.8,415.4 L1045.7,415.1ZM1046.2,413.4 L1045.6,413.7 L1045.1,413.2 L1045.6,412.8Z" fill="#dadada"/><path d="M1045.5,415.4 L1046.7,419.2M1048.4,418.2 l1.2,0.3M1048.8,418.5 l1.3,1.1M1044.4,416.7 l0.6,1.3" stroke="#3c3c3c" stroke-width="0.56" fill="none"/><path d="M657.4,415.0 L656.6,417.2 M659.5,415.0 L660.8,417.2M659.5,411.9 L661.0,415.6M657.4,412.2 L656.2,415.9" stroke="#a9a9a9" stroke-width="0.89" fill="none" stroke-linecap="round"/><path d="M660.6,413.6 L659.8,415.1 L657.4,415.7 L655.9,412.7 L657.4,410.6 L659.8,411.4ZM659.2,409.6 L658.3,411.0 L657.0,410.5 L656.8,408.6 L658.1,408.3Z" fill="#a9a9a9"/><path d="M660.4,413.6 L659.8,415.6 L658.6,414.6 L658.8,412.4 L659.7,411.5Z" fill="#6e6e6e"/><path d="M658.6,412.5 L658.1,413.8 L657.5,412.9 L657.4,411.7 L658.0,411.3ZM658.1,409.5 L657.7,410.0 L657.1,409.4 L657.6,409.0Z" fill="#dadada"/><path d="M658.0,411.4 L659.2,415.0M657.3,413.6 l0.0,-0.1M660.4,411.6 l0.8,0.4M656.5,415.5 l-1.0,1.1" stroke="#3c3c3c" stroke-width="0.53" fill="none"/><path d="M708.2,409.1 L707.3,411.1 M710.2,409.1 L711.2,411.1M710.2,406.2 L711.4,405.6M708.2,406.4 L707.2,409.9" stroke="#9e9e9e" stroke-width="0.82" fill="none" stroke-linecap="round"/><path d="M711.3,407.2 L710.2,409.8 L708.5,409.3 L707.1,407.1 L708.2,405.8 L710.2,405.3ZM710.3,404.0 L709.5,405.5 L708.0,404.7 L708.0,403.6 L709.4,403.1Z" fill="#9e9e9e"/><path d="M710.8,407.5 L710.4,409.7 L709.4,409.3 L709.4,406.6 L710.3,406.3Z" fill="#6e6e6e"/><path d="M709.3,406.5 L709.0,407.6 L708.2,407.3 L708.3,406.1 L709.0,405.4ZM709.4,403.8 L708.8,404.4 L708.4,403.9 L708.8,403.5Z" fill="#dadada"/><path d="M708.8,405.8 L709.9,409.1M708.5,406.0 l-0.3,0.5M707.0,405.9 l-0.8,1.2" stroke="#3c3c3c" stroke-width="0.49" fill="none"/><path d="M895.4,419.7 L893.5,422.1 M897.6,419.7 L897.9,422.1M895.4,416.4 L894.0,418.3M897.6,416.7 L898.8,420.7" stroke="#9e9e9e" stroke-width="0.94" fill="none" stroke-linecap="round"/><path d="M899.0,417.5 L898.2,420.1 L895.6,420.2 L894.0,417.5 L895.5,415.1 L897.5,415.4ZM898.7,414.1 L897.6,415.3 L896.3,414.7 L896.3,413.4 L897.7,412.8Z" fill="#9e9e9e"/><path d="M896.4,418.6 L895.9,419.9 L894.8,420.0 L894.6,416.9 L895.7,416.5Z" fill="#6e6e6e"/><path d="M897.8,416.7 L897.2,418.2 L896.4,417.6 L896.4,415.9 L897.3,415.9ZM898.3,413.7 L897.6,414.3 L897.1,413.8 L897.6,413.2Z" fill="#dadada"/><path d="M897.0,416.0 L895.7,419.7M896.2,419.8 l-0.8,1.2M894.2,416.8 l1.2,0.9M893.1,417.0 l-1.0,-0.8" stroke="#3c3c3c" stroke-width="0.57" fill="none"/><path d="M1081.5,419.0 L1081.0,421.3 M1083.7,419.0 L1085.4,421.3M1083.7,415.7 L1084.9,413.6M1081.5,416.0 L1080.3,419.9" stroke="#9e9e9e" stroke-width="0.93" fill="none" stroke-linecap="round"/><path d="M1085.3,416.8 L1083.7,419.7 L1081.3,420.1 L1080.3,416.8 L1081.7,414.8 L1083.7,414.5ZM1082.8,413.5 L1081.9,414.7 L1080.6,414.3 L1080.4,412.6 L1081.7,412.0Z" fill="#9e9e9e"/><path d="M1084.4,417.4 L1083.9,419.5 L1082.7,419.1 L1082.8,416.1 L1083.7,415.4Z" fill="#6e6e6e"/><path d="M1082.7,416.4 L1082.3,417.4 L1081.5,417.2 L1081.6,415.5 L1082.2,414.9ZM1081.7,413.0 L1081.3,413.7 L1080.6,413.2 L1081.2,412.5Z" fill="#dadada"/><path d="M1082.1,415.3 L1083.3,419.0M1085.6,415.1 l-0.7,1.0" stroke="#3c3c3c" stroke-width="0.56" fill="none"/><path d="M668.1,408.6 L667.4,412.8 M669.1,408.6 L670.0,412.4 M673.8,408.6 L674.9,412.8 M672.8,408.6 L671.7,412.6M674.9,407.8 Q677.7,405.2 677.1,408.6" stroke="#9e9e9e" stroke-width="0.84" fill="none" stroke-linecap="round"/><path d="M675.5,408.2 L673.3,409.1 L668.8,409.2 L667.8,407.9 L669.7,406.7 L673.4,406.6ZM667.5,407.1 L666.8,408.0 L665.7,407.6 L665.4,406.4 L667.0,405.8Z" fill="#9e9e9e"/><path d="" fill="#6e6e6e"/><path d="M673.6,407.5 L672.3,408.1 L669.6,407.8 L669.4,407.3 L671.8,407.2Z" fill="#dadada"/><path d="M668.4,408.8 L673.8,408.6M669.2,407.1 l0.2,-0.7M669.2,410.1 l-0.5,-0.7M670.0,409.6 l0.5,0.4" stroke="#3c3c3c" stroke-width="0.50" fill="none"/><path d="M1016.7,416.7 L1016.0,419.0 M1018.9,416.7 L1020.3,419.0M1016.7,413.5 L1015.8,415.7M1018.9,413.8 L1020.0,417.6" stroke="#b6b6b6" stroke-width="0.91" fill="none" stroke-linecap="round"/><path d="M1020.1,414.7 L1019.1,417.4 L1016.6,417.3 L1015.6,415.3 L1017.0,412.5 L1019.4,412.4ZM1018.2,411.2 L1017.2,412.7 L1016.1,412.1 L1015.9,410.6 L1017.3,410.1Z" fill="#b6b6b6"/><path d="M1017.9,415.7 L1017.0,417.5 L1016.1,416.3 L1016.2,414.4 L1017.2,413.3Z" fill="#6e6e6e"/><path d="M1018.9,414.1 L1018.5,415.5 L1017.7,414.6 L1017.7,413.2 L1018.6,412.9ZM1017.9,411.0 L1017.3,411.4 L1016.6,410.9 L1017.1,410.5Z" fill="#dadada"/><path d="M1018.2,413.1 L1017.0,416.7M1018.5,413.0 l-0.1,0.3" stroke="#3c3c3c" stroke-width="0.55" fill="none"/><path d="M734.9,418.6 L733.3,421.0 M737.1,418.6 L737.7,421.0M734.9,415.4 L732.8,416.3M737.1,415.7 L738.3,419.6" stroke="#9e9e9e" stroke-width="0.93" fill="none" stroke-linecap="round"/><path d="M738.2,416.8 L737.3,418.7 L735.0,419.9 L733.5,416.9 L734.9,414.2 L736.9,414.6ZM737.8,413.2 L736.7,414.6 L735.5,413.9 L735.5,412.1 L737.0,411.7Z" fill="#9e9e9e"/><path d="M736.2,417.5 L735.3,419.0 L734.1,418.5 L734.3,416.4 L735.3,415.6Z" fill="#6e6e6e"/><path d="M737.3,415.6 L736.6,417.0 L736.0,416.6 L736.0,415.3 L736.7,414.6ZM737.4,412.7 L736.9,413.4 L736.2,412.9 L736.9,412.1Z" fill="#dadada"/><path d="M736.5,414.9 L735.3,418.6M734.2,416.7 l0.2,0.6M733.7,419.6 l0.1,-1.3" stroke="#3c3c3c" stroke-width="0.56" fill="none"/><path d="M959.7,412.4 L958.7,414.5 M961.8,412.4 L962.7,414.5M959.7,409.4 L958.2,413.1M961.8,409.6 L962.9,413.2" stroke="#a2a2a2" stroke-width="0.86" fill="none" stroke-linecap="round"/><path d="M962.7,410.4 L961.6,412.8 L960.0,413.1 L959.0,410.8 L959.4,408.3 L961.9,408.8ZM962.1,407.1 L961.2,408.4 L959.7,408.2 L959.8,406.4 L961.1,405.8Z" fill="#a2a2a2"/><path d="M960.9,411.1 L960.2,413.0 L959.1,412.0 L959.1,409.7 L960.3,409.5Z" fill="#6e6e6e"/><path d="M961.9,409.8 L961.5,410.9 L960.8,410.4 L960.7,409.2 L961.4,408.7ZM961.4,407.0 L961.0,407.4 L960.5,407.0 L961.1,406.4Z" fill="#dadada"/><path d="M961.2,408.9 L960.1,412.4M961.1,411.4 l-1.2,-1.2M960.7,411.2 l0.8,0.4" stroke="#3c3c3c" stroke-width="0.52" fill="none"/><path d="M1021.2,432.3 L1019.7,435.0 M1023.9,432.3 L1024.8,435.0M1021.2,428.5 L1017.8,427.0M1023.9,428.8 L1025.3,433.4" stroke="#9e9e9e" stroke-width="1.09" fill="none" stroke-linecap="round"/><path d="M1025.3,429.7 L1024.2,433.1 L1021.5,433.0 L1020.0,429.7 L1021.4,427.3 L1024.1,427.7ZM1024.2,425.9 L1023.4,427.3 L1021.3,427.1 L1021.5,424.8 L1023.4,424.2Z" fill="#9e9e9e"/><path d="M1022.4,430.3 L1021.7,433.0 L1020.6,431.9 L1020.6,429.7 L1021.7,428.3Z" fill="#6e6e6e"/><path d="M1023.9,428.9 L1023.4,430.6 L1022.6,430.2 L1022.5,428.1 L1023.4,427.2ZM1023.6,425.4 L1023.0,426.1 L1022.4,425.6 L1023.0,424.8Z" fill="#dadada"/><path d="M1023.1,428.0 L1021.7,432.3M1024.8,430.4 l-1.2,-0.1M1022.4,430.9 l-0.1,-0.8M1020.0,430.6 l-1.6,0.5" stroke="#3c3c3c" stroke-width="0.65" fill="none"/><path d="M786.3,392.4 L785.5,394.0 M787.9,392.4 L788.5,394.0M787.9,390.2 L789.1,388.3M786.3,390.4 L785.5,393.0" stroke="#9e9e9e" stroke-width="0.70" fill="none" stroke-linecap="round"/><path d="M788.7,391.3 L787.9,393.0 L786.5,393.1 L785.6,391.0 L786.3,389.7 L787.9,389.7ZM788.1,388.8 L787.4,389.6 L786.2,389.2 L786.4,388.0 L787.5,387.8Z" fill="#9e9e9e"/><path d="M788.4,391.7 L788.0,392.7 L787.2,392.1 L787.3,390.8 L787.9,390.3Z" fill="#6e6e6e"/><path d="M787.2,390.4 L786.9,391.4 L786.4,390.9 L786.4,390.1 L786.8,389.6ZM787.3,388.5 L786.9,388.8 L786.5,388.4 L787.0,388.0Z" fill="#dadada"/><path d="M786.8,389.9 L787.6,392.4M788.2,392.1 l-0.3,-0.2M785.3,391.3 l0.9,-0.5" stroke="#3c3c3c" stroke-width="0.45" fill="none"/><path d="M873.9,397.7 L872.6,399.4 M875.5,397.7 L875.9,399.4M875.5,395.3 L877.7,396.0M873.9,395.5 L873.0,398.4" stroke="#a9a9a9" stroke-width="0.70" fill="none" stroke-linecap="round"/><path d="M876.7,396.0 L875.7,397.7 L873.9,398.1 L873.1,396.0 L873.7,394.4 L875.9,394.4ZM876.4,393.3 L875.4,394.7 L874.4,394.2 L874.5,392.9 L875.4,392.6Z" fill="#a9a9a9"/><path d="M876.0,396.4 L875.5,398.1 L874.7,397.3 L874.9,395.4 L875.7,395.4Z" fill="#6e6e6e"/><path d="M874.7,395.7 L874.4,396.6 L873.8,396.2 L873.9,394.8 L874.5,394.7ZM875.4,393.4 L875.0,393.7 L874.5,393.3 L875.0,393.0Z" fill="#dadada"/><path d="M874.4,394.9 L875.3,397.7M875.7,395.6 l0.6,0.6M872.7,395.2 l-0.7,0.7" stroke="#3c3c3c" stroke-width="0.45" fill="none"/><path d="" stroke="#a9a9a9" stroke-width="0.90" fill="none" stroke-linecap="round"/><path d="M997.0,416.3 L994.6,417.1 L990.6,417.8 L985.8,416.6 L988.2,415.5 L990.7,414.8 L994.2,415.1ZM986.9,415.6 L986.2,416.5 L985.0,416.3 L985.2,414.8 L986.4,414.3Z" fill="#a9a9a9"/><path d="" fill="#6e6e6e"/><path d="M993.9,415.5 L992.5,415.9 L989.5,415.8 L990.2,415.2 L992.6,415.2Z" fill="#dadada"/><path d="M987.8,416.7 L994.7,416.0M992.7,413.1 l0.8,-0.1M989.1,411.8 l-0.7,-0.7M992.4,414.6 l-0.9,0.2" stroke="#3c3c3c" stroke-width="0.54" fill="none"/><path d="M560.9,437.3 L558.7,440.2 M563.7,437.3 L564.1,440.2M560.9,433.3 L558.3,436.9M563.7,433.6 L565.1,438.4" stroke="#9e9e9e" stroke-width="1.14" fill="none" stroke-linecap="round"/><path d="M564.9,435.6 L563.5,438.6 L560.6,437.8 L558.9,435.7 L560.7,432.1 L563.8,432.3ZM565.2,430.5 L563.9,432.1 L561.7,431.5 L562.0,429.6 L563.8,429.0Z" fill="#9e9e9e"/><path d="M562.2,435.4 L561.5,438.4 L560.3,436.7 L560.2,434.1 L561.3,432.9Z" fill="#6e6e6e"/><path d="M563.8,433.6 L563.1,435.8 L562.3,435.1 L562.1,433.0 L563.2,432.2ZM564.3,430.0 L563.7,430.9 L562.9,430.2 L563.8,429.4Z" fill="#dadada"/><path d="M562.9,432.7 L561.4,437.3M561.4,437.4 l1.3,-1.0M564.3,436.3 l0.2,0.4M560.6,436.5 l-0.2,-0.3" stroke="#3c3c3c" stroke-width="0.69" fill="none"/><path d="M842.4,395.1 L841.7,396.8 M844.0,395.1 L844.9,396.8M842.4,392.8 L841.2,395.0M844.0,393.0 L844.9,395.8" stroke="#a2a2a2" stroke-width="0.70" fill="none" stroke-linecap="round"/><path d="M845.0,393.4 L843.8,395.3 L842.4,395.4 L841.4,394.1 L842.4,392.4 L844.1,391.7ZM843.9,391.0 L843.2,392.1 L842.0,391.6 L842.0,390.6 L843.2,390.0Z" fill="#a2a2a2"/><path d="M843.3,393.9 L842.7,395.5 L841.9,395.2 L842.1,393.5 L842.6,392.8Z" fill="#6e6e6e"/><path d="M844.0,393.0 L843.8,394.2 L843.3,393.8 L843.2,392.7 L843.8,392.0ZM843.5,390.9 L843.2,391.3 L842.8,390.9 L843.1,390.5Z" fill="#dadada"/><path d="M843.6,392.4 L842.7,395.1M844.4,393.2 l0.7,1.0M844.9,394.9 l-0.3,-0.6M841.7,392.6 l0.6,-0.4" stroke="#3c3c3c" stroke-width="0.45" fill="none"/><path d="M646.7,412.1 L645.7,414.3 M648.8,412.1 L649.7,414.3M646.7,409.1 L644.9,411.3M648.8,409.4 L649.9,413.0" stroke="#b6b6b6" stroke-width="0.86" fill="none" stroke-linecap="round"/><path d="M649.7,410.1 L649.0,412.7 L646.6,412.1 L645.6,410.6 L646.6,408.1 L649.1,407.8ZM649.0,407.0 L648.2,408.2 L646.3,407.6 L646.6,406.0 L648.0,405.9Z" fill="#b6b6b6"/><path d="M647.6,410.5 L647.3,412.5 L646.1,412.0 L646.4,409.7 L647.0,409.3Z" fill="#6e6e6e"/><path d="M648.9,409.8 L648.5,410.8 L647.7,410.2 L647.8,408.8 L648.4,408.3ZM648.2,406.8 L647.9,407.2 L647.2,406.6 L647.7,406.2Z" fill="#dadada"/><path d="M648.2,408.7 L647.0,412.1M648.1,411.5 l1.1,-1.0M645.3,408.9 l0.3,0.2M650.0,410.5 l-1.2,-0.3" stroke="#3c3c3c" stroke-width="0.51" fill="none"/><path d="M869.6,396.8 L868.5,398.5 M871.2,396.8 L871.7,398.5M871.2,394.4 L872.5,395.6M869.6,394.6 L868.7,397.5" stroke="#9e9e9e" stroke-width="0.70" fill="none" stroke-linecap="round"/><path d="M872.0,395.3 L871.3,397.0 L869.6,397.4 L868.9,395.2 L869.5,393.8 L871.3,393.9ZM871.8,392.8 L871.0,393.7 L870.0,393.3 L869.9,392.3 L871.0,391.7Z" fill="#9e9e9e"/><path d="M871.7,395.6 L871.3,397.0 L870.5,397.0 L870.5,394.8 L871.2,394.1Z" fill="#6e6e6e"/><path d="M870.5,394.8 L870.1,395.6 L869.6,395.5 L869.6,394.3 L870.1,394.0ZM870.9,392.4 L870.4,392.9 L870.1,392.5 L870.5,392.0Z" fill="#dadada"/><path d="M870.1,394.0 L870.9,396.8M871.3,395.9 l-0.1,0.5M870.2,394.6 l0.4,0.9M869.3,394.2 l-0.6,-0.3" stroke="#3c3c3c" stroke-width="0.45" fill="none"/><path d="M907.2,413.9 L905.9,416.1 M909.3,413.9 L910.0,416.1M909.3,410.9 L912.1,414.8M907.2,411.1 L906.0,414.8" stroke="#a9a9a9" stroke-width="0.88" fill="none" stroke-linecap="round"/><path d="M910.6,412.5 L909.1,414.2 L907.0,414.0 L906.2,412.5 L907.4,409.7 L909.5,410.3ZM909.6,408.7 L908.6,409.8 L907.3,409.5 L907.3,408.2 L908.7,407.5Z" fill="#a9a9a9"/><path d="M910.1,412.9 L909.3,414.5 L908.2,413.7 L908.2,411.7 L909.5,410.9Z" fill="#6e6e6e"/><path d="M908.3,411.2 L907.9,412.7 L907.2,412.1 L907.1,410.8 L907.8,410.2ZM908.7,408.4 L908.2,408.9 L907.5,408.3 L908.1,407.9Z" fill="#dadada"/><path d="M907.8,410.4 L908.9,413.9M905.9,410.4 l0.3,0.6M906.4,413.9 l-1.0,0.1" stroke="#3c3c3c" stroke-width="0.53" fill="none"/><path d="M970.2,413.8 L969.6,416.0 M972.3,413.8 L973.7,416.0M970.2,410.7 L968.0,410.0M972.3,411.0 L973.5,414.7" stroke="#b6b6b6" stroke-width="0.88" fill="none" stroke-linecap="round"/><path d="M973.2,412.1 L972.0,414.5 L970.3,414.6 L969.3,412.3 L970.0,409.4 L972.4,410.1ZM971.6,408.4 L971.0,409.9 L969.4,409.1 L969.5,407.8 L970.9,407.5Z" fill="#b6b6b6"/><path d="M971.4,412.5 L970.7,414.0 L969.8,413.4 L969.8,411.3 L970.6,410.3Z" fill="#6e6e6e"/><path d="M972.5,411.0 L972.2,412.5 L971.3,412.0 L971.3,410.4 L971.9,410.1ZM971.2,408.3 L970.8,408.8 L970.2,408.3 L970.7,407.7Z" fill="#dadada"/><path d="M971.7,410.3 L970.6,413.8M969.6,414.2 l0.7,0.8M973.9,413.2 l-0.8,-0.5M971.6,412.0 l0.0,0.5" stroke="#3c3c3c" stroke-width="0.53" fill="none"/><path d="M667.5,408.5 L666.0,410.5 M669.5,408.5 L669.8,410.5M669.5,405.6 L671.5,406.6M667.5,405.9 L666.5,409.3" stroke="#a2a2a2" stroke-width="0.82" fill="none" stroke-linecap="round"/><path d="M670.2,407.2 L669.7,408.9 L667.0,409.2 L666.1,406.7 L667.3,404.7 L669.6,405.3ZM670.6,403.5 L669.5,404.9 L668.2,404.5 L668.0,403.0 L669.4,402.2Z" fill="#a2a2a2"/><path d="M670.0,407.1 L669.7,409.1 L668.8,408.5 L668.7,406.1 L669.5,405.7Z" fill="#6e6e6e"/><path d="M668.5,406.0 L668.1,407.4 L667.6,407.0 L667.6,405.3 L668.1,405.1ZM669.5,403.3 L669.1,403.8 L668.5,403.3 L668.9,402.9Z" fill="#dadada"/><path d="M668.1,405.2 L669.1,408.5M667.4,406.3 l-0.5,1.1M669.2,408.3 l0.2,0.2M667.1,405.0 l-0.1,-0.4" stroke="#3c3c3c" stroke-width="0.49" fill="none"/><path d="M714.0,393.3 L713.6,394.9 M715.6,393.3 L716.6,394.9M715.6,391.1 L717.4,391.8M714.0,391.3 L713.2,394.0" stroke="#b6b6b6" stroke-width="0.70" fill="none" stroke-linecap="round"/><path d="M716.4,392.1 L715.4,393.6 L713.7,393.6 L713.0,392.3 L713.9,390.7 L715.6,390.2ZM715.2,389.5 L714.4,390.4 L713.3,389.9 L713.3,389.0 L714.6,388.4Z" fill="#b6b6b6"/><path d="M716.0,392.4 L715.6,393.8 L714.9,393.4 L714.9,391.2 L715.6,391.2Z" fill="#6e6e6e"/><path d="M714.8,391.4 L714.5,392.2 L713.9,391.9 L714.1,391.0 L714.6,390.6ZM714.3,389.2 L714.0,389.7 L713.6,389.2 L714.0,388.9Z" fill="#dadada"/><path d="M714.5,390.7 L715.3,393.3M715.8,391.2 l0.5,-0.8M713.8,392.2 l0.6,-0.2M713.8,393.1 l-0.4,-0.8" stroke="#3c3c3c" stroke-width="0.45" fill="none"/><path d="" stroke="#a9a9a9" stroke-width="0.92" fill="none" stroke-linecap="round"/><path d="M1009.5,418.6 L1006.9,419.6 L1002.7,419.9 L998.5,419.4 L998.8,418.3 L1002.1,417.5 L1006.7,417.7ZM999.4,418.0 L998.5,419.0 L997.7,418.7 L997.5,417.6 L998.5,416.7Z" fill="#a9a9a9"/><path d="" fill="#6e6e6e"/><path d="M1006.6,417.9 L1005.1,418.4 L1001.9,418.3 L1002.0,417.8 L1005.0,417.6Z" fill="#dadada"/><path d="M1000.2,419.2 L1007.4,418.5M1003.3,418.5 l-0.9,1.4" stroke="#3c3c3c" stroke-width="0.55" fill="none"/><path d="M933.3,401.1 L932.1,402.9 M935.0,401.1 L935.5,402.9M935.0,398.5 L936.3,396.6M933.3,398.7 L932.3,401.8" stroke="#9e9e9e" stroke-width="0.73" fill="none" stroke-linecap="round"/><path d="M936.3,399.8 L935.2,401.5 L933.3,402.0 L932.1,399.9 L933.6,397.9 L935.2,398.1ZM935.7,396.5 L934.8,397.7 L933.6,397.2 L933.6,396.2 L934.9,395.5Z" fill="#9e9e9e"/><path d="M935.5,399.7 L935.3,401.6 L934.2,401.0 L934.3,398.9 L935.1,398.3Z" fill="#6e6e6e"/><path d="M934.3,398.8 L933.8,399.9 L933.3,399.4 L933.3,398.4 L933.9,398.1ZM934.7,396.5 L934.3,396.9 L933.8,396.5 L934.2,396.0Z" fill="#dadada"/><path d="M933.8,398.1 L934.7,401.1M936.0,400.1 l0.6,-0.0M933.6,398.6 l-0.1,0.1M933.3,398.4 l0.2,0.6" stroke="#3c3c3c" stroke-width="0.45" fill="none"/><path d="M999.3,410.2 L999.0,412.3 M1001.3,410.2 L1002.9,412.3M1001.3,407.2 L1002.1,410.3M999.3,407.5 L998.2,411.0" stroke="#a9a9a9" stroke-width="0.83" fill="none" stroke-linecap="round"/><path d="M1002.1,408.2 L1001.4,410.6 L999.2,411.0 L998.3,408.7 L999.5,405.9 L1001.5,406.4ZM1000.4,405.3 L999.6,406.4 L998.0,405.9 L997.9,404.5 L999.6,403.8Z" fill="#a9a9a9"/><path d="M1001.9,409.0 L1001.5,410.6 L1000.4,410.0 L1000.5,408.1 L1001.4,406.9Z" fill="#6e6e6e"/><path d="M1000.4,407.6 L1000.0,408.6 L999.4,408.7 L999.5,406.9 L1000.1,406.4ZM999.3,404.8 L998.9,405.5 L998.4,404.8 L998.8,404.5Z" fill="#dadada"/><path d="M999.9,406.8 L1001.0,410.2M998.7,409.7 l-0.2,0.8M1000.7,409.5 l-0.2,0.5M1001.2,410.0 l-0.3,0.4" stroke="#3c3c3c" stroke-width="0.50" fill="none"/><path d="M1099.1,438.2 L1097.9,441.1 M1101.9,438.2 L1103.3,441.1M1099.1,434.2 L1095.7,430.7M1101.9,434.5 L1103.4,439.4" stroke="#9e9e9e" stroke-width="1.15" fill="none" stroke-linecap="round"/><path d="M1103.0,435.4 L1102.4,439.2 L1099.0,439.0 L1098.0,435.8 L1098.9,432.7 L1102.1,433.5ZM1101.6,431.5 L1100.6,433.0 L1098.8,432.4 L1098.6,430.6 L1100.7,429.5Z" fill="#9e9e9e"/><path d="M1100.6,436.0 L1099.6,438.7 L1098.3,438.2 L1098.3,434.5 L1099.5,433.9Z" fill="#6e6e6e"/><path d="M1101.9,435.0 L1101.4,436.6 L1100.6,436.0 L1100.6,434.2 L1101.4,433.2ZM1101.2,430.9 L1100.6,431.8 L1099.7,431.0 L1100.3,430.2Z" fill="#dadada"/><path d="M1101.1,433.6 L1099.6,438.2M1101.7,433.8 l1.6,-0.5M1104.0,435.6 l1.3,0.6M1098.9,439.2 l0.2,0.5" stroke="#3c3c3c" stroke-width="0.69" fill="none"/><path d="M671.9,415.0 L672.6,419.6 M670.7,415.0 L669.7,419.1 M665.6,415.0 L664.4,419.6 M666.8,415.0 L667.9,419.4M664.4,414.1 Q661.4,411.4 662.0,415.0" stroke="#a9a9a9" stroke-width="0.92" fill="none" stroke-linecap="round"/><path d="M673.1,414.5 L670.3,416.0 L666.5,415.8 L663.5,414.4 L665.9,413.3 L670.8,413.5ZM674.7,413.3 L674.2,414.4 L672.6,413.8 L672.7,412.6 L674.0,412.3Z" fill="#a9a9a9"/><path d="" fill="#6e6e6e"/><path d="M671.2,413.9 L669.4,414.5 L666.4,414.2 L666.6,413.7 L669.6,413.5Z" fill="#dadada"/><path d="M665.6,415.2 L671.5,415.0M668.5,414.1 l1.0,-0.2M667.9,416.1 l-0.8,-0.5" stroke="#3c3c3c" stroke-width="0.55" fill="none"/><path d="M778.9,414.5 L777.1,416.7 M781.0,414.5 L781.3,416.7M781.0,411.4 L783.5,415.0M778.9,411.6 L777.7,415.3" stroke="#b6b6b6" stroke-width="0.88" fill="none" stroke-linecap="round"/><path d="M781.7,412.4 L781.3,415.0 L778.9,414.9 L777.7,412.3 L779.0,409.9 L781.0,410.9ZM782.0,409.4 L781.4,410.2 L779.9,410.0 L779.9,408.3 L781.3,407.9Z" fill="#b6b6b6"/><path d="M781.7,413.2 L780.9,415.2 L780.0,414.3 L780.2,412.0 L781.1,411.5Z" fill="#6e6e6e"/><path d="M780.1,411.7 L779.5,413.1 L779.0,412.5 L778.9,411.3 L779.6,410.8ZM781.1,409.0 L780.5,409.5 L780.0,409.0 L780.6,408.4Z" fill="#dadada"/><path d="M779.5,410.9 L780.6,414.5M779.5,414.5 l0.5,-0.4" stroke="#3c3c3c" stroke-width="0.53" fill="none"/><path d="M887.7,409.4 L887.0,411.5 M889.7,409.4 L890.9,411.5M887.7,406.5 L886.9,409.1M889.7,406.8 L890.8,410.3" stroke="#a9a9a9" stroke-width="0.83" fill="none" stroke-linecap="round"/><path d="M890.9,407.7 L889.7,410.4 L887.2,410.0 L886.9,408.1 L887.3,405.8 L889.5,405.3ZM889.3,404.4 L888.4,405.6 L887.2,405.4 L887.1,403.8 L888.4,403.1Z" fill="#a9a9a9"/><path d="M888.8,408.3 L888.1,409.9 L887.1,409.1 L887.2,406.8 L888.1,406.3Z" fill="#6e6e6e"/><path d="M889.9,407.1 L889.4,407.9 L888.8,407.8 L888.7,406.4 L889.4,405.9ZM888.9,404.2 L888.4,404.7 L887.9,404.3 L888.4,403.8Z" fill="#dadada"/><path d="M889.1,406.1 L888.1,409.4M888.4,405.9 l0.2,0.5" stroke="#3c3c3c" stroke-width="0.50" fill="none"/><path d="M930.0,418.4 L928.4,420.8 M932.2,418.4 L932.8,420.8M930.0,415.2 L928.5,413.8M932.2,415.5 L933.4,419.4" stroke="#a9a9a9" stroke-width="0.93" fill="none" stroke-linecap="round"/><path d="M933.8,416.3 L932.1,418.7 L929.8,418.6 L928.8,416.2 L929.7,413.7 L932.9,414.1ZM933.1,412.9 L931.9,414.2 L930.8,413.8 L930.4,412.1 L931.9,411.3Z" fill="#a9a9a9"/><path d="M931.2,417.2 L930.5,418.5 L929.6,418.2 L929.5,416.1 L930.5,415.1Z" fill="#6e6e6e"/><path d="M932.4,415.5 L931.9,416.7 L931.0,416.3 L931.1,414.8 L932.0,414.2ZM932.5,412.7 L931.9,413.2 L931.4,412.7 L932.0,412.1Z" fill="#dadada"/><path d="M931.6,414.7 L930.4,418.4M932.4,414.9 l1.1,1.0" stroke="#3c3c3c" stroke-width="0.56" fill="none"/><path d="M519.1,407.1 L517.3,409.1 M521.0,407.1 L521.0,409.1M519.1,404.3 L516.5,401.7M521.0,404.6 L522.0,407.9" stroke="#a2a2a2" stroke-width="0.80" fill="none" stroke-linecap="round"/><path d="M522.3,405.8 L521.0,407.2 L519.3,407.6 L518.5,405.8 L519.5,403.6 L521.3,403.1ZM522.3,402.5 L521.6,403.5 L520.1,403.0 L520.4,401.5 L521.6,401.2Z" fill="#a2a2a2"/><path d="M520.1,405.9 L519.5,407.6 L518.7,406.9 L518.6,405.2 L519.4,404.3Z" fill="#6e6e6e"/><path d="M521.0,404.9 L520.7,405.8 L520.1,405.4 L520.1,403.9 L520.8,403.4ZM521.9,402.1 L521.4,402.5 L521.0,402.0 L521.5,401.5Z" fill="#dadada"/><path d="M520.4,403.9 L519.4,407.1M521.6,405.5 l0.4,-0.4M517.3,406.0 l0.2,-0.8M516.9,404.6 l0.2,-0.2" stroke="#3c3c3c" stroke-width="0.48" fill="none"/><path d="M1024.3,429.3 L1023.3,431.9 M1026.9,429.3 L1028.3,431.9M1024.3,425.6 L1021.6,430.2M1026.9,425.9 L1028.2,430.3" stroke="#b6b6b6" stroke-width="1.05" fill="none" stroke-linecap="round"/><path d="M1028.0,427.7 L1026.4,430.0 L1024.6,429.4 L1022.9,426.5 L1024.2,424.3 L1027.0,425.2ZM1026.7,422.7 L1025.4,424.8 L1023.9,424.0 L1023.8,421.9 L1025.7,421.5Z" fill="#b6b6b6"/><path d="M1025.5,428.0 L1024.9,430.1 L1023.5,429.0 L1023.7,426.0 L1024.7,425.0Z" fill="#6e6e6e"/><path d="M1026.9,426.3 L1026.5,427.7 L1025.7,427.1 L1025.7,425.2 L1026.5,424.8ZM1026.1,422.8 L1025.5,423.3 L1024.9,422.6 L1025.4,421.9Z" fill="#dadada"/><path d="M1026.1,425.1 L1024.8,429.3M1023.8,429.7 l-0.7,-0.4M1026.6,425.8 l0.6,-1.3" stroke="#3c3c3c" stroke-width="0.63" fill="none"/><path d="M775.4,384.2 L775.9,387.0 M774.7,384.2 L774.1,386.7 M771.6,384.2 L770.9,387.0 M772.3,384.2 L773.0,386.9M770.9,383.7 Q769.1,382.0 769.4,384.2" stroke="#a9a9a9" stroke-width="0.70" fill="none" stroke-linecap="round"/><path d="M776.6,383.7 L774.2,384.7 L771.9,384.6 L770.5,383.7 L771.7,383.1 L774.3,383.0ZM777.3,383.0 L776.6,383.9 L775.8,383.5 L775.9,382.6 L776.8,382.4Z" fill="#a9a9a9"/><path d="" fill="#6e6e6e"/><path d="M774.9,383.6 L773.9,383.8 L772.4,383.7 L772.4,383.4 L773.8,383.2Z" fill="#dadada"/><path d="M771.6,384.3 L775.2,384.2M773.7,385.2 l-0.6,0.1M773.7,384.2 l0.7,0.4M775.0,385.1 l0.6,0.4" stroke="#3c3c3c" stroke-width="0.45" fill="none"/><path d="M717.3,412.5 L716.6,417.0 M718.4,412.5 L719.4,416.5 M723.4,412.5 L724.6,417.0 M722.2,412.5 L721.1,416.8M724.6,411.6 Q727.4,409.0 726.9,412.5" stroke="#a2a2a2" stroke-width="0.89" fill="none" stroke-linecap="round"/><path d="M724.5,412.2 L722.7,413.2 L719.0,413.8 L715.8,412.0 L718.8,410.3 L723.6,410.7ZM716.8,410.7 L716.3,411.9 L714.9,411.5 L714.8,409.9 L716.1,409.8Z" fill="#a2a2a2"/><path d="" fill="#6e6e6e"/><path d="M722.8,411.5 L721.3,411.9 L718.4,411.7 L718.7,411.2 L721.2,410.9Z" fill="#dadada"/><path d="M717.6,412.7 L723.4,412.5M721.4,414.9 l-0.6,-0.9M718.7,413.2 l0.7,-0.4" stroke="#3c3c3c" stroke-width="0.53" fill="none"/><path d="M907.4,405.7 L908.0,409.7 M906.3,405.7 L905.5,409.3 M901.8,405.7 L900.8,409.7 M902.9,405.7 L903.9,409.6M900.8,404.9 Q898.1,402.5 898.7,405.7" stroke="#b6b6b6" stroke-width="0.81" fill="none" stroke-linecap="round"/><path d="M907.6,405.4 L906.5,406.7 L902.2,406.5 L900.7,405.3 L902.8,403.8 L905.5,404.2ZM910.0,404.1 L909.1,405.1 L907.9,404.8 L908.1,403.5 L909.2,403.3Z" fill="#b6b6b6"/><path d="" fill="#6e6e6e"/><path d="M906.8,404.7 L904.9,405.2 L902.9,405.1 L902.7,404.4 L904.9,404.2Z" fill="#dadada"/><path d="M901.8,405.9 L907.1,405.7M902.6,407.9 l0.1,-0.1" stroke="#3c3c3c" stroke-width="0.48" fill="none"/><path d="M971.2,417.3 L969.5,419.5 M973.4,417.3 L973.8,419.5M971.2,414.0 L968.9,412.7M973.4,414.3 L974.6,418.2" stroke="#a2a2a2" stroke-width="0.91" fill="none" stroke-linecap="round"/><path d="M975.0,415.0 L973.6,417.6 L971.5,418.2 L969.7,416.0 L970.8,413.0 L973.8,413.2ZM974.6,412.0 L973.7,413.0 L972.2,412.7 L972.2,410.9 L973.7,410.5Z" fill="#a2a2a2"/><path d="M972.2,415.7 L971.5,418.2 L970.5,417.2 L970.6,414.7 L971.8,413.9Z" fill="#6e6e6e"/><path d="M973.5,414.7 L973.0,415.7 L972.4,415.4 L972.2,413.9 L973.1,413.4ZM974.0,411.4 L973.6,412.1 L973.0,411.6 L973.5,410.9Z" fill="#dadada"/><path d="M972.8,413.6 L971.6,417.3M971.6,414.2 l-0.6,0.8M971.2,414.4 l0.1,-0.1M970.6,417.8 l-1.1,1.2" stroke="#3c3c3c" stroke-width="0.55" fill="none"/><path d="M508.6,427.5 L507.9,430.0 M511.1,427.5 L512.7,430.0M511.1,423.9 L512.2,422.7M508.6,424.2 L507.2,428.5" stroke="#9e9e9e" stroke-width="1.03" fill="none" stroke-linecap="round"/><path d="M512.7,425.9 L511.8,428.1 L508.9,427.6 L507.7,425.9 L508.3,423.2 L511.2,422.8ZM510.5,421.6 L509.7,422.8 L507.7,422.5 L507.7,420.4 L509.6,419.9Z" fill="#9e9e9e"/><path d="M512.0,426.0 L511.1,428.2 L510.2,427.2 L510.1,425.1 L511.4,423.9Z" fill="#6e6e6e"/><path d="M509.8,424.1 L509.5,425.6 L508.5,425.2 L508.7,423.6 L509.3,423.1ZM509.1,420.9 L508.6,421.5 L508.0,420.9 L508.6,420.3Z" fill="#dadada"/><path d="M509.3,423.3 L510.6,427.5M509.0,427.6 l-0.2,0.0M513.3,427.2 l-0.0,-1.1M508.6,428.5 l1.0,0.3" stroke="#3c3c3c" stroke-width="0.62" fill="none"/><path d="M1094.2,424.7 L1093.3,427.2 M1096.6,424.7 L1097.9,427.2M1094.2,421.2 L1092.6,418.8M1096.6,421.5 L1097.9,425.7" stroke="#a2a2a2" stroke-width="1.00" fill="none" stroke-linecap="round"/><path d="M1097.5,422.8 L1096.8,425.6 L1093.6,425.4 L1092.5,423.3 L1094.2,420.6 L1096.5,419.7ZM1096.1,418.6 L1095.0,420.0 L1093.7,419.6 L1093.6,417.6 L1095.4,417.4Z" fill="#a2a2a2"/><path d="M1095.3,423.1 L1094.7,425.5 L1093.5,424.3 L1093.4,421.9 L1094.8,421.3Z" fill="#6e6e6e"/><path d="M1096.7,421.6 L1096.2,423.1 L1095.4,422.7 L1095.3,420.9 L1096.1,420.4ZM1095.6,418.4 L1095.0,419.0 L1094.4,418.4 L1095.2,417.9Z" fill="#dadada"/><path d="M1095.9,420.7 L1094.6,424.7M1097.4,423.4 l1.2,0.0" stroke="#3c3c3c" stroke-width="0.60" fill="none"/><path d="" stroke="#a9a9a9" stroke-width="1.10" fill="none" stroke-linecap="round"/><path d="M603.0,434.2 L599.3,435.6 L595.1,435.5 L591.8,434.8 L588.8,433.3 L594.8,432.9 L599.4,433.1ZM604.1,433.5 L603.3,434.4 L602.1,434.2 L602.0,432.5 L603.3,431.9Z" fill="#a9a9a9"/><path d="" fill="#6e6e6e"/><path d="M599.2,433.3 L596.6,433.8 L593.8,433.8 L594.1,433.0 L596.7,432.9Z" fill="#dadada"/><path d="M591.5,434.8 L599.9,433.9M592.9,432.4 l-0.1,-1.4" stroke="#3c3c3c" stroke-width="0.66" fill="none"/><path d="" stroke="#b6b6b6" stroke-width="1.22" fill="none" stroke-linecap="round"/><path d="M498.1,445.8 L493.8,446.6 L487.5,447.1 L484.4,446.4 L482.4,444.6 L489.0,444.0 L493.3,443.9ZM483.1,444.4 L482.1,446.0 L480.2,445.6 L480.5,443.5 L482.3,443.3Z" fill="#b6b6b6"/><path d="" fill="#6e6e6e"/><path d="M492.2,444.6 L490.0,445.2 L486.4,445.0 L486.2,444.3 L490.4,444.1Z" fill="#dadada"/><path d="M484.2,446.2 L493.6,445.2M488.8,442.5 l1.3,0.0M489.3,440.4 l-1.6,-0.6M490.8,442.9 l-0.5,0.4" stroke="#3c3c3c" stroke-width="0.73" fill="none"/><path d="M501.4,423.7 L500.6,428.8 M502.7,423.7 L503.8,428.3 M508.4,423.7 L509.7,428.8 M507.1,423.7 L505.7,428.6M509.7,422.7 Q513.0,419.6 512.3,423.7" stroke="#a2a2a2" stroke-width="1.02" fill="none" stroke-linecap="round"/><path d="M509.8,423.2 L508.7,424.9 L503.0,424.5 L499.9,422.9 L501.7,421.4 L507.9,421.9ZM500.9,421.8 L500.0,422.8 L498.4,422.5 L498.5,420.7 L499.7,420.3Z" fill="#a2a2a2"/><path d="" fill="#6e6e6e"/><path d="M508.1,422.6 L505.7,423.1 L503.0,422.9 L503.6,422.1 L505.8,422.0Z" fill="#dadada"/><path d="M501.8,423.9 L508.4,423.7M502.8,426.1 l0.7,0.2" stroke="#3c3c3c" stroke-width="0.61" fill="none"/><path d="M525.0,443.0 L523.8,446.0 M527.9,443.0 L529.5,446.0M525.0,438.7 L523.5,443.7M527.9,439.1 L529.5,444.2" stroke="#9e9e9e" stroke-width="1.21" fill="none" stroke-linecap="round"/><path d="M528.9,440.1 L527.7,443.2 L524.7,443.9 L523.8,440.3 L525.3,437.3 L528.4,437.8ZM527.7,435.8 L526.5,437.6 L524.3,436.9 L524.5,434.5 L526.7,434.1Z" fill="#9e9e9e"/><path d="M526.3,441.5 L525.7,444.0 L524.0,442.4 L524.4,439.7 L525.5,438.9Z" fill="#6e6e6e"/><path d="M528.2,439.4 L527.4,441.1 L526.4,440.2 L526.5,438.1 L527.5,437.5ZM526.8,435.4 L526.1,436.0 L525.6,435.2 L526.1,434.6Z" fill="#dadada"/><path d="M527.1,438.1 L525.5,443.0M528.9,441.6 l0.5,-0.2M525.8,439.2 l-1.2,0.2M525.6,439.7 l0.4,-0.0" stroke="#3c3c3c" stroke-width="0.72" fill="none"/><path d="M871.2,413.0 L871.9,417.4 M870.0,413.0 L869.1,417.0 M865.0,413.0 L863.9,417.4 M866.2,413.0 L867.4,417.3M863.9,412.1 Q861.0,409.4 861.6,413.0" stroke="#9e9e9e" stroke-width="0.89" fill="none" stroke-linecap="round"/><path d="M871.8,412.8 L870.4,414.1 L865.9,413.7 L864.2,412.8 L866.5,411.3 L869.9,411.5ZM874.1,411.2 L873.2,412.3 L871.7,411.8 L871.9,410.7 L873.0,410.1Z" fill="#9e9e9e"/><path d="" fill="#6e6e6e"/><path d="M870.0,412.0 L868.7,412.5 L865.8,412.2 L866.4,411.6 L868.7,411.4Z" fill="#dadada"/><path d="M865.0,413.2 L870.8,413.0M866.5,415.6 l0.7,0.4M869.5,412.9 l-0.5,0.9M865.8,413.2 l0.4,0.7" stroke="#3c3c3c" stroke-width="0.54" fill="none"/><path d="" stroke="#a9a9a9" stroke-width="0.82" fill="none" stroke-linecap="round"/><path d="M921.5,409.7 L918.7,410.3 L915.4,410.6 L911.4,410.3 L911.8,409.1 L914.3,408.4 L919.4,408.7ZM922.1,409.1 L921.2,410.0 L920.4,409.5 L920.2,408.3 L921.2,408.0Z" fill="#a9a9a9"/><path d="" fill="#6e6e6e"/><path d="M918.0,408.9 L917.0,409.4 L914.0,409.1 L914.3,408.7 L916.5,408.5Z" fill="#dadada"/><path d="M912.4,410.0 L918.7,409.3M917.0,407.6 l-1.2,-0.9M913.8,405.8 l0.8,0.3" stroke="#3c3c3c" stroke-width="0.49" fill="none"/><path d="M506.4,419.2 L505.8,421.5 M508.7,419.2 L510.2,421.5M508.7,415.9 L509.8,416.7M506.4,416.2 L505.2,420.1" stroke="#a2a2a2" stroke-width="0.94" fill="none" stroke-linecap="round"/><path d="M509.5,417.1 L509.1,419.8 L506.5,420.2 L505.4,417.7 L506.9,415.1 L508.5,415.2ZM507.9,413.4 L507.0,414.7 L505.4,414.2 L505.5,412.5 L506.8,412.1Z" fill="#a2a2a2"/><path d="M509.5,417.3 L508.7,419.4 L507.8,418.5 L507.6,416.8 L508.6,416.1Z" fill="#6e6e6e"/><path d="M507.7,416.7 L507.1,417.6 L506.5,417.5 L506.6,415.6 L507.2,415.0ZM506.9,413.3 L506.2,413.9 L505.9,413.2 L506.3,412.7Z" fill="#dadada"/><path d="M507.1,415.4 L508.3,419.2M505.6,415.1 l1.1,0.3" stroke="#3c3c3c" stroke-width="0.56" fill="none"/><path d="M786.0,448.1 L783.9,451.2 M789.1,448.1 L789.8,451.2M786.0,443.6 L784.2,446.2M789.1,444.0 L790.7,449.3" stroke="#a9a9a9" stroke-width="1.26" fill="none" stroke-linecap="round"/><path d="M791.2,446.0 L788.6,448.4 L786.5,448.4 L784.9,444.9 L785.9,441.9 L789.3,441.7ZM790.1,440.2 L789.0,442.1 L786.7,441.8 L786.8,439.0 L788.9,438.8Z" fill="#a9a9a9"/><path d="M787.3,446.2 L786.8,448.6 L785.5,447.8 L785.2,444.4 L787.0,443.3Z" fill="#6e6e6e"/><path d="M789.1,444.2 L788.4,446.1 L787.7,445.4 L787.7,443.0 L788.7,442.8ZM789.4,440.1 L788.8,440.9 L787.9,440.1 L788.8,439.2Z" fill="#dadada"/><path d="M788.2,443.0 L786.5,448.1M783.9,449.3 l-0.5,-0.3M786.3,448.8 l1.7,0.0" stroke="#3c3c3c" stroke-width="0.76" fill="none"/><path d="M612.4,444.7 L611.1,447.7 M615.3,444.7 L616.9,447.7M615.3,440.4 L616.8,442.9M612.4,440.7 L610.8,445.9" stroke="#9e9e9e" stroke-width="1.22" fill="none" stroke-linecap="round"/><path d="M616.7,442.0 L615.3,444.6 L612.1,445.7 L611.1,442.0 L612.8,439.5 L615.5,438.5ZM615.0,437.4 L613.7,439.3 L611.5,438.5 L611.6,436.5 L613.9,435.7Z" fill="#9e9e9e"/><path d="M616.2,443.3 L615.3,445.5 L614.0,444.4 L614.1,440.7 L615.5,440.0Z" fill="#6e6e6e"/><path d="M613.9,440.9 L613.6,442.9 L612.5,442.0 L612.4,440.2 L613.4,439.6ZM613.5,436.9 L612.9,437.6 L612.1,437.0 L613.1,436.1Z" fill="#dadada"/><path d="M613.2,439.8 L614.8,444.7M612.3,444.8 l0.5,-1.1" stroke="#3c3c3c" stroke-width="0.73" fill="none"/><path d="M717.5,482.3 L716.1,490.8 M719.7,482.3 L721.4,490.0 M729.2,482.3 L731.4,490.8 M727.0,482.3 L724.8,490.5M731.4,480.6 Q736.9,475.5 735.8,482.3" stroke="#a9a9a9" stroke-width="1.70" fill="none" stroke-linecap="round"/><path d="M731.2,481.4 L728.1,483.7 L720.6,484.5 L714.0,481.9 L720.6,479.2 L728.0,478.7ZM716.5,478.5 L715.5,481.0 L712.8,480.6 L712.7,477.1 L714.8,476.7Z" fill="#a9a9a9"/><path d="" fill="#6e6e6e"/><path d="M727.8,480.1 L724.5,481.4 L720.8,481.0 L720.7,479.7 L725.8,479.2Z" fill="#dadada"/><path d="M718.1,482.6 L729.2,482.3M725.2,481.5 l1.8,-1.2M721.2,483.8 l-0.8,1.5M723.6,483.6 l-1.9,0.2" stroke="#3c3c3c" stroke-width="1.02" fill="none"/><path d="M650.0,460.3 L651.1,467.5 M648.1,460.3 L646.6,466.7 M640.0,460.3 L638.2,467.5 M641.9,460.3 L643.8,467.2M638.2,458.8 Q633.5,454.5 634.4,460.3" stroke="#a9a9a9" stroke-width="1.44" fill="none" stroke-linecap="round"/><path d="M650.8,459.3 L649.1,461.4 L641.8,461.9 L638.7,459.1 L640.8,456.9 L648.6,457.3ZM654.2,457.5 L652.9,459.3 L650.8,458.4 L651.1,456.6 L653.0,455.5Z" fill="#a9a9a9"/><path d="" fill="#6e6e6e"/><path d="M649.0,458.7 L646.1,459.4 L641.7,458.9 L641.7,457.8 L646.4,457.6Z" fill="#dadada"/><path d="M640.0,460.5 L649.4,460.3M646.0,459.9 l-0.9,-1.1M640.9,464.7 l-0.9,-2.1M643.1,458.2 l-0.2,-0.7" stroke="#3c3c3c" stroke-width="0.87" fill="none"/><path d="M542.2,474.2 L540.5,478.1 M546.0,474.2 L547.8,478.1M546.0,468.8 L549.9,475.0M542.2,469.3 L540.2,475.8" stroke="#a2a2a2" stroke-width="1.56" fill="none" stroke-linecap="round"/><path d="M547.6,470.7 L546.2,476.0 L541.7,474.7 L540.1,471.5 L541.3,467.0 L546.4,467.2ZM546.1,464.5 L544.0,467.1 L541.8,466.2 L541.5,463.4 L544.3,462.8Z" fill="#a2a2a2"/><path d="M547.1,471.8 L546.2,474.6 L544.5,473.7 L544.4,470.4 L546.2,469.1Z" fill="#6e6e6e"/><path d="M544.4,469.2 L543.4,471.5 L542.2,471.0 L542.4,468.5 L543.5,467.7ZM544.1,464.5 L543.2,465.2 L542.2,464.3 L543.2,463.4Z" fill="#dadada"/><path d="M543.3,468.0 L545.3,474.2M546.0,471.1 l1.4,-0.3M547.0,469.0 l-1.2,0.7" stroke="#3c3c3c" stroke-width="0.94" fill="none"/><path d="M572.3,459.8 L570.4,463.3 M575.7,459.8 L576.9,463.3M572.3,454.9 L570.9,455.6M575.7,455.3 L577.5,461.2" stroke="#a9a9a9" stroke-width="1.40" fill="none" stroke-linecap="round"/><path d="M577.9,456.7 L576.3,461.2 L572.4,460.2 L571.0,457.1 L572.8,453.9 L575.7,453.7ZM576.5,451.4 L575.3,453.6 L572.7,452.5 L572.4,450.5 L574.8,449.6Z" fill="#a9a9a9"/><path d="M573.8,458.0 L573.0,460.9 L571.7,459.5 L571.4,455.9 L572.9,455.3Z" fill="#6e6e6e"/><path d="M575.8,455.4 L575.2,457.7 L574.1,456.7 L573.9,454.5 L575.0,453.8ZM575.6,450.8 L574.6,452.0 L573.9,451.0 L574.6,450.1Z" fill="#dadada"/><path d="M574.7,454.2 L572.9,459.8M576.8,461.0 l-1.0,0.3" stroke="#3c3c3c" stroke-width="0.84" fill="none"/><path d="M679.8,458.4 L676.9,461.9 M683.1,458.4 L683.4,461.9M679.8,453.6 L677.5,449.7M683.1,454.0 L684.9,459.8" stroke="#b6b6b6" stroke-width="1.38" fill="none" stroke-linecap="round"/><path d="M685.0,456.0 L684.0,459.5 L679.3,458.8 L678.6,455.8 L679.7,451.5 L682.9,452.3ZM684.9,449.9 L684.0,451.9 L681.2,451.3 L681.6,448.9 L684.0,448.1Z" fill="#b6b6b6"/><path d="M681.6,456.5 L680.6,458.9 L679.2,457.7 L679.2,454.4 L680.7,453.7Z" fill="#6e6e6e"/><path d="M683.2,454.3 L682.7,456.1 L681.5,456.0 L681.4,453.0 L682.6,452.8ZM684.5,449.9 L683.6,450.7 L682.9,449.7 L683.5,449.0Z" fill="#dadada"/><path d="M682.2,452.9 L680.4,458.4M683.1,453.1 l-0.6,-1.6" stroke="#3c3c3c" stroke-width="0.83" fill="none"/><path d="M560.3,464.5 L557.2,468.2 M563.7,464.5 L564.0,468.2M563.7,459.5 L565.0,461.8M560.3,459.9 L558.4,466.0" stroke="#a2a2a2" stroke-width="1.45" fill="none" stroke-linecap="round"/><path d="M565.8,462.2 L563.3,465.0 L560.1,464.6 L558.0,462.3 L560.6,456.9 L563.9,458.3ZM566.0,455.5 L564.1,458.1 L562.0,456.8 L562.1,455.0 L564.9,453.8Z" fill="#a2a2a2"/><path d="M564.9,463.0 L563.8,465.7 L562.4,464.0 L562.5,460.7 L563.7,459.7Z" fill="#6e6e6e"/><path d="M562.2,460.3 L561.5,462.4 L560.2,461.4 L560.3,459.3 L561.3,458.4ZM564.2,455.5 L563.3,456.3 L562.3,455.5 L563.3,454.6Z" fill="#dadada"/><path d="M561.3,458.7 L563.2,464.5M556.9,458.5 l0.8,-2.0M564.7,462.2 l-0.5,-0.6M560.9,462.0 l-0.6,1.9" stroke="#3c3c3c" stroke-width="0.87" fill="none"/><path d="M683.9,461.3 L685.0,468.6 M682.0,461.3 L680.5,467.8 M673.9,461.3 L672.0,468.6 M675.7,461.3 L677.6,468.3M672.0,459.8 Q667.2,455.5 668.2,461.3" stroke="#9e9e9e" stroke-width="1.45" fill="none" stroke-linecap="round"/><path d="M685.1,460.2 L682.4,463.2 L674.4,462.5 L671.8,460.8 L674.5,458.7 L683.6,458.0ZM688.2,458.2 L687.0,460.5 L684.9,459.3 L685.0,457.0 L687.3,456.6Z" fill="#9e9e9e"/><path d="" fill="#6e6e6e"/><path d="M682.7,459.7 L680.1,460.3 L676.1,460.1 L675.8,458.9 L679.9,458.6Z" fill="#dadada"/><path d="M673.9,461.6 L683.3,461.3M681.2,466.0 l-1.7,-0.9" stroke="#3c3c3c" stroke-width="0.87" fill="none"/><path d="" stroke="#a2a2a2" stroke-width="1.26" fill="none" stroke-linecap="round"/><path d="M584.0,449.1 L580.9,450.4 L574.0,450.7 L568.3,449.7 L569.6,447.8 L574.9,447.3 L580.0,447.2ZM569.9,448.3 L568.5,449.4 L567.1,448.9 L566.8,447.2 L568.7,446.7Z" fill="#a2a2a2"/><path d="" fill="#6e6e6e"/><path d="M579.0,448.1 L577.4,448.7 L574.1,448.5 L573.9,447.9 L577.7,447.5Z" fill="#dadada"/><path d="M570.9,449.8 L580.7,448.8M576.4,443.4 l1.1,-1.4M573.0,446.0 l1.4,-0.7M579.0,444.8 l1.8,0.9" stroke="#3c3c3c" stroke-width="0.76" fill="none"/><path d="M755.7,513.7 L753.1,518.8 M760.5,513.7 L762.5,518.8M755.7,506.7 L753.3,513.8M760.5,507.3 L763.1,515.8" stroke="#9e9e9e" stroke-width="2.01" fill="none" stroke-linecap="round"/><path d="M762.3,510.1 L760.9,514.1 L756.2,514.8 L753.4,510.8 L755.6,505.1 L761.0,504.3ZM761.3,501.5 L759.3,504.5 L755.9,503.2 L756.0,499.5 L759.4,499.2Z" fill="#9e9e9e"/><path d="M758.5,510.2 L757.0,514.3 L754.9,513.5 L754.7,507.5 L757.2,506.0Z" fill="#6e6e6e"/><path d="M760.7,507.1 L759.5,511.0 L758.3,509.2 L758.3,505.8 L759.9,505.3ZM759.8,500.9 L758.6,502.2 L757.5,501.2 L758.5,499.8Z" fill="#dadada"/><path d="M759.1,505.7 L756.5,513.7M759.7,508.9 l-0.6,-2.4M758.9,513.4 l-0.0,1.2" stroke="#3c3c3c" stroke-width="1.20" fill="none"/><path d="M717.7,462.9 L715.4,466.5 M721.1,462.9 L722.1,466.5M717.7,457.9 L713.7,453.2M721.1,458.3 L723.0,464.3" stroke="#b6b6b6" stroke-width="1.43" fill="none" stroke-linecap="round"/><path d="M723.4,460.3 L721.2,464.6 L717.3,462.9 L716.5,460.1 L718.4,456.6 L721.2,456.1ZM722.5,454.6 L720.3,456.2 L718.6,455.4 L718.5,453.0 L721.0,452.4Z" fill="#b6b6b6"/><path d="M719.2,460.7 L718.4,463.4 L716.7,462.8 L716.8,459.1 L718.5,457.8Z" fill="#6e6e6e"/><path d="M721.2,458.7 L720.4,460.4 L719.5,460.2 L719.4,457.5 L720.6,456.1ZM721.5,453.9 L720.4,454.9 L719.7,453.9 L720.5,452.9Z" fill="#dadada"/><path d="M720.1,457.2 L718.3,462.9M716.3,463.0 l-0.7,-1.4M720.9,457.7 l-1.2,0.0" stroke="#3c3c3c" stroke-width="0.86" fill="none"/><path d="M658.3,443.5 L656.9,446.5 M661.2,443.5 L662.5,446.5M661.2,439.3 L662.6,435.2M658.3,439.6 L656.7,444.7" stroke="#a9a9a9" stroke-width="1.21" fill="none" stroke-linecap="round"/><path d="M662.6,441.4 L661.0,443.6 L657.7,444.2 L656.6,441.6 L658.8,438.0 L661.5,438.1ZM661.1,436.2 L659.8,438.2 L657.8,437.0 L657.6,435.3 L659.8,434.4Z" fill="#a9a9a9"/><path d="M662.1,441.5 L661.5,444.2 L659.8,443.6 L659.9,440.6 L661.5,438.7Z" fill="#6e6e6e"/><path d="M659.7,440.1 L659.4,441.6 L658.4,440.6 L658.3,438.5 L659.2,438.0ZM659.7,435.8 L659.0,436.5 L658.4,436.0 L659.2,435.0Z" fill="#dadada"/><path d="M659.1,438.6 L660.7,443.5M656.7,439.7 l-0.4,-1.6M660.9,443.8 l1.2,-1.2M662.9,443.3 l-1.3,1.3" stroke="#3c3c3c" stroke-width="0.73" fill="none"/><path d="M776.9,505.5 L773.7,510.3 M781.4,505.5 L782.7,510.3M776.9,498.8 L772.1,499.7M781.4,499.4 L783.9,507.5" stroke="#a9a9a9" stroke-width="1.91" fill="none" stroke-linecap="round"/><path d="M783.3,501.7 L782.6,506.9 L776.7,505.4 L774.1,502.9 L776.0,496.3 L781.7,496.3ZM783.3,493.6 L781.4,497.1 L777.9,495.2 L777.8,491.8 L781.0,491.3Z" fill="#a9a9a9"/><path d="M779.3,501.8 L778.0,506.4 L775.8,505.0 L775.6,500.6 L777.5,499.1Z" fill="#6e6e6e"/><path d="M781.8,499.5 L780.8,502.3 L779.5,501.8 L779.5,498.1 L780.5,497.1ZM781.7,493.4 L780.9,494.5 L779.5,493.3 L780.9,492.3Z" fill="#dadada"/><path d="M780.1,497.9 L777.6,505.5M772.8,499.6 l-0.8,1.4M775.2,497.9 l-2.7,1.0" stroke="#3c3c3c" stroke-width="1.15" fill="none"/><path d="M504.7,470.8 L502.1,474.6 M508.4,470.8 L509.2,474.6M504.7,465.5 L502.1,461.5M508.4,465.9 L510.4,472.3" stroke="#b6b6b6" stroke-width="1.52" fill="none" stroke-linecap="round"/><path d="M509.8,468.1 L509.0,471.4 L504.7,471.4 L503.3,467.6 L504.7,463.7 L509.1,463.8ZM509.9,461.7 L508.0,463.8 L505.9,462.9 L505.5,460.5 L508.0,459.2Z" fill="#b6b6b6"/><path d="M506.6,467.9 L505.7,471.5 L503.6,470.4 L503.6,467.1 L505.3,465.2Z" fill="#6e6e6e"/><path d="M508.3,466.5 L507.9,468.5 L506.7,468.0 L506.5,464.6 L507.8,463.7ZM509.0,461.4 L508.2,462.1 L507.3,461.1 L508.1,460.3Z" fill="#dadada"/><path d="M507.3,464.7 L505.3,470.8M505.4,464.4 l0.7,0.3M510.4,467.3 l-1.6,2.2M507.0,464.4 l-2.3,1.2" stroke="#3c3c3c" stroke-width="0.91" fill="none"/><path d="M608.5,480.4 L605.5,484.4 M612.4,480.4 L613.1,484.4M608.5,474.7 L604.5,480.0M612.4,475.1 L614.5,482.0" stroke="#a9a9a9" stroke-width="1.63" fill="none" stroke-linecap="round"/><path d="M614.4,477.8 L612.6,481.9 L608.1,480.4 L607.1,476.8 L607.9,472.3 L612.7,472.9ZM614.4,470.2 L612.4,472.8 L609.7,471.8 L610.2,469.1 L612.5,468.1Z" fill="#a9a9a9"/><path d="M610.4,477.8 L609.6,481.1 L607.6,479.2 L607.3,476.3 L609.5,474.8Z" fill="#6e6e6e"/><path d="M612.7,475.9 L612.0,477.6 L610.4,476.9 L610.6,474.4 L611.8,473.5ZM613.2,470.1 L612.2,470.9 L611.2,470.1 L612.4,469.3Z" fill="#dadada"/><path d="M611.3,473.8 L609.2,480.4M613.3,474.8 l-2.0,-1.1M608.2,479.0 l-1.5,-1.2M613.5,475.1 l2.0,-1.6" stroke="#3c3c3c" stroke-width="0.98" fill="none"/><path d="M562.4,443.0 L561.5,449.2 M564.1,443.0 L565.3,448.6 M571.0,443.0 L572.6,449.2 M569.4,443.0 L567.8,449.0M572.6,441.8 Q576.6,438.0 575.8,443.0" stroke="#b6b6b6" stroke-width="1.24" fill="none" stroke-linecap="round"/><path d="M572.3,442.5 L570.1,444.1 L564.3,444.5 L560.4,442.5 L564.3,439.9 L569.0,440.2ZM561.8,440.6 L560.6,442.3 L558.9,441.6 L558.8,439.8 L560.6,438.8Z" fill="#b6b6b6"/><path d="" fill="#6e6e6e"/><path d="M570.6,441.6 L568.0,442.3 L564.2,441.9 L564.4,441.2 L568.6,440.8Z" fill="#dadada"/><path d="M562.9,443.2 L571.0,443.0M566.5,441.4 l-1.5,0.5" stroke="#3c3c3c" stroke-width="0.74" fill="none"/><path d="" stroke="#a2a2a2" stroke-width="1.25" fill="none" stroke-linecap="round"/><path d="M777.6,447.4 L774.9,448.7 L769.7,449.0 L762.8,448.5 L762.6,446.6 L768.9,445.5 L774.9,446.0ZM780.0,446.8 L779.1,447.8 L777.3,447.5 L777.3,445.8 L778.9,444.8Z" fill="#a2a2a2"/><path d="" fill="#6e6e6e"/><path d="M774.2,446.6 L771.0,447.1 L767.8,446.9 L768.0,446.2 L771.8,445.9Z" fill="#dadada"/><path d="M765.4,448.2 L775.0,447.2M772.5,445.2 l0.0,-1.8" stroke="#3c3c3c" stroke-width="0.75" fill="none"/><path d="M782.7,459.1 L783.8,466.3 M780.8,459.1 L779.3,465.5 M772.8,459.1 L771.0,466.3 M774.7,459.1 L776.5,466.0M771.0,457.7 Q766.3,453.4 767.2,459.1" stroke="#9e9e9e" stroke-width="1.43" fill="none" stroke-linecap="round"/><path d="M783.4,458.6 L780.2,460.3 L773.3,460.1 L771.5,458.2 L773.4,456.0 L780.7,455.9ZM787.0,455.9 L785.9,458.0 L783.5,457.3 L783.7,455.0 L785.8,454.4Z" fill="#9e9e9e"/><path d="" fill="#6e6e6e"/><path d="M781.7,457.3 L779.4,458.3 L774.6,457.8 L775.2,456.9 L779.0,456.7Z" fill="#dadada"/><path d="M772.8,459.4 L782.1,459.1M773.5,460.0 l-0.6,-0.6M779.6,456.3 l-1.0,2.0" stroke="#3c3c3c" stroke-width="0.86" fill="none"/><path d="" stroke="#9e9e9e" stroke-width="1.15" fill="none" stroke-linecap="round"/><path d="M640.7,439.3 L636.8,440.2 L630.7,440.5 L627.9,439.7 L627.3,438.6 L630.5,437.2 L635.7,437.7ZM626.6,438.0 L625.7,439.6 L624.1,439.0 L624.1,437.2 L625.7,437.2Z" fill="#9e9e9e"/><path d="" fill="#6e6e6e"/><path d="M635.4,438.3 L632.9,438.8 L630.6,438.5 L629.6,437.9 L632.8,437.7Z" fill="#dadada"/><path d="M627.7,439.7 L636.6,438.8M631.6,437.4 l-1.0,1.5M635.0,437.5 l1.3,-1.2M635.7,434.5 l-0.3,1.1" stroke="#3c3c3c" stroke-width="0.69" fill="none"/><path d="" stroke="#a2a2a2" stroke-width="1.18" fill="none" stroke-linecap="round"/><path d="M636.3,441.1 L634.6,442.4 L629.5,443.3 L622.5,442.5 L625.5,440.7 L627.8,440.0 L635.9,440.0ZM639.2,440.8 L637.9,442.0 L636.2,441.4 L636.4,439.5 L637.9,439.5Z" fill="#a2a2a2"/><path d="" fill="#6e6e6e"/><path d="M633.3,440.7 L630.6,441.3 L627.0,440.9 L627.2,440.3 L631.1,440.1Z" fill="#dadada"/><path d="M625.2,442.2 L634.3,441.2M633.6,438.4 l1.1,0.1M628.5,436.3 l0.1,-0.2" stroke="#3c3c3c" stroke-width="0.71" fill="none"/><path d="M685.3,462.5 L683.7,466.1 M688.7,462.5 L690.5,466.1M685.3,457.6 L683.4,454.9M688.7,458.0 L690.6,464.0" stroke="#a9a9a9" stroke-width="1.43" fill="none" stroke-linecap="round"/><path d="M690.9,459.3 L688.3,462.8 L684.8,462.9 L684.0,460.2 L684.9,456.7 L688.3,455.4ZM688.9,454.2 L686.8,456.2 L685.1,455.2 L684.5,452.6 L687.6,452.0Z" fill="#a9a9a9"/><path d="M686.9,460.0 L685.9,463.4 L684.5,462.4 L684.4,458.5 L686.0,457.7Z" fill="#6e6e6e"/><path d="M688.8,458.0 L688.0,460.1 L687.0,459.3 L687.0,457.2 L688.0,456.0ZM687.7,453.7 L686.8,454.3 L686.0,453.6 L686.9,452.9Z" fill="#dadada"/><path d="M687.7,456.8 L685.9,462.5M685.2,459.3 l-0.0,1.2M683.6,459.4 l-0.9,-0.9" stroke="#3c3c3c" stroke-width="0.86" fill="none"/><path d="" stroke="#a9a9a9" stroke-width="1.20" fill="none" stroke-linecap="round"/><path d="M850.4,443.6 L848.7,445.0 L840.0,445.4 L835.4,444.2 L836.6,442.7 L840.9,442.2 L847.7,442.1ZM836.5,442.6 L835.7,444.2 L833.5,443.7 L833.8,441.9 L835.6,441.4Z" fill="#a9a9a9"/><path d="" fill="#6e6e6e"/><path d="M845.8,442.9 L843.1,443.4 L840.2,443.1 L840.3,442.6 L843.7,442.2Z" fill="#dadada"/><path d="M837.5,444.4 L846.8,443.5M839.7,440.5 l-0.6,1.7" stroke="#3c3c3c" stroke-width="0.72" fill="none"/><path d="M815.1,435.3 L816.0,441.0 M813.6,435.3 L812.4,440.5 M807.2,435.3 L805.7,441.0 M808.7,435.3 L810.2,440.8M805.7,434.1 Q802.0,430.7 802.7,435.3" stroke="#a9a9a9" stroke-width="1.15" fill="none" stroke-linecap="round"/><path d="M816.9,434.3 L812.8,436.3 L808.8,436.4 L805.0,435.0 L808.8,432.8 L814.7,432.7ZM818.7,433.2 L817.4,434.3 L816.1,433.6 L816.1,432.3 L817.7,431.7Z" fill="#a9a9a9"/><path d="" fill="#6e6e6e"/><path d="M813.5,433.9 L811.7,434.6 L809.0,434.3 L809.0,433.5 L811.8,433.1Z" fill="#dadada"/><path d="M807.2,435.5 L814.7,435.3M812.5,437.0 l1.2,1.2M813.2,437.7 l-0.3,0.9M810.2,436.5 l-1.6,-1.2" stroke="#3c3c3c" stroke-width="0.69" fill="none"/><path d="M926.2,424.8 L925.8,427.3 M928.6,424.8 L930.5,427.3M926.2,421.3 L924.7,420.0M928.6,421.6 L929.9,425.8" stroke="#a9a9a9" stroke-width="1.00" fill="none" stroke-linecap="round"/><path d="M930.3,423.1 L928.3,425.5 L926.3,424.9 L924.8,422.7 L926.0,419.8 L928.2,420.0ZM927.5,418.7 L926.2,420.2 L924.9,419.5 L924.8,417.8 L926.4,417.2Z" fill="#a9a9a9"/><path d="M927.4,423.0 L926.7,425.5 L925.7,424.4 L925.7,422.0 L926.6,420.9Z" fill="#6e6e6e"/><path d="M928.6,421.8 L928.2,422.9 L927.5,422.4 L927.4,420.8 L928.1,420.2ZM926.9,418.6 L926.3,419.1 L925.6,418.6 L926.3,418.0Z" fill="#dadada"/><path d="M927.9,420.8 L926.6,424.8M929.2,424.2 l1.4,0.4" stroke="#3c3c3c" stroke-width="0.60" fill="none"/><path d="M843.0,436.7 L843.9,442.5 M841.5,436.7 L840.3,442.0 M835.0,436.7 L833.4,442.5 M836.5,436.7 L838.0,442.3M833.4,435.5 Q829.6,432.0 830.4,436.7" stroke="#9e9e9e" stroke-width="1.17" fill="none" stroke-linecap="round"/><path d="M843.7,435.8 L842.5,438.0 L837.1,437.8 L832.5,436.1 L835.2,434.4 L842.6,434.2ZM846.8,434.2 L845.7,435.7 L844.0,435.0 L844.0,433.8 L845.5,432.8Z" fill="#9e9e9e"/><path d="" fill="#6e6e6e"/><path d="M841.8,435.4 L839.7,436.0 L836.4,435.8 L836.3,435.0 L840.2,434.6Z" fill="#dadada"/><path d="M835.0,436.9 L842.5,436.7M835.8,437.1 l-1.7,-1.2M838.5,437.2 l0.5,0.3M840.6,438.0 l1.0,-1.6" stroke="#3c3c3c" stroke-width="0.70" fill="none"/><path d="" stroke="#a9a9a9" stroke-width="1.25" fill="none" stroke-linecap="round"/><path d="M889.2,447.9 L885.2,449.6 L880.5,449.7 L874.7,449.4 L874.7,447.0 L881.4,446.2 L888.0,446.6ZM875.5,447.2 L874.6,448.6 L872.9,447.8 L873.1,446.3 L874.4,445.9Z" fill="#a9a9a9"/><path d="" fill="#6e6e6e"/><path d="M885.1,447.1 L883.2,447.8 L879.2,447.5 L879.6,447.0 L882.3,446.5Z" fill="#dadada"/><path d="M876.6,448.9 L886.3,447.9M883.3,447.4 l0.5,0.6M880.4,447.6 l-1.0,-1.9" stroke="#3c3c3c" stroke-width="0.75" fill="none"/><path d="M912.5,438.3 L911.6,444.3 M914.1,438.3 L915.3,443.7 M920.7,438.3 L922.3,444.3 M919.2,438.3 L917.6,444.0M922.3,437.2 Q926.1,433.6 925.3,438.3" stroke="#b6b6b6" stroke-width="1.19" fill="none" stroke-linecap="round"/><path d="M921.6,437.6 L920.1,439.2 L913.6,439.4 L911.5,437.7 L912.3,435.8 L920.4,435.8ZM911.7,436.0 L910.7,437.7 L909.1,437.1 L909.4,435.0 L911.0,434.8Z" fill="#b6b6b6"/><path d="" fill="#6e6e6e"/><path d="M920.5,437.0 L918.2,437.5 L914.7,437.4 L914.1,436.6 L917.4,436.3Z" fill="#dadada"/><path d="M913.0,438.6 L920.7,438.3M916.2,440.6 l1.3,1.3M913.7,439.1 l1.3,1.6M919.8,436.9 l-1.6,0.1" stroke="#3c3c3c" stroke-width="0.71" fill="none"/><path d="" stroke="#9e9e9e" stroke-width="1.03" fill="none" stroke-linecap="round"/><path d="M924.8,427.7 L921.8,429.3 L917.0,429.2 L912.0,428.8 L911.9,427.1 L916.1,426.5 L920.8,426.7ZM925.8,427.3 L924.8,428.2 L923.2,428.1 L923.2,426.7 L924.6,425.9Z" fill="#9e9e9e"/><path d="" fill="#6e6e6e"/><path d="M920.2,427.3 L918.9,427.8 L916.0,427.5 L916.1,427.1 L919.4,426.8Z" fill="#dadada"/><path d="M913.6,428.6 L921.5,427.8M920.3,425.4 l0.4,1.0M919.2,426.1 l1.5,0.9" stroke="#3c3c3c" stroke-width="0.62" fill="none"/><path d="M776.8,435.2 L775.9,440.9 M778.3,435.2 L779.5,440.3 M784.7,435.2 L786.2,440.9 M783.2,435.2 L781.7,440.7M786.2,434.0 Q789.9,430.6 789.2,435.2" stroke="#9e9e9e" stroke-width="1.15" fill="none" stroke-linecap="round"/><path d="M786.7,434.6 L783.2,436.4 L777.8,436.5 L776.0,434.7 L778.6,432.6 L783.4,432.7ZM776.3,433.1 L775.2,434.0 L773.3,433.6 L773.6,432.1 L775.4,431.3Z" fill="#9e9e9e"/><path d="" fill="#6e6e6e"/><path d="M783.6,433.8 L782.2,434.4 L778.9,434.1 L778.5,433.2 L781.9,433.3Z" fill="#dadada"/><path d="M777.2,435.4 L784.7,435.2M780.2,437.2 l-0.7,-0.4M778.9,434.9 l-1.5,-0.4M783.0,434.0 l-1.0,1.4" stroke="#3c3c3c" stroke-width="0.69" fill="none"/><path d="M854.9,429.0 L854.0,431.6 M857.4,429.0 L858.9,431.6M857.4,425.4 L859.9,427.1M854.9,425.7 L853.5,430.1" stroke="#9e9e9e" stroke-width="1.05" fill="none" stroke-linecap="round"/><path d="M858.7,427.0 L857.9,429.4 L854.3,429.7 L853.7,427.3 L854.8,424.6 L856.9,424.6ZM856.9,422.5 L855.6,424.1 L853.9,423.7 L854.1,422.0 L855.7,421.0Z" fill="#9e9e9e"/><path d="M858.2,427.4 L857.5,430.0 L856.5,428.5 L856.5,426.4 L857.3,425.6Z" fill="#6e6e6e"/><path d="M856.2,425.9 L855.8,427.4 L855.0,427.0 L854.9,425.1 L855.7,424.2ZM855.6,422.4 L855.1,423.2 L854.5,422.4 L855.2,421.8Z" fill="#dadada"/><path d="M855.6,424.8 L857.0,429.0M854.6,427.1 l1.5,0.9M854.1,428.5 l0.3,0.1M858.5,429.8 l-0.4,1.0" stroke="#3c3c3c" stroke-width="0.63" fill="none"/><path d="M828.9,434.2 L829.8,439.9 M827.4,434.2 L826.2,439.4 M821.0,434.2 L819.5,439.9 M822.5,434.2 L824.0,439.7M819.5,433.1 Q815.8,429.7 816.6,434.2" stroke="#b6b6b6" stroke-width="1.14" fill="none" stroke-linecap="round"/><path d="M831.1,433.3 L828.2,435.4 L821.5,435.3 L818.0,433.6 L821.6,431.7 L827.8,431.7ZM832.5,432.1 L831.1,433.4 L830.0,432.9 L829.6,431.2 L831.4,430.4Z" fill="#b6b6b6"/><path d="" fill="#6e6e6e"/><path d="M827.8,432.9 L825.5,433.5 L822.5,433.2 L822.3,432.5 L825.9,432.2Z" fill="#dadada"/><path d="M821.0,434.5 L828.4,434.2M827.0,433.8 l-0.8,0.6M824.1,435.6 l0.7,-1.5M824.0,434.5 l1.1,1.0" stroke="#3c3c3c" stroke-width="0.68" fill="none"/><path d="M875.2,433.0 L873.6,435.7 M877.8,433.0 L878.7,435.7M877.8,429.1 L879.0,431.9M875.2,429.5 L873.8,434.0" stroke="#a9a9a9" stroke-width="1.09" fill="none" stroke-linecap="round"/><path d="M879.6,431.3 L878.3,433.4 L874.7,433.9 L873.8,430.3 L874.6,428.1 L878.0,427.9ZM878.5,426.1 L877.1,428.0 L875.3,427.1 L875.3,425.6 L877.5,425.0Z" fill="#a9a9a9"/><path d="M878.6,431.1 L878.2,433.8 L876.8,433.1 L876.7,429.7 L877.9,429.2Z" fill="#6e6e6e"/><path d="M876.5,429.5 L876.0,431.5 L875.1,430.8 L875.4,428.7 L876.2,428.2ZM877.1,426.2 L876.5,426.7 L875.8,426.1 L876.5,425.4Z" fill="#dadada"/><path d="M876.0,428.6 L877.4,433.0M873.5,429.1 l-0.2,-1.1M876.9,431.8 l-1.2,-0.5M875.7,431.9 l0.2,-0.7" stroke="#3c3c3c" stroke-width="0.66" fill="none"/><path d="M826.5,439.9 L825.6,445.9 M828.1,439.9 L829.3,445.3 M834.8,439.9 L836.4,445.9 M833.3,439.9 L831.7,445.7M836.4,438.7 Q840.3,435.1 839.5,439.9" stroke="#b6b6b6" stroke-width="1.21" fill="none" stroke-linecap="round"/><path d="M835.7,439.0 L834.1,440.8 L828.6,441.4 L825.1,439.3 L828.9,437.6 L835.1,437.4ZM826.0,437.3 L824.6,438.8 L823.1,438.5 L823.1,436.7 L824.7,436.1Z" fill="#b6b6b6"/><path d="" fill="#6e6e6e"/><path d="M834.0,438.5 L832.3,439.2 L828.5,438.9 L828.3,437.8 L831.8,437.8Z" fill="#dadada"/><path d="M827.0,440.1 L834.8,439.9M829.1,442.8 l-0.2,-0.8M830.7,441.6 l-1.6,0.2M827.5,439.7 l0.4,1.6" stroke="#3c3c3c" stroke-width="0.72" fill="none"/><path d="M969.3,423.7 L970.1,428.8 M968.0,423.7 L966.9,428.3 M962.3,423.7 L961.0,428.8 M963.6,423.7 L964.9,428.6M961.0,422.7 Q957.7,419.6 958.3,423.7" stroke="#9e9e9e" stroke-width="1.02" fill="none" stroke-linecap="round"/><path d="M971.4,423.2 L968.4,424.8 L963.4,424.8 L960.9,423.3 L963.0,421.7 L968.3,421.8ZM972.5,421.9 L971.6,422.9 L970.1,422.1 L970.2,420.8 L971.3,420.4Z" fill="#9e9e9e"/><path d="" fill="#6e6e6e"/><path d="M968.7,422.4 L966.0,423.0 L963.6,422.8 L964.1,422.1 L966.2,421.7Z" fill="#dadada"/><path d="M962.3,423.9 L968.9,423.7M966.1,426.2 l-0.3,1.3M964.5,423.6 l1.5,-0.5" stroke="#3c3c3c" stroke-width="0.61" fill="none"/><path d="M885.2,421.9 L884.5,426.8 M886.5,421.9 L887.6,426.4 M892.1,421.9 L893.4,426.8 M890.8,421.9 L889.5,426.6M893.4,420.9 Q896.6,417.9 896.0,421.9" stroke="#a2a2a2" stroke-width="1.00" fill="none" stroke-linecap="round"/><path d="M892.9,421.3 L891.6,422.9 L886.7,422.9 L884.5,421.5 L887.0,419.5 L891.4,419.6ZM884.8,419.7 L883.9,421.0 L882.4,420.7 L882.4,419.3 L883.8,418.5Z" fill="#a2a2a2"/><path d="" fill="#6e6e6e"/><path d="M891.8,420.8 L889.5,421.4 L886.8,421.2 L887.1,420.4 L889.4,420.0Z" fill="#dadada"/><path d="M885.6,422.1 L892.1,421.9M888.7,424.6 l-0.3,-0.2M890.7,424.2 l-0.6,1.5M888.2,425.1 l1.2,0.7" stroke="#3c3c3c" stroke-width="0.60" fill="none"/><path d="M801.0,429.7 L798.7,432.4 M803.6,429.7 L803.7,432.4M803.6,426.0 L805.3,424.7M801.0,426.3 L799.7,430.8" stroke="#9e9e9e" stroke-width="1.06" fill="none" stroke-linecap="round"/><path d="M805.2,428.0 L803.6,430.7 L801.2,430.8 L800.0,427.4 L801.2,424.2 L804.3,424.7ZM805.1,423.3 L804.3,424.7 L802.3,424.1 L802.5,422.6 L804.0,421.9Z" fill="#9e9e9e"/><path d="M804.3,427.9 L803.8,430.8 L802.7,429.6 L802.5,426.4 L803.7,425.5Z" fill="#6e6e6e"/><path d="M802.5,426.5 L802.0,428.1 L801.1,427.5 L801.1,425.9 L801.8,425.0ZM804.0,423.1 L803.4,423.7 L802.8,423.1 L803.4,422.4Z" fill="#dadada"/><path d="M801.8,425.5 L803.2,429.7M804.1,428.8 l-0.2,0.5M803.5,425.3 l1.4,1.3" stroke="#3c3c3c" stroke-width="0.63" fill="none"/><path d="M869.7,427.9 L868.1,430.5 M872.2,427.9 L873.0,430.5M869.7,424.3 L867.7,423.3M872.2,424.6 L873.5,429.0" stroke="#9e9e9e" stroke-width="1.04" fill="none" stroke-linecap="round"/><path d="M873.6,425.9 L872.7,428.2 L869.5,429.0 L868.1,425.6 L869.8,423.4 L872.4,423.6ZM872.7,421.5 L872.0,423.1 L870.2,422.8 L870.2,420.8 L871.6,420.3Z" fill="#9e9e9e"/><path d="M870.9,426.8 L870.2,428.4 L869.1,427.7 L869.0,425.3 L870.0,424.1Z" fill="#6e6e6e"/><path d="M872.4,424.7 L872.0,426.4 L870.9,425.5 L871.0,423.7 L871.7,423.5ZM872.2,421.3 L871.5,422.1 L871.0,421.3 L871.6,420.8Z" fill="#dadada"/><path d="M871.4,423.8 L870.1,427.9M871.3,423.7 l-1.1,1.2" stroke="#3c3c3c" stroke-width="0.62" fill="none"/><path d="M900.2,444.6 L897.9,447.6 M903.1,444.6 L903.6,447.6M903.1,440.3 L905.5,441.4M900.2,440.6 L898.6,445.8" stroke="#b6b6b6" stroke-width="1.22" fill="none" stroke-linecap="round"/><path d="M904.7,441.6 L902.8,444.9 L899.6,445.0 L898.5,442.4 L900.2,439.1 L903.2,439.8ZM904.8,437.0 L903.4,439.1 L901.0,438.1 L901.0,436.2 L903.2,435.3Z" fill="#b6b6b6"/><path d="M904.0,442.4 L903.3,445.7 L901.9,444.8 L901.6,441.4 L903.4,440.3Z" fill="#6e6e6e"/><path d="M901.7,441.1 L901.3,442.4 L900.2,441.6 L900.4,439.7 L901.3,439.1ZM903.2,436.8 L902.4,437.4 L901.6,436.9 L902.3,436.1Z" fill="#dadada"/><path d="M901.0,439.7 L902.6,444.6M898.9,442.3 l-0.7,1.7" stroke="#3c3c3c" stroke-width="0.73" fill="none"/><path d="M980.4,431.4 L981.3,437.0 M979.0,431.4 L977.8,436.4 M972.8,431.4 L971.4,437.0 M974.2,431.4 L975.7,436.8M971.4,430.3 Q967.8,427.0 968.5,431.4" stroke="#b6b6b6" stroke-width="1.11" fill="none" stroke-linecap="round"/><path d="M982.6,431.0 L978.4,432.7 L973.3,432.5 L970.3,431.2 L973.1,429.4 L978.4,429.3ZM984.1,429.0 L983.0,430.4 L981.4,430.1 L981.5,428.3 L983.1,427.9Z" fill="#b6b6b6"/><path d="" fill="#6e6e6e"/><path d="M979.7,430.0 L977.1,430.7 L973.9,430.6 L974.5,429.8 L977.7,429.5Z" fill="#dadada"/><path d="M972.8,431.7 L980.0,431.4M976.6,431.4 l-0.1,-0.2M974.2,431.8 l-1.0,-0.0M976.7,432.7 l0.7,-1.6" stroke="#3c3c3c" stroke-width="0.66" fill="none"/><path d="" stroke="#a9a9a9" stroke-width="1.08" fill="none" stroke-linecap="round"/><path d="M804.9,432.9 L801.0,434.5 L795.5,434.3 L791.9,433.4 L790.4,432.3 L796.3,431.8 L800.2,431.7ZM791.7,432.3 L790.7,433.3 L789.3,433.3 L789.4,431.5 L790.4,431.0Z" fill="#a9a9a9"/><path d="" fill="#6e6e6e"/><path d="M799.9,432.2 L798.3,432.8 L794.5,432.5 L795.1,432.0 L797.8,431.7Z" fill="#dadada"/><path d="M792.6,433.7 L800.9,432.8M796.3,431.2 l-1.3,1.0M799.0,429.3 l0.9,1.3M799.6,432.4 l0.6,-0.0" stroke="#3c3c3c" stroke-width="0.65" fill="none"/><path d="M897.1,434.5 L895.6,437.3 M899.8,434.5 L900.8,437.3M899.8,430.6 L900.7,430.5M897.1,431.0 L895.7,435.6" stroke="#b6b6b6" stroke-width="1.11" fill="none" stroke-linecap="round"/><path d="M901.3,432.3 L899.4,435.0 L897.2,435.9 L895.8,432.1 L896.7,429.6 L900.3,429.4ZM900.0,428.1 L898.9,429.6 L897.2,428.8 L897.5,426.7 L898.9,426.3Z" fill="#b6b6b6"/><path d="M900.7,433.2 L900.1,435.3 L898.6,434.4 L898.5,431.4 L900.0,430.8Z" fill="#6e6e6e"/><path d="M898.4,430.9 L897.8,432.6 L897.2,432.2 L897.1,430.5 L898.1,429.6ZM898.9,427.7 L898.3,428.2 L897.6,427.6 L898.3,426.8Z" fill="#dadada"/><path d="M897.9,430.1 L899.3,434.5M896.4,432.4 l-0.1,-1.2M896.6,433.8 l-0.7,-1.4" stroke="#3c3c3c" stroke-width="0.67" fill="none"/><path d="M874.9,433.4 L874.0,439.0 M876.4,433.4 L877.6,438.5 M882.7,433.4 L884.2,439.0 M881.2,433.4 L879.8,438.8M884.2,432.3 Q887.8,428.9 887.1,433.4" stroke="#b6b6b6" stroke-width="1.13" fill="none" stroke-linecap="round"/><path d="M884.8,433.2 L881.8,434.7 L876.1,434.8 L872.5,432.9 L876.0,430.7 L881.3,430.8ZM874.3,431.0 L873.3,432.3 L871.5,431.9 L871.6,430.3 L873.4,430.0Z" fill="#b6b6b6"/><path d="" fill="#6e6e6e"/><path d="M882.4,432.0 L879.4,432.8 L877.0,432.4 L876.9,431.8 L879.6,431.4Z" fill="#dadada"/><path d="M875.4,433.6 L882.7,433.4M875.9,434.0 l-0.1,1.6M877.0,433.3 l-0.4,0.5M877.9,435.4 l0.7,0.9" stroke="#3c3c3c" stroke-width="0.68" fill="none"/><path d="M843.1,445.0 L842.1,451.4 M844.7,445.0 L846.1,450.7 M851.8,445.0 L853.5,451.4 M850.2,445.0 L848.5,451.1M853.5,443.8 Q857.6,440.0 856.8,445.0" stroke="#a2a2a2" stroke-width="1.27" fill="none" stroke-linecap="round"/><path d="M853.9,444.5 L851.4,446.4 L845.7,446.3 L841.8,444.0 L844.3,442.4 L850.2,442.6ZM842.4,442.7 L841.1,444.2 L839.6,443.5 L839.7,441.6 L841.5,441.2Z" fill="#a2a2a2"/><path d="" fill="#6e6e6e"/><path d="M850.4,443.6 L848.5,444.2 L845.0,443.9 L845.7,443.0 L849.4,442.8Z" fill="#dadada"/><path d="M843.6,445.3 L851.8,445.0M850.0,443.5 l-1.1,0.6M849.0,444.0 l0.8,0.3" stroke="#3c3c3c" stroke-width="0.76" fill="none"/><path d="M938.7,448.8 L936.5,452.0 M941.8,448.8 L942.5,452.0M938.7,444.3 L935.6,442.6M941.8,444.7 L943.4,450.1" stroke="#a2a2a2" stroke-width="1.27" fill="none" stroke-linecap="round"/><path d="M943.0,446.5 L942.4,449.4 L938.0,449.4 L936.5,446.1 L938.0,442.6 L941.5,442.2ZM942.8,441.0 L942.0,442.9 L939.9,442.5 L939.5,440.4 L941.6,439.5Z" fill="#a2a2a2"/><path d="M940.4,446.6 L939.5,450.0 L937.8,448.7 L937.7,445.4 L939.3,443.9Z" fill="#6e6e6e"/><path d="M941.9,444.9 L941.3,446.8 L940.4,446.4 L940.4,444.0 L941.3,443.5ZM942.2,440.8 L941.5,441.4 L940.8,440.7 L941.3,440.0Z" fill="#dadada"/><path d="M940.9,443.7 L939.2,448.8M943.3,449.0 l-1.0,-1.9" stroke="#3c3c3c" stroke-width="0.76" fill="none"/><path d="M863.6,439.6 L862.7,445.6 M865.2,439.6 L866.4,445.0 M871.9,439.6 L873.4,445.6 M870.3,439.6 L868.7,445.3M873.4,438.4 Q877.3,434.8 876.6,439.6" stroke="#b6b6b6" stroke-width="1.20" fill="none" stroke-linecap="round"/><path d="M874.9,438.8 L870.8,440.7 L865.9,441.2 L862.9,438.9 L866.2,437.2 L871.2,437.1ZM862.9,437.1 L861.8,438.7 L860.3,438.1 L860.2,436.3 L861.8,435.5Z" fill="#b6b6b6"/><path d="" fill="#6e6e6e"/><path d="M871.7,438.2 L869.4,438.9 L865.5,438.5 L865.1,437.6 L868.9,437.5Z" fill="#dadada"/><path d="M864.1,439.8 L871.9,439.6M870.0,442.6 l-0.9,-1.6M869.3,437.5 l0.6,-0.4" stroke="#3c3c3c" stroke-width="0.72" fill="none"/><path d="" stroke="#a9a9a9" stroke-width="1.23" fill="none" stroke-linecap="round"/><path d="M859.3,446.0 L857.4,447.5 L848.8,447.4 L844.3,446.9 L845.7,445.1 L848.2,444.2 L855.7,444.7ZM860.4,445.2 L859.1,446.8 L857.6,446.3 L857.8,444.2 L859.2,444.1Z" fill="#a9a9a9"/><path d="" fill="#6e6e6e"/><path d="M853.6,445.3 L852.6,445.8 L848.1,445.5 L848.6,444.8 L852.6,444.6Z" fill="#dadada"/><path d="M845.8,446.8 L855.3,445.8M851.3,439.9 l-1.8,1.7M854.2,439.9 l0.5,1.2" stroke="#3c3c3c" stroke-width="0.74" fill="none"/><circle cx="837.4" cy="403.5" r="5.5" fill="none" stroke="#d03030" stroke-width="1.2" stroke-dasharray="2 1.6"/><circle cx="837.4" cy="403.5" r="5.5" fill="none" stroke="#eee" stroke-width="1.2" stroke-dasharray="1.6 2" stroke-dashoffset="2"/><line x1="837.4" y1="409" x2="837.4" y2="415" stroke="#111" stroke-width="1"/><circle cx="850" cy="396" r="1" fill="#e8892e"/></svg></div><div class="a" style="left:1117px;top:31px;width:12px;height:624px;background:#1d1d1d"></div><div class="a" style="left:1px;top:31px;width:450px;height:31px;background:rgba(51,51,51,0.55);border-radius:0px;border-radius:4px 4px 0 0"></div><div class="a" style="left:1px;top:46px;width:450px;height:16px;background:rgba(40,40,40,0.0);border-radius:0px;"></div><div class="a" style="left:6px;top:33px;width:18px;height:11px;background:#282828;border-radius:3px;"></div><svg class="a" style="left:8px;top:33px" width="12" height="11" viewBox="0 0 12 11"><circle cx="8" cy="3.5" r="2.8" fill="#e6e6e6"/><path d="M1,7 L11,7 M1,10 L11,10 M3,6 L3,11 M9,6 L9,11" stroke="#d6d6d6" stroke-width="1"/><path d="M2,6 L5,3" stroke="#bbb" stroke-width="0.8"/></svg><svg class="a" style="left:18px;top:37px" width="6" height="4" viewBox="0 0 6 4"><path d="M0.5,0.5 L3,3 L5.5,0.5" fill="none" stroke="#cfcfcf" stroke-width="1"/></svg><div class="a" style="left:28.5px;top:33px;width:64px;height:11px;background:#282828;border-radius:3px;"></div><svg class="a" style="left:30px;top:34px" width="10" height="10" viewBox="0 0 10 10"><path d="M1,3 L1,1 L3,1 M7,1 L9,1 L9,3 M9,7 L9,9 L7,9 M3,9 L1,9 L1,7" fill="none" stroke="#aaa" stroke-width="0.8"/><rect x="2.5" y="2.5" width="5" height="5" fill="#eee"/></svg><div class="t" style="left:43px;top:32.0px;font-size:8px;color:#d8d8d8;letter-spacing:-0.35px;">Object Mode</div><svg class="a" style="left:86px;top:37px" width="6" height="4" viewBox="0 0 6 4"><path d="M0.5,0.5 L3,3 L5.5,0.5" fill="none" stroke="#cfcfcf" stroke-width="1"/></svg><div class="t" style="left:101px;top:32.0px;font-size:8px;color:#d8d8d8;letter-spacing:-0.35px;">View</div><div class="t" style="left:125.5px;top:32.0px;font-size:8px;color:#d8d8d8;letter-spacing:-0.35px;">Select</div><div class="t" style="left:155px;top:32.0px;font-size:8px;color:#d8d8d8;letter-spacing:-0.35px;">Add</div><div class="t" style="left:177.5px;top:32.0px;font-size:8px;color:#d8d8d8;letter-spacing:-0.35px;">Object</div><div class="a" style="left:213px;top:33px;width:47px;height:11px;background:#282828;border-radius:3px;"></div><svg class="a" style="left:215px;top:34px" width="12" height="10" viewBox="0 0 12 10"><circle cx="2" cy="5" r="1.3" fill="#ddd"/><path d="M3,5 L10,1.5 M3,5 L10,8.5 M3,5 L7,5" stroke="#ddd" stroke-width="0.9"/></svg><div class="t" style="left:229px;top:32.0px;font-size:8px;color:#d8d8d8;letter-spacing:-0.35px;">Local</div><svg class="a" style="left:254px;top:37px" width="6" height="4" viewBox="0 0 6 4"><path d="M0.5,0.5 L3,3 L5.5,0.5" fill="none" stroke="#cfcfcf" stroke-width="1"/></svg><div class="a" style="left:264.5px;top:33px;width:18px;height:11px;background:#282828;border-radius:3px;"></div><svg class="a" style="left:266px;top:34px" width="10" height="10" viewBox="0 0 10 10"><rect x="1" y="1" width="8" height="8" fill="none" stroke="#ccc" stroke-width="0.8" stroke-dasharray="2 2"/><circle cx="5" cy="5" r="1.5" fill="#eee"/></svg><svg class="a" style="left:276px;top:37px" width="6" height="4" viewBox="0 0 6 4"><path d="M0.5,0.5 L3,3 L5.5,0.5" fill="none" stroke="#cfcfcf" stroke-width="1"/></svg><div class="a" style="left:286px;top:33px;width:30.5px;height:11px;background:#282828;border-radius:3px;"></div><div class="a" style="left:286px;top:33px;width:12px;height:11px;background:#545454;border-radius:3px;"></div><svg class="a" style="left:287px;top:34px" width="10" height="10" viewBox="0 0 10 10"><path d="M2,8 L2,5 A3,3 0 0 1 8,5 L8,8" fill="none" stroke="#aaa" stroke-width="1.6"/></svg><svg class="a" style="left:299px;top:34px" width="11" height="10" viewBox="0 0 11 10"><path d="M1,3 L1,9 M10,3 L10,9 M2,6 L9,6" stroke="#ccc" stroke-width="0.8"/><rect x="7" y="0.5" width="3" height="3" fill="#eee"/></svg><svg class="a" style="left:310px;top:37px" width="6" height="4" viewBox="0 0 6 4"><path d="M0.5,0.5 L3,3 L5.5,0.5" fill="none" stroke="#cfcfcf" stroke-width="1"/></svg><div class="a" style="left:320px;top:33px;width:30.5px;height:11px;background:#282828;border-radius:3px;"></div><div class="a" style="left:320px;top:33px;width:12px;height:11px;background:#545454;border-radius:3px;"></div><svg class="a" style="left:321px;top:34px" width="10" height="10" viewBox="0 0 10 10"><circle cx="5" cy="5" r="3.5" fill="none" stroke="#999" stroke-width="0.8"/><circle cx="5" cy="5" r="1.5" fill="#ddd"/></svg><svg class="a" style="left:333px;top:34px" width="11" height="10" viewBox="0 0 11 10"><path d="M1,9 Q4,9 5.5,1 Q7,9 10,9" fill="none" stroke="#bbb" stroke-width="0.9"/></svg><svg class="a" style="left:344px;top:37px" width="6" height="4" viewBox="0 0 6 4"><path d="M0.5,0.5 L3,3 L5.5,0.5" fill="none" stroke="#666" stroke-width="1"/></svg><div class="a" style="left:361px;top:33px;width:18px;height:11px;background:#282828;border-radius:3px;"></div><svg class="a" style="left:363px;top:34px" width="11" height="10" viewBox="0 0 11 10"><path d="M1,4 Q5,0 9,4 Q5,8 1,4 Z" fill="none" stroke="#ddd" stroke-width="0.9"/><path d="M2,5 L5,10 L6,6 Z" fill="#eee"/></svg><svg class="a" style="left:373px;top:37px" width="6" height="4" viewBox="0 0 6 4"><path d="M0.5,0.5 L3,3 L5.5,0.5" fill="none" stroke="#cfcfcf" stroke-width="1"/></svg><div class="a" style="left:383px;top:33px;width:23px;height:11px;background:#282828;border-radius:3px;"></div><div class="a" style="left:383px;top:33px;width:12px;height:11px;background:#4772b3;border-radius:3px;"></div><svg class="a" style="left:384px;top:34px" width="10" height="10" viewBox="0 0 10 10"><path d="M1,9 Q2,3 9,1 M9,1 L6,1.5 M9,1 L8.5,4 M1,5 L5,9" fill="none" stroke="#fff" stroke-width="1"/></svg><svg class="a" style="left:397px;top:37px" width="6" height="4" viewBox="0 0 6 4"><path d="M0.5,0.5 L3,3 L5.5,0.5" fill="none" stroke="#cfcfcf" stroke-width="1"/></svg><div class="a" style="left:410px;top:33px;width:23px;height:11px;background:#282828;border-radius:3px;"></div><div class="a" style="left:410px;top:33px;width:12px;height:11px;background:#545454;border-radius:3px;"></div><svg class="a" style="left:411px;top:34px" width="10" height="10" viewBox="0 0 10 10"><circle cx="6" cy="4.5" r="3.5" fill="#ddd"/><circle cx="4" cy="6" r="3.5" fill="none" stroke="#aaa" stroke-width="1"/></svg><svg class="a" style="left:424px;top:37px" width="6" height="4" viewBox="0 0 6 4"><path d="M0.5,0.5 L3,3 L5.5,0.5" fill="none" stroke="#666" stroke-width="1"/></svg><div class="a" style="left:437px;top:33px;width:11.5px;height:11px;background:#3a3a3a;border-radius:3px;"></div><svg class="a" style="left:438px;top:34px" width="10" height="10" viewBox="0 0 10 10"><rect x="1" y="3" width="6" height="6" fill="none" stroke="#ccc" stroke-width="0.9"/><rect x="3" y="1" width="6" height="6" fill="none" stroke="#ccc" stroke-width="0.9"/></svg><div class="a" style="left:26px;top:48.5px;width:59px;height:11px;background:#3a3a3a;border-radius:2px;"></div><div class="a" style="left:26px;top:48.5px;width:12px;height:11px;background:#4772b3;border-radius:2px;"></div><svg class="a" style="left:27px;top:49.5px" width="10" height="9" viewBox="0 0 10 9"><rect x="0.5" y="0.5" width="9" height="8" fill="none" stroke="#fff" stroke-width="0.9" stroke-dasharray="1.5 1.2"/></svg><svg class="a" style="left:39px;top:49.5px" width="10" height="9" viewBox="0 0 10 9"><path d="M0,9 L0,4 L4,4 L4,0 L10,0 L10,5 L6,5 L6,9 Z" fill="#c9c9c9"/></svg><svg class="a" style="left:51px;top:49.5px" width="10" height="9" viewBox="0 0 10 9"><path d="M4,0 L10,0 L10,5 L4,5 Z" fill="#c9c9c9"/><path d="M0,4 L0,9 L6,9" fill="none" stroke="#aaa" stroke-width="0.8" stroke-dasharray="1 1"/></svg><svg class="a" style="left:63px;top:49.5px" width="10" height="9" viewBox="0 0 10 9"><path d="M0,4 L0,9 L6,9 L6,5 L10,5 L10,0 L4,0 L4,4 Z" fill="#c9c9c9"/><rect x="3" y="3" width="4" height="3" fill="#3a3a3a"/></svg><svg class="a" style="left:75px;top:49.5px" width="10" height="9" viewBox="0 0 10 9"><rect x="0.5" y="0.5" width="9" height="8" fill="none" stroke="#999" stroke-width="0.8" stroke-dasharray="1 1.5"/><rect x="3" y="2.5" width="4" height="4" fill="#c9c9c9"/></svg><div class="a" style="left:406.5px;top:49px;width:39px;height:10.5px;background:#262626;border-radius:3px;"></div><div class="t" style="left:410px;top:47.5px;font-size:8px;color:#d8d8d8;letter-spacing:-0.35px;">Options</div><svg class="a" style="left:438px;top:52.5px" width="6" height="4" viewBox="0 0 6 4"><path d="M0.5,0.5 L3,3 L5.5,0.5" fill="none" stroke="#cfcfcf" stroke-width="1"/></svg><div class="a" style="left:5px;top:67px;width:24px;height:41px;background:#282828;border-radius:3px;border:1px solid #2f2f2f"></div><div class="a" style="left:5px;top:112px;width:24px;height:82.5px;background:#282828;border-radius:3px;border:1px solid #2f2f2f"></div><div class="a" style="left:5px;top:198.5px;width:24px;height:40.5px;background:#282828;border-radius:3px;border:1px solid #2f2f2f"></div><div class="a" style="left:5px;top:242.5px;width:24px;height:20.5px;background:#282828;border-radius:3px;border:1px solid #2f2f2f"></div><div class="a" style="left:5px;top:67px;width:24px;height:20px;background:#4772b3;border-radius:3px;"></div><svg class="a" style="left:10px;top:70px" width="14" height="14" viewBox="0 0 14 14"><rect x="1" y="1" width="12" height="12" fill="none" stroke="#e8a33a" stroke-width="1" stroke-dasharray="2 1.5"/><path d="M5,3.5 L10,7 L7,7.5 L5.5,10.5 Z" fill="#fff"/></svg><svg class="a" style="left:9px;top:90px" width="16" height="16" viewBox="0 0 16 16"><circle cx="8" cy="8" r="6" fill="none" stroke="#e0e0e0" stroke-width="1.1" stroke-dasharray="3 2"/><circle cx="8" cy="8" r="6" fill="none" stroke="#c33" stroke-width="1.1" stroke-dasharray="2 3" stroke-dashoffset="2.5"/><path d="M8,4 L8,12 M4,8 L12,8" stroke="#ddd" stroke-width="0.8"/></svg><svg class="a" style="left:9px;top:114px" width="16" height="16" viewBox="0 0 16 16"><path d="M8,1.5 L8,14.5 M1.5,8 L14.5,8" stroke="#ddd" stroke-width="1"/><path d="M8,1 L6,3.5 L10,3.5 Z M8,15 L6,12.5 L10,12.5 Z M1,8 L3.5,6 L3.5,10 Z M15,8 L12.5,6 L12.5,10 Z" fill="#ddd"/></svg><svg class="a" style="left:9px;top:135px" width="16" height="16" viewBox="0 0 16 16"><path d="M3,6 A5.5,5.5 0 0 1 13,6 M13,10 A5.5,5.5 0 0 1 3,10" fill="none" stroke="#ddd" stroke-width="1"/><circle cx="8" cy="8" r="1.8" fill="#ddd"/><path d="M13,3.5 L13,7 L10,6 Z M3,12.5 L3,9 L6,10 Z" fill="#ddd"/></svg><svg class="a" style="left:9px;top:156px" width="16" height="16" viewBox="0 0 16 16"><rect x="2" y="8" width="6" height="6" fill="#eee"/><path d="M5,11 L5,2 L14,2 L14,11 L8,11" fill="none" stroke="#ddd" stroke-width="1"/><path d="M9,7 L13,3" stroke="#ddd" stroke-width="1"/></svg><svg class="a" style="left:9px;top:176px" width="16" height="16" viewBox="0 0 16 16"><circle cx="8" cy="8" r="6" fill="none" stroke="#ddd" stroke-width="1" stroke-dasharray="2.5 1.5"/><rect x="5" y="5" width="6" height="6" fill="#eee"/></svg><svg class="a" style="left:9px;top:200px" width="16" height="16" viewBox="0 0 16 16"><path d="M3,11 L11,3 L13,5 L5,13 L2,14 Z" fill="none" stroke="#e8e8e8" stroke-width="1.1"/><path d="M2,15 Q6,10 9,13 T15,12" fill="none" stroke="#6cc28f" stroke-width="1"/></svg><svg class="a" style="left:9px;top:221px" width="16" height="16" viewBox="0 0 16 16"><path d="M3,1 L3,14 L15,14" fill="none" stroke="#e8e8e8" stroke-width="1.5"/><path d="M4,13 L4,6 A7,7 0 0 1 11,13 Z" fill="#6cc28f"/></svg><svg class="a" style="left:8px;top:244px" width="18" height="18" viewBox="0 0 18 18"><path d="M5,7 L10,4 L16,6 L16,13 L11,16 L5,14 Z M5,7 L11,9 L16,6 M11,9 L11,16" fill="none" stroke="#6cc28f" stroke-width="1"/><path d="M3,1 L3,6 M0.5,3.5 L5.5,3.5" stroke="#6cc28f" stroke-width="1"/></svg><svg class="a" style="left:25px;top:83px" width="3" height="3" viewBox="0 0 3 3"><path d="M3,0 L3,3 L0,3 Z" fill="#aaa"/></svg><svg class="a" style="left:25px;top:170px" width="3" height="3" viewBox="0 0 3 3"><path d="M3,0 L3,3 L0,3 Z" fill="#aaa"/></svg><svg class="a" style="left:25px;top:235px" width="3" height="3" viewBox="0 0 3 3"><path d="M3,0 L3,3 L0,3 Z" fill="#aaa"/></svg><svg class="a" style="left:25px;top:258px" width="3" height="3" viewBox="0 0 3 3"><path d="M3,0 L3,3 L0,3 Z" fill="#aaa"/></svg><svg class="a" style="left:393px;top:62px" width="54" height="56" viewBox="0 0 54 56"><line x1="26.5" y1="30.8" x2="26.5" y2="10.7" stroke="#3b7ad8" stroke-width="1.2"/><line x1="26.5" y1="30.8" x2="46.6" y2="30.8" stroke="#d33a4a" stroke-width="1.2"/><circle cx="6.8" cy="30.8" r="5.3" fill="#7c3440" stroke="#b8384a" stroke-width="1"/><circle cx="26.5" cy="50.5" r="5.3" fill="#34527a" stroke="#3f78c8" stroke-width="1"/><circle cx="26.5" cy="30.8" r="5.5" fill="#556b2c" stroke="#86b82e" stroke-width="1.1"/><circle cx="46.6" cy="30.8" r="5.5" fill="#e23a52"/><text x="46.6" y="33.6" font-size="8" text-anchor="middle" fill="#222" font-family="Liberation Sans" font-weight="bold">X</text><circle cx="26.5" cy="10.7" r="5.5" fill="#2f7ce0"/><text x="26.5" y="13.5" font-size="8" text-anchor="middle" fill="#1a1a1a" font-family="Liberation Sans" font-weight="bold">Z</text></svg><div class="a" style="left:427.5px;top:117.5px;width:19px;height:19px;border-radius:50%;background:rgba(20,20,20,0.55)"></div><svg class="a" style="left:429px;top:119px" width="16" height="16" viewBox="0 0 16 16"><circle cx="8.5" cy="6" r="3.5" fill="none" stroke="#eee" stroke-width="1.2"/><path d="M6,8.5 L2.5,12" stroke="#eee" stroke-width="1.5"/><path d="M8.5,4 L8.5,8 M6.5,6 L10.5,6" stroke="#eee" stroke-width="0.9"/></svg><div class="a" style="left:427.5px;top:136.2px;width:19px;height:19px;border-radius:50%;background:rgba(20,20,20,0.55)"></div><svg class="a" style="left:429px;top:137.7px" width="16" height="16" viewBox="0 0 16 16"><path d="M4,13 Q2,10 3,8 L4,5 L5,9 L5,3.5 L6.5,3.5 L7,8 L7.5,2.5 L9,2.5 L9,8 L10,3.5 L11.3,3.5 L11,9 L12.5,7 L13,8 Q11,12 10,13 Z" fill="#eee"/></svg><div class="a" style="left:427.5px;top:155.0px;width:19px;height:19px;border-radius:50%;background:rgba(20,20,20,0.55)"></div><svg class="a" style="left:429px;top:156.5px" width="16" height="16" viewBox="0 0 16 16"><circle cx="6" cy="5" r="2.3" fill="#eee"/><circle cx="10" cy="4.5" r="2.3" fill="#eee"/><rect x="3.5" y="7.5" width="8" height="5" fill="#eee"/><path d="M11.5,10 L14,8 L14,12.5 Z" fill="#eee"/></svg><div class="a" style="left:452px;top:31px;width:665px;height:31px;background:rgba(51,51,51,0.55);border-radius:0px;border-radius:4px 0 0 0"></div><div class="a" style="left:457.5px;top:33px;width:18px;height:11px;background:#282828;border-radius:3px;"></div><svg class="a" style="left:459.5px;top:33px" width="12" height="11" viewBox="0 0 12 11"><circle cx="8" cy="3.5" r="2.8" fill="#e6e6e6"/><path d="M1,7 L11,7 M1,10 L11,10 M3,6 L3,11 M9,6 L9,11" stroke="#d6d6d6" stroke-width="1"/><path d="M2,6 L5,3" stroke="#bbb" stroke-width="0.8"/></svg><svg class="a" style="left:469px;top:37px" width="6" height="4" viewBox="0 0 6 4"><path d="M0.5,0.5 L3,3 L5.5,0.5" fill="none" stroke="#cfcfcf" stroke-width="1"/></svg><div class="a" style="left:479.5px;top:33px;width:65px;height:11px;background:#282828;border-radius:3px;"></div><svg class="a" style="left:481.5px;top:34px" width="10" height="10" viewBox="0 0 10 10"><path d="M1,3 L1,1 L3,1 M7,1 L9,1 L9,3 M9,7 L9,9 L7,9 M3,9 L1,9 L1,7" fill="none" stroke="#aaa" stroke-width="0.8"/><rect x="2.5" y="2.5" width="5" height="5" fill="#eee"/></svg><div class="t" style="left:494.5px;top:32.0px;font-size:8px;color:#d8d8d8;letter-spacing:-0.35px;">Object Mode</div><svg class="a" style="left:537.5px;top:37px" width="6" height="4" viewBox="0 0 6 4"><path d="M0.5,0.5 L3,3 L5.5,0.5" fill="none" stroke="#cfcfcf" stroke-width="1"/></svg><div class="t" style="left:552.5px;top:32.0px;font-size:8px;color:#d8d8d8;letter-spacing:-0.35px;">View</div><div class="t" style="left:577px;top:32.0px;font-size:8px;color:#d8d8d8;letter-spacing:-0.35px;">Select</div><div class="t" style="left:606.5px;top:32.0px;font-size:8px;color:#d8d8d8;letter-spacing:-0.35px;">Add</div><div class="t" style="left:629px;top:32.0px;font-size:8px;color:#d8d8d8;letter-spacing:-0.35px;">Object</div><div class="a" style="left:715px;top:33px;width:47px;height:11px;background:#282828;border-radius:3px;"></div><svg class="a" style="left:717px;top:34px" width="12" height="10" viewBox="0 0 12 10"><circle cx="2" cy="5" r="1.3" fill="#ddd"/><path d="M3,5 L10,1.5 M3,5 L10,8.5 M3,5 L7,5" stroke="#ddd" stroke-width="0.9"/></svg><div class="t" style="left:731px;top:32.0px;font-size:8px;color:#d8d8d8;letter-spacing:-0.35px;">Local</div><svg class="a" style="left:756px;top:37px" width="6" height="4" viewBox="0 0 6 4"><path d="M0.5,0.5 L3,3 L5.5,0.5" fill="none" stroke="#cfcfcf" stroke-width="1"/></svg><div class="a" style="left:767px;top:33px;width:18px;height:11px;background:#282828;border-radius:3px;"></div><svg class="a" style="left:768.5px;top:34px" width="10" height="10" viewBox="0 0 10 10"><rect x="1" y="1" width="8" height="8" fill="none" stroke="#ccc" stroke-width="0.8" stroke-dasharray="2 2"/><circle cx="5" cy="5" r="1.5" fill="#eee"/></svg><svg class="a" style="left:778.5px;top:37px" width="6" height="4" viewBox="0 0 6 4"><path d="M0.5,0.5 L3,3 L5.5,0.5" fill="none" stroke="#cfcfcf" stroke-width="1"/></svg><div class="a" style="left:790px;top:33px;width:29px;height:11px;background:#282828;border-radius:3px;"></div><div class="a" style="left:790px;top:33px;width:12px;height:11px;background:#545454;border-radius:3px;"></div><svg class="a" style="left:791px;top:34px" width="10" height="10" viewBox="0 0 10 10"><path d="M2,8 L2,5 A3,3 0 0 1 8,5 L8,8" fill="none" stroke="#aaa" stroke-width="1.6"/></svg><svg class="a" style="left:803px;top:34px" width="11" height="10" viewBox="0 0 11 10"><path d="M1,3 L1,9 M10,3 L10,9 M2,6 L9,6" stroke="#ccc" stroke-width="0.8"/><rect x="7" y="0.5" width="3" height="3" fill="#eee"/></svg><svg class="a" style="left:813px;top:37px" width="6" height="4" viewBox="0 0 6 4"><path d="M0.5,0.5 L3,3 L5.5,0.5" fill="none" stroke="#cfcfcf" stroke-width="1"/></svg><div class="a" style="left:822px;top:33px;width:30.5px;height:11px;background:#282828;border-radius:3px;"></div><div class="a" style="left:822px;top:33px;width:12px;height:11px;background:#545454;border-radius:3px;"></div><svg class="a" style="left:823px;top:34px" width="10" height="10" viewBox="0 0 10 10"><circle cx="5" cy="5" r="3.5" fill="none" stroke="#999" stroke-width="0.8"/><circle cx="5" cy="5" r="1.5" fill="#ddd"/></svg><svg class="a" style="left:835px;top:34px" width="11" height="10" viewBox="0 0 11 10"><path d="M1,9 Q4,9 5.5,1 Q7,9 10,9" fill="none" stroke="#bbb" stroke-width="0.9"/></svg><svg class="a" style="left:846px;top:37px" width="6" height="4" viewBox="0 0 6 4"><path d="M0.5,0.5 L3,3 L5.5,0.5" fill="none" stroke="#666" stroke-width="1"/></svg><div class="a" style="left:974px;top:33px;width:18.5px;height:11px;background:#282828;border-radius:3px;"></div><svg class="a" style="left:976px;top:34px" width="11" height="10" viewBox="0 0 11 10"><path d="M1,4 Q5,0 9,4 Q5,8 1,4 Z" fill="none" stroke="#ddd" stroke-width="0.9"/><path d="M2,5 L5,10 L6,6 Z" fill="#eee"/></svg><svg class="a" style="left:986px;top:37px" width="6" height="4" viewBox="0 0 6 4"><path d="M0.5,0.5 L3,3 L5.5,0.5" fill="none" stroke="#cfcfcf" stroke-width="1"/></svg><div class="a" style="left:996px;top:33px;width:26px;height:11px;background:#282828;border-radius:3px;"></div><div class="a" style="left:996px;top:33px;width:12.5px;height:11px;background:#4772b3;border-radius:3px;"></div><svg class="a" style="left:997px;top:34px" width="10" height="10" viewBox="0 0 10 10"><path d="M1,9 Q2,3 9,1 M9,1 L6,1.5 M9,1 L8.5,4 M1,5 L5,9" fill="none" stroke="#fff" stroke-width="1"/></svg><svg class="a" style="left:1012px;top:37px" width="6" height="4" viewBox="0 0 6 4"><path d="M0.5,0.5 L3,3 L5.5,0.5" fill="none" stroke="#cfcfcf" stroke-width="1"/></svg><div class="a" style="left:1023.5px;top:33px;width:25.5px;height:11px;background:#282828;border-radius:3px;"></div><div class="a" style="left:1023.5px;top:33px;width:12.5px;height:11px;background:#4772b3;border-radius:3px;"></div><svg class="a" style="left:1024.5px;top:34px" width="10" height="10" viewBox="0 0 10 10"><circle cx="6" cy="4.5" r="3.5" fill="#ddd"/><circle cx="4" cy="6" r="3.5" fill="none" stroke="#eee" stroke-width="1"/></svg><svg class="a" style="left:1039px;top:37px" width="6" height="4" viewBox="0 0 6 4"><path d="M0.5,0.5 L3,3 L5.5,0.5" fill="none" stroke="#cfcfcf" stroke-width="1"/></svg><div class="a" style="left:1050px;top:33px;width:12px;height:11px;background:#3a3a3a;border-radius:3px;"></div><svg class="a" style="left:1051px;top:34px" width="10" height="10" viewBox="0 0 10 10"><rect x="1" y="3" width="6" height="6" fill="none" stroke="#ccc" stroke-width="0.9"/><rect x="3" y="1" width="6" height="6" fill="none" stroke="#ccc" stroke-width="0.9"/></svg><div class="a" style="left:1064.5px;top:33px;width:48.5px;height:11px;background:#3a3a3a;border-radius:3px;"></div><svg class="a" style="left:1066px;top:34px" width="10" height="10" viewBox="0 0 10 10"><circle cx="5" cy="5" r="4" fill="none" stroke="#ccc" stroke-width="0.8"/><ellipse cx="5" cy="5" rx="2" ry="4" fill="none" stroke="#ccc" stroke-width="0.7"/><path d="M1,5 L9,5" stroke="#ccc" stroke-width="0.7"/></svg><div class="a" style="left:1077px;top:33px;width:12px;height:11px;background:#4772b3;border-radius:0px;"></div><svg class="a" style="left:1078px;top:34px" width="10" height="10" viewBox="0 0 10 10"><circle cx="5" cy="5" r="4.2" fill="#f2f2f2"/></svg><svg class="a" style="left:1090px;top:34px" width="10" height="10" viewBox="0 0 10 10"><circle cx="5" cy="5" r="4" fill="#ccc"/><path d="M5,1 A4,4 0 0 0 5,9 Z" fill="#555"/></svg><svg class="a" style="left:1102px;top:34px" width="10" height="10" viewBox="0 0 10 10"><circle cx="5" cy="5" r="4" fill="#bbb"/><path d="M2,8 L8,2" stroke="#444" stroke-width="1.4"/></svg><div class="a" style="left:1113px;top:33px;width:10.5px;height:11px;background:#282828;border-radius:3px;"></div><svg class="a" style="left:1115px;top:37px" width="6" height="4" viewBox="0 0 6 4"><path d="M0.5,0.5 L3,3 L5.5,0.5" fill="none" stroke="#cfcfcf" stroke-width="1"/></svg><div class="a" style="left:477px;top:48.5px;width:59px;height:11px;background:#3a3a3a;border-radius:2px;"></div><div class="a" style="left:477px;top:48.5px;width:12px;height:11px;background:#4772b3;border-radius:2px;"></div><svg class="a" style="left:478px;top:49.5px" width="10" height="9" viewBox="0 0 10 9"><rect x="0.5" y="0.5" width="9" height="8" fill="none" stroke="#fff" stroke-width="0.9" stroke-dasharray="1.5 1.2"/></svg><svg class="a" style="left:490px;top:49.5px" width="10" height="9" viewBox="0 0 10 9"><path d="M0,9 L0,4 L4,4 L4,0 L10,0 L10,5 L6,5 L6,9 Z" fill="#c9c9c9"/></svg><svg class="a" style="left:502px;top:49.5px" width="10" height="9" viewBox="0 0 10 9"><path d="M4,0 L10,0 L10,5 L4,5 Z" fill="#c9c9c9"/><path d="M0,4 L0,9 L6,9" fill="none" stroke="#aaa" stroke-width="0.8" stroke-dasharray="1 1"/></svg><svg class="a" style="left:514px;top:49.5px" width="10" height="9" viewBox="0 0 10 9"><path d="M0,4 L0,9 L6,9 L6,5 L10,5 L10,0 L4,0 L4,4 Z" fill="#c9c9c9"/><rect x="3" y="3" width="4" height="3" fill="#3a3a3a"/></svg><svg class="a" style="left:526px;top:49.5px" width="10" height="9" viewBox="0 0 10 9"><rect x="0.5" y="0.5" width="9" height="8" fill="none" stroke="#999" stroke-width="0.8" stroke-dasharray="1 1.5"/><rect x="3" y="2.5" width="4" height="4" fill="#c9c9c9"/></svg><div class="a" style="left:1084px;top:49px;width:39.5px;height:10.5px;background:#262626;border-radius:3px;"></div><div class="t" style="left:1088px;top:47.5px;font-size:8px;color:#d8d8d8;letter-spacing:-0.35px;">Options</div><svg class="a" style="left:1115.5px;top:52.5px" width="6" height="4" viewBox="0 0 6 4"><path d="M0.5,0.5 L3,3 L5.5,0.5" fill="none" stroke="#cfcfcf" stroke-width="1"/></svg><div class="a" style="left:446px;top:70px;width:6px;height:14px;background:#262626;border-radius:2px;"></div><svg class="a" style="left:447px;top:74px" width="5" height="7" viewBox="0 0 5 7"><path d="M3.5,0.8 L1,3.5 L3.5,6.2" fill="none" stroke="#bbb" stroke-width="0.9"/></svg><div class="t" style="left:492px;top:65.5px;font-size:8px;color:#e8e8e8;letter-spacing:-0.35px;">User Perspective</div><div class="t" style="left:492px;top:76.5px;font-size:8px;color:#e8e8e8;letter-spacing:-0.35px;">(1) Scene Collection | Bip001.075</div><div class="a" style="left:457px;top:67px;width:24px;height:41px;background:#282828;border-radius:3px;border:1px solid #2f2f2f"></div><div class="a" style="left:457px;top:112px;width:24px;height:82.5px;background:#282828;border-radius:3px;border:1px solid #2f2f2f"></div><div class="a" style="left:457px;top:198.5px;width:24px;height:40.5px;background:#282828;border-radius:3px;border:1px solid #2f2f2f"></div><div class="a" style="left:457px;top:242.5px;width:24px;height:20.5px;background:#282828;border-radius:3px;border:1px solid #2f2f2f"></div><div class="a" style="left:457px;top:67px;width:24px;height:20px;background:#4772b3;border-radius:3px;"></div><svg class="a" style="left:462px;top:70px" width="14" height="14" viewBox="0 0 14 14"><rect x="1" y="1" width="12" height="12" fill="none" stroke="#e8a33a" stroke-width="1" stroke-dasharray="2 1.5"/><path d="M5,3.5 L10,7 L7,7.5 L5.5,10.5 Z" fill="#fff"/></svg><svg class="a" style="left:461px;top:90px" width="16" height="16" viewBox="0 0 16 16"><circle cx="8" cy="8" r="6" fill="none" stroke="#e0e0e0" stroke-width="1.1" stroke-dasharray="3 2"/><circle cx="8" cy="8" r="6" fill="none" stroke="#c33" stroke-width="1.1" stroke-dasharray="2 3" stroke-dashoffset="2.5"/><path d="M8,4 L8,12 M4,8 L12,8" stroke="#ddd" stroke-width="0.8"/></svg><svg class="a" style="left:461px;top:114px" width="16" height="16" viewBox="0 0 16 16"><path d="M8,1.5 L8,14.5 M1.5,8 L14.5,8" stroke="#ddd" stroke-width="1"/><path d="M8,1 L6,3.5 L10,3.5 Z M8,15 L6,12.5 L10,12.5 Z M1,8 L3.5,6 L3.5,10 Z M15,8 L12.5,6 L12.5,10 Z" fill="#ddd"/></svg><svg class="a" style="left:461px;top:135px" width="16" height="16" viewBox="0 0 16 16"><path d="M3,6 A5.5,5.5 0 0 1 13,6 M13,10 A5.5,5.5 0 0 1 3,10" fill="none" stroke="#ddd" stroke-width="1"/><circle cx="8" cy="8" r="1.8" fill="#ddd"/><path d="M13,3.5 L13,7 L10,6 Z M3,12.5 L3,9 L6,10 Z" fill="#ddd"/></svg><svg class="a" style="left:461px;top:156px" width="16" height="16" viewBox="0 0 16 16"><rect x="2" y="8" width="6" height="6" fill="#eee"/><path d="M5,11 L5,2 L14,2 L14,11 L8,11" fill="none" stroke="#ddd" stroke-width="1"/><path d="M9,7 L13,3" stroke="#ddd" stroke-width="1"/></svg><svg class="a" style="left:461px;top:176px" width="16" height="16" viewBox="0 0 16 16"><circle cx="8" cy="8" r="6" fill="none" stroke="#ddd" stroke-width="1" stroke-dasharray="2.5 1.5"/><rect x="5" y="5" width="6" height="6" fill="#eee"/></svg><svg class="a" style="left:461px;top:200px" width="16" height="16" viewBox="0 0 16 16"><path d="M3,11 L11,3 L13,5 L5,13 L2,14 Z" fill="none" stroke="#e8e8e8" stroke-width="1.1"/><path d="M2,15 Q6,10 9,13 T15,12" fill="none" stroke="#6cc28f" stroke-width="1"/></svg><svg class="a" style="left:461px;top:221px" width="16" height="16" viewBox="0 0 16 16"><path d="M3,1 L3,14 L15,14" fill="none" stroke="#e8e8e8" stroke-width="1.5"/><path d="M4,13 L4,6 A7,7 0 0 1 11,13 Z" fill="#6cc28f"/></svg><svg class="a" style="left:460px;top:244px" width="18" height="18" viewBox="0 0 18 18"><path d="M5,7 L10,4 L16,6 L16,13 L11,16 L5,14 Z M5,7 L11,9 L16,6 M11,9 L11,16" fill="none" stroke="#6cc28f" stroke-width="1"/><path d="M3,1 L3,6 M0.5,3.5 L5.5,3.5" stroke="#6cc28f" stroke-width="1"/></svg><svg class="a" style="left:477px;top:83px" width="3" height="3" viewBox="0 0 3 3"><path d="M3,0 L3,3 L0,3 Z" fill="#aaa"/></svg><svg class="a" style="left:477px;top:170px" width="3" height="3" viewBox="0 0 3 3"><path d="M3,0 L3,3 L0,3 Z" fill="#aaa"/></svg><svg class="a" style="left:477px;top:235px" width="3" height="3" viewBox="0 0 3 3"><path d="M3,0 L3,3 L0,3 Z" fill="#aaa"/></svg><svg class="a" style="left:477px;top:258px" width="3" height="3" viewBox="0 0 3 3"><path d="M3,0 L3,3 L0,3 Z" fill="#aaa"/></svg><svg class="a" style="left:934px;top:62px" width="54" height="56" viewBox="0 0 54 56"><circle cx="10.3" cy="31.5" r="5.3" fill="#556b2c" stroke="#86b82e" stroke-width="1"/><circle cx="15.6" cy="30" r="5.5" fill="none" stroke="#8a2b36" stroke-width="0.9"/><circle cx="27" cy="50.8" r="5.3" fill="#34527a" stroke="#3f78c8" stroke-width="1"/><line x1="27" y1="31" x2="27" y2="11" stroke="#3b7ad8" stroke-width="1.2"/><line x1="27" y1="31" x2="38" y2="31.5" stroke="#d33a4a" stroke-width="1.2"/><circle cx="43.9" cy="30" r="5.5" fill="#6a9c28"/><text x="44.5" y="33" font-size="8" text-anchor="middle" fill="#222" font-family="Liberation Sans" font-weight="bold">Y</text><circle cx="38.1" cy="31.7" r="5.5" fill="#e23a52"/><text x="38.1" y="34.6" font-size="8" text-anchor="middle" fill="#222" font-family="Liberation Sans" font-weight="bold">X</text><circle cx="27" cy="11" r="5.5" fill="#2f7ce0"/><text x="27" y="13.8" font-size="8" text-anchor="middle" fill="#1a1a1a" font-family="Liberation Sans" font-weight="bold">Z</text></svg><div class="a" style="left:968.5px;top:117.1px;width:19px;height:19px;border-radius:50%;background:rgba(20,20,20,0.55)"></div><svg class="a" style="left:970px;top:118.6px" width="16" height="16" viewBox="0 0 16 16"><circle cx="8.5" cy="6" r="3.5" fill="none" stroke="#eee" stroke-width="1.2"/><path d="M6,8.5 L2.5,12" stroke="#eee" stroke-width="1.5"/><path d="M8.5,4 L8.5,8 M6.5,6 L10.5,6" stroke="#eee" stroke-width="0.9"/></svg><div class="a" style="left:968.5px;top:136.1px;width:19px;height:19px;border-radius:50%;background:rgba(20,20,20,0.55)"></div><svg class="a" style="left:970px;top:137.6px" width="16" height="16" viewBox="0 0 16 16"><path d="M4,13 Q2,10 3,8 L4,5 L5,9 L5,3.5 L6.5,3.5 L7,8 L7.5,2.5 L9,2.5 L9,8 L10,3.5 L11.3,3.5 L11,9 L12.5,7 L13,8 Q11,12 10,13 Z" fill="#eee"/></svg><div class="a" style="left:968.5px;top:155.0px;width:19px;height:19px;border-radius:50%;background:rgba(20,20,20,0.55)"></div><svg class="a" style="left:970px;top:156.5px" width="16" height="16" viewBox="0 0 16 16"><circle cx="6" cy="5" r="2.3" fill="#eee"/><circle cx="10" cy="4.5" r="2.3" fill="#eee"/><rect x="3.5" y="7.5" width="8" height="5" fill="#eee"/><path d="M11.5,10 L14,8 L14,12.5 Z" fill="#eee"/></svg><div class="a" style="left:968.5px;top:174.2px;width:19px;height:19px;border-radius:50%;background:rgba(20,20,20,0.55)"></div><svg class="a" style="left:970px;top:175.7px" width="16" height="16" viewBox="0 0 16 16"><path d="M3,12 L5,5 L11,5 L13,12 Z M4,8.5 L12,8.5 M7,5 L6.5,12 M9,5 L9.5,12" fill="none" stroke="#ddd" stroke-width="0.9"/></svg><div class="a" style="left:997px;top:63px;width:115px;height:236px;background:#3d3d3d;border-radius:4px;"></div><svg class="a" style="left:1002px;top:69px" width="6" height="4" viewBox="0 0 6 4"><path d="M0.5,0.5 L3,3 L5.5,0.5" fill="none" stroke="#ccc" stroke-width="1"/></svg><div class="t" style="left:1010px;top:64.0px;font-size:8px;color:#e0e0e0;letter-spacing:-0.35px;">Transform</div><svg class="a" style="left:1100px;top:67px" width="8" height="6" viewBox="0 0 8 6"><path d="M0,1.5 L8,1.5 M0,4 L8,4" stroke="#8a8a8a" stroke-width="1" stroke-dasharray="1.2 0.9"/></svg><div class="t" style="left:1002px;top:82.0px;font-size:8px;color:#d0d0d0;letter-spacing:-0.35px;">Location:</div><div class="a" style="left:1002px;top:95px;width:79px;height:36px;background:#545454;border-radius:3px;"></div><div class="t" style="left:1012px;top:94.5px;font-size:8px;color:#e0e0e0;letter-spacing:-0.35px;">X</div><div class="t" style="left:873px;width:200px;text-align:right;top:94.5px;font-size:8px;color:#e0e0e0;letter-spacing:-0.35px;">-0.7116 m</div><div class="a" style="left:1002px;top:107px;width:79px;height:1px;background:#4a4a4a;border-radius:0px;"></div><div class="t" style="left:1012px;top:106.5px;font-size:8px;color:#e0e0e0;letter-spacing:-0.35px;">Y</div><div class="t" style="left:873px;width:200px;text-align:right;top:106.5px;font-size:8px;color:#e0e0e0;letter-spacing:-0.35px;">1.8843 m</div><div class="a" style="left:1002px;top:119px;width:79px;height:1px;background:#4a4a4a;border-radius:0px;"></div><div class="t" style="left:1012px;top:118.5px;font-size:8px;color:#e0e0e0;letter-spacing:-0.35px;">Z</div><div class="t" style="left:873px;width:200px;text-align:right;top:118.5px;font-size:8px;color:#e0e0e0;letter-spacing:-0.35px;">0 m</div><svg class="a" style="left:1091.5px;top:97px" width="10" height="8" viewBox="0 0 10 8"><path d="M1,4 L1,2.5 A2,2 0 0 1 5,2.5" fill="none" stroke="#cfcfcf" stroke-width="0.9"/><rect x="3" y="4" width="5.5" height="3.5" fill="none" stroke="#cfcfcf" stroke-width="0.9"/></svg><svg class="a" style="left:1091.5px;top:109px" width="10" height="8" viewBox="0 0 10 8"><path d="M1,4 L1,2.5 A2,2 0 0 1 5,2.5" fill="none" stroke="#cfcfcf" stroke-width="0.9"/><rect x="3" y="4" width="5.5" height="3.5" fill="none" stroke="#cfcfcf" stroke-width="0.9"/></svg><svg class="a" style="left:1091.5px;top:121px" width="10" height="8" viewBox="0 0 10 8"><path d="M1,4 L1,2.5 A2,2 0 0 1 5,2.5" fill="none" stroke="#cfcfcf" stroke-width="0.9"/><rect x="3" y="4" width="5.5" height="3.5" fill="none" stroke="#cfcfcf" stroke-width="0.9"/></svg><div class="t" style="left:1002px;top:131.0px;font-size:8px;color:#d0d0d0;letter-spacing:-0.35px;">Rotation:</div><div class="a" style="left:1002px;top:145px;width:79px;height:36px;background:#545454;border-radius:3px;"></div><div class="t" style="left:1012px;top:144.5px;font-size:8px;color:#e0e0e0;letter-spacing:-0.35px;">X</div><div class="t" style="left:873px;width:200px;text-align:right;top:144.5px;font-size:8px;color:#e0e0e0;letter-spacing:-0.35px;">0°</div><div class="a" style="left:1002px;top:157px;width:79px;height:1px;background:#4a4a4a;border-radius:0px;"></div><div class="t" style="left:1012px;top:156.5px;font-size:8px;color:#e0e0e0;letter-spacing:-0.35px;">Y</div><div class="t" style="left:873px;width:200px;text-align:right;top:156.5px;font-size:8px;color:#e0e0e0;letter-spacing:-0.35px;">0°</div><div class="a" style="left:1002px;top:169px;width:79px;height:1px;background:#4a4a4a;border-radius:0px;"></div><div class="t" style="left:1012px;top:168.5px;font-size:8px;color:#e0e0e0;letter-spacing:-0.35px;">Z</div><div class="t" style="left:873px;width:200px;text-align:right;top:168.5px;font-size:8px;color:#e0e0e0;letter-spacing:-0.35px;">268.51°</div><svg class="a" style="left:1091.5px;top:147px" width="10" height="8" viewBox="0 0 10 8"><path d="M1,4 L1,2.5 A2,2 0 0 1 5,2.5" fill="none" stroke="#cfcfcf" stroke-width="0.9"/><rect x="3" y="4" width="5.5" height="3.5" fill="none" stroke="#cfcfcf" stroke-width="0.9"/></svg><svg class="a" style="left:1091.5px;top:159px" width="10" height="8" viewBox="0 0 10 8"><path d="M1,4 L1,2.5 A2,2 0 0 1 5,2.5" fill="none" stroke="#cfcfcf" stroke-width="0.9"/><rect x="3" y="4" width="5.5" height="3.5" fill="none" stroke="#cfcfcf" stroke-width="0.9"/></svg><svg class="a" style="left:1091.5px;top:171px" width="10" height="8" viewBox="0 0 10 8"><path d="M1,4 L1,2.5 A2,2 0 0 1 5,2.5" fill="none" stroke="#cfcfcf" stroke-width="0.9"/><rect x="3" y="4" width="5.5" height="3.5" fill="none" stroke="#cfcfcf" stroke-width="0.9"/></svg><div class="a" style="left:1002px;top:182.5px;width:104px;height:11px;background:#282828;border-radius:3px;"></div><div class="t" style="left:1006px;top:181.5px;font-size:8px;color:#e0e0e0;letter-spacing:-0.35px;">XYZ Euler</div><svg class="a" style="left:1098px;top:186.5px" width="6" height="4" viewBox="0 0 6 4"><path d="M0.5,0.5 L3,3 L5.5,0.5" fill="none" stroke="#cfcfcf" stroke-width="1"/></svg><div class="t" style="left:1002px;top:194.0px;font-size:8px;color:#d0d0d0;letter-spacing:-0.35px;">Scale:</div><div class="a" style="left:1002px;top:207px;width:79px;height:36px;background:#545454;border-radius:3px;"></div><div class="t" style="left:1012px;top:206.5px;font-size:8px;color:#e0e0e0;letter-spacing:-0.35px;">X</div><div class="t" style="left:873px;width:200px;text-align:right;top:206.5px;font-size:8px;color:#e0e0e0;letter-spacing:-0.35px;">0.737</div><div class="a" style="left:1002px;top:219px;width:79px;height:1px;background:#4a4a4a;border-radius:0px;"></div><div class="t" style="left:1012px;top:218.5px;font-size:8px;color:#e0e0e0;letter-spacing:-0.35px;">Y</div><div class="t" style="left:873px;width:200px;text-align:right;top:218.5px;font-size:8px;color:#e0e0e0;letter-spacing:-0.35px;">0.737</div><div class="a" style="left:1002px;top:231px;width:79px;height:1px;background:#4a4a4a;border-radius:0px;"></div><div class="t" style="left:1012px;top:230.5px;font-size:8px;color:#e0e0e0;letter-spacing:-0.35px;">Z</div><div class="t" style="left:873px;width:200px;text-align:right;top:230.5px;font-size:8px;color:#e0e0e0;letter-spacing:-0.35px;">0.737</div><svg class="a" style="left:1091.5px;top:209px" width="10" height="8" viewBox="0 0 10 8"><path d="M1,4 L1,2.5 A2,2 0 0 1 5,2.5" fill="none" stroke="#cfcfcf" stroke-width="0.9"/><rect x="3" y="4" width="5.5" height="3.5" fill="none" stroke="#cfcfcf" stroke-width="0.9"/></svg><svg class="a" style="left:1091.5px;top:221px" width="10" height="8" viewBox="0 0 10 8"><path d="M1,4 L1,2.5 A2,2 0 0 1 5,2.5" fill="none" stroke="#cfcfcf" stroke-width="0.9"/><rect x="3" y="4" width="5.5" height="3.5" fill="none" stroke="#cfcfcf" stroke-width="0.9"/></svg><svg class="a" style="left:1091.5px;top:233px" width="10" height="8" viewBox="0 0 10 8"><path d="M1,4 L1,2.5 A2,2 0 0 1 5,2.5" fill="none" stroke="#cfcfcf" stroke-width="0.9"/><rect x="3" y="4" width="5.5" height="3.5" fill="none" stroke="#cfcfcf" stroke-width="0.9"/></svg><div class="t" style="left:1002px;top:244.0px;font-size:8px;color:#d0d0d0;letter-spacing:-0.35px;">Dimensions:</div><div class="a" style="left:1002px;top:257.5px;width:104px;height:36px;background:#545454;border-radius:3px;"></div><div class="t" style="left:1012px;top:257.0px;font-size:8px;color:#e0e0e0;letter-spacing:-0.35px;">X</div><div class="t" style="left:898px;width:200px;text-align:right;top:257.0px;font-size:8px;color:#e0e0e0;letter-spacing:-0.35px;">0.473 m</div><div class="a" style="left:1002px;top:269.5px;width:104px;height:1px;background:#4a4a4a;border-radius:0px;"></div><div class="t" style="left:1012px;top:269.0px;font-size:8px;color:#e0e0e0;letter-spacing:-0.35px;">Y</div><div class="t" style="left:898px;width:200px;text-align:right;top:269.0px;font-size:8px;color:#e0e0e0;letter-spacing:-0.35px;">0.712 m</div><div class="a" style="left:1002px;top:281.5px;width:104px;height:1px;background:#4a4a4a;border-radius:0px;"></div><div class="t" style="left:1012px;top:281.0px;font-size:8px;color:#e0e0e0;letter-spacing:-0.35px;">Z</div><div class="t" style="left:898px;width:200px;text-align:right;top:281.0px;font-size:8px;color:#e0e0e0;letter-spacing:-0.35px;">0.452 m</div><div class="a" style="left:997px;top:301px;width:115px;height:13px;background:#3d3d3d;border-radius:4px;"></div><svg class="a" style="left:1002px;top:304.5px" width="4" height="6" viewBox="0 0 4 6"><path d="M0.5,0.5 L3,3 L0.5,5.5" fill="none" stroke="#cfcfcf" stroke-width="1"/></svg><div class="t" style="left:1010px;top:301.0px;font-size:8px;color:#e0e0e0;letter-spacing:-0.35px;">Properties</div><svg class="a" style="left:1100px;top:305px" width="8" height="6" viewBox="0 0 8 6"><path d="M0,1.5 L8,1.5 M0,4 L8,4" stroke="#777" stroke-width="1" stroke-dasharray="1.2 0.9"/></svg><div class="a" style="left:1117px;top:65px;width:11px;height:23px;background:#303030;border-radius:3px;border-radius:0 3px 3px 0"></div><div class="t" style="left:1072.5px;top:70.0px;width:100px;text-align:center;font-size:8px;color:#d0d0d0;letter-spacing:-0.35px;transform:rotate(90deg)">Item</div><div class="a" style="left:1117px;top:91px;width:11px;height:23px;background:#282828;border-radius:3px;border-radius:0 3px 3px 0"></div><div class="t" style="left:1072.5px;top:96.0px;width:100px;text-align:center;font-size:8px;color:#d0d0d0;letter-spacing:-0.35px;transform:rotate(90deg)">Tool</div><div class="a" style="left:1117px;top:116.5px;width:11px;height:22.5px;background:#282828;border-radius:3px;border-radius:0 3px 3px 0"></div><div class="t" style="left:1072.5px;top:121.25px;width:100px;text-align:center;font-size:8px;color:#d0d0d0;letter-spacing:-0.35px;transform:rotate(90deg)">View</div><div class="a" style="left:1117px;top:143.5px;width:11px;height:68.5px;background:#282828;border-radius:3px;border-radius:0 3px 3px 0"></div><div class="t" style="left:1072.5px;top:171.25px;width:100px;text-align:center;font-size:8px;color:#d0d0d0;letter-spacing:-0.35px;transform:rotate(90deg)">Realtime Materials</div><div class="a" style="left:1130px;top:31px;width:236px;height:270px;border-radius:4px;overflow:hidden;background:#282828"></div><div class="a" style="left:1130px;top:31px;width:236px;height:16px;background:#282828;border-radius:4px;border-radius:4px 4px 0 0"></div><div class="a" style="left:1135px;top:32.7px;width:18px;height:11.3px;background:#303030;border-radius:3px;"></div><svg class="a" style="left:1137px;top:34px" width="10" height="9" viewBox="0 0 10 9"><path d="M0.5,1 L5,1 M2,4.5 L8,4.5 M2,8 L8,8 M1,1 L1,8" stroke="#ddd" stroke-width="1.2"/></svg><svg class="a" style="left:1146.5px;top:37px" width="6" height="4" viewBox="0 0 6 4"><path d="M0.5,0.5 L3,3 L5.5,0.5" fill="none" stroke="#cfcfcf" stroke-width="1"/></svg><div class="a" style="left:1156.5px;top:32.7px;width:19px;height:11.3px;background:#303030;border-radius:3px;"></div><svg class="a" style="left:1158.5px;top:34px" width="11" height="9" viewBox="0 0 11 9"><rect x="2" y="0.5" width="8" height="6.5" fill="none" stroke="#ccc" stroke-width="0.9"/><path d="M3,7 L6,3 L9,7 Z" fill="#ccc"/><rect x="0.5" y="2.5" width="8" height="6" fill="none" stroke="#999" stroke-width="0.7"/></svg><svg class="a" style="left:1168.5px;top:37px" width="6" height="4" viewBox="0 0 6 4"><path d="M0.5,0.5 L3,3 L5.5,0.5" fill="none" stroke="#cfcfcf" stroke-width="1"/></svg><div class="a" style="left:1205.6px;top:32.7px;width:70.5px;height:11.3px;background:#1d1d1d;border-radius:3px;"></div><svg class="a" style="left:1208px;top:34px" width="9" height="9" viewBox="0 0 9 9"><circle cx="5.5" cy="3.5" r="2.8" fill="none" stroke="#ddd" stroke-width="1"/><path d="M3.5,5.5 L0.8,8.3" stroke="#ddd" stroke-width="1.2"/></svg><div class="a" style="left:1328px;top:32.7px;width:18px;height:11.3px;background:#303030;border-radius:3px;"></div><svg class="a" style="left:1329.5px;top:34px" width="9" height="9" viewBox="0 0 9 9"><path d="M0.5,0.8 L8.5,0.8 L5.3,4.8 L5.3,8.5 L3.7,7.5 L3.7,4.8 Z" fill="none" stroke="#ddd" stroke-width="0.9"/></svg><svg class="a" style="left:1339px;top:37px" width="6" height="4" viewBox="0 0 6 4"><path d="M0.5,0.5 L3,3 L5.5,0.5" fill="none" stroke="#cfcfcf" stroke-width="1"/></svg><div class="a" style="left:1349.4px;top:32.7px;width:11.6px;height:11.3px;background:#545454;border-radius:3px;"></div><svg class="a" style="left:1350.5px;top:34px" width="10" height="9" viewBox="0 0 10 9"><rect x="0.5" y="1.5" width="7" height="7" fill="none" stroke="#ddd" stroke-width="0.9"/><path d="M7.5,0 L7.5,4 M5.5,2 L9.5,2" stroke="#ddd" stroke-width="1"/><rect x="2" y="3.5" width="4" height="1" fill="#ddd"/></svg><div class="a" style="left:1130px;top:47px;width:236px;height:12px;background:#282828;border-radius:0px;"></div><div class="a" style="left:1130px;top:59px;width:236px;height:12px;background:#2b2b2b;border-radius:0px;"></div><div class="a" style="left:1130px;top:71px;width:236px;height:12px;background:#282828;border-radius:0px;"></div><div class="a" style="left:1130px;top:83px;width:236px;height:12px;background:#2b2b2b;border-radius:0px;"></div><div class="a" style="left:1130px;top:95px;width:236px;height:12px;background:#282828;border-radius:0px;"></div><div class="a" style="left:1130px;top:107px;width:236px;height:12px;background:#2b2b2b;border-radius:0px;"></div><div class="a" style="left:1130px;top:119px;width:236px;height:12px;background:#282828;border-radius:0px;"></div><div class="a" style="left:1130px;top:131px;width:236px;height:12px;background:#2b2b2b;border-radius:0px;"></div><div class="a" style="left:1130px;top:143px;width:236px;height:12px;background:#282828;border-radius:0px;"></div><div class="a" style="left:1130px;top:155px;width:236px;height:12px;background:#2b2b2b;border-radius:0px;"></div><div class="a" style="left:1130px;top:167px;width:236px;height:12px;background:#282828;border-radius:0px;"></div><div class="a" style="left:1130px;top:179px;width:236px;height:12px;background:#2b2b2b;border-radius:0px;"></div><div class="a" style="left:1130px;top:191px;width:236px;height:12px;background:#282828;border-radius:0px;"></div><div class="a" style="left:1130px;top:203px;width:236px;height:12px;background:#2b2b2b;border-radius:0px;"></div><div class="a" style="left:1130px;top:215px;width:236px;height:12px;background:#282828;border-radius:0px;"></div><div class="a" style="left:1130px;top:227px;width:236px;height:12px;background:#2b2b2b;border-radius:0px;"></div><div class="a" style="left:1130px;top:239px;width:236px;height:12px;background:#282828;border-radius:0px;"></div><div class="a" style="left:1130px;top:251px;width:236px;height:12px;background:#2b2b2b;border-radius:0px;"></div><div class="a" style="left:1130px;top:263px;width:236px;height:12px;background:#282828;border-radius:0px;"></div><div class="a" style="left:1130px;top:275px;width:236px;height:12px;background:#2b2b2b;border-radius:0px;"></div><div class="t" style="left:1156px;top:46.5px;font-size:8px;color:#dcdcdc;letter-spacing:-0.35px;">Scene Collection</div><div class="t" style="left:1168px;top:58.5px;font-size:8px;color:#dcdcdc;letter-spacing:-0.35px;">Actors</div><div class="t" style="left:1168px;top:70.5px;font-size:8px;color:#dcdcdc;letter-spacing:-0.35px;">Scene</div><div class="t" style="left:1180.5px;top:82.5px;font-size:8px;color:#dcdcdc;letter-spacing:-0.35px;">Camera</div><div class="t" style="left:1180.5px;top:94.5px;font-size:8px;color:#dcdcdc;letter-spacing:-0.35px;">Plane</div><div class="t" style="left:1180.5px;top:106.5px;font-size:8px;color:#dcdcdc;letter-spacing:-0.35px;">Room</div><div class="t" style="left:1168px;top:118.5px;font-size:8px;color:#dcdcdc;letter-spacing:-0.35px;">Collection</div><div class="t" style="left:1168px;top:130.5px;font-size:8px;color:#dcdcdc;letter-spacing:-0.35px;">Cylinder.001</div><div class="a" style="left:1142.5px;top:48.5px;width:11px;height:10px;background:#3c3c3c;border-radius:2px;"></div><svg class="a" style="left:1143px;top:49px" width="10" height="9" viewBox="0 0 10 9"><rect x="0.5" y="0.5" width="9" height="2.5" fill="#e0e0e0"/><rect x="1" y="3.5" width="8" height="5" fill="#e0e0e0"/><rect x="3" y="4.5" width="4" height="1.2" fill="#2a2a2a"/></svg><svg class="a" style="left:1156px;top:60.5px" width="10" height="9" viewBox="0 0 10 9"><rect x="0.5" y="0.5" width="9" height="2.5" fill="#e0e0e0"/><rect x="1" y="3.5" width="8" height="5" fill="#e0e0e0"/><rect x="3" y="4.5" width="4" height="1.2" fill="#2a2a2a"/></svg><svg class="a" style="left:1156px;top:72.5px" width="10" height="9" viewBox="0 0 10 9"><rect x="0.5" y="0.5" width="9" height="2.5" fill="#e0e0e0"/><rect x="1" y="3.5" width="8" height="5" fill="#e0e0e0"/><rect x="3" y="4.5" width="4" height="1.2" fill="#2a2a2a"/></svg><svg class="a" style="left:1156px;top:120.5px" width="10" height="9" viewBox="0 0 10 9"><rect x="0.5" y="0.5" width="9" height="2.5" fill="#e0e0e0"/><rect x="1" y="3.5" width="8" height="5" fill="#e0e0e0"/><rect x="3" y="4.5" width="4" height="1.2" fill="#2a2a2a"/></svg><svg class="a" style="left:1156px;top:132px" width="10" height="10" viewBox="0 0 10 10"><path d="M1,1.5 L9,1.5 L5,9 Z" fill="none" stroke="#e6892e" stroke-width="1.6"/></svg><svg class="a" style="left:1146px;top:62px" width="5" height="6" viewBox="0 0 5 6"><path d="M0,0 L4,3 L0,6 Z" fill="#bbb"/></svg><svg class="a" style="left:1145px;top:75px" width="6" height="5" viewBox="0 0 6 5"><path d="M0,0 L6,0 L3,4 Z" fill="#bbb"/></svg><svg class="a" style="left:1158px;top:86px" width="5" height="6" viewBox="0 0 5 6"><path d="M0,0 L4,3 L0,6 Z" fill="#bbb"/></svg><svg class="a" style="left:1158px;top:98px" width="5" height="6" viewBox="0 0 5 6"><path d="M0,0 L4,3 L0,6 Z" fill="#bbb"/></svg><svg class="a" style="left:1158px;top:110px" width="5" height="6" viewBox="0 0 5 6"><path d="M0,0 L4,3 L0,6 Z" fill="#bbb"/></svg><svg class="a" style="left:1146px;top:122px" width="5" height="6" viewBox="0 0 5 6"><path d="M0,0 L4,3 L0,6 Z" fill="#bbb"/></svg><svg class="a" style="left:1146px;top:134px" width="5" height="6" viewBox="0 0 5 6"><path d="M0,0 L4,3 L0,6 Z" fill="#bbb"/></svg><div class="a" style="left:1147px;top:83px;width:1px;height:28px;background:#444;border-radius:0px;"></div><svg class="a" style="left:1167px;top:84px" width="12" height="10" viewBox="0 0 12 10"><circle cx="3.5" cy="2.5" r="2.2" fill="#e6892e"/><circle cx="7.5" cy="2.5" r="2.2" fill="#e6892e"/><rect x="1.5" y="4.5" width="7" height="4.5" fill="#e6892e"/><path d="M8.5,6.5 L11,5 L11,9 Z" fill="#e6892e"/></svg><svg class="a" style="left:1168px;top:96px" width="10" height="10" viewBox="0 0 10 10"><path d="M1,1.5 L9,1.5 L5,9 Z" fill="none" stroke="#e6892e" stroke-width="1.6"/></svg><svg class="a" style="left:1168px;top:108px" width="10" height="10" viewBox="0 0 10 10"><path d="M1,1.5 L9,1.5 L5,9 Z" fill="none" stroke="#e6892e" stroke-width="1.6"/></svg><svg class="a" style="left:1203px;top:59px" width="10" height="10" viewBox="0 0 10 10"><path d="M1,1.5 L9,1.5 L5,9 Z" fill="none" stroke="#e6892e" stroke-width="1.6"/></svg><div class="t" style="left:1208px;top:61.0px;font-size:6px;color:#ddd;letter-spacing:-0.3px;">91</div><div class="a" style="left:1218px;top:82px;width:12px;height:12px;background:#454545;border-radius:3px;"></div><svg class="a" style="left:1219px;top:84px" width="11" height="9" viewBox="0 0 11 9"><circle cx="3" cy="2.5" r="2" fill="none" stroke="#3bb39a" stroke-width="1"/><rect x="1" y="4.5" width="7" height="4" fill="none" stroke="#3bb39a" stroke-width="1"/><path d="M8,6.5 L10.5,5 L10.5,8.5 Z" fill="#3bb39a"/></svg><svg class="a" style="left:1212px;top:96px" width="10" height="10" viewBox="0 0 10 10"><path d="M1.5,2 L8.5,2 L5,8.5 Z" fill="none" stroke="#3bb39a" stroke-width="1.1"/><circle cx="1.5" cy="2" r="1.2" fill="#3bb39a"/><circle cx="8.5" cy="2" r="1.2" fill="#3bb39a"/><circle cx="5" cy="8.5" r="1.2" fill="#3bb39a"/></svg><svg class="a" style="left:1213px;top:108px" width="10" height="10" viewBox="0 0 10 10"><path d="M1.5,2 L8.5,2 L5,8.5 Z" fill="none" stroke="#3bb39a" stroke-width="1.1"/><circle cx="1.5" cy="2" r="1.2" fill="#3bb39a"/><circle cx="8.5" cy="2" r="1.2" fill="#3bb39a"/><circle cx="5" cy="8.5" r="1.2" fill="#3bb39a"/></svg><svg class="a" style="left:1214px;top:120px" width="10" height="10" viewBox="0 0 10 10"><path d="M1,1.5 L9,1.5 L5,9 Z" fill="none" stroke="#e6892e" stroke-width="1.6"/></svg><div class="a" style="left:1224px;top:119px;width:12px;height:11px;background:#454545;border-radius:2px;"></div><svg class="a" style="left:1225px;top:120px" width="10" height="6" viewBox="0 0 10 6"><path d="M1,5 L1,2 L9,2 L9,5 M4,0 L6,0" stroke="#e6892e" stroke-width="1.3" fill="none"/></svg><svg class="a" style="left:1236px;top:119px" width="6" height="10" viewBox="0 0 6 10"><path d="M1,9 L5,1" stroke="#e6892e" stroke-width="1.3"/></svg><div class="t" style="left:1216px;top:122.5px;font-size:6px;color:#ddd;letter-spacing:-0.4px;">164</div><div class="t" style="left:1228px;top:122.5px;font-size:6px;color:#ddd;letter-spacing:-0.4px;">164</div><div class="t" style="left:1240px;top:122.5px;font-size:6px;color:#ddd;letter-spacing:-0.4px;">164</div><svg class="a" style="left:1224px;top:132px" width="11" height="10" viewBox="0 0 11 10"><path d="M2,9 L6.5,4.5 M5,3 A2.5,2.5 0 1 0 8.5,1 L7.5,2.8 L8.5,3.8 L10,3" fill="none" stroke="#5b8fd8" stroke-width="1.2"/></svg><svg class="a" style="left:1236px;top:133px" width="10" height="10" viewBox="0 0 10 10"><path d="M1.5,2 L8.5,2 L5,8.5 Z" fill="none" stroke="#3bb39a" stroke-width="1.1"/><circle cx="1.5" cy="2" r="1.2" fill="#3bb39a"/><circle cx="8.5" cy="2" r="1.2" fill="#3bb39a"/><circle cx="5" cy="8.5" r="1.2" fill="#3bb39a"/></svg><svg class="a" style="left:1327px;top:61px" width="8" height="8" viewBox="0 0 8 8"><rect x="0.3" y="0.3" width="7.4" height="7.4" rx="1.2" fill="#e8e8e8"/><path d="M1.8,4 L3.4,5.8 L6.3,2.2" fill="none" stroke="#222" stroke-width="1.2"/></svg><svg class="a" style="left:1327px;top:73px" width="8" height="8" viewBox="0 0 8 8"><rect x="0.3" y="0.3" width="7.4" height="7.4" rx="1.2" fill="#e8e8e8"/><path d="M1.8,4 L3.4,5.8 L6.3,2.2" fill="none" stroke="#222" stroke-width="1.2"/></svg><svg class="a" style="left:1327px;top:121px" width="8" height="8" viewBox="0 0 8 8"><rect x="0.3" y="0.3" width="7.4" height="7.4" rx="1.2" fill="#e8e8e8"/><path d="M1.8,4 L3.4,5.8 L6.3,2.2" fill="none" stroke="#222" stroke-width="1.2"/></svg><svg class="a" style="left:1338px;top:61.5px" width="9" height="7" viewBox="0 0 9 7"><path d="M0.5,3.5 Q4.5,-1 8.5,3.5 Q4.5,8 0.5,3.5 Z" fill="none" stroke="#e0e0e0" stroke-width="0.9"/><circle cx="4.5" cy="3.5" r="1.6" fill="#e0e0e0"/></svg><svg class="a" style="left:1350px;top:61px" width="9" height="8" viewBox="0 0 9 8"><rect x="0.5" y="1.6" width="8" height="6" rx="1" fill="none" stroke="#e0e0e0" stroke-width="0.9"/><rect x="3" y="0.2" width="3" height="1.5" fill="#e0e0e0"/><circle cx="4.5" cy="4.6" r="1.5" fill="none" stroke="#e0e0e0" stroke-width="0.8"/></svg><svg class="a" style="left:1338px;top:73.5px" width="9" height="7" viewBox="0 0 9 7"><path d="M0.5,3.5 Q4.5,-1 8.5,3.5 Q4.5,8 0.5,3.5 Z" fill="none" stroke="#e0e0e0" stroke-width="0.9"/><circle cx="4.5" cy="3.5" r="1.6" fill="#e0e0e0"/></svg><svg class="a" style="left:1350px;top:73px" width="9" height="8" viewBox="0 0 9 8"><rect x="0.5" y="1.6" width="8" height="6" rx="1" fill="none" stroke="#e0e0e0" stroke-width="0.9"/><rect x="3" y="0.2" width="3" height="1.5" fill="#e0e0e0"/><circle cx="4.5" cy="4.6" r="1.5" fill="none" stroke="#e0e0e0" stroke-width="0.8"/></svg><svg class="a" style="left:1338px;top:85.5px" width="9" height="7" viewBox="0 0 9 7"><path d="M0.5,3.5 Q4.5,-1 8.5,3.5 Q4.5,8 0.5,3.5 Z" fill="none" stroke="#e0e0e0" stroke-width="0.9"/><circle cx="4.5" cy="3.5" r="1.6" fill="#e0e0e0"/></svg><svg class="a" style="left:1350px;top:85px" width="9" height="8" viewBox="0 0 9 8"><rect x="0.5" y="1.6" width="8" height="6" rx="1" fill="none" stroke="#e0e0e0" stroke-width="0.9"/><rect x="3" y="0.2" width="3" height="1.5" fill="#e0e0e0"/><circle cx="4.5" cy="4.6" r="1.5" fill="none" stroke="#e0e0e0" stroke-width="0.8"/></svg><svg class="a" style="left:1338px;top:97.5px" width="9" height="7" viewBox="0 0 9 7"><path d="M0.5,3.5 Q4.5,-1 8.5,3.5 Q4.5,8 0.5,3.5 Z" fill="none" stroke="#e0e0e0" stroke-width="0.9"/><circle cx="4.5" cy="3.5" r="1.6" fill="#e0e0e0"/></svg><svg class="a" style="left:1350px;top:97px" width="9" height="8" viewBox="0 0 9 8"><rect x="0.5" y="1.6" width="8" height="6" rx="1" fill="none" stroke="#888" stroke-width="0.9"/><rect x="3" y="0.2" width="3" height="1.5" fill="#888"/><circle cx="4.5" cy="4.6" r="1.5" fill="none" stroke="#888" stroke-width="0.8"/></svg><svg class="a" style="left:1338px;top:109.5px" width="9" height="7" viewBox="0 0 9 7"><path d="M0.5,3.5 Q4.5,-1 8.5,3.5 Q4.5,8 0.5,3.5 Z" fill="none" stroke="#e0e0e0" stroke-width="0.9"/><circle cx="4.5" cy="3.5" r="1.6" fill="#e0e0e0"/></svg><svg class="a" style="left:1350px;top:109px" width="9" height="8" viewBox="0 0 9 8"><rect x="0.5" y="1.6" width="8" height="6" rx="1" fill="none" stroke="#e0e0e0" stroke-width="0.9"/><rect x="3" y="0.2" width="3" height="1.5" fill="#e0e0e0"/><circle cx="4.5" cy="4.6" r="1.5" fill="none" stroke="#e0e0e0" stroke-width="0.8"/></svg><svg class="a" style="left:1338px;top:121.5px" width="9" height="7" viewBox="0 0 9 7"><path d="M0.5,3.5 Q4.5,-1 8.5,3.5 Q4.5,8 0.5,3.5 Z" fill="none" stroke="#e0e0e0" stroke-width="0.9"/><circle cx="4.5" cy="3.5" r="1.6" fill="#e0e0e0"/></svg><svg class="a" style="left:1350px;top:121px" width="9" height="8" viewBox="0 0 9 8"><rect x="0.5" y="1.6" width="8" height="6" rx="1" fill="none" stroke="#e0e0e0" stroke-width="0.9"/><rect x="3" y="0.2" width="3" height="1.5" fill="#e0e0e0"/><circle cx="4.5" cy="4.6" r="1.5" fill="none" stroke="#e0e0e0" stroke-width="0.8"/></svg><svg class="a" style="left:1338px;top:133.5px" width="9" height="7" viewBox="0 0 9 7"><path d="M0.5,3.5 Q4.5,-1 8.5,3.5 Q4.5,8 0.5,3.5 Z" fill="none" stroke="#e0e0e0" stroke-width="0.9"/><circle cx="4.5" cy="3.5" r="1.6" fill="#e0e0e0"/></svg><svg class="a" style="left:1350px;top:133px" width="9" height="8" viewBox="0 0 9 8"><rect x="0.5" y="1.6" width="8" height="6" rx="1" fill="none" stroke="#e0e0e0" stroke-width="0.9"/><rect x="3" y="0.2" width="3" height="1.5" fill="#e0e0e0"/><circle cx="4.5" cy="4.6" r="1.5" fill="none" stroke="#e0e0e0" stroke-width="0.8"/></svg><div class="a" style="left:1130px;top:302px;width:236px;height:423px;background:#303030;border-radius:4px;border-radius:4px 4px 0 0"></div><div class="a" style="left:1130px;top:302px;width:236px;height:15px;background:#353535;border-radius:4px;border-radius:4px 4px 0 0"></div><div class="a" style="left:1134px;top:303.5px;width:18.5px;height:11.5px;background:#282828;border-radius:3px;"></div><svg class="a" style="left:1136px;top:305px" width="10" height="9" viewBox="0 0 10 9"><rect x="0.5" y="0.5" width="8" height="3.5" rx="1.7" fill="#eee"/><rect x="0.5" y="5" width="8" height="3.5" rx="1.7" fill="#eee"/><rect x="4.5" y="1.3" width="3" height="2" fill="#222"/><rect x="5.5" y="5.8" width="2" height="2" fill="#222"/></svg><svg class="a" style="left:1146px;top:307.5px" width="6" height="4" viewBox="0 0 6 4"><path d="M0.5,0.5 L3,3 L5.5,0.5" fill="none" stroke="#cfcfcf" stroke-width="1"/></svg><div class="a" style="left:1213px;top:304.3px;width:70.5px;height:10.7px;background:#1d1d1d;border-radius:3px;"></div><svg class="a" style="left:1216px;top:305.5px" width="9" height="9" viewBox="0 0 9 9"><circle cx="5.5" cy="3.5" r="2.8" fill="none" stroke="#ddd" stroke-width="1"/><path d="M3.5,5.5 L0.8,8.3" stroke="#ddd" stroke-width="1.2"/></svg><div class="a" style="left:1349.5px;top:304px;width:11.2px;height:11px;background:#282828;border-radius:3px;"></div><svg class="a" style="left:1352px;top:307.5px" width="6" height="4" viewBox="0 0 6 4"><path d="M0.5,0.5 L3,3 L5.5,0.5" fill="none" stroke="#cfcfcf" stroke-width="1"/></svg><div class="a" style="left:1130px;top:317px;width:17px;height:408px;background:#1f1f1f;border-radius:0px;"></div><div class="a" style="left:1131px;top:432px;width:16px;height:17px;background:#303030;border-radius:3px;border-radius:3px 0 0 3px"></div><svg class="a" style="left:1134px;top:324px" width="10" height="10" viewBox="0 0 10 10"><path d="M2,9 L2,4 M1,2 L3,2 L2,4 M7,1 L7,9 M5,2 Q7,5 9,2" fill="none" stroke="#ddd" stroke-width="1.2"/></svg><svg class="a" style="left:1134px;top:345px" width="10" height="10" viewBox="0 0 10 10"><rect x="0.5" y="3" width="9" height="6" fill="none" stroke="#ccc" stroke-width="1"/><path d="M1,1 L4,1 M5,1 L9,1" stroke="#ccc"/><rect x="2" y="5" width="4" height="2" fill="#ccc"/></svg><svg class="a" style="left:1134px;top:362px" width="10" height="10" viewBox="0 0 10 10"><rect x="0.5" y="0.5" width="9" height="4" fill="#bbb"/><rect x="1.5" y="4.5" width="7" height="4.5" fill="none" stroke="#bbb" stroke-width="1"/><rect x="3" y="6" width="4" height="2" fill="#bbb"/></svg><svg class="a" style="left:1134px;top:380px" width="10" height="10" viewBox="0 0 10 10"><rect x="2.5" y="0.5" width="7" height="6" fill="none" stroke="#ccc" stroke-width="0.9"/><path d="M3,6 L6,2.5 L9,6 Z" fill="#ccc"/><rect x="0.5" y="2.5" width="7" height="6.5" fill="#555" stroke="#aaa" stroke-width="0.7"/></svg><svg class="a" style="left:1134px;top:396.6px" width="10" height="10" viewBox="0 0 10 10"><path d="M0.5,9 L3,2 L5.5,9 Z" fill="#ccc"/><circle cx="7" cy="5" r="2" fill="none" stroke="#ccc" stroke-width="1"/><circle cx="6" cy="8" r="1.4" fill="#ccc"/></svg><svg class="a" style="left:1134px;top:414px" width="10" height="10" viewBox="0 0 10 10"><circle cx="5" cy="5" r="4.3" fill="#c93c3c"/><path d="M1,4 Q4,2 5,5 T9,6 M3,1 Q5,4 4,9" fill="none" stroke="#2b2b2b" stroke-width="1"/></svg><svg class="a" style="left:1134px;top:435px" width="10" height="10" viewBox="0 0 10 10"><rect x="1.5" y="1.5" width="7" height="7" fill="#e6892e"/><path d="M0.5,2.5 L0.5,0.5 L2.5,0.5 M7.5,0.5 L9.5,0.5 L9.5,2.5 M9.5,7.5 L9.5,9.5 L7.5,9.5 M2.5,9.5 L0.5,9.5 L0.5,7.5" fill="none" stroke="#ddd" stroke-width="0.8"/></svg><svg class="a" style="left:1134px;top:452px" width="10" height="10" viewBox="0 0 10 10"><circle cx="5" cy="5" r="3.8" fill="none" stroke="#5b8fd8" stroke-width="1.2"/><circle cx="5" cy="5" r="1.8" fill="#5b8fd8"/></svg><svg class="a" style="left:1134px;top:469px" width="10" height="10" viewBox="0 0 10 10"><circle cx="5" cy="5" r="3.8" fill="none" stroke="#5b8fd8" stroke-width="1.2"/><path d="M1,8 L9,2" stroke="#5b8fd8" stroke-width="1.2"/><circle cx="5" cy="5" r="1.4" fill="#5b8fd8"/></svg><svg class="a" style="left:1134px;top:486px" width="10" height="10" viewBox="0 0 10 10"><circle cx="7" cy="2" r="1.5" fill="#3bb39a"/><path d="M1,9 L4,6 L3,3 L7,4 L9,7 M4,6 L6,9 M3,3 L0.5,4" fill="none" stroke="#3bb39a" stroke-width="1.2"/></svg><svg class="a" style="left:1134px;top:503px" width="10" height="10" viewBox="0 0 10 10"><path d="M2,8 L8,2" stroke="#3bb39a" stroke-width="2"/><circle cx="2" cy="8" r="1.8" fill="#3bb39a"/><circle cx="8" cy="2" r="1.8" fill="#3bb39a"/></svg><svg class="a" style="left:1134px;top:519px" width="10" height="10" viewBox="0 0 10 10"><path d="M1,9 L5,5 M3,3 A3,3 0 1 0 7,1 L6,3 L7,4 L9,3" fill="none" stroke="#5b8fd8" stroke-width="1.1"/><circle cx="5" cy="5" r="3.8" fill="none" stroke="#5b8fd8" stroke-width="0.8"/></svg><svg class="a" style="left:1134px;top:541px" width="10" height="10" viewBox="0 0 10 10"><rect x="0.5" y="0.5" width="9" height="9" fill="#c34848"/><path d="M0.5,2.5 L9.5,2.5 M0.5,5 L9.5,5 M0.5,7.5 L9.5,7.5 M2.5,0.5 L2.5,9.5 M5,0.5 L5,9.5 M7.5,0.5 L7.5,9.5" stroke="#e59a9a" stroke-width="1" stroke-dasharray="1.2 1.3"/></svg><svg class="a" style="left:1153px;top:322.5px" width="11" height="11" viewBox="0 0 11 11"><path d="M0.5,2.5 L0.5,0.5 L2.5,0.5 M8.5,0.5 L10.5,0.5 L10.5,2.5 M10.5,8.5 L10.5,10.5 L8.5,10.5 M2.5,10.5 L0.5,10.5 L0.5,8.5" fill="none" stroke="#ccc" stroke-width="0.8"/><rect x="2.5" y="2.5" width="6" height="6" fill="#eee"/></svg><div class="t" style="left:1168.5px;top:321.5px;font-size:8px;color:#dcdcdc;letter-spacing:-0.35px;">Bip001.075</div><svg class="a" style="left:1350px;top:323px" width="10" height="10" viewBox="0 0 10 10"><path d="M5.5,1 L9,4.5 L7.5,5.5 L5.5,8.5 L1.5,4.5 L4.5,2.5 Z M3,7 L0.5,9.5" fill="none" stroke="#999" stroke-width="0.8"/></svg><div class="a" style="left:1153px;top:344.7px;width:19px;height:11px;background:#282828;border-radius:3px;"></div><svg class="a" style="left:1154.5px;top:345.5px" width="10" height="10" viewBox="0 0 10 10"><path d="M0.5,2.5 L0.5,0.5 L2.5,0.5 M7.5,0.5 L9.5,0.5 L9.5,2.5 M9.5,7.5 L9.5,9.5 L7.5,9.5 M2.5,9.5 L0.5,9.5 L0.5,7.5" fill="none" stroke="#ccc" stroke-width="0.8"/><rect x="2" y="2" width="6" height="6" fill="#eee"/></svg><svg class="a" style="left:1164.5px;top:348.5px" width="6" height="4" viewBox="0 0 6 4"><path d="M0.5,0.5 L3,3 L5.5,0.5" fill="none" stroke="#cfcfcf" stroke-width="1"/></svg><div class="a" style="left:1172.4px;top:344.7px;width:188.3px;height:11px;background:#1d1d1d;border-radius:3px;"></div><div class="t" style="left:1175.7px;top:343.5px;font-size:8px;color:#dcdcdc;letter-spacing:-0.35px;">Bip001.075</div><div class="a" style="left:1152px;top:363px;width:209px;height:168px;background:#3d3d3d;border-radius:4px;"></div><div class="a" style="left:1152px;top:363px;width:209px;height:14px;background:#3d3d3d;border-radius:4px;border-radius:4px 4px 0 0"></div><svg class="a" style="left:1156px;top:368.5px" width="6" height="4" viewBox="0 0 6 4"><path d="M0.5,0.5 L3,3 L5.5,0.5" fill="none" stroke="#cfcfcf" stroke-width="1"/></svg><div class="t" style="left:1165px;top:363.5px;font-size:8px;color:#e0e0e0;letter-spacing:-0.35px;">Transform</div><svg class="a" style="left:1348px;top:368px" width="8" height="5" viewBox="0 0 8 5"><path d="M0,1 L8,1 M0,3.5 L8,3.5" stroke="#7a7a7a" stroke-width="0.9" stroke-dasharray="1 1"/></svg><div class="a" style="left:1234.7px;top:382.5px;width:96.8px;height:11px;background:#545454;border-radius:3px 3px 0 0"></div><div class="t" style="left:1029.4px;width:200px;text-align:right;top:382.0px;font-size:8px;color:#cfcfcf;letter-spacing:-0.35px;">Location X</div><div class="t" style="left:1183px;width:200px;text-align:center;top:382.0px;font-size:8px;color:#e0e0e0;letter-spacing:-0.35px;">-0.7116 m</div><svg class="a" style="left:1332.5px;top:384.5px" width="10" height="8" viewBox="0 0 10 8"><path d="M1,4 L1,2.5 A2,2 0 0 1 5,2.5" fill="none" stroke="#cfcfcf" stroke-width="0.9"/><rect x="3" y="4" width="5.5" height="3.5" fill="none" stroke="#cfcfcf" stroke-width="0.9"/></svg><div class="a" style="left:1348.5px;top:387.3px;width:2.4px;height:2.4px;border-radius:50%;background:#e0e0e0"></div><div class="a" style="left:1234.7px;top:394.5px;width:96.8px;height:11px;background:#545454;border-radius:0"></div><div class="a" style="left:1234.7px;top:394.5px;width:96.8px;height:1px;background:#4a4a4a;border-radius:0px;"></div><div class="t" style="left:1029.4px;width:200px;text-align:right;top:394.0px;font-size:8px;color:#cfcfcf;letter-spacing:-0.35px;">Y</div><div class="t" style="left:1183px;width:200px;text-align:center;top:394.0px;font-size:8px;color:#e0e0e0;letter-spacing:-0.35px;">1.8843 m</div><svg class="a" style="left:1332.5px;top:396.5px" width="10" height="8" viewBox="0 0 10 8"><path d="M1,4 L1,2.5 A2,2 0 0 1 5,2.5" fill="none" stroke="#cfcfcf" stroke-width="0.9"/><rect x="3" y="4" width="5.5" height="3.5" fill="none" stroke="#cfcfcf" stroke-width="0.9"/></svg><div class="a" style="left:1348.5px;top:399.3px;width:2.4px;height:2.4px;border-radius:50%;background:#e0e0e0"></div><div class="a" style="left:1234.7px;top:406.5px;width:96.8px;height:12px;background:#545454;border-radius:0 0 3px 3px"></div><div class="a" style="left:1234.7px;top:406.5px;width:96.8px;height:1px;background:#4a4a4a;border-radius:0px;"></div><div class="t" style="left:1029.4px;width:200px;text-align:right;top:406.0px;font-size:8px;color:#cfcfcf;letter-spacing:-0.35px;">Z</div><div class="t" style="left:1183px;width:200px;text-align:center;top:406.0px;font-size:8px;color:#e0e0e0;letter-spacing:-0.35px;">0 m</div><svg class="a" style="left:1332.5px;top:408.5px" width="10" height="8" viewBox="0 0 10 8"><path d="M1,4 L1,2.5 A2,2 0 0 1 5,2.5" fill="none" stroke="#cfcfcf" stroke-width="0.9"/><rect x="3" y="4" width="5.5" height="3.5" fill="none" stroke="#cfcfcf" stroke-width="0.9"/></svg><div class="a" style="left:1348.5px;top:411.3px;width:2.4px;height:2.4px;border-radius:50%;background:#e0e0e0"></div><div class="a" style="left:1234.7px;top:421px;width:96.8px;height:11px;background:#545454;border-radius:3px 3px 0 0"></div><div class="t" style="left:1029.4px;width:200px;text-align:right;top:420.5px;font-size:8px;color:#cfcfcf;letter-spacing:-0.35px;">Rotation X</div><div class="t" style="left:1183px;width:200px;text-align:center;top:420.5px;font-size:8px;color:#e0e0e0;letter-spacing:-0.35px;">0°</div><svg class="a" style="left:1332.5px;top:423px" width="10" height="8" viewBox="0 0 10 8"><path d="M1,4 L1,2.5 A2,2 0 0 1 5,2.5" fill="none" stroke="#cfcfcf" stroke-width="0.9"/><rect x="3" y="4" width="5.5" height="3.5" fill="none" stroke="#cfcfcf" stroke-width="0.9"/></svg><div class="a" style="left:1348.5px;top:425.8px;width:2.4px;height:2.4px;border-radius:50%;background:#e0e0e0"></div><div class="a" style="left:1234.7px;top:433px;width:96.8px;height:11px;background:#545454;border-radius:0"></div><div class="a" style="left:1234.7px;top:433px;width:96.8px;height:1px;background:#4a4a4a;border-radius:0px;"></div><div class="t" style="left:1029.4px;width:200px;text-align:right;top:432.5px;font-size:8px;color:#cfcfcf;letter-spacing:-0.35px;">Y</div><div class="t" style="left:1183px;width:200px;text-align:center;top:432.5px;font-size:8px;color:#e0e0e0;letter-spacing:-0.35px;">0°</div><svg class="a" style="left:1332.5px;top:435px" width="10" height="8" viewBox="0 0 10 8"><path d="M1,4 L1,2.5 A2,2 0 0 1 5,2.5" fill="none" stroke="#cfcfcf" stroke-width="0.9"/><rect x="3" y="4" width="5.5" height="3.5" fill="none" stroke="#cfcfcf" stroke-width="0.9"/></svg><div class="a" style="left:1348.5px;top:437.8px;width:2.4px;height:2.4px;border-radius:50%;background:#e0e0e0"></div><div class="a" style="left:1234.7px;top:445px;width:96.8px;height:12px;background:#545454;border-radius:0 0 3px 3px"></div><div class="a" style="left:1234.7px;top:445px;width:96.8px;height:1px;background:#4a4a4a;border-radius:0px;"></div><div class="t" style="left:1029.4px;width:200px;text-align:right;top:444.5px;font-size:8px;color:#cfcfcf;letter-spacing:-0.35px;">Z</div><div class="t" style="left:1183px;width:200px;text-align:center;top:444.5px;font-size:8px;color:#e0e0e0;letter-spacing:-0.35px;">268.51°</div><svg class="a" style="left:1332.5px;top:447px" width="10" height="8" viewBox="0 0 10 8"><path d="M1,4 L1,2.5 A2,2 0 0 1 5,2.5" fill="none" stroke="#cfcfcf" stroke-width="0.9"/><rect x="3" y="4" width="5.5" height="3.5" fill="none" stroke="#cfcfcf" stroke-width="0.9"/></svg><div class="a" style="left:1348.5px;top:449.8px;width:2.4px;height:2.4px;border-radius:50%;background:#e0e0e0"></div><div class="a" style="left:1234.7px;top:461.7px;width:96.8px;height:10.7px;background:#282828;border-radius:3px;"></div><div class="t" style="left:1029.4px;width:200px;text-align:right;top:460.5px;font-size:8px;color:#cfcfcf;letter-spacing:-0.35px;">Mode</div><div class="t" style="left:1239px;top:460.5px;font-size:8px;color:#e0e0e0;letter-spacing:-0.35px;">XYZ Euler</div><svg class="a" style="left:1324px;top:465.5px" width="6" height="4" viewBox="0 0 6 4"><path d="M0.5,0.5 L3,3 L5.5,0.5" fill="none" stroke="#cfcfcf" stroke-width="1"/></svg><div class="a" style="left:1348.5px;top:465.8px;width:2.4px;height:2.4px;border-radius:50%;background:#e0e0e0"></div><div class="a" style="left:1234.7px;top:475.5px;width:96.8px;height:11px;background:#545454;border-radius:3px 3px 0 0"></div><div class="t" style="left:1029.4px;width:200px;text-align:right;top:475.0px;font-size:8px;color:#cfcfcf;letter-spacing:-0.35px;">Scale X</div><div class="t" style="left:1183px;width:200px;text-align:center;top:475.0px;font-size:8px;color:#e0e0e0;letter-spacing:-0.35px;">0.737</div><svg class="a" style="left:1332.5px;top:477.5px" width="10" height="8" viewBox="0 0 10 8"><path d="M1,4 L1,2.5 A2,2 0 0 1 5,2.5" fill="none" stroke="#cfcfcf" stroke-width="0.9"/><rect x="3" y="4" width="5.5" height="3.5" fill="none" stroke="#cfcfcf" stroke-width="0.9"/></svg><div class="a" style="left:1348.5px;top:480.3px;width:2.4px;height:2.4px;border-radius:50%;background:#e0e0e0"></div><div class="a" style="left:1234.7px;top:487.5px;width:96.8px;height:11px;background:#545454;border-radius:0"></div><div class="a" style="left:1234.7px;top:487.5px;width:96.8px;height:1px;background:#4a4a4a;border-radius:0px;"></div><div class="t" style="left:1029.4px;width:200px;text-align:right;top:487.0px;font-size:8px;color:#cfcfcf;letter-spacing:-0.35px;">Y</div><div class="t" style="left:1183px;width:200px;text-align:center;top:487.0px;font-size:8px;color:#e0e0e0;letter-spacing:-0.35px;">0.737</div><svg class="a" style="left:1332.5px;top:489.5px" width="10" height="8" viewBox="0 0 10 8"><path d="M1,4 L1,2.5 A2,2 0 0 1 5,2.5" fill="none" stroke="#cfcfcf" stroke-width="0.9"/><rect x="3" y="4" width="5.5" height="3.5" fill="none" stroke="#cfcfcf" stroke-width="0.9"/></svg><div class="a" style="left:1348.5px;top:492.3px;width:2.4px;height:2.4px;border-radius:50%;background:#e0e0e0"></div><div class="a" style="left:1234.7px;top:499.5px;width:96.8px;height:12px;background:#545454;border-radius:0 0 3px 3px"></div><div class="a" style="left:1234.7px;top:499.5px;width:96.8px;height:1px;background:#4a4a4a;border-radius:0px;"></div><div class="t" style="left:1029.4px;width:200px;text-align:right;top:499.0px;font-size:8px;color:#cfcfcf;letter-spacing:-0.35px;">Z</div><div class="t" style="left:1183px;width:200px;text-align:center;top:499.0px;font-size:8px;color:#e0e0e0;letter-spacing:-0.35px;">0.737</div><svg class="a" style="left:1332.5px;top:501.5px" width="10" height="8" viewBox="0 0 10 8"><path d="M1,4 L1,2.5 A2,2 0 0 1 5,2.5" fill="none" stroke="#cfcfcf" stroke-width="0.9"/><rect x="3" y="4" width="5.5" height="3.5" fill="none" stroke="#cfcfcf" stroke-width="0.9"/></svg><div class="a" style="left:1348.5px;top:504.3px;width:2.4px;height:2.4px;border-radius:50%;background:#e0e0e0"></div><svg class="a" style="left:1166.5px;top:521.5px" width="4" height="6" viewBox="0 0 4 6"><path d="M0.5,0.5 L3,3 L0.5,5.5" fill="none" stroke="#cfcfcf" stroke-width="1"/></svg><div class="t" style="left:1173.4px;top:518.0px;font-size:8px;color:#dcdcdc;letter-spacing:-0.35px;">Delta Transform</div><div class="a" style="left:1152px;top:533.4px;width:209px;height:14px;background:#3d3d3d;border-radius:4px;"></div><svg class="a" style="left:1158.5px;top:537.4px" width="4" height="6" viewBox="0 0 4 6"><path d="M0.5,0.5 L3,3 L0.5,5.5" fill="none" stroke="#cfcfcf" stroke-width="1"/></svg><div class="t" style="left:1165px;top:533.9px;font-size:8px;color:#dcdcdc;letter-spacing:-0.35px;">Relations</div><svg class="a" style="left:1348px;top:538.4px" width="8" height="5" viewBox="0 0 8 5"><path d="M0,1 L8,1 M0,3.5 L8,3.5" stroke="#7a7a7a" stroke-width="0.9" stroke-dasharray="1 1"/></svg><div class="a" style="left:1152px;top:549px;width:209px;height:14px;background:#3d3d3d;border-radius:4px;"></div><svg class="a" style="left:1158.5px;top:553px" width="4" height="6" viewBox="0 0 4 6"><path d="M0.5,0.5 L3,3 L0.5,5.5" fill="none" stroke="#cfcfcf" stroke-width="1"/></svg><div class="t" style="left:1165px;top:549.5px;font-size:8px;color:#dcdcdc;letter-spacing:-0.35px;">Collections</div><svg class="a" style="left:1348px;top:554px" width="8" height="5" viewBox="0 0 8 5"><path d="M0,1 L8,1 M0,3.5 L8,3.5" stroke="#7a7a7a" stroke-width="0.9" stroke-dasharray="1 1"/></svg><div class="a" style="left:1152px;top:565px;width:209px;height:14px;background:#3d3d3d;border-radius:4px;"></div><svg class="a" style="left:1158.5px;top:569px" width="4" height="6" viewBox="0 0 4 6"><path d="M0.5,0.5 L3,3 L0.5,5.5" fill="none" stroke="#cfcfcf" stroke-width="1"/></svg><div class="t" style="left:1165px;top:565.5px;font-size:8px;color:#dcdcdc;letter-spacing:-0.35px;">Motion Paths</div><svg class="a" style="left:1348px;top:570px" width="8" height="5" viewBox="0 0 8 5"><path d="M0,1 L8,1 M0,3.5 L8,3.5" stroke="#7a7a7a" stroke-width="0.9" stroke-dasharray="1 1"/></svg><div class="a" style="left:1152px;top:581.4px;width:209px;height:64px;background:#3d3d3d;border-radius:4px;"></div><div class="a" style="left:1152px;top:581.4px;width:209px;height:14px;background:#3d3d3d;border-radius:4px;border-radius:4px 4px 0 0"></div><svg class="a" style="left:1156px;top:586.5px" width="6" height="4" viewBox="0 0 6 4"><path d="M0.5,0.5 L3,3 L5.5,0.5" fill="none" stroke="#cfcfcf" stroke-width="1"/></svg><div class="t" style="left:1165px;top:582.0px;font-size:8px;color:#dcdcdc;letter-spacing:-0.35px;">Visibility</div><svg class="a" style="left:1348px;top:586.5px" width="8" height="5" viewBox="0 0 8 5"><path d="M0,1 L8,1 M0,3.5 L8,3.5" stroke="#7a7a7a" stroke-width="0.9" stroke-dasharray="1 1"/></svg><svg class="a" style="left:1234.8px;top:601.6px" width="10" height="10" viewBox="0 0 10 10"><rect x="0.5" y="0.5" width="9" height="9" rx="1.5" fill="#4772b3"/><path d="M2.3,5 L4.2,7 L7.8,2.8" fill="none" stroke="#fff" stroke-width="1.3"/></svg><div class="t" style="left:1244.7px;top:600.1px;font-size:8px;color:#dcdcdc;letter-spacing:-0.35px;">Selectable</div><div class="t" style="left:1028.6px;width:200px;text-align:right;top:615.0px;font-size:8px;color:#cfcfcf;letter-spacing:-0.35px;">Show In</div><svg class="a" style="left:1234.8px;top:616.5px" width="10" height="10" viewBox="0 0 10 10"><rect x="0.5" y="0.5" width="9" height="9" rx="1.5" fill="#4772b3"/><path d="M2.3,5 L4.2,7 L7.8,2.8" fill="none" stroke="#fff" stroke-width="1.3"/></svg><div class="t" style="left:1244.7px;top:615.0px;font-size:8px;color:#dcdcdc;letter-spacing:-0.35px;">Viewports</div><div class="a" style="left:1348.5px;top:620.3px;width:2.4px;height:2.4px;border-radius:50%;background:#e0e0e0"></div><svg class="a" style="left:1234.8px;top:629.8px" width="10" height="10" viewBox="0 0 10 10"><rect x="0.5" y="0.5" width="9" height="9" rx="1.5" fill="#4772b3"/><path d="M2.3,5 L4.2,7 L7.8,2.8" fill="none" stroke="#fff" stroke-width="1.3"/></svg><div class="t" style="left:1244.7px;top:628.3px;font-size:8px;color:#dcdcdc;letter-spacing:-0.35px;">Renders</div><div class="a" style="left:1348.5px;top:633.5999999999999px;width:2.4px;height:2.4px;border-radius:50%;background:#e0e0e0"></div><div class="a" style="left:1152px;top:647.3px;width:209px;height:14px;background:#3d3d3d;border-radius:4px;"></div><svg class="a" style="left:1158.5px;top:651.3px" width="4" height="6" viewBox="0 0 4 6"><path d="M0.5,0.5 L3,3 L0.5,5.5" fill="none" stroke="#cfcfcf" stroke-width="1"/></svg><div class="t" style="left:1165px;top:647.8px;font-size:8px;color:#dcdcdc;letter-spacing:-0.35px;">Viewport Display</div><svg class="a" style="left:1348px;top:652.3px" width="8" height="5" viewBox="0 0 8 5"><path d="M0,1 L8,1 M0,3.5 L8,3.5" stroke="#7a7a7a" stroke-width="0.9" stroke-dasharray="1 1"/></svg><div class="a" style="left:1152px;top:663.6px;width:209px;height:14px;background:#3d3d3d;border-radius:4px;"></div><svg class="a" style="left:1158.5px;top:667.6px" width="4" height="6" viewBox="0 0 4 6"><path d="M0.5,0.5 L3,3 L0.5,5.5" fill="none" stroke="#cfcfcf" stroke-width="1"/></svg><div class="t" style="left:1165px;top:664.1px;font-size:8px;color:#dcdcdc;letter-spacing:-0.35px;">Custom Properties</div><svg class="a" style="left:1348px;top:668.6px" width="8" height="5" viewBox="0 0 8 5"><path d="M0,1 L8,1 M0,3.5 L8,3.5" stroke="#7a7a7a" stroke-width="0.9" stroke-dasharray="1 1"/></svg><div class="a" style="left:1px;top:657px;width:1128px;height:68px;border-radius:4px;overflow:hidden;background:#1f1f1f"><svg width="1128" height="68" viewBox="1 657 1128 68"><circle cx="8" cy="677" r="0.75" fill="#303030"/><circle cx="8" cy="692" r="0.75" fill="#303030"/><circle cx="8" cy="707" r="0.75" fill="#303030"/><circle cx="8" cy="722" r="0.75" fill="#303030"/><circle cx="23" cy="677" r="0.75" fill="#303030"/><circle cx="23" cy="692" r="0.75" fill="#303030"/><circle cx="23" cy="707" r="0.75" fill="#303030"/><circle cx="23" cy="722" r="0.75" fill="#303030"/><circle cx="38" cy="677" r="0.75" fill="#303030"/><circle cx="38" cy="692" r="0.75" fill="#303030"/><circle cx="38" cy="707" r="0.75" fill="#303030"/><circle cx="38" cy="722" r="0.75" fill="#303030"/><circle cx="53" cy="677" r="0.75" fill="#303030"/><circle cx="53" cy="692" r="0.75" fill="#303030"/><circle cx="53" cy="707" r="0.75" fill="#303030"/><circle cx="53" cy="722" r="0.75" fill="#303030"/><circle cx="68" cy="677" r="0.75" fill="#303030"/><circle cx="68" cy="692" r="0.75" fill="#303030"/><circle cx="68" cy="707" r="0.75" fill="#303030"/><circle cx="68" cy="722" r="0.75" fill="#303030"/><circle cx="83" cy="677" r="0.75" fill="#303030"/><circle cx="83" cy="692" r="0.75" fill="#303030"/><circle cx="83" cy="707" r="0.75" fill="#303030"/><circle cx="83" cy="722" r="0.75" fill="#303030"/><circle cx="98" cy="677" r="0.75" fill="#303030"/><circle cx="98" cy="692" r="0.75" fill="#303030"/><circle cx="98" cy="707" r="0.75" fill="#303030"/><circle cx="98" cy="722" r="0.75" fill="#303030"/><circle cx="113" cy="677" r="0.75" fill="#303030"/><circle cx="113" cy="692" r="0.75" fill="#303030"/><circle cx="113" cy="707" r="0.75" fill="#303030"/><circle cx="113" cy="722" r="0.75" fill="#303030"/><circle cx="128" cy="677" r="0.75" fill="#303030"/><circle cx="128" cy="692" r="0.75" fill="#303030"/><circle cx="128" cy="707" r="0.75" fill="#303030"/><circle cx="128" cy="722" r="0.75" fill="#303030"/><circle cx="143" cy="677" r="0.75" fill="#303030"/><circle cx="143" cy="692" r="0.75" fill="#303030"/><circle cx="143" cy="707" r="0.75" fill="#303030"/><circle cx="143" cy="722" r="0.75" fill="#303030"/><circle cx="158" cy="677" r="0.75" fill="#303030"/><circle cx="158" cy="692" r="0.75" fill="#303030"/><circle cx="158" cy="707" r="0.75" fill="#303030"/><circle cx="158" cy="722" r="0.75" fill="#303030"/><circle cx="173" cy="677" r="0.75" fill="#303030"/><circle cx="173" cy="692" r="0.75" fill="#303030"/><circle cx="173" cy="707" r="0.75" fill="#303030"/><circle cx="173" cy="722" r="0.75" fill="#303030"/><circle cx="188" cy="677" r="0.75" fill="#303030"/><circle cx="188" cy="692" r="0.75" fill="#303030"/><circle cx="188" cy="707" r="0.75" fill="#303030"/><circle cx="188" cy="722" r="0.75" fill="#303030"/><circle cx="203" cy="677" r="0.75" fill="#303030"/><circle cx="203" cy="692" r="0.75" fill="#303030"/><circle cx="203" cy="707" r="0.75" fill="#303030"/><circle cx="203" cy="722" r="0.75" fill="#303030"/><circle cx="218" cy="677" r="0.75" fill="#303030"/><circle cx="218" cy="692" r="0.75" fill="#303030"/><circle cx="218" cy="707" r="0.75" fill="#303030"/><circle cx="218" cy="722" r="0.75" fill="#303030"/><circle cx="233" cy="677" r="0.75" fill="#303030"/><circle cx="233" cy="692" r="0.75" fill="#303030"/><circle cx="233" cy="707" r="0.75" fill="#303030"/><circle cx="233" cy="722" r="0.75" fill="#303030"/><circle cx="248" cy="677" r="0.75" fill="#303030"/><circle cx="248" cy="692" r="0.75" fill="#303030"/><circle cx="248" cy="707" r="0.75" fill="#303030"/><circle cx="248" cy="722" r="0.75" fill="#303030"/><circle cx="263" cy="677" r="0.75" fill="#303030"/><circle cx="263" cy="692" r="0.75" fill="#303030"/><circle cx="263" cy="707" r="0.75" fill="#303030"/><circle cx="263" cy="722" r="0.75" fill="#303030"/><circle cx="278" cy="677" r="0.75" fill="#303030"/><circle cx="278" cy="692" r="0.75" fill="#303030"/><circle cx="278" cy="707" r="0.75" fill="#303030"/><circle cx="278" cy="722" r="0.75" fill="#303030"/><circle cx="293" cy="677" r="0.75" fill="#303030"/><circle cx="293" cy="692" r="0.75" fill="#303030"/><circle cx="293" cy="707" r="0.75" fill="#303030"/><circle cx="293" cy="722" r="0.75" fill="#303030"/><circle cx="308" cy="677" r="0.75" fill="#303030"/><circle cx="308" cy="692" r="0.75" fill="#303030"/><circle cx="308" cy="707" r="0.75" fill="#303030"/><circle cx="308" cy="722" r="0.75" fill="#303030"/><circle cx="323" cy="677" r="0.75" fill="#303030"/><circle cx="323" cy="692" r="0.75" fill="#303030"/><circle cx="323" cy="707" r="0.75" fill="#303030"/><circle cx="323" cy="722" r="0.75" fill="#303030"/><circle cx="338" cy="677" r="0.75" fill="#303030"/><circle cx="338" cy="692" r="0.75" fill="#303030"/><circle cx="338" cy="707" r="0.75" fill="#303030"/><circle cx="338" cy="722" r="0.75" fill="#303030"/><circle cx="353" cy="677" r="0.75" fill="#303030"/><circle cx="353" cy="692" r="0.75" fill="#303030"/><circle cx="353" cy="707" r="0.75" fill="#303030"/><circle cx="353" cy="722" r="0.75" fill="#303030"/><circle cx="368" cy="677" r="0.75" fill="#303030"/><circle cx="368" cy="692" r="0.75" fill="#303030"/><circle cx="368" cy="707" r="0.75" fill="#303030"/><circle cx="368" cy="722" r="0.75" fill="#303030"/><circle cx="383" cy="677" r="0.75" fill="#303030"/><circle cx="383" cy="692" r="0.75" fill="#303030"/><circle cx="383" cy="707" r="0.75" fill="#303030"/><circle cx="383" cy="722" r="0.75" fill="#303030"/><circle cx="398" cy="677" r="0.75" fill="#303030"/><circle cx="398" cy="692" r="0.75" fill="#303030"/><circle cx="398" cy="707" r="0.75" fill="#303030"/><circle cx="398" cy="722" r="0.75" fill="#303030"/><circle cx="413" cy="677" r="0.75" fill="#303030"/><circle cx="413" cy="692" r="0.75" fill="#303030"/><circle cx="413" cy="707" r="0.75" fill="#303030"/><circle cx="413" cy="722" r="0.75" fill="#303030"/><circle cx="428" cy="677" r="0.75" fill="#303030"/><circle cx="428" cy="692" r="0.75" fill="#303030"/><circle cx="428" cy="707" r="0.75" fill="#303030"/><circle cx="428" cy="722" r="0.75" fill="#303030"/><circle cx="443" cy="677" r="0.75" fill="#303030"/><circle cx="443" cy="692" r="0.75" fill="#303030"/><circle cx="443" cy="707" r="0.75" fill="#303030"/><circle cx="443" cy="722" r="0.75" fill="#303030"/><circle cx="458" cy="677" r="0.75" fill="#303030"/><circle cx="458" cy="692" r="0.75" fill="#303030"/><circle cx="458" cy="707" r="0.75" fill="#303030"/><circle cx="458" cy="722" r="0.75" fill="#303030"/><circle cx="473" cy="677" r="0.75" fill="#303030"/><circle cx="473" cy="692" r="0.75" fill="#303030"/><circle cx="473" cy="707" r="0.75" fill="#303030"/><circle cx="473" cy="722" r="0.75" fill="#303030"/><circle cx="488" cy="677" r="0.75" fill="#303030"/><circle cx="488" cy="692" r="0.75" fill="#303030"/><circle cx="488" cy="707" r="0.75" fill="#303030"/><circle cx="488" cy="722" r="0.75" fill="#303030"/><circle cx="503" cy="677" r="0.75" fill="#303030"/><circle cx="503" cy="692" r="0.75" fill="#303030"/><circle cx="503" cy="707" r="0.75" fill="#303030"/><circle cx="503" cy="722" r="0.75" fill="#303030"/><circle cx="518" cy="677" r="0.75" fill="#303030"/><circle cx="518" cy="692" r="0.75" fill="#303030"/><circle cx="518" cy="707" r="0.75" fill="#303030"/><circle cx="518" cy="722" r="0.75" fill="#303030"/><circle cx="533" cy="677" r="0.75" fill="#303030"/><circle cx="533" cy="692" r="0.75" fill="#303030"/><circle cx="533" cy="707" r="0.75" fill="#303030"/><circle cx="533" cy="722" r="0.75" fill="#303030"/><circle cx="548" cy="677" r="0.75" fill="#303030"/><circle cx="548" cy="692" r="0.75" fill="#303030"/><circle cx="548" cy="707" r="0.75" fill="#303030"/><circle cx="548" cy="722" r="0.75" fill="#303030"/><circle cx="563" cy="677" r="0.75" fill="#303030"/><circle cx="563" cy="692" r="0.75" fill="#303030"/><circle cx="563" cy="707" r="0.75" fill="#303030"/><circle cx="563" cy="722" r="0.75" fill="#303030"/><circle cx="578" cy="677" r="0.75" fill="#303030"/><circle cx="578" cy="692" r="0.75" fill="#303030"/><circle cx="578" cy="707" r="0.75" fill="#303030"/><circle cx="578" cy="722" r="0.75" fill="#303030"/><circle cx="593" cy="677" r="0.75" fill="#303030"/><circle cx="593" cy="692" r="0.75" fill="#303030"/><circle cx="593" cy="707" r="0.75" fill="#303030"/><circle cx="593" cy="722" r="0.75" fill="#303030"/><circle cx="608" cy="677" r="0.75" fill="#303030"/><circle cx="608" cy="692" r="0.75" fill="#303030"/><circle cx="608" cy="707" r="0.75" fill="#303030"/><circle cx="608" cy="722" r="0.75" fill="#303030"/><circle cx="623" cy="677" r="0.75" fill="#303030"/><circle cx="623" cy="692" r="0.75" fill="#303030"/><circle cx="623" cy="707" r="0.75" fill="#303030"/><circle cx="623" cy="722" r="0.75" fill="#303030"/><circle cx="638" cy="677" r="0.75" fill="#303030"/><circle cx="638" cy="692" r="0.75" fill="#303030"/><circle cx="638" cy="707" r="0.75" fill="#303030"/><circle cx="638" cy="722" r="0.75" fill="#303030"/><circle cx="653" cy="677" r="0.75" fill="#303030"/><circle cx="653" cy="692" r="0.75" fill="#303030"/><circle cx="653" cy="707" r="0.75" fill="#303030"/><circle cx="653" cy="722" r="0.75" fill="#303030"/><circle cx="668" cy="677" r="0.75" fill="#303030"/><circle cx="668" cy="692" r="0.75" fill="#303030"/><circle cx="668" cy="707" r="0.75" fill="#303030"/><circle cx="668" cy="722" r="0.75" fill="#303030"/><circle cx="683" cy="677" r="0.75" fill="#303030"/><circle cx="683" cy="692" r="0.75" fill="#303030"/><circle cx="683" cy="707" r="0.75" fill="#303030"/><circle cx="683" cy="722" r="0.75" fill="#303030"/><circle cx="698" cy="677" r="0.75" fill="#303030"/><circle cx="698" cy="692" r="0.75" fill="#303030"/><circle cx="698" cy="707" r="0.75" fill="#303030"/><circle cx="698" cy="722" r="0.75" fill="#303030"/><circle cx="713" cy="677" r="0.75" fill="#303030"/><circle cx="713" cy="692" r="0.75" fill="#303030"/><circle cx="713" cy="707" r="0.75" fill="#303030"/><circle cx="713" cy="722" r="0.75" fill="#303030"/><circle cx="728" cy="677" r="0.75" fill="#303030"/><circle cx="728" cy="692" r="0.75" fill="#303030"/><circle cx="728" cy="707" r="0.75" fill="#303030"/><circle cx="728" cy="722" r="0.75" fill="#303030"/><circle cx="743" cy="677" r="0.75" fill="#303030"/><circle cx="743" cy="692" r="0.75" fill="#303030"/><circle cx="743" cy="707" r="0.75" fill="#303030"/><circle cx="743" cy="722" r="0.75" fill="#303030"/><circle cx="758" cy="677" r="0.75" fill="#303030"/><circle cx="758" cy="692" r="0.75" fill="#303030"/><circle cx="758" cy="707" r="0.75" fill="#303030"/><circle cx="758" cy="722" r="0.75" fill="#303030"/><circle cx="773" cy="677" r="0.75" fill="#303030"/><circle cx="773" cy="692" r="0.75" fill="#303030"/><circle cx="773" cy="707" r="0.75" fill="#303030"/><circle cx="773" cy="722" r="0.75" fill="#303030"/><circle cx="788" cy="677" r="0.75" fill="#303030"/><circle cx="788" cy="692" r="0.75" fill="#303030"/><circle cx="788" cy="707" r="0.75" fill="#303030"/><circle cx="788" cy="722" r="0.75" fill="#303030"/><circle cx="803" cy="677" r="0.75" fill="#303030"/><circle cx="803" cy="692" r="0.75" fill="#303030"/><circle cx="803" cy="707" r="0.75" fill="#303030"/><circle cx="803" cy="722" r="0.75" fill="#303030"/><circle cx="818" cy="677" r="0.75" fill="#303030"/><circle cx="818" cy="692" r="0.75" fill="#303030"/><circle cx="818" cy="707" r="0.75" fill="#303030"/><circle cx="818" cy="722" r="0.75" fill="#303030"/><circle cx="833" cy="677" r="0.75" fill="#303030"/><circle cx="833" cy="692" r="0.75" fill="#303030"/><circle cx="833" cy="707" r="0.75" fill="#303030"/><circle cx="833" cy="722" r="0.75" fill="#303030"/><circle cx="848" cy="677" r="0.75" fill="#303030"/><circle cx="848" cy="692" r="0.75" fill="#303030"/><circle cx="848" cy="707" r="0.75" fill="#303030"/><circle cx="848" cy="722" r="0.75" fill="#303030"/><circle cx="863" cy="677" r="0.75" fill="#303030"/><circle cx="863" cy="692" r="0.75" fill="#303030"/><circle cx="863" cy="707" r="0.75" fill="#303030"/><circle cx="863" cy="722" r="0.75" fill="#303030"/><circle cx="878" cy="677" r="0.75" fill="#303030"/><circle cx="878" cy="692" r="0.75" fill="#303030"/><circle cx="878" cy="707" r="0.75" fill="#303030"/><circle cx="878" cy="722" r="0.75" fill="#303030"/><circle cx="893" cy="677" r="0.75" fill="#303030"/><circle cx="893" cy="692" r="0.75" fill="#303030"/><circle cx="893" cy="707" r="0.75" fill="#303030"/><circle cx="893" cy="722" r="0.75" fill="#303030"/><circle cx="908" cy="677" r="0.75" fill="#303030"/><circle cx="908" cy="692" r="0.75" fill="#303030"/><circle cx="908" cy="707" r="0.75" fill="#303030"/><circle cx="908" cy="722" r="0.75" fill="#303030"/><circle cx="923" cy="677" r="0.75" fill="#303030"/><circle cx="923" cy="692" r="0.75" fill="#303030"/><circle cx="923" cy="707" r="0.75" fill="#303030"/><circle cx="923" cy="722" r="0.75" fill="#303030"/><circle cx="938" cy="677" r="0.75" fill="#303030"/><circle cx="938" cy="692" r="0.75" fill="#303030"/><circle cx="938" cy="707" r="0.75" fill="#303030"/><circle cx="938" cy="722" r="0.75" fill="#303030"/><circle cx="953" cy="677" r="0.75" fill="#303030"/><circle cx="953" cy="692" r="0.75" fill="#303030"/><circle cx="953" cy="707" r="0.75" fill="#303030"/><circle cx="953" cy="722" r="0.75" fill="#303030"/><circle cx="968" cy="677" r="0.75" fill="#303030"/><circle cx="968" cy="692" r="0.75" fill="#303030"/><circle cx="968" cy="707" r="0.75" fill="#303030"/><circle cx="968" cy="722" r="0.75" fill="#303030"/><circle cx="983" cy="677" r="0.75" fill="#303030"/><circle cx="983" cy="692" r="0.75" fill="#303030"/><circle cx="983" cy="707" r="0.75" fill="#303030"/><circle cx="983" cy="722" r="0.75" fill="#303030"/><circle cx="998" cy="677" r="0.75" fill="#303030"/><circle cx="998" cy="692" r="0.75" fill="#303030"/><circle cx="998" cy="707" r="0.75" fill="#303030"/><circle cx="998" cy="722" r="0.75" fill="#303030"/><circle cx="1013" cy="677" r="0.75" fill="#303030"/><circle cx="1013" cy="692" r="0.75" fill="#303030"/><circle cx="1013" cy="707" r="0.75" fill="#303030"/><circle cx="1013" cy="722" r="0.75" fill="#303030"/><circle cx="1028" cy="677" r="0.75" fill="#303030"/><circle cx="1028" cy="692" r="0.75" fill="#303030"/><circle cx="1028" cy="707" r="0.75" fill="#303030"/><circle cx="1028" cy="722" r="0.75" fill="#303030"/><circle cx="1043" cy="677" r="0.75" fill="#303030"/><circle cx="1043" cy="692" r="0.75" fill="#303030"/><circle cx="1043" cy="707" r="0.75" fill="#303030"/><circle cx="1043" cy="722" r="0.75" fill="#303030"/><circle cx="1058" cy="677" r="0.75" fill="#303030"/><circle cx="1058" cy="692" r="0.75" fill="#303030"/><circle cx="1058" cy="707" r="0.75" fill="#303030"/><circle cx="1058" cy="722" r="0.75" fill="#303030"/><circle cx="1073" cy="677" r="0.75" fill="#303030"/><circle cx="1073" cy="692" r="0.75" fill="#303030"/><circle cx="1073" cy="707" r="0.75" fill="#303030"/><circle cx="1073" cy="722" r="0.75" fill="#303030"/><circle cx="1088" cy="677" r="0.75" fill="#303030"/><circle cx="1088" cy="692" r="0.75" fill="#303030"/><circle cx="1088" cy="707" r="0.75" fill="#303030"/><circle cx="1088" cy="722" r="0.75" fill="#303030"/><circle cx="1103" cy="677" r="0.75" fill="#303030"/><circle cx="1103" cy="692" r="0.75" fill="#303030"/><circle cx="1103" cy="707" r="0.75" fill="#303030"/><circle cx="1103" cy="722" r="0.75" fill="#303030"/><circle cx="1118" cy="677" r="0.75" fill="#303030"/><circle cx="1118" cy="692" r="0.75" fill="#303030"/><circle cx="1118" cy="707" r="0.75" fill="#303030"/><circle cx="1118" cy="722" r="0.75" fill="#303030"/></svg></div><div class="a" style="left:1px;top:657px;width:1128px;height:16px;background:#1f1f1f;border-radius:4px;"></div><div class="a" style="left:5px;top:657.7px;width:18px;height:12.8px;background:#282828;border-radius:3px;"></div><svg class="a" style="left:6.5px;top:659px" width="11" height="11" viewBox="0 0 11 11"><circle cx="5.5" cy="5.5" r="4.3" fill="none" stroke="#ddd" stroke-width="1"/><path d="M3,1.5 L5,4" stroke="#ddd" stroke-width="1.2"/></svg><svg class="a" style="left:17px;top:662.5px" width="6" height="4" viewBox="0 0 6 4"><path d="M0.5,0.5 L3,3 L5.5,0.5" fill="none" stroke="#cfcfcf" stroke-width="1"/></svg><div class="a" style="left:26.7px;top:657.7px;width:56px;height:12.8px;background:#282828;border-radius:3px;"></div><svg class="a" style="left:29px;top:659px" width="10" height="10" viewBox="0 0 10 10"><path d="M0.5,2.5 L0.5,0.5 L2.5,0.5 M7.5,0.5 L9.5,0.5 L9.5,2.5 M9.5,7.5 L9.5,9.5 L7.5,9.5 M2.5,9.5 L0.5,9.5 L0.5,7.5" fill="none" stroke="#ccc" stroke-width="0.8"/><rect x="2" y="2" width="6" height="6" fill="#eee"/></svg><div class="t" style="left:42.5px;top:657.5px;font-size:8px;color:#d8d8d8;letter-spacing:-0.35px;">Object</div><svg class="a" style="left:75px;top:662.5px" width="6" height="4" viewBox="0 0 6 4"><path d="M0.5,0.5 L3,3 L5.5,0.5" fill="none" stroke="#cfcfcf" stroke-width="1"/></svg><div class="t" style="left:90px;top:657.5px;font-size:8px;color:#d8d8d8;letter-spacing:-0.35px;">View</div><div class="t" style="left:114.8px;top:657.5px;font-size:8px;color:#d8d8d8;letter-spacing:-0.35px;">Select</div><div class="t" style="left:144.5px;top:657.5px;font-size:8px;color:#d8d8d8;letter-spacing:-0.35px;">Add</div><div class="t" style="left:166.6px;top:657.5px;font-size:8px;color:#d8d8d8;letter-spacing:-0.35px;">Node</div><div class="a" style="left:479px;top:658px;width:48px;height:12px;background:#282828;border-radius:3px;"></div><div class="t" style="left:484px;top:657.5px;font-size:8px;color:#777;letter-spacing:-0.35px;">Slot</div><svg class="a" style="left:519px;top:662.5px" width="6" height="4" viewBox="0 0 6 4"><path d="M0.5,0.5 L3,3 L5.5,0.5" fill="none" stroke="#666" stroke-width="1"/></svg><svg class="a" style="left:532px;top:659px" width="14" height="10" viewBox="0 0 14 10"><circle cx="5" cy="5" r="4.3" fill="#ddd"/><path d="M1,5 L9,5 M5,1 Q2,5 5,9" stroke="#333" fill="none" stroke-width="0.9"/></svg><svg class="a" style="left:540px;top:662.5px" width="6" height="4" viewBox="0 0 6 4"><path d="M0.5,0.5 L3,3 L5.5,0.5" fill="none" stroke="#cfcfcf" stroke-width="1"/></svg><div class="a" style="left:549.5px;top:658px;width:71.5px;height:12px;background:#3a3a3a;border-radius:3px;"></div><svg class="a" style="left:552px;top:660px" width="8" height="8" viewBox="0 0 8 8"><path d="M4,0.5 L4,7.5 M0.5,4 L7.5,4" stroke="#888" stroke-width="0.9"/></svg><div class="t" style="left:490px;width:200px;text-align:center;top:657.5px;font-size:8px;color:#888;letter-spacing:-0.35px;">New</div><svg class="a" style="left:625px;top:659px" width="10" height="10" viewBox="0 0 10 10"><path d="M5.5,1 L9,4.5 L7.5,5.5 L5.5,8.5 L1.5,4.5 L4.5,2.5 Z M3,7 L0.5,9.5" fill="none" stroke="#bbb" stroke-width="0.8"/></svg><svg class="a" style="left:1px;top:681px" width="4" height="6" viewBox="0 0 4 6"><path d="M0.5,0.5 L3,3 L0.5,5.5" fill="none" stroke="#aaa" stroke-width="0.9"/></svg><div class="a" style="left:1051px;top:658.4px;width:12px;height:12px;background:#282828;border-radius:3px;"></div><svg class="a" style="left:1052px;top:659.5px" width="10" height="10" viewBox="0 0 10 10"><path d="M5,9 L5,1.5 M2,4 L5,1 L8,4" fill="none" stroke="#888" stroke-width="0.9"/><path d="M1,9 L5,9" stroke="#888"/></svg><div class="a" style="left:1066.5px;top:658.4px;width:30px;height:12px;background:#282828;border-radius:3px;"></div><div class="a" style="left:1066.5px;top:658.4px;width:12.5px;height:12px;background:#545454;border-radius:3px;"></div><svg class="a" style="left:1067.5px;top:659.5px" width="10" height="10" viewBox="0 0 10 10"><path d="M2,8 L2,5 A3,3 0 0 1 8,5 L8,8" fill="none" stroke="#aaa" stroke-width="1.6"/></svg><svg class="a" style="left:1080px;top:659.5px" width="11" height="10" viewBox="0 0 11 10"><path d="M3,0 L3,10 M0,6 L10,6" stroke="#ddd" stroke-width="1.4"/><rect x="5" y="1" width="3" height="3" fill="#eee"/></svg><svg class="a" style="left:1090px;top:663px" width="6" height="4" viewBox="0 0 6 4"><path d="M0.5,0.5 L3,3 L5.5,0.5" fill="none" stroke="#cfcfcf" stroke-width="1"/></svg><div class="a" style="left:1101px;top:658.4px;width:22.5px;height:12px;background:#282828;border-radius:3px;"></div><div class="a" style="left:1101px;top:658.4px;width:12px;height:12px;background:#4772b3;border-radius:3px;"></div><svg class="a" style="left:1102px;top:659.5px" width="10" height="10" viewBox="0 0 10 10"><circle cx="6" cy="4.5" r="3.5" fill="#ddd"/><circle cx="4" cy="6" r="3.5" fill="none" stroke="#eee" stroke-width="1"/></svg><svg class="a" style="left:1115px;top:663px" width="6" height="4" viewBox="0 0 6 4"><path d="M0.5,0.5 L3,3 L5.5,0.5" fill="none" stroke="#cfcfcf" stroke-width="1"/></svg><div class="a" style="left:992.5px;top:673px;width:135.3px;height:52.5px;background:#303030;border-radius:0px;"></div><div class="a" style="left:994px;top:674px;width:130.5px;height:52px;background:#3d3d3d;border-radius:4px;border-radius:4px 4px 4px 0"></div><svg class="a" style="left:1001px;top:678.5px" width="6" height="4" viewBox="0 0 6 4"><path d="M0.5,0.5 L3,3 L5.5,0.5" fill="none" stroke="#cfcfcf" stroke-width="1"/></svg><div class="t" style="left:1010px;top:673.8px;font-size:8px;color:#e0e0e0;letter-spacing:-0.35px;">Active Tool</div><svg class="a" style="left:1112.5px;top:678.5px" width="8" height="5" viewBox="0 0 8 5"><path d="M0,1 L8,1 M0,3.5 L8,3.5" stroke="#7a7a7a" stroke-width="0.9" stroke-dasharray="1 1"/></svg><svg class="a" style="left:1005px;top:691px" width="16" height="15" viewBox="0 0 16 15"><rect x="1" y="1" width="13" height="13" fill="none" stroke="#e8a33a" stroke-width="1" stroke-dasharray="2 1.5"/><path d="M5.5,4 L10.5,7.5 L7.5,8 L6,11 Z" fill="#fff"/></svg><div class="t" style="left:1026px;top:691.5px;font-size:8px;color:#dcdcdc;letter-spacing:-0.35px;">Select Box</div><div class="a" style="left:1002px;top:711px;width:35px;height:10.5px;background:#3f3f3f;border-radius:2px;"></div><div class="a" style="left:1002px;top:711px;width:11.5px;height:10.5px;background:#4772b3;border-radius:2px;"></div><svg class="a" style="left:1003px;top:712px" width="9" height="8" viewBox="0 0 9 8"><rect x="0.5" y="0.5" width="8" height="7" fill="none" stroke="#fff" stroke-width="0.9" stroke-dasharray="1.5 1.2"/></svg><svg class="a" style="left:1014.5px;top:712px" width="10" height="9" viewBox="0 0 10 9"><path d="M0,8 L0,4 L4,4 L4,0 L9,0 L9,5 L5,5 L5,8 Z" fill="#c9c9c9"/></svg><svg class="a" style="left:1026px;top:712px" width="10" height="9" viewBox="0 0 10 9"><path d="M4,0 L9,0 L9,5 L4,5 Z" fill="#c9c9c9"/><path d="M0,4 L0,8 L6,8" fill="none" stroke="#aaa" stroke-width="0.8" stroke-dasharray="1 1"/></svg><div class="a" style="left:1125px;top:680px;width:2.5px;height:39px;background:#454545;border-radius:1px;"></div><div class="a" style="left:500px;top:722.5px;width:486px;height:2px;background:#4a4a4a;border-radius:1px;"></div><div class="a" style="left:987.5px;top:690px;width:2.5px;height:15px;background:#4a4a4a;border-radius:1px;"></div><div class="a" style="left:0px;top:725px;width:1366px;height:14px;background:#1f1f1f;border-radius:0px;"></div><svg class="a" style="left:5.5px;top:726.5px" width="8" height="11" viewBox="0 0 8 11"><rect x="0.5" y="0.5" width="7" height="10" rx="2" fill="none" stroke="#bbb" stroke-width="0.9"/><rect x="0.8" y="0.8" width="3" height="4" fill="#ccc"/></svg><div class="t" style="left:20.5px;top:725.5px;font-size:8px;color:#bdbdbd;letter-spacing:-0.35px;">Select</div><svg class="a" style="left:153px;top:726.5px" width="8" height="11" viewBox="0 0 8 11"><rect x="0.5" y="0.5" width="7" height="10" rx="2" fill="none" stroke="#bbb" stroke-width="0.9"/><rect x="2.8" y="1.5" width="1.4" height="3" fill="#ccc"/></svg><div class="t" style="left:169.7px;top:725.5px;font-size:8px;color:#bdbdbd;letter-spacing:-0.35px;">Rotate View</div><svg class="a" style="left:303px;top:726.5px" width="8" height="11" viewBox="0 0 8 11"><rect x="0.5" y="0.5" width="7" height="10" rx="2" fill="none" stroke="#bbb" stroke-width="0.9"/><rect x="4.2" y="0.8" width="3" height="4" fill="#ccc"/></svg><div class="t" style="left:318.8px;top:725.5px;font-size:8px;color:#bdbdbd;letter-spacing:-0.35px;">Object Context Menu</div><div class="t" style="left:1161px;width:200px;text-align:right;top:725.5px;font-size:8px;color:#9a9a9a;letter-spacing:-0.35px;">3.6.0</div></body></html>
